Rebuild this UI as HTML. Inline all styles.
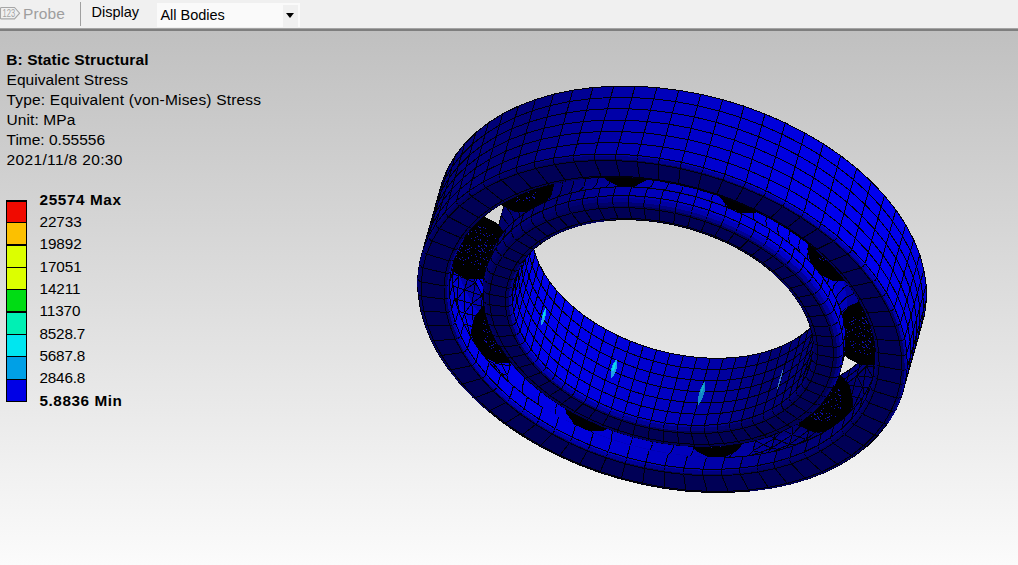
<!DOCTYPE html>
<html><head><meta charset="utf-8"><title>B: Static Structural - Equivalent Stress</title>
<style>
html,body{margin:0;padding:0;}
body{width:1018px;height:565px;overflow:hidden;position:relative;background:#fbfbfb;font-family:"Liberation Sans",sans-serif;}
#tb{position:absolute;left:0;top:0;width:1018px;height:28px;background:#f0f0f0;}
#tbl1{position:absolute;left:0;top:28px;width:1018px;height:1px;background:#a4a4a4;}
#tbl2{position:absolute;left:0;top:29px;width:1018px;height:2px;background:#7e7e7e;}
#vp{position:absolute;left:0;top:31px;width:1018px;height:534px;background:linear-gradient(to bottom,#c0c0c0 0%,#fbfbfb 100%);}
.t{position:absolute;white-space:nowrap;color:#000;font-size:15.5px;line-height:20px;}
.b{font-weight:bold;}
#probe{left:23px;top:3.6px;color:#9e9e9e;font-size:15.5px;letter-spacing:0.15px}
#sep{position:absolute;left:80.4px;top:2px;width:1px;height:24px;background:#a0a0a0;}
#disp{left:91.5px;top:2.3px;font-size:14.5px;}
#dd{position:absolute;left:157px;top:3px;width:143px;height:24px;background:#fafafa;}
#ddb{position:absolute;left:283px;top:5px;width:15px;height:22px;background:#f0f0f0;}
#ddt{left:160.4px;top:5.4px;font-size:14.5px;}
#arrow{position:absolute;left:286px;top:13px;width:0;height:0;border-left:4.5px solid transparent;border-right:4.5px solid transparent;border-top:5px solid #000;}
#lg{position:absolute;left:6px;top:200px;width:21px;height:202px;background:#000;}
#lg div{position:absolute;left:1px;width:19px;}
.l{left:39.5px;font-size:15.3px}
</style></head><body>
<div id="tb"></div><div id="tbl1"></div><div id="tbl2"></div><div id="vp"></div>
<svg style="position:absolute;left:0;top:6px" width="22" height="15" viewBox="0 0 22 15"><path d="M0.5 12.9 V2.5 Q0.5 1.5 1.5 1.5 H14.5 L19.6 7.2 L14.5 12.9 H1.5 Q0.5 12.9 0.5 11.9" fill="none" stroke="#a6a6a6" stroke-width="1.1"/><text x="2.6" y="11" font-size="10.5" fill="#a3a3a3" font-family="Liberation Sans, sans-serif" textLength="12.5" lengthAdjust="spacingAndGlyphs">123</text></svg>
<div class="t" id="probe">Probe</div><div id="sep"></div>
<div class="t" id="disp">Display</div><div id="dd"></div><div id="ddb"></div><div class="t" id="ddt">All Bodies</div><div id="arrow"></div>
<div class="t b" style="left:6.2px;top:50.2px;letter-spacing:0.1px">B: Static Structural</div>
<div class="t" style="left:6.5px;top:70.2px;letter-spacing:0.05px">Equivalent Stress</div>
<div class="t" style="left:6.5px;top:90.2px;letter-spacing:0.19px">Type: Equivalent (von-Mises) Stress</div>
<div class="t" style="left:6.5px;top:110.2px;letter-spacing:0.09px">Unit: MPa</div>
<div class="t" style="left:6.5px;top:130.2px">Time: 0.55556</div>
<div class="t" style="left:6.5px;top:150.2px;letter-spacing:0.36px">2021/11/8 20:30</div>
<div id="lg"><div style="top:2.4px;height:19.8px;background:#f00a00"></div><div style="top:23.2px;height:21.3px;background:#fcc000"></div><div style="top:45.5px;height:21.4px;background:#dcff00"></div><div style="top:67.9px;height:21.3px;background:#dcff00"></div><div style="top:90.2px;height:21.3px;background:#00dc14"></div><div style="top:112.5px;height:21.4px;background:#00f0b4"></div><div style="top:134.9px;height:21.3px;background:#00e6f0"></div><div style="top:157.3px;height:21.3px;background:#00a0e6"></div><div style="top:179.6px;height:21.4px;background:#0000e6"></div></div>
<div class="t l b" style="top:189.5px;letter-spacing:0.62px">25574 Max</div>
<div class="t l" style="top:211.8px;letter-spacing:-0.10px">22733</div>
<div class="t l" style="top:234.2px;letter-spacing:-0.10px">19892</div>
<div class="t l" style="top:256.6px;letter-spacing:-0.10px">17051</div>
<div class="t l" style="top:278.9px;letter-spacing:-0.10px">14211</div>
<div class="t l" style="top:301.2px;letter-spacing:-0.10px">11370</div>
<div class="t l" style="top:323.6px;letter-spacing:-0.20px">8528.7</div>
<div class="t l" style="top:346.0px;letter-spacing:-0.20px">5687.8</div>
<div class="t l" style="top:368.3px;letter-spacing:-0.20px">2846.8</div>
<div class="t l b" style="top:390.6px;letter-spacing:0.55px">5.8836 Min</div>
<svg id="model" width="1018" height="565" viewBox="0 0 1018 565" style="position:absolute;left:0;top:0">
<defs><pattern id="sp" width="24" height="24" patternUnits="userSpaceOnUse"><rect width="24" height="24" fill="#000"/><path d="M0,0h1M0,11h1M0,14h1M0,17h1M0,23h1M1,5h1M1,8h1M2,9h1M2,10h1M3,11h1M3,18h1M4,4h1M4,8h1M4,19h1M5,2h1M5,5h1M5,12h1M6,5h1M6,6h1M6,17h1M7,0h1M7,20h1M9,10h1M9,19h1M10,5h1M11,9h1M11,12h1M12,9h1M12,17h1M12,18h1M13,5h1M13,8h1M13,11h1M15,7h1M15,15h1M15,22h1M18,0h1M19,8h1M19,14h1M19,21h1M20,16h1M21,20h1M22,5h1M22,6h1M22,10h1M22,23h1M23,6h1M23,11h1" transform="translate(0,0.5)" stroke="#1010b0" stroke-width="1"/></pattern></defs><style>#model .k{fill:#000;stroke:#000}#model .kp{fill:url(#sp);stroke:none}#model .e{fill:none}</style>
<g stroke="#000008" stroke-width="1" stroke-linejoin="round" shape-rendering="crispEdges">
<path fill="#0000d0" d="M644,397.1 646.1,389.6 627.4,383.8 625.3,391.3Z"/>
<path fill="#0000ca" d="M663,401.7 665.1,394.2 646.1,389.6 644,397.1Z"/>
<path fill="#0000d5" d="M625.3,391.3 627.4,383.8 609.1,377.1 607,384.6Z"/>
<path fill="#0000c3" d="M682.1,405.2 684.2,397.7 665.1,394.2 663,401.7Z"/>
<path fill="#0000db" d="M607,384.6 609.1,377.1 591.5,369.3 589.3,376.8Z"/>
<path fill="#0000bb" d="M701.2,407.6 703.3,400.1 684.2,397.7 682.1,405.2Z"/>
<path fill="#0000d0" d="M641.9,404.6 644,397.1 625.3,391.3 623.2,398.8Z"/>
<path fill="#0000ca" d="M660.8,409.2 663,401.7 644,397.1 641.9,404.6Z"/>
<path fill="#0000e1" d="M589.3,376.8 591.5,369.3 574.5,360.6 572.4,368.1Z"/>
<path fill="#0000d5" d="M623.2,398.8 625.3,391.3 607,384.6 604.9,392.1Z"/>
<path fill="#0000c3" d="M680,412.7 682.1,405.2 663,401.7 660.8,409.2Z"/>
<path fill="#0000b2" d="M720.1,408.8 722.2,401.3 703.3,400.1 701.2,407.6Z"/>
<path fill="#000097" stroke="#000097" d="M638.4,417.3 641.9,404.6 623.2,398.8 618.8,411.3Z"/>
<path class="e" d="M638.4,417.3L641.9,404.6M641.9,404.6L623.2,398.8M623.2,398.8L618.8,411.3"/>
<path fill="#000093" stroke="#000093" d="M658.2,422.2 660.8,409.2 641.9,404.6 638.4,417.3Z"/>
<path class="e" d="M658.2,422.2L660.8,409.2M660.8,409.2L641.9,404.6M641.9,404.6L638.4,417.3"/>
<path fill="#0000bc" stroke="#0000bc" d="M634.9,429.7 638.4,417.3 618.8,411.3 614.9,423.6Z"/>
<path class="e" d="M634.9,429.7L638.4,417.3M618.8,411.3L614.9,423.6"/>
<path fill="#0000b6" stroke="#0000b6" d="M655.2,434.6 658.2,422.2 638.4,417.3 634.9,429.7Z"/>
<path class="e" d="M655.2,434.6L658.2,422.2M638.4,417.3L634.9,429.7"/>
<path fill="#00009a" stroke="#00009a" d="M618.8,411.3 623.2,398.8 604.9,392.1 599.7,404.3Z"/>
<path class="e" d="M618.8,411.3L623.2,398.8M623.2,398.8L604.9,392.1M604.9,392.1L599.7,404.3"/>
<path fill="#0000db" d="M604.9,392.1 607,384.6 589.3,376.8 587.2,384.3Z"/>
<path fill="#00008e" stroke="#00008e" d="M678.2,425.8 680,412.7 660.8,409.2 658.2,422.2Z"/>
<path class="e" d="M678.2,425.8L680,412.7M680,412.7L660.8,409.2M660.8,409.2L658.2,422.2"/>
<path fill="#0000bb" d="M699.1,415.1 701.2,407.6 682.1,405.2 680,412.7Z"/>
<path fill="#0000c1" stroke="#0000c1" d="M614.9,423.6 618.8,411.3 599.7,404.3 595.4,416.3Z"/>
<path class="e" d="M614.9,423.6L618.8,411.3M599.7,404.3L595.4,416.3"/>
<path fill="#0000b0" stroke="#0000b0" d="M675.7,438.4 678.2,425.8 658.2,422.2 655.2,434.6Z"/>
<path class="e" d="M675.7,438.4L678.2,425.8M658.2,422.2L655.2,434.6"/>
<path fill="#0000e6" d="M572.4,368.1 574.5,360.6 558.4,351.1 556.3,358.6Z"/>
<path fill="#00009f" stroke="#00009f" d="M599.7,404.3 604.9,392.1 587.2,384.3 581.3,396.2Z"/>
<path class="e" d="M599.7,404.3L604.9,392.1M604.9,392.1L587.2,384.3M587.2,384.3L581.3,396.2"/>
<path fill="#000088" stroke="#000088" d="M698.1,428.3 699.1,415.1 680,412.7 678.2,425.8Z"/>
<path class="e" d="M698.1,428.3L699.1,415.1M699.1,415.1L680,412.7M680,412.7L678.2,425.8"/>
<path fill="#0000c7" stroke="#0000c7" d="M595.4,416.3 599.7,404.3 581.3,396.2 576.5,408Z"/>
<path class="e" d="M595.4,416.3L599.7,404.3M581.3,396.2L576.5,408"/>
<path fill="#0000e1" d="M587.2,384.3 589.3,376.8 572.4,368.1 570.3,375.6Z"/>
<path fill="#0000a8" d="M738.7,408.8 740.8,401.3 722.2,401.3 720.1,408.8Z"/>
<path fill="#0000a8" stroke="#0000a8" d="M696.1,440.9 698.1,428.3 678.2,425.8 675.7,438.4Z"/>
<path class="e" d="M696.1,440.9L698.1,428.3M678.2,425.8L675.7,438.4"/>
<path fill="#0000b2" d="M718,416.3 720.1,408.8 701.2,407.6 699.1,415.1Z"/>
<path fill="#0000d0" stroke="#0000d0" d="M632.1,439.6 634.9,429.7 614.9,423.6 612.1,433.4Z"/>
<path class="e" d="M632.1,439.6L634.9,429.7M614.9,423.6L612.1,433.4"/>
<path fill="#0000ca" stroke="#0000ca" d="M652.4,444.5 655.2,434.6 634.9,429.7 632.1,439.6Z"/>
<path class="e" d="M652.4,444.5L655.2,434.6M634.9,429.7L632.1,439.6"/>
<path fill="#0000a4" stroke="#0000a4" d="M581.3,396.2 587.2,384.3 570.3,375.6 563.6,387.1Z"/>
<path class="e" d="M581.3,396.2L587.2,384.3M587.2,384.3L570.3,375.6M570.3,375.6L563.6,387.1"/>
<path fill="#0000d5" stroke="#0000d5" d="M612.1,433.4 614.9,423.6 595.4,416.3 592.6,426.2Z"/>
<path class="e" d="M612.1,433.4L614.9,423.6M595.4,416.3L592.6,426.2"/>
<path fill="#000082" stroke="#000082" d="M717.9,429.6 718,416.3 699.1,415.1 698.1,428.3Z"/>
<path class="e" d="M717.9,429.6L718,416.3M718,416.3L699.1,415.1M699.1,415.1L698.1,428.3"/>
<path fill="#0000c3" stroke="#0000c3" d="M672.9,448.3 675.7,438.4 655.2,434.6 652.4,444.5Z"/>
<path class="e" d="M672.9,448.3L675.7,438.4M655.2,434.6L652.4,444.5"/>
<path fill="#0000cc" stroke="#0000cc" d="M576.5,408 581.3,396.2 563.6,387.1 558.4,398.7Z"/>
<path class="e" d="M576.5,408L581.3,396.2M563.6,387.1L558.4,398.7"/>
<path fill="#0000ea" d="M556.3,358.6 558.4,351.1 543.3,340.8 541.2,348.3Z"/>
<path fill="#0000a0" stroke="#0000a0" d="M716.3,442.2 717.9,429.6 698.1,428.3 696.1,440.9Z"/>
<path class="e" d="M716.3,442.2L717.9,429.6M698.1,428.3L696.1,440.9"/>
<path fill="#0000e6" d="M570.3,375.6 572.4,368.1 556.3,358.6 554.2,366.1Z"/>
<path fill="#0000db" stroke="#0000db" d="M592.6,426.2 595.4,416.3 576.5,408 573.7,417.9Z"/>
<path class="e" d="M592.6,426.2L595.4,416.3M576.5,408L573.7,417.9"/>
<path fill="#0000a8" d="M736.6,416.3 738.7,408.8 720.1,408.8 718,416.3Z"/>
<path fill="#00009e" d="M756.8,407.6 758.9,400.1 740.8,401.3 738.7,408.8Z"/>
<path fill="#0000bb" stroke="#0000bb" d="M693.3,450.8 696.1,440.9 675.7,438.4 672.9,448.3Z"/>
<path class="e" d="M693.3,450.8L696.1,440.9M675.7,438.4L672.9,448.3"/>
<path fill="#0000a7" stroke="#0000a7" d="M563.6,387.1 570.3,375.6 554.2,366.1 546.7,377.1Z"/>
<path class="e" d="M563.6,387.1L570.3,375.6M570.3,375.6L554.2,366.1M554.2,366.1L546.7,377.1"/>
<path fill="#0000d1" stroke="#0000d1" d="M558.4,398.7 563.6,387.1 546.7,377.1 541.2,388.6Z"/>
<path class="e" d="M558.4,398.7L563.6,387.1M546.7,377.1L541.2,388.6"/>
<path fill="#00007c" stroke="#00007c" d="M737.3,429.6 736.6,416.3 718,416.3 717.9,429.6Z"/>
<path class="e" d="M737.3,429.6L736.6,416.3M736.6,416.3L718,416.3M718,416.3L717.9,429.6"/>
<path fill="#0000e1" stroke="#0000e1" d="M573.7,417.9 576.5,408 558.4,398.7 555.6,408.6Z"/>
<path class="e" d="M573.7,417.9L576.5,408M558.4,398.7L555.6,408.6"/>
<path fill="#000098" stroke="#000098" d="M736.2,442.2 737.3,429.6 717.9,429.6 716.3,442.2Z"/>
<path class="e" d="M736.2,442.2L737.3,429.6M717.9,429.6L716.3,442.2"/>
<path fill="#0000b2" stroke="#0000b2" d="M713.5,452.1 716.3,442.2 696.1,440.9 693.3,450.8Z"/>
<path class="e" d="M713.5,452.1L716.3,442.2M696.1,440.9L693.3,450.8"/>
<path fill="#0000ea" d="M554.2,366.1 556.3,358.6 541.2,348.3 539.1,355.8Z"/>
<path fill="#0000cf" stroke="#0000cf" d="M630.4,445.3 632.1,439.6 612.1,433.4 610.9,439.3Z"/>
<path class="e" d="M630.4,445.3L632.1,439.6M612.1,433.4L610.9,439.3"/>
<path fill="#0000ca" stroke="#0000ca" d="M650.3,450.1 652.4,444.5 632.1,439.6 630.4,445.3Z"/>
<path class="e" d="M650.3,450.1L652.4,444.5M632.1,439.6L630.4,445.3"/>
<path fill="#0000ed" d="M541.2,348.3 543.3,340.8 529.3,329.8 527.2,337.3Z"/>
<path fill="#00009e" d="M754.7,415.1 756.8,407.6 738.7,408.8 736.6,416.3Z"/>
<path fill="#0000d4" stroke="#0000d4" d="M610.9,439.3 612.1,433.4 592.6,426.2 591.8,432.2Z"/>
<path class="e" d="M610.9,439.3L612.1,433.4M592.6,426.2L591.8,432.2"/>
<path fill="#0000c3" stroke="#0000c3" d="M670.3,453.8 672.9,448.3 652.4,444.5 650.3,450.1Z"/>
<path class="e" d="M670.3,453.8L672.9,448.3M652.4,444.5L650.3,450.1"/>
<path fill="#0000aa" stroke="#0000aa" d="M546.7,377.1 554.2,366.1 539.1,355.8 531,366.4Z"/>
<path class="e" d="M546.7,377.1L554.2,366.1M554.2,366.1L539.1,355.8M539.1,355.8L531,366.4"/>
<path fill="#000093" d="M774.3,405.3 776.4,397.8 758.9,400.1 756.8,407.6Z"/>
<path fill="#0000e6" stroke="#0000e6" d="M555.6,408.6 558.4,398.7 541.2,388.6 538.4,398.4Z"/>
<path class="e" d="M555.6,408.6L558.4,398.7M541.2,388.6L538.4,398.4"/>
<path fill="#0000d5" stroke="#0000d5" d="M541.2,388.6 546.7,377.1 531,366.4 525,377.5Z"/>
<path class="e" d="M541.2,388.6L546.7,377.1M531,366.4L525,377.5"/>
<path fill="#000075" stroke="#000075" d="M756.3,428.4 754.7,415.1 736.6,416.3 737.3,429.6Z"/>
<path class="e" d="M756.3,428.4L754.7,415.1M754.7,415.1L736.6,416.3M736.6,416.3L737.3,429.6"/>
<path fill="#0000d9" stroke="#0000d9" d="M591.8,432.2 592.6,426.2 573.7,417.9 573.4,424.1Z"/>
<path class="e" d="M591.8,432.2L592.6,426.2M573.7,417.9L573.4,424.1"/>
<path fill="#0000bc" stroke="#0000bc" d="M690.2,456.3 693.3,450.8 672.9,448.3 670.3,453.8Z"/>
<path class="e" d="M690.2,456.3L693.3,450.8M672.9,448.3L670.3,453.8"/>
<path fill="#0000a8" stroke="#0000a8" d="M733.4,452.1 736.2,442.2 716.3,442.2 713.5,452.1Z"/>
<path class="e" d="M733.4,452.1L736.2,442.2M716.3,442.2L713.5,452.1"/>
<path fill="#00008e" stroke="#00008e" d="M755.6,441 756.3,428.4 737.3,429.6 736.2,442.2Z"/>
<path class="e" d="M755.6,441L756.3,428.4M737.3,429.6L736.2,442.2"/>
<path fill="#0000ed" d="M539.1,355.8 541.2,348.3 527.2,337.3 525.1,344.8Z"/>
<path fill="#0000df" stroke="#0000df" d="M573.4,424.1 573.7,417.9 555.6,408.6 555.6,415.1Z"/>
<path class="e" d="M573.4,424.1L573.7,417.9M555.6,408.6L555.6,415.1"/>
<path fill="#000093" d="M772.2,412.8 774.3,405.3 756.8,407.6 754.7,415.1Z"/>
<path fill="#0000ef" d="M527.2,337.3 529.3,329.8 516.6,318.2 514.5,325.7Z"/>
<path fill="#0000b4" stroke="#0000b4" d="M710,457.5 713.5,452.1 693.3,450.8 690.2,456.3Z"/>
<path class="e" d="M710,457.5L713.5,452.1M693.3,450.8L690.2,456.3"/>
<path fill="#0000ac" stroke="#0000ac" d="M531,366.4 539.1,355.8 525.1,344.8 516.4,354.9Z"/>
<path class="e" d="M531,366.4L539.1,355.8M539.1,355.8L525.1,344.8M525.1,344.8L516.4,354.9"/>
<path fill="#000056" d="M621.1,479.1 621.4,478.1 600.3,471.7 599.8,472.6Z"/>
<path fill="#000056" d="M642.7,484.4 642.8,483.3 621.4,478.1 621.1,479.1Z"/>
<path fill="#0000ea" stroke="#0000ea" d="M538.4,398.4 541.2,388.6 525,377.5 522.2,387.4Z"/>
<path class="e" d="M538.4,398.4L541.2,388.6M525,377.5L522.2,387.4"/>
<path fill="#000056" d="M599.8,472.6 600.3,471.7 579.7,464 579.1,464.9Z"/>
<path fill="#000088" d="M791.1,401.8 793.2,394.3 776.4,397.8 774.3,405.3Z"/>
<path fill="#0000d7" stroke="#0000d7" d="M525,377.5 531,366.4 516.4,354.9 510.1,365.8Z"/>
<path class="e" d="M525,377.5L531,366.4M516.4,354.9L510.1,365.8"/>
<path fill="#000056" d="M664.5,488.4 664.3,487.3 642.8,483.3 642.7,484.4Z"/>
<path fill="#00006e" stroke="#00006e" d="M774.6,425.9 772.2,412.8 754.7,415.1 756.3,428.4Z"/>
<path class="e" d="M774.6,425.9L772.2,412.8M772.2,412.8L754.7,415.1M754.7,415.1L756.3,428.4M774.6,425.9L754.7,415.1M772.2,412.8L756.3,428.4"/>
<path fill="#00009e" stroke="#00009e" d="M752.8,450.8 755.6,441 736.2,442.2 733.4,452.1Z"/>
<path class="e" d="M752.8,450.8L755.6,441M736.2,442.2L733.4,452.1"/>
<path fill="#0000bb" stroke="#0000bb" d="M630.1,445.9 630.4,445.3 610.9,439.3 611.4,440.2Z"/>
<path class="e" d="M630.1,445.9L630.4,445.3M610.9,439.3L611.4,440.2"/>
<path fill="#0000b6" stroke="#0000b6" d="M649.1,450.6 650.3,450.1 630.4,445.3 630.1,445.9Z"/>
<path class="e" d="M649.1,450.6L650.3,450.1M630.4,445.3L630.1,445.9"/>
<path fill="#0000e3" stroke="#0000e3" d="M555.6,415.1 555.6,408.6 538.4,398.4 538.8,405.1Z"/>
<path class="e" d="M555.6,415.1L555.6,408.6M538.4,398.4L538.8,405.1"/>
<path fill="#0000be" stroke="#0000be" d="M611.4,440.2 610.9,439.3 591.8,432.2 593.2,433.4Z"/>
<path class="e" d="M611.4,440.2L610.9,439.3M591.8,432.2L593.2,433.4"/>
<path fill="#000084" stroke="#000084" d="M774.3,438.5 774.6,425.9 756.3,428.4 755.6,441Z"/>
<path class="e" d="M774.3,438.5L774.6,425.9M756.3,428.4L755.6,441M774.3,438.5L756.3,428.4M774.6,425.9L755.6,441"/>
<path fill="#000056" d="M579.1,464.9 579.7,464 559.8,455.3 558.9,456Z"/>
<path fill="#0000b2" stroke="#0000b2" d="M668.2,454.1 670.3,453.8 650.3,450.1 649.1,450.6Z"/>
<path class="e" d="M668.2,454.1L670.3,453.8M650.3,450.1L649.1,450.6"/>
<path fill="#0000ab" stroke="#0000ab" d="M729.4,457.5 733.4,452.1 713.5,452.1 710,457.5Z"/>
<path class="e" d="M729.4,457.5L733.4,452.1M713.5,452.1L710,457.5"/>
<path fill="#000056" d="M686.2,491.1 685.9,490 664.3,487.3 664.5,488.4Z"/>
<path fill="#0000ef" d="M525.1,344.8 527.2,337.3 514.5,325.7 512.4,333.2Z"/>
<path fill="#0000c1" stroke="#0000c1" d="M593.2,433.4 591.8,432.2 573.4,424.1 575.5,425.7Z"/>
<path class="e" d="M593.2,433.4L591.8,432.2M573.4,424.1L575.5,425.7"/>
<path fill="#0000ac" stroke="#0000ac" d="M687.3,456.4 690.2,456.3 670.3,453.8 668.2,454.1Z"/>
<path class="e" d="M687.3,456.4L690.2,456.3M670.3,453.8L668.2,454.1"/>
<path fill="#000088" d="M788.9,409.3 791.1,401.8 774.3,405.3 772.2,412.8Z"/>
<path fill="#0000ed" stroke="#0000ed" d="M522.2,387.4 525,377.5 510.1,365.8 507.3,375.6Z"/>
<path class="e" d="M522.2,387.4L525,377.5M510.1,365.8L507.3,375.6"/>
<path fill="#000056" d="M558.9,456 559.8,455.3 540.7,445.5 539.7,446.2Z"/>
<path fill="#0000ad" stroke="#0000ad" d="M516.4,354.9 525.1,344.8 512.4,333.2 503,342.8Z"/>
<path class="e" d="M516.4,354.9L525.1,344.8M525.1,344.8L512.4,333.2M512.4,333.2L503,342.8M516.4,354.9L512.4,333.2M525.1,344.8L503,342.8"/>
<path fill="#0000ef" d="M514.5,325.7 516.6,318.2 505.2,306.1 503.1,313.6Z"/>
<path fill="#000056" d="M707.8,492.4 707.2,491.3 685.9,490 686.2,491.1Z"/>
<path fill="#000056" d="M621.4,478.1 625.2,463.8 606.1,457.9 600.3,471.7Z"/>
<path fill="#000056" d="M642.8,483.3 644.5,468.5 625.2,463.8 621.4,478.1Z"/>
<path fill="#0000e7" stroke="#0000e7" d="M538.8,405.1 538.4,398.4 522.2,387.4 523.1,394.3Z"/>
<path class="e" d="M538.8,405.1L538.4,398.4M522.2,387.4L523.1,394.3M523.1,394.3L538.8,405.1"/>
<path fill="#0000c5" stroke="#0000c5" d="M575.5,425.7 573.4,424.1 555.6,415.1 558.6,417Z"/>
<path class="e" d="M575.5,425.7L573.4,424.1M555.6,415.1L558.6,417"/>
<path fill="#000093" stroke="#000093" d="M771.5,448.3 774.3,438.5 755.6,441 752.8,450.8Z"/>
<path class="e" d="M771.5,448.3L774.3,438.5M755.6,441L752.8,450.8M771.5,448.3L755.6,441M774.3,438.5L752.8,450.8"/>
<path fill="#0000d9" stroke="#0000d9" d="M510.1,365.8 516.4,354.9 503,342.8 496.4,353.4Z"/>
<path class="e" d="M510.1,365.8L516.4,354.9M503,342.8L496.4,353.4M510.1,365.8L503,342.8M516.4,354.9L496.4,353.4"/>
<path fill="#000067" stroke="#000067" d="M792,422.3 788.9,409.3 772.2,412.8 774.6,425.9Z"/>
<path class="e" d="M792,422.3L788.9,409.3M788.9,409.3L772.2,412.8M772.2,412.8L774.6,425.9M792,422.3L772.2,412.8M788.9,409.3L774.6,425.9"/>
<path fill="#000056" d="M600.3,471.7 606.1,457.9 587.4,451 579.7,464Z"/>
<path fill="#00007c" d="M806.9,397.2 809,389.7 793.2,394.3 791.1,401.8Z"/>
<path fill="#0000a6" stroke="#0000a6" d="M706.3,457.6 710,457.5 690.2,456.3 687.3,456.4Z"/>
<path class="e" d="M706.3,457.6L710,457.5M690.2,456.3L687.3,456.4"/>
<path fill="#000056" d="M664.3,487.3 664.1,472.1 644.5,468.5 642.8,483.3Z"/>
<path fill="#0000a2" stroke="#0000a2" d="M748.4,456.3 752.8,450.8 733.4,452.1 729.4,457.5Z"/>
<path class="e" d="M748.4,456.3L752.8,450.8M733.4,452.1L729.4,457.5M729.4,457.5L748.4,456.3"/>
<path fill="#00007a" stroke="#00007a" d="M792.2,434.7 792,422.3 774.6,425.9 774.3,438.5Z"/>
<path class="e" d="M792.2,434.7L792,422.3M774.6,425.9L774.3,438.5M792.2,434.7L774.6,425.9M792,422.3L774.3,438.5"/>
<path fill="#000056" d="M579.7,464 587.4,451 569.4,443.1 559.8,455.3Z"/>
<path class="k" d="M627.5,399.4 624.3,413.3 622.1,412.3 625.1,399.4Z"/>
<path class="k" d="M624.3,413.3 615.4,424.5 613.9,422.6 622.1,412.3Z"/>
<path class="k" d="M615.4,424.5 602.6,430.6 602.1,428.3 613.9,422.6Z"/>
<path class="k" d="M602.6,430.6 588.4,430.6 588.9,428.3 602.1,428.3Z"/>
<path class="k" d="M588.4,430.6 575.5,424.5 577.1,422.6 588.9,428.3Z"/>
<path class="k" d="M575.5,424.5 566.7,413.3 568.9,412.3 577.1,422.6Z"/>
<path class="k" d="M566.7,413.3 563.5,399.4 565.9,399.4 568.9,412.3Z"/>
<path class="k" d="M563.5,399.4 566.7,385.6 568.9,386.6 565.9,399.4Z"/>
<path class="k" d="M566.7,385.6 575.5,374.4 577.1,376.3 568.9,386.6Z"/>
<path class="k" d="M575.5,374.4 588.4,368.2 588.9,370.6 577.1,376.3Z"/>
<path class="k" d="M588.4,368.2 602.6,368.2 602.1,370.6 588.9,370.6Z"/>
<path class="k" d="M602.6,368.2 615.4,374.4 613.9,376.3 602.1,370.6Z"/>
<path class="k" d="M615.4,374.4 624.3,385.6 622.1,386.6 613.9,376.3Z"/>
<path class="k" d="M624.3,385.6 627.5,399.4 625.1,399.4 622.1,386.6Z"/>
<path fill="#000057" d="M539.7,446.2 540.7,445.5 522.5,434.8 521.3,435.3Z"/>
<path fill="#0000d0" stroke="#0000d0" d="M626.9,457.5 630.1,445.9 611.4,440.2 608.2,451.8Z"/>
<path class="e" d="M626.9,457.5L630.1,445.9M611.4,440.2L608.2,451.8M608.2,451.8L626.9,457.5"/>
<path fill="#0000d0" d="M653.4,361.1 656.5,350 643.3,345.9 640.2,357.1Z"/>
<path fill="#0000ca" stroke="#0000ca" d="M645.9,462.1 649.1,450.6 630.1,445.9 626.9,457.5Z"/>
<path class="e" d="M645.9,462.1L649.1,450.6M630.1,445.9L626.9,457.5M626.9,457.5L645.9,462.1"/>
<path fill="#0000ca" d="M666.8,364.4 670,353.2 656.5,350 653.4,361.1Z"/>
<path fill="#000056" d="M685.9,490 683.6,474.5 664.1,472.1 664.3,487.3Z"/>
<path fill="#0000ef" d="M512.4,333.2 514.5,325.7 503.1,313.6 500.9,321.1Z"/>
<path fill="#0000d5" d="M640.2,357.1 643.3,345.9 630.4,341.1 627.3,352.3Z"/>
<path fill="#0000d5" stroke="#0000d5" d="M608.2,451.8 611.4,440.2 593.2,433.4 589.9,445Z"/>
<path class="e" d="M608.2,451.8L611.4,440.2M593.2,433.4L589.9,445M589.9,445L608.2,451.8"/>
<path fill="#0000c9" stroke="#0000c9" d="M558.6,417 555.6,415.1 538.8,405.1 542.5,407.5Z"/>
<path class="e" d="M558.6,417L555.6,415.1M538.8,405.1L542.5,407.5"/>
<path fill="#0000c3" d="M680.3,366.9 683.5,355.7 670,353.2 666.8,364.4Z"/>
<path fill="#000056" d="M728.9,492.4 728.2,491.3 707.2,491.3 707.8,492.4Z"/>
<path fill="#0000c3" stroke="#0000c3" d="M665,465.7 668.2,454.1 649.1,450.6 645.9,462.1Z"/>
<path class="e" d="M665,465.7L668.2,454.1M649.1,450.6L645.9,462.1M645.9,462.1L665,465.7"/>
<path fill="#0000db" d="M627.3,352.3 630.4,341.1 617.9,335.7 614.8,346.8Z"/>
<path fill="#0000a0" stroke="#0000a0" d="M724.9,457.7 729.4,457.5 710,457.5 706.3,457.6Z"/>
<path class="e" d="M724.9,457.7L729.4,457.5M710,457.5L706.3,457.6"/>
<path fill="#0000ef" stroke="#0000ef" d="M507.3,375.6 510.1,365.8 496.4,353.4 493.6,363.2Z"/>
<path class="e" d="M507.3,375.6L510.1,365.8M496.4,353.4L493.6,363.2M507.3,375.6L496.4,353.4M510.1,365.8L493.6,363.2"/>
<path fill="#0000bb" d="M693.8,368.6 697,357.4 683.5,355.7 680.3,366.9Z"/>
<path fill="#00007c" d="M804.8,404.7 806.9,397.2 791.1,401.8 788.9,409.3Z"/>
<path fill="#000056" d="M559.8,455.3 569.4,443.1 552.1,434.2 540.7,445.5Z"/>
<path fill="#0000db" stroke="#0000db" d="M589.9,445 593.2,433.4 575.5,425.7 572.2,437.3Z"/>
<path class="e" d="M589.9,445L593.2,433.4M575.5,425.7L572.2,437.3M572.2,437.3L589.9,445"/>
<path fill="#0000ea" stroke="#0000ea" d="M523.1,394.3 522.2,387.4 507.3,375.6 508.4,382.8Z"/>
<path class="e" d="M523.1,394.3L522.2,387.4M507.3,375.6L508.4,382.8M508.4,382.8L523.1,394.3"/>
<path fill="#0000ad" stroke="#0000ad" d="M503,342.8 512.4,333.2 500.9,321.1 491.1,330.1Z"/>
<path class="e" d="M503,342.8L512.4,333.2M512.4,333.2L500.9,321.1M500.9,321.1L491.1,330.1M503,342.8L500.9,321.1M512.4,333.2L491.1,330.1"/>
<path fill="#0000bb" stroke="#0000bb" d="M684.1,468 687.3,456.4 668.2,454.1 665,465.7Z"/>
<path class="e" d="M684.1,468L687.3,456.4M668.2,454.1L665,465.7M665,465.7L684.1,468"/>
<path fill="#000056" d="M707.2,491.3 702.9,475.7 683.6,474.5 685.9,490Z"/>
<path fill="#00005e" stroke="#00005e" d="M625.2,463.8 625.7,461.9 606.8,456.1 606.1,457.9Z"/>
<path class="e" d="M625.2,463.8L625.7,461.9M606.8,456.1L606.1,457.9M606.1,457.9L625.2,463.8"/>
<path fill="#0000ee" d="M503.1,313.6 505.2,306.1 495.2,293.6 493,301Z"/>
<path fill="#00005c" stroke="#00005c" d="M644.5,468.5 644.8,466.6 625.7,461.9 625.2,463.8Z"/>
<path class="e" d="M644.5,468.5L644.8,466.6M625.7,461.9L625.2,463.8M625.2,463.8L644.5,468.5"/>
<path fill="#0000e1" d="M614.8,346.8 617.9,335.7 606,329.5 602.8,340.7Z"/>
<path fill="#0000c5" stroke="#0000c5" d="M626.3,459.6 626.9,457.5 608.2,451.8 607.5,453.8Z"/>
<path class="e" d="M626.3,459.6L626.9,457.5M626.9,457.5L608.2,451.8M608.2,451.8L607.5,453.8"/>
<path fill="#000088" stroke="#000088" d="M789.4,444.6 792.2,434.7 774.3,438.5 771.5,448.3Z"/>
<path class="e" d="M789.4,444.6L792.2,434.7M774.3,438.5L771.5,448.3M789.4,444.6L774.3,438.5M792.2,434.7L771.5,448.3"/>
<path fill="#0000bf" stroke="#0000bf" d="M645.3,464.2 645.9,462.1 626.9,457.5 626.3,459.6Z"/>
<path class="e" d="M645.3,464.2L645.9,462.1M645.9,462.1L626.9,457.5M626.9,457.5L626.3,459.6"/>
<path fill="#00009b" stroke="#00009b" d="M625.7,461.9 626.3,459.6 607.5,453.8 606.8,456.1Z"/>
<path class="e" d="M625.7,461.9L626.3,459.6M607.5,453.8L606.8,456.1"/>
<path fill="#000098" stroke="#000098" d="M766.6,453.9 771.5,448.3 752.8,450.8 748.4,456.3Z"/>
<path class="e" d="M766.6,453.9L771.5,448.3M752.8,450.8L748.4,456.3M748.4,456.3L766.6,453.9M766.6,453.9L752.8,450.8M771.5,448.3L748.4,456.3"/>
<path fill="#000097" stroke="#000097" d="M644.8,466.6 645.3,464.2 626.3,459.6 625.7,461.9Z"/>
<path class="e" d="M644.8,466.6L645.3,464.2M626.3,459.6L625.7,461.9"/>
<path fill="#0000b2" d="M707.2,369.4 710.3,358.2 697,357.4 693.8,368.6Z"/>
<path fill="#000060" stroke="#000060" d="M606.1,457.9 606.8,456.1 588.3,449.3 587.4,451Z"/>
<path class="e" d="M606.1,457.9L606.8,456.1M588.3,449.3L587.4,451M587.4,451L606.1,457.9"/>
<path fill="#0000ca" stroke="#0000ca" d="M607.5,453.8 608.2,451.8 589.9,445 589.2,447.1Z"/>
<path class="e" d="M607.5,453.8L608.2,451.8M608.2,451.8L589.9,445M589.9,445L589.2,447.1"/>
<path fill="#00005b" stroke="#00005b" d="M664.1,472.1 664.2,470.1 644.8,466.6 644.5,468.5Z"/>
<path class="e" d="M664.1,472.1L664.2,470.1M644.8,466.6L644.5,468.5M644.5,468.5L664.1,472.1"/>
<path fill="#0000d9" stroke="#0000d9" d="M496.4,353.4 503,342.8 491.1,330.1 484.2,340.4Z"/>
<path class="e" d="M496.4,353.4L503,342.8M491.1,330.1L484.2,340.4M496.4,353.4L491.1,330.1M503,342.8L484.2,340.4"/>
<path fill="#000069" stroke="#000069" d="M808.6,417.4 804.8,404.7 788.9,409.3 792,422.3Z"/>
<path class="e" d="M808.6,417.4L804.8,404.7M804.8,404.7L788.9,409.3M788.9,409.3L792,422.3M808.6,417.4L788.9,409.3M804.8,404.7L792,422.3"/>
<path fill="#000057" d="M521.3,435.3 522.5,434.8 505.5,423.1 504.2,423.6Z"/>
<path fill="#00009f" stroke="#00009f" d="M606.8,456.1 607.5,453.8 589.2,447.1 588.3,449.3Z"/>
<path class="e" d="M606.8,456.1L607.5,453.8M589.2,447.1L588.3,449.3"/>
<path fill="#0000b9" stroke="#0000b9" d="M664.5,467.8 665,465.7 645.9,462.1 645.3,464.2Z"/>
<path class="e" d="M664.5,467.8L665,465.7M665,465.7L645.9,462.1M645.9,462.1L645.3,464.2"/>
<path fill="#00005c" d="M573.2,351.2 576.8,353.6 564.7,345.3 560.4,342.5Z"/>
<path fill="#0000e1" stroke="#0000e1" d="M572.2,437.3 575.5,425.7 558.6,417 555.3,428.6Z"/>
<path class="e" d="M572.2,437.3L575.5,425.7M558.6,417L555.3,428.6M555.3,428.6L572.2,437.3"/>
<path fill="#000091" stroke="#000091" d="M664.2,470.1 664.5,467.8 645.3,464.2 644.8,466.6Z"/>
<path class="e" d="M664.2,470.1L664.5,467.8M645.3,464.2L644.8,466.6"/>
<path fill="#000075" d="M821.7,391.5 823.8,384 809,389.7 806.9,397.2Z"/>
<path class="k" d="M748.7,425.8 745.5,439.7 743.3,438.6 746.2,425.8Z"/>
<path class="k" d="M745.5,439.7 736.6,450.8 735.1,448.9 743.3,438.6Z"/>
<path class="k" d="M736.6,450.8 723.8,457 723.2,454.6 735.1,448.9Z"/>
<path class="k" d="M723.8,457 709.5,457 710.1,454.6 723.2,454.6Z"/>
<path class="k" d="M709.5,457 696.7,450.8 698.2,448.9 710.1,454.6Z"/>
<path class="k" d="M696.7,450.8 687.8,439.7 690,438.6 698.2,448.9Z"/>
<path class="k" d="M687.8,439.7 684.7,425.8 687.1,425.8 690,438.6Z"/>
<path class="k" d="M684.7,425.8 687.8,411.9 690,413 687.1,425.8Z"/>
<path class="k" d="M687.8,411.9 696.7,400.8 698.2,402.7 690,413Z"/>
<path class="k" d="M696.7,400.8 709.5,394.6 710.1,397 698.2,402.7Z"/>
<path class="k" d="M709.5,394.6 723.8,394.6 723.2,397 710.1,397Z"/>
<path class="k" d="M723.8,394.6 736.6,400.8 735.1,402.7 723.2,397Z"/>
<path class="k" d="M736.6,400.8 745.5,411.9 743.3,413 735.1,402.7Z"/>
<path class="k" d="M745.5,411.9 748.7,425.8 746.2,425.8 743.3,413Z"/>
<path fill="#0000b2" stroke="#0000b2" d="M703,469.2 706.3,457.6 687.3,456.4 684.1,468Z"/>
<path class="e" d="M703,469.2L706.3,457.6M687.3,456.4L684.1,468M684.1,468L703,469.2"/>
<path fill="#000056" d="M742.8,392.7 737.4,392.8 722.9,393.8 727.5,393.7Z"/>
<path fill="#000062" stroke="#000062" d="M587.4,451 588.3,449.3 570.4,441.4 569.4,443.1Z"/>
<path class="e" d="M587.4,451L588.3,449.3M570.4,441.4L569.4,443.1M569.4,443.1L587.4,451"/>
<path fill="#0000e6" d="M602.8,340.7 606,329.5 594.6,322.8 591.4,334Z"/>
<path fill="#000056" d="M540.7,445.5 552.1,434.2 535.6,424.5 522.5,434.8Z"/>
<path fill="#000056" d="M749.5,491.1 748.6,490 728.2,491.3 728.9,492.4Z"/>
<path fill="#0000d0" stroke="#0000d0" d="M589.2,447.1 589.9,445 572.2,437.3 571.5,439.3Z"/>
<path class="e" d="M589.2,447.1L589.9,445M589.9,445L572.2,437.3M572.2,437.3L571.5,439.3"/>
<path fill="#0000a4" stroke="#0000a4" d="M588.3,449.3 589.2,447.1 571.5,439.3 570.4,441.4Z"/>
<path class="e" d="M588.3,449.3L589.2,447.1M571.5,439.3L570.4,441.4"/>
<path fill="#000070" stroke="#000070" d="M809.2,429.8 808.6,417.4 792,422.3 792.2,434.7Z"/>
<path class="e" d="M809.2,429.8L808.6,417.4M792,422.3L792.2,434.7M809.2,429.8L792,422.3M808.6,417.4L792.2,434.7"/>
<path fill="#000058" stroke="#000058" d="M683.6,474.5 683.5,472.5 664.2,470.1 664.1,472.1Z"/>
<path class="e" d="M683.6,474.5L683.5,472.5M664.2,470.1L664.1,472.1M664.1,472.1L683.6,474.5"/>
<path fill="#0000d0" d="M650.2,372.3 653.4,361.1 640.2,357.1 637,368.3Z"/>
<path fill="#0000ca" d="M663.6,375.6 666.8,364.4 653.4,361.1 650.2,372.3Z"/>
<path fill="#0000b1" stroke="#0000b1" d="M683.6,470.1 684.1,468 665,465.7 664.5,467.8Z"/>
<path class="e" d="M683.6,470.1L684.1,468M684.1,468L665,465.7M665,465.7L664.5,467.8"/>
<path fill="#0000a8" d="M720.3,369.4 723.5,358.2 710.3,358.2 707.2,369.4Z"/>
<path fill="#00008c" stroke="#00008c" d="M683.5,472.5 683.6,470.1 664.5,467.8 664.2,470.1Z"/>
<path class="e" d="M683.5,472.5L683.6,470.1M664.5,467.8L664.2,470.1"/>
<path fill="#0000d5" d="M637,368.3 640.2,357.1 627.3,352.3 624.1,363.5Z"/>
<path fill="#000056" d="M728.2,491.3 721.9,475.7 702.9,475.7 707.2,491.3Z"/>
<path class="k" d="M625.1,399.4 622.1,412.3 615.9,409.3 618.1,399.4Z"/>
<path class="k" d="M622.1,412.3 613.9,422.6 609.6,417.1 615.9,409.3Z"/>
<path class="k" d="M613.9,422.6 602.1,428.3 600.5,421.5 609.6,417.1Z"/>
<path class="k" d="M602.1,428.3 588.9,428.3 590.5,421.5 600.5,421.5Z"/>
<path class="k" d="M588.9,428.3 577.1,422.6 581.4,417.1 590.5,421.5Z"/>
<path class="k" d="M577.1,422.6 568.9,412.3 575.1,409.3 581.4,417.1Z"/>
<path class="k" d="M568.9,412.3 565.9,399.4 572.9,399.4 575.1,409.3Z"/>
<path class="k" d="M565.9,399.4 568.9,386.6 575.1,389.6 572.9,399.4Z"/>
<path class="k" d="M568.9,386.6 577.1,376.3 581.4,381.7 575.1,389.6Z"/>
<path class="k" d="M577.1,376.3 588.9,370.6 590.5,377.4 581.4,381.7Z"/>
<path class="k" d="M588.9,370.6 602.1,370.6 600.5,377.4 590.5,377.4Z"/>
<path class="k" d="M602.1,370.6 613.9,376.3 609.6,381.7 600.5,377.4Z"/>
<path class="k" d="M613.9,376.3 622.1,386.6 615.9,389.6 609.6,381.7Z"/>
<path class="k" d="M622.1,386.6 625.1,399.4 618.1,399.4 615.9,389.6Z"/>
<path fill="#0000c3" d="M677.1,378.1 680.3,366.9 666.8,364.4 663.6,375.6Z"/>
<path fill="#0000ee" d="M500.9,321.1 503.1,313.6 493,301 490.9,308.5Z"/>
<path fill="#0000db" d="M624.1,363.5 627.3,352.3 614.8,346.8 611.6,358Z"/>
<path fill="#0000e6" stroke="#0000e6" d="M555.3,428.6 558.6,417 542.5,407.5 539.2,419.1Z"/>
<path class="e" d="M555.3,428.6L558.6,417M542.5,407.5L539.2,419.1M539.2,419.1L555.3,428.6"/>
<path fill="#000064" stroke="#000064" d="M569.4,443.1 570.4,441.4 553.3,432.6 552.1,434.2Z"/>
<path class="e" d="M569.4,443.1L570.4,441.4M553.3,432.6L552.1,434.2M552.1,434.2L569.4,443.1"/>
<path fill="#0000eb" stroke="#0000eb" d="M508.4,382.8 507.3,375.6 493.6,363.2 495.1,370.7Z"/>
<path class="e" d="M508.4,382.8L507.3,375.6M493.6,363.2L495.1,370.7M495.1,370.7L508.4,382.8M508.4,382.8L493.6,363.2M507.3,375.6L495.1,370.7"/>
<path fill="#0000bb" d="M690.6,379.7 693.8,368.6 680.3,366.9 677.1,378.1Z"/>
<path fill="#0000d6" stroke="#0000d6" d="M571.5,439.3 572.2,437.3 555.3,428.6 554.5,430.6Z"/>
<path class="e" d="M571.5,439.3L572.2,437.3M572.2,437.3L555.3,428.6M555.3,428.6L554.5,430.6"/>
<path fill="#00005e" d="M560.4,342.5 564.7,345.3 553.5,336.5 548.6,333.2Z"/>
<path fill="#0000a8" stroke="#0000a8" d="M570.4,441.4 571.5,439.3 554.5,430.6 553.3,432.6Z"/>
<path class="e" d="M570.4,441.4L571.5,439.3M554.5,430.6L553.3,432.6"/>
<path fill="#0000ea" d="M591.4,334 594.6,322.8 583.9,315.5 580.8,326.7Z"/>
<path fill="#0000ef" stroke="#0000ef" d="M493.6,363.2 496.4,353.4 484.2,340.4 481.4,350.3Z"/>
<path class="e" d="M493.6,363.2L496.4,353.4M484.2,340.4L481.4,350.3M493.6,363.2L484.2,340.4M496.4,353.4L481.4,350.3"/>
<path fill="#000059" stroke="#000059" d="M702.9,475.7 702.6,473.7 683.5,472.5 683.6,474.5Z"/>
<path class="e" d="M702.9,475.7L702.6,473.7M683.5,472.5L683.6,474.5M683.6,474.5L702.9,475.7"/>
<path fill="#0000a8" stroke="#0000a8" d="M721.6,469.2 724.9,457.7 706.3,457.6 703,469.2Z"/>
<path class="e" d="M721.6,469.2L724.9,457.7M706.3,457.6L703,469.2M703,469.2L721.6,469.2"/>
<path fill="#0000a8" stroke="#0000a8" d="M702.6,471.3 703,469.2 684.1,468 683.6,470.1Z"/>
<path class="e" d="M702.6,471.3L703,469.2M703,469.2L684.1,468M684.1,468L683.6,470.1"/>
<path fill="#000075" d="M819.6,399 821.7,391.5 806.9,397.2 804.8,404.7Z"/>
<path fill="#000086" stroke="#000086" d="M702.6,473.7 702.6,471.3 683.6,470.1 683.5,472.5Z"/>
<path class="e" d="M702.6,473.7L702.6,471.3M683.6,470.1L683.5,472.5"/>
<path fill="#00009e" d="M733.1,368.6 736.3,357.4 723.5,358.2 720.3,369.4Z"/>
<path fill="#0000e1" d="M611.6,358 614.8,346.8 602.8,340.7 599.7,351.9Z"/>
<path fill="#000056" d="M757.6,390.7 751.4,391 737.4,392.8 742.8,392.7Z"/>
<path fill="#0000ad" stroke="#0000ad" d="M491.1,330.1 500.9,321.1 490.9,308.5 480.6,317Z"/>
<path class="e" d="M491.1,330.1L500.9,321.1M500.9,321.1L490.9,308.5M490.9,308.5L480.6,317M491.1,330.1L490.9,308.5M500.9,321.1L480.6,317"/>
<path fill="#00008e" stroke="#00008e" d="M784.1,450.2 789.4,444.6 771.5,448.3 766.6,453.9Z"/>
<path class="e" d="M784.1,450.2L789.4,444.6M771.5,448.3L766.6,453.9M766.6,453.9L784.1,450.2M784.1,450.2L771.5,448.3M789.4,444.6L766.6,453.9"/>
<path fill="#000058" d="M504.2,423.6 505.5,423.1 489.7,410.7 488.3,411.1Z"/>
<path fill="#000056" d="M522.5,434.8 535.6,424.5 520.2,414 505.5,423.1Z"/>
<path fill="#0000b2" d="M704,380.6 707.2,369.4 693.8,368.6 690.6,379.7Z"/>
<path fill="#000056" stroke="#000056" d="M770.5,488.3 769.5,488.4 749.5,491.1 750.5,491Z"/>
<path class="e" d="M770.5,488.3L769.5,488.4M749.5,491.1L750.5,491M750.5,491L770.5,488.3"/>
<path fill="#00007c" stroke="#00007c" d="M806.4,439.7 809.2,429.8 792.2,434.7 789.4,444.6Z"/>
<path class="e" d="M806.4,439.7L809.2,429.8M792.2,434.7L789.4,444.6M806.4,439.7L792.2,434.7M809.2,429.8L789.4,444.6"/>
<path fill="#0000ec" d="M493,301 495.2,293.6 486.7,280.7 484.5,288.2Z"/>
<path fill="#000056" d="M748.6,490 740.4,474.5 721.9,475.7 728.2,491.3Z"/>
<path fill="#000065" stroke="#000065" d="M552.1,434.2 553.3,432.6 537.1,423 535.6,424.5Z"/>
<path class="e" d="M552.1,434.2L553.3,432.6M537.1,423L535.6,424.5M535.6,424.5L552.1,434.2"/>
<path fill="#000056" stroke="#000056" d="M769.5,488.4 768.3,487.4 748.6,490 749.5,491.1Z"/>
<path class="e" d="M769.5,488.4L768.3,487.4M768.3,487.4L748.6,490M748.6,490L749.5,491.1"/>
<path fill="#0000dc" stroke="#0000dc" d="M554.5,430.6 555.3,428.6 539.2,419.1 538.4,421Z"/>
<path class="e" d="M554.5,430.6L555.3,428.6M555.3,428.6L539.2,419.1M539.2,419.1L538.4,421"/>
<path fill="#00006a" stroke="#00006a" d="M824.1,411.5 819.6,399 804.8,404.7 808.6,417.4Z"/>
<path class="e" d="M824.1,411.5L819.6,399M819.6,399L804.8,404.7M804.8,404.7L808.6,417.4M824.1,411.5L804.8,404.7M819.6,399L808.6,417.4"/>
<path fill="#0000d9" stroke="#0000d9" d="M484.2,340.4 491.1,330.1 480.6,317 473.5,327Z"/>
<path class="e" d="M484.2,340.4L491.1,330.1M480.6,317L473.5,327M484.2,340.4L480.6,317M491.1,330.1L473.5,327"/>
<path fill="#0000ac" stroke="#0000ac" d="M553.3,432.6 554.5,430.6 538.4,421 537.1,423Z"/>
<path class="e" d="M553.3,432.6L554.5,430.6M538.4,421L537.1,423"/>
<path fill="#0000e6" d="M599.7,351.9 602.8,340.7 591.4,334 588.3,345.1Z"/>
<path fill="#0000ed" d="M580.8,326.7 583.9,315.5 574.1,307.7 570.9,318.9Z"/>
<path fill="#0000ea" d="M539.2,419.1 542.5,407.5 527.4,397.2 524.1,408.8Z"/>
<path fill="#00005a" stroke="#00005a" d="M721.9,475.7 721.4,473.7 702.6,473.7 702.9,475.7Z"/>
<path class="e" d="M721.9,475.7L721.4,473.7M702.6,473.7L702.9,475.7M702.9,475.7L721.9,475.7"/>
<path fill="#0000d0" d="M647.1,383.5 650.2,372.3 637,368.3 633.8,379.4Z"/>
<path class="kp" d="M618.1,399.4 615.9,409.3 606.5,404.8 607.7,399.4Z"/>
<path class="kp" d="M615.9,409.3 609.6,417.1 603.1,409 606.5,404.8Z"/>
<path class="kp" d="M609.6,417.1 600.5,421.5 598.2,411.4 603.1,409Z"/>
<path class="kp" d="M600.5,421.5 590.5,421.5 592.8,411.4 598.2,411.4Z"/>
<path class="kp" d="M590.5,421.5 581.4,417.1 587.9,409 592.8,411.4Z"/>
<path class="kp" d="M581.4,417.1 575.1,409.3 584.5,404.8 587.9,409Z"/>
<path class="kp" d="M575.1,409.3 572.9,399.4 583.2,399.4 584.5,404.8Z"/>
<path class="kp" d="M572.9,399.4 575.1,389.6 584.5,394.1 583.2,399.4Z"/>
<path class="kp" d="M575.1,389.6 581.4,381.7 587.9,389.9 584.5,394.1Z"/>
<path class="kp" d="M581.4,381.7 590.5,377.4 592.8,387.5 587.9,389.9Z"/>
<path class="kp" d="M590.5,377.4 600.5,377.4 598.2,387.5 592.8,387.5Z"/>
<path class="kp" d="M600.5,377.4 609.6,381.7 603.1,389.9 598.2,387.5Z"/>
<path class="kp" d="M609.6,381.7 615.9,389.6 606.5,394.1 603.1,389.9Z"/>
<path class="kp" d="M615.9,389.6 618.1,399.4 607.7,399.4 606.5,394.1Z"/>
<path fill="#0000ca" d="M660.5,386.8 663.6,375.6 650.2,372.3 647.1,383.5Z"/>
<path fill="#00009f" stroke="#00009f" d="M721.3,471.3 721.6,469.2 703,469.2 702.6,471.3Z"/>
<path class="e" d="M721.3,471.3L721.6,469.2M721.6,469.2L703,469.2M703,469.2L702.6,471.3"/>
<path fill="#0000a8" d="M717.1,380.6 720.3,369.4 707.2,369.4 704,380.6Z"/>
<path fill="#000076" d="M835.4,384.7 837.5,377.2 823.8,384 821.7,391.5Z"/>
<path class="k" d="M746.2,425.8 743.3,438.6 737.1,435.6 739.3,425.8Z"/>
<path class="k" d="M743.3,438.6 735.1,448.9 730.8,443.5 737.1,435.6Z"/>
<path class="k" d="M735.1,448.9 723.2,454.6 721.7,447.9 730.8,443.5Z"/>
<path class="k" d="M723.2,454.6 710.1,454.6 711.6,447.9 721.7,447.9Z"/>
<path class="k" d="M710.1,454.6 698.2,448.9 702.6,443.5 711.6,447.9Z"/>
<path class="k" d="M698.2,448.9 690,438.6 696.3,435.6 702.6,443.5Z"/>
<path class="k" d="M690,438.6 687.1,425.8 694,425.8 696.3,435.6Z"/>
<path class="k" d="M687.1,425.8 690,413 696.3,416 694,425.8Z"/>
<path class="k" d="M690,413 698.2,402.7 702.6,408.1 696.3,416Z"/>
<path class="k" d="M698.2,402.7 710.1,397 711.6,403.7 702.6,408.1Z"/>
<path class="k" d="M710.1,397 723.2,397 721.7,403.7 711.6,403.7Z"/>
<path class="k" d="M723.2,397 735.1,402.7 730.8,408.1 721.7,403.7Z"/>
<path class="k" d="M735.1,402.7 743.3,413 737.1,416 730.8,408.1Z"/>
<path class="k" d="M743.3,413 746.2,425.8 739.3,425.8 737.1,416Z"/>
<path fill="#00007f" stroke="#00007f" d="M721.4,473.7 721.3,471.3 702.6,471.3 702.6,473.7Z"/>
<path class="e" d="M721.4,473.7L721.3,471.3M702.6,471.3L702.6,473.7"/>
<path fill="#0000d5" d="M633.8,379.4 637,368.3 624.1,363.5 620.9,374.7Z"/>
<path fill="#000093" d="M745.5,366.9 748.6,355.8 736.3,357.4 733.1,368.6Z"/>
<path fill="#000060" d="M548.6,333.2 553.5,336.5 543.3,327.2 537.8,323.4Z"/>
<path fill="#0000c3" d="M674,389.2 677.1,378.1 663.6,375.6 660.5,386.8Z"/>
<path fill="#00009e" d="M739.7,468.1 743,456.5 724.9,457.7 721.6,469.2Z"/>
<path fill="#000072" stroke="#000072" d="M825,423.7 824.1,411.5 808.6,417.4 809.2,429.8Z"/>
<path class="e" d="M825,423.7L824.1,411.5M808.6,417.4L809.2,429.8M825,423.7L808.6,417.4M824.1,411.5L809.2,429.8"/>
<path fill="#0000db" d="M620.9,374.7 624.1,363.5 611.6,358 608.5,369.2Z"/>
<path fill="#000056" d="M771.7,387.7 764.8,388.2 751.4,391 757.6,390.7Z"/>
<path fill="#0000bb" d="M687.5,390.9 690.6,379.7 677.1,378.1 674,389.2Z"/>
<path fill="#0000ea" d="M588.3,345.1 591.4,334 580.8,326.7 577.6,337.9Z"/>
<path fill="#0000ec" stroke="#0000ec" d="M495.1,370.7 493.6,363.2 481.4,350.3 483.2,358.1Z"/>
<path class="e" d="M495.1,370.7L493.6,363.2M481.4,350.3L483.2,358.1M483.2,358.1L495.1,370.7M495.1,370.7L481.4,350.3M493.6,363.2L483.2,358.1"/>
<path fill="#0000ec" d="M490.9,308.5 493,301 484.5,288.2 482.4,295.7Z"/>
<path fill="#000061" stroke="#000061" d="M487.4,410.4 488.3,411.1 473.7,397.9 472.8,397.1Z"/>
<path class="e" d="M487.4,410.4L488.3,411.1M473.7,397.9L472.8,397.1M472.8,397.1L487.4,410.4"/>
<path fill="#000056" d="M505.5,423.1 520.2,414 505.9,402.7 489.7,410.7Z"/>
<path class="kp" d="M607.7,399.4 606.5,404.8 595.5,399.4 595.5,399.4Z"/>
<path class="kp" d="M606.5,404.8 603.1,409 595.5,399.4 595.5,399.4Z"/>
<path class="kp" d="M603.1,409 598.2,411.4 595.5,399.4 595.5,399.4Z"/>
<path class="kp" d="M598.2,411.4 592.8,411.4 595.5,399.4 595.5,399.4Z"/>
<path class="kp" d="M592.8,411.4 587.9,409 595.5,399.4 595.5,399.4Z"/>
<path class="kp" d="M587.9,409 584.5,404.8 595.5,399.4 595.5,399.4Z"/>
<path class="kp" d="M584.5,404.8 583.2,399.4 595.5,399.4 595.5,399.4Z"/>
<path class="kp" d="M583.2,399.4 584.5,394.1 595.5,399.4 595.5,399.4Z"/>
<path class="kp" d="M584.5,394.1 587.9,389.9 595.5,399.4 595.5,399.4Z"/>
<path class="kp" d="M587.9,389.9 592.8,387.5 595.5,399.4 595.5,399.4Z"/>
<path class="kp" d="M592.8,387.5 598.2,387.5 595.5,399.4 595.5,399.4Z"/>
<path class="kp" d="M598.2,387.5 603.1,389.9 595.5,399.4 595.5,399.4Z"/>
<path class="kp" d="M603.1,389.9 606.5,394.1 595.5,399.4 595.5,399.4Z"/>
<path class="kp" d="M606.5,394.1 607.7,399.4 595.5,399.4 595.5,399.4Z"/>
<path fill="#000066" stroke="#000066" d="M535.6,424.5 537.1,423 521.8,412.6 520.2,414Z"/>
<path class="e" d="M535.6,424.5L537.1,423M521.8,412.6L520.2,414M520.2,414L535.6,424.5"/>
<path fill="#00009e" d="M729.9,379.8 733.1,368.6 720.3,369.4 717.1,380.6Z"/>
<path fill="#0000df" stroke="#0000df" d="M538.4,421 539.2,419.1 524.1,408.8 523.2,410.7Z"/>
<path class="e" d="M538.4,421L539.2,419.1M539.2,419.1L524.1,408.8M524.1,408.8L523.2,410.7"/>
<path fill="#0000e1" d="M608.5,369.2 611.6,358 599.7,351.9 596.5,363Z"/>
<path fill="#0000ef" d="M570.9,318.9 574.1,307.7 565.1,299.5 561.9,310.7Z"/>
<path fill="#0000af" stroke="#0000af" d="M537.1,423 538.4,421 523.2,410.7 521.8,412.6Z"/>
<path class="e" d="M537.1,423L538.4,421M523.2,410.7L521.8,412.6"/>
<path fill="#0000ee" stroke="#0000ee" d="M481.4,350.3 484.2,340.4 473.5,327 470.7,336.9Z"/>
<path class="e" d="M481.4,350.3L484.2,340.4M473.5,327L470.7,336.9M481.4,350.3L473.5,327M484.2,340.4L470.7,336.9"/>
<path fill="#000059" stroke="#000059" d="M488.3,411.1 489.7,410.7 475.4,397.7 473.7,397.9Z"/>
<path class="e" d="M488.3,411.1L489.7,410.7M489.7,410.7L475.4,397.7M475.4,397.7L473.7,397.9"/>
<path fill="#0000b2" d="M700.8,391.8 704,380.6 690.6,379.7 687.5,390.9Z"/>
<path fill="#000083" stroke="#000083" d="M800.7,445.4 806.4,439.7 789.4,444.6 784.1,450.2Z"/>
<path class="e" d="M800.7,445.4L806.4,439.7M789.4,444.6L784.1,450.2M784.1,450.2L800.7,445.4M800.7,445.4L789.4,444.6M806.4,439.7L784.1,450.2"/>
<path fill="#000056" stroke="#000056" d="M789.7,484.3 788.5,484.5 769.5,488.4 770.5,488.3Z"/>
<path class="e" d="M789.7,484.3L788.5,484.5M769.5,488.4L770.5,488.3M770.5,488.3L789.7,484.3"/>
<path fill="#00005a" stroke="#00005a" d="M740.4,474.5 739.7,472.5 721.4,473.7 721.9,475.7Z"/>
<path class="e" d="M740.4,474.5L739.7,472.5M721.4,473.7L721.9,475.7M721.9,475.7L740.4,474.5"/>
<path fill="#000056" d="M768.3,487.4 758.2,472.1 740.4,474.5 748.6,490Z"/>
<path fill="#000095" stroke="#000095" d="M739.4,470.2 739.7,468.1 721.6,469.2 721.3,471.3Z"/>
<path class="e" d="M739.4,470.2L739.7,468.1M739.7,468.1L721.6,469.2M721.6,469.2L721.3,471.3"/>
<path fill="#000076" d="M833.3,392.2 835.4,384.7 821.7,391.5 819.6,399Z"/>
<path fill="#0000ed" d="M524.1,408.8 527.4,397.2 513.4,386.2 510.1,397.7Z"/>
<path fill="#000088" d="M757.3,364.5 760.4,353.3 748.6,355.8 745.5,366.9Z"/>
<path fill="#000078" stroke="#000078" d="M739.7,472.5 739.4,470.2 721.3,471.3 721.4,473.7Z"/>
<path class="e" d="M739.7,472.5L739.4,470.2M721.3,471.3L721.4,473.7"/>
<path fill="#0000ab" stroke="#0000ab" d="M480.6,317 490.9,308.5 482.4,295.7 471.8,303.6Z"/>
<path class="e" d="M480.6,317L490.9,308.5M490.9,308.5L482.4,295.7M482.4,295.7L471.8,303.6M480.6,317L482.4,295.7M490.9,308.5L471.8,303.6"/>
<path fill="#000075" stroke="#000075" d="M822.2,433.6 825,423.7 809.2,429.8 806.4,439.7Z"/>
<path class="e" d="M822.2,433.6L825,423.7M809.2,429.8L806.4,439.7M822.2,433.6L809.2,429.8M825,423.7L806.4,439.7"/>
<path fill="#000056" stroke="#000056" d="M788.5,484.5 787.2,483.4 768.3,487.4 769.5,488.4Z"/>
<path class="e" d="M788.5,484.5L787.2,483.4M787.2,483.4L768.3,487.4M768.3,487.4L769.5,488.4"/>
<path fill="#0000e6" d="M596.5,363 599.7,351.9 588.3,345.1 585.1,356.3Z"/>
<path fill="#0000ed" d="M577.6,337.9 580.8,326.7 570.9,318.9 567.7,330.1Z"/>
<path fill="#000062" d="M537.8,323.4 543.3,327.2 534.2,317.5 528.1,313.1Z"/>
<path class="kp" d="M739.3,425.8 737.1,435.6 727.7,431.1 728.9,425.8Z"/>
<path class="kp" d="M737.1,435.6 730.8,443.5 724.3,435.4 727.7,431.1Z"/>
<path class="kp" d="M730.8,443.5 721.7,447.9 719.4,437.7 724.3,435.4Z"/>
<path class="kp" d="M721.7,447.9 711.6,447.9 713.9,437.7 719.4,437.7Z"/>
<path class="kp" d="M711.6,447.9 702.6,443.5 709,435.4 713.9,437.7Z"/>
<path class="kp" d="M702.6,443.5 696.3,435.6 705.6,431.1 709,435.4Z"/>
<path class="kp" d="M696.3,435.6 694,425.8 704.4,425.8 705.6,431.1Z"/>
<path class="kp" d="M694,425.8 696.3,416 705.6,420.5 704.4,425.8Z"/>
<path class="kp" d="M696.3,416 702.6,408.1 709,416.2 705.6,420.5Z"/>
<path class="kp" d="M702.6,408.1 711.6,403.7 713.9,413.9 709,416.2Z"/>
<path class="kp" d="M711.6,403.7 721.7,403.7 719.4,413.9 713.9,413.9Z"/>
<path class="kp" d="M721.7,403.7 730.8,408.1 724.3,416.2 719.4,413.9Z"/>
<path class="kp" d="M730.8,408.1 737.1,416 727.7,420.5 724.3,416.2Z"/>
<path class="kp" d="M737.1,416 739.3,425.8 728.9,425.8 727.7,420.5Z"/>
<path fill="#000093" d="M757.2,465.7 760.5,454.1 743,456.5 739.7,468.1Z"/>
<path fill="#0000d0" d="M643.9,394.7 647.1,383.5 633.8,379.4 630.7,390.6Z"/>
<path fill="#0000e9" d="M484.5,288.2 486.7,280.7 479.7,267.7 477.6,275.1Z"/>
<path fill="#0000ca" d="M657.3,397.9 660.5,386.8 647.1,383.5 643.9,394.7Z"/>
<path fill="#0000a8" d="M714,391.8 717.1,380.6 704,380.6 700.8,391.8Z"/>
<path fill="#0000d5" d="M630.7,390.6 633.8,379.4 620.9,374.7 617.8,385.8Z"/>
<path fill="#000093" d="M742.3,378.1 745.5,366.9 733.1,368.6 729.9,379.8Z"/>
<path fill="#00006b" stroke="#00006b" d="M838.4,404.4 833.3,392.2 819.6,399 824.1,411.5Z"/>
<path class="e" d="M838.4,404.4L833.3,392.2M833.3,392.2L819.6,399M819.6,399L824.1,411.5M838.4,404.4L819.6,399M833.3,392.2L824.1,411.5"/>
<path fill="#0000c3" d="M670.8,400.4 674,389.2 660.5,386.8 657.3,397.9Z"/>
<path fill="#0000d7" stroke="#0000d7" d="M473.5,327 480.6,317 471.8,303.6 464.4,313.3Z"/>
<path class="e" d="M473.5,327L480.6,317M471.8,303.6L464.4,313.3M473.5,327L471.8,303.6M480.6,317L464.4,313.3"/>
<path fill="#000056" d="M785.1,383.8 777.5,384.5 764.8,388.2 771.7,387.7Z"/>
<path fill="#0000db" d="M617.8,385.8 620.9,374.7 608.5,369.2 605.3,380.4Z"/>
<path fill="#0000ef" d="M561.9,310.7 565.1,299.5 557,291 553.8,302.2Z"/>
<path fill="#000067" stroke="#000067" d="M520.2,414 521.8,412.6 507.7,401.5 505.9,402.7Z"/>
<path class="e" d="M520.2,414L521.8,412.6M507.7,401.5L505.9,402.7M505.9,402.7L520.2,414"/>
<path fill="#0000e2" stroke="#0000e2" d="M523.2,410.7 524.1,408.8 510.1,397.7 509.2,399.7Z"/>
<path class="e" d="M523.2,410.7L524.1,408.8M524.1,408.8L510.1,397.7M510.1,397.7L509.2,399.7"/>
<path fill="#0000bb" d="M684.3,402.1 687.5,390.9 674,389.2 670.8,400.4Z"/>
<path fill="#000078" d="M847.8,377 849.9,369.5 837.5,377.2 835.4,384.7Z"/>
<path fill="#0000b1" stroke="#0000b1" d="M521.8,412.6 523.2,410.7 509.2,399.7 507.7,401.5Z"/>
<path class="e" d="M521.8,412.6L523.2,410.7M509.2,399.7L507.7,401.5"/>
<path fill="#0000ea" d="M585.1,356.3 588.3,345.1 577.6,337.9 574.5,349Z"/>
<path class="kp" d="M728.9,425.8 727.7,431.1 716.7,425.8 716.7,425.8Z"/>
<path class="kp" d="M727.7,431.1 724.3,435.4 716.7,425.8 716.7,425.8Z"/>
<path class="kp" d="M724.3,435.4 719.4,437.7 716.7,425.8 716.7,425.8Z"/>
<path class="kp" d="M719.4,437.7 713.9,437.7 716.7,425.8 716.7,425.8Z"/>
<path class="kp" d="M713.9,437.7 709,435.4 716.7,425.8 716.7,425.8Z"/>
<path class="kp" d="M709,435.4 705.6,431.1 716.7,425.8 716.7,425.8Z"/>
<path class="kp" d="M705.6,431.1 704.4,425.8 716.7,425.8 716.7,425.8Z"/>
<path class="kp" d="M704.4,425.8 705.6,420.5 716.7,425.8 716.7,425.8Z"/>
<path class="kp" d="M705.6,420.5 709,416.2 716.7,425.8 716.7,425.8Z"/>
<path class="kp" d="M709,416.2 713.9,413.9 716.7,425.8 716.7,425.8Z"/>
<path class="kp" d="M713.9,413.9 719.4,413.9 716.7,425.8 716.7,425.8Z"/>
<path class="kp" d="M719.4,413.9 724.3,416.2 716.7,425.8 716.7,425.8Z"/>
<path class="kp" d="M724.3,416.2 727.7,420.5 716.7,425.8 716.7,425.8Z"/>
<path class="kp" d="M727.7,420.5 728.9,425.8 716.7,425.8 716.7,425.8Z"/>
<path fill="#000056" d="M489.7,410.7 505.9,402.7 492.9,390.9 475.4,397.7Z"/>
<path fill="#00007c" d="M768.5,361.2 771.6,350 760.4,353.3 757.3,364.5Z"/>
<path fill="#000073" stroke="#000073" d="M839.6,416.5 838.4,404.4 824.1,411.5 825,423.7Z"/>
<path class="e" d="M839.6,416.5L838.4,404.4M824.1,411.5L825,423.7M839.6,416.5L824.1,411.5M838.4,404.4L825,423.7"/>
<path fill="#00009e" d="M726.8,390.9 729.9,379.8 717.1,380.6 714,391.8Z"/>
<path fill="#00008b" stroke="#00008b" d="M757,467.8 757.2,465.7 739.7,468.1 739.4,470.2Z"/>
<path class="e" d="M757,467.8L757.2,465.7M757.2,465.7L739.7,468.1M739.7,468.1L739.4,470.2"/>
<path fill="#00005b" stroke="#00005b" d="M758.2,472.1 757.4,470.2 739.7,472.5 740.4,474.5Z"/>
<path class="e" d="M758.2,472.1L757.4,470.2M739.7,472.5L740.4,474.5M740.4,474.5L758.2,472.1"/>
<path fill="#0000e1" d="M605.3,380.4 608.5,369.2 596.5,363 593.3,374.2Z"/>
<path fill="#0000eb" stroke="#0000eb" d="M483.2,358.1 481.4,350.3 470.7,336.9 472.7,345Z"/>
<path class="e" d="M483.2,358.1L481.4,350.3M470.7,336.9L472.7,345M472.7,345L483.2,358.1M483.2,358.1L470.7,336.9M481.4,350.3L472.7,345"/>
<path fill="#000063" stroke="#000063" d="M472.8,397.1 473.7,397.9 460.7,384.1 459.7,383.2Z"/>
<path class="e" d="M472.8,397.1L473.7,397.9M460.7,384.1L459.7,383.2M459.7,383.2L472.8,397.1"/>
<path fill="#0000ef" d="M567.7,330.1 570.9,318.9 561.9,310.7 558.7,321.9Z"/>
<path fill="#000070" stroke="#000070" d="M757.4,470.2 757,467.8 739.4,470.2 739.7,472.5Z"/>
<path class="e" d="M757.4,470.2L757,467.8M739.4,470.2L739.7,472.5"/>
<path fill="#0000ef" d="M510.1,397.7 513.4,386.2 500.6,374.6 497.4,386.1Z"/>
<path fill="#0000b2" d="M697.7,402.9 700.8,391.8 687.5,390.9 684.3,402.1Z"/>
<path fill="#0000e9" d="M482.4,295.7 484.5,288.2 477.6,275.1 475.5,282.6Z"/>
<path fill="#000056" stroke="#000056" d="M632.3,436.7 632.4,436.4 617,431.7 616.7,432Z"/>
<path class="e" d="M632.3,436.7L632.4,436.4M617,431.7L616.7,432M616.7,432L632.3,436.7"/>
<path fill="#000056" stroke="#000056" d="M648.2,440.6 648,440.2 632.4,436.4 632.3,436.7Z"/>
<path class="e" d="M648.2,440.6L648,440.2M632.4,436.4L632.3,436.7M632.3,436.7L648.2,440.6"/>
<path fill="#000056" d="M787.2,483.4 775.3,468.6 758.2,472.1 768.3,487.4Z"/>
<path fill="#000088" d="M754.1,375.6 757.3,364.5 745.5,366.9 742.3,378.1Z"/>
<path fill="#00005a" stroke="#00005a" d="M473.7,397.9 475.4,397.7 462.5,384 460.7,384.1Z"/>
<path class="e" d="M473.7,397.9L475.4,397.7M475.4,397.7L462.5,384M462.5,384L460.7,384.1"/>
<path fill="#000056" stroke="#000056" d="M616.7,432 617,431.7 602,426.1 601.5,426.3Z"/>
<path class="e" d="M616.7,432L617,431.7M602,426.1L601.5,426.3M601.5,426.3L616.7,432"/>
<path fill="#000056" stroke="#000056" d="M664.1,443.5 663.7,443.1 648,440.2 648.2,440.6Z"/>
<path class="e" d="M664.1,443.5L663.7,443.1M648,440.2L648.2,440.6M648.2,440.6L664.1,443.5"/>
<path fill="#000064" d="M528.1,313.1 534.2,317.5 526.2,307.5 519.7,302.5Z"/>
<path fill="#0000ec" stroke="#0000ec" d="M470.7,336.9 473.5,327 464.4,313.3 461.6,323.1Z"/>
<path class="e" d="M470.7,336.9L473.5,327M464.4,313.3L461.6,323.1M470.7,336.9L464.4,313.3M473.5,327L461.6,323.1"/>
<path fill="#000088" d="M773.9,462.2 777.2,450.7 760.5,454.1 757.2,465.7Z"/>
<path fill="#000078" stroke="#000078" d="M816.2,439.4 822.2,433.6 806.4,439.7 800.7,445.4Z"/>
<path class="e" d="M816.2,439.4L822.2,433.6M806.4,439.7L800.7,445.4M800.7,445.4L816.2,439.4M816.2,439.4L806.4,439.7M822.2,433.6L800.7,445.4"/>
<path fill="#000056" stroke="#000056" d="M807.9,479 806.5,479.2 788.5,484.5 789.7,484.3Z"/>
<path class="e" d="M807.9,479L806.5,479.2M788.5,484.5L789.7,484.3M789.7,484.3L807.9,479"/>
<path fill="#0000e6" d="M593.3,374.2 596.5,363 585.1,356.3 582,367.5Z"/>
<path fill="#0000ed" d="M574.5,349 577.6,337.9 567.7,330.1 564.6,341.3Z"/>
<path fill="#000056" stroke="#000056" d="M601.5,426.3 602,426.1 587.5,419.7 586.7,419.8Z"/>
<path class="e" d="M601.5,426.3L602,426.1M587.5,419.7L586.7,419.8M586.7,419.8L601.5,426.3"/>
<path fill="#000056" stroke="#000056" d="M632.4,436.4 632.8,434.8 617.7,430.2 617,431.7Z"/>
<path class="e" d="M632.4,436.4L632.8,434.8M632.8,434.8L617.7,430.2M617.7,430.2L617,431.7"/>
<path fill="#0000d0" d="M640.7,405.8 643.9,394.7 630.7,390.6 627.5,401.8Z"/>
<path fill="#000056" stroke="#000056" d="M648,440.2 648.1,438.6 632.8,434.8 632.4,436.4Z"/>
<path class="e" d="M648,440.2L648.1,438.6M648.1,438.6L632.8,434.8M632.8,434.8L632.4,436.4"/>
<path fill="#0000ca" d="M654.1,409.1 657.3,397.9 643.9,394.7 640.7,405.8Z"/>
<path fill="#000078" d="M845.7,384.5 847.8,377 835.4,384.7 833.3,392.2Z"/>
<path fill="#0000a8" d="M710.8,402.9 714,391.8 700.8,391.8 697.7,402.9Z"/>
<path fill="#000056" stroke="#000056" d="M680,445.5 679.4,445 663.7,443.1 664.1,443.5Z"/>
<path class="e" d="M680,445.5L679.4,445M663.7,443.1L664.1,443.5M664.1,443.5L680,445.5"/>
<path fill="#0000ee" d="M553.8,302.2 557,291 549.9,282.1 546.8,293.3Z"/>
<path fill="#000056" stroke="#000056" d="M806.5,479.2 805.1,478.2 787.2,483.4 788.5,484.5Z"/>
<path class="e" d="M806.5,479.2L805.1,478.2M805.1,478.2L787.2,483.4M787.2,483.4L788.5,484.5"/>
<path fill="#0000d5" d="M627.5,401.8 630.7,390.6 617.8,385.8 614.6,397Z"/>
<path fill="#000093" d="M739.1,389.3 742.3,378.1 729.9,379.8 726.8,390.9Z"/>
<path fill="#000056" stroke="#000056" d="M617,431.7 617.7,430.2 603,424.8 602,426.1Z"/>
<path class="e" d="M617,431.7L617.7,430.2M617.7,430.2L603,424.8M603,424.8L602,426.1"/>
<path fill="#000056" d="M797.7,379 789.4,379.9 777.5,384.5 785.1,383.8Z"/>
<path fill="#0000a9" stroke="#0000a9" d="M471.8,303.6 482.4,295.7 475.5,282.6 464.5,289.9Z"/>
<path class="e" d="M471.8,303.6L482.4,295.7M482.4,295.7L475.5,282.6M475.5,282.6L464.5,289.9M471.8,303.6L475.5,282.6M482.4,295.7L464.5,289.9"/>
<path fill="#0000c3" d="M667.6,411.6 670.8,400.4 657.3,397.9 654.1,409.1Z"/>
<path fill="#000056" stroke="#000056" d="M663.7,443.1 663.5,441.4 648.1,438.6 648,440.2Z"/>
<path class="e" d="M663.7,443.1L663.5,441.4M663.5,441.4L648.1,438.6M648.1,438.6L648,440.2"/>
<path fill="#000076" stroke="#000076" d="M836.8,426.4 839.6,416.5 825,423.7 822.2,433.6Z"/>
<path class="e" d="M836.8,426.4L839.6,416.5M825,423.7L822.2,433.6M836.8,426.4L825,423.7M839.6,416.5L822.2,433.6"/>
<path fill="#0000e4" stroke="#0000e4" d="M509.2,399.7 510.1,397.7 497.4,386.1 496.4,388Z"/>
<path class="e" d="M509.2,399.7L510.1,397.7M510.1,397.7L497.4,386.1M497.4,386.1L496.4,388"/>
<path fill="#000068" stroke="#000068" d="M505.9,402.7 507.7,401.5 494.8,389.8 492.9,390.9Z"/>
<path class="e" d="M505.9,402.7L507.7,401.5M494.8,389.8L492.9,390.9M492.9,390.9L505.9,402.7"/>
<path fill="#0000b2" stroke="#0000b2" d="M507.7,401.5 509.2,399.7 496.4,388 494.8,389.8Z"/>
<path class="e" d="M507.7,401.5L509.2,399.7M496.4,388L494.8,389.8"/>
<path fill="#0000db" d="M614.6,397 617.8,385.8 605.3,380.4 602.1,391.5Z"/>
<path fill="#000075" d="M778.9,357.2 782.1,346 771.6,350 768.5,361.2Z"/>
<path fill="#0000ef" d="M558.7,321.9 561.9,310.7 553.8,302.2 550.7,313.3Z"/>
<path fill="#000056" stroke="#000056" d="M602,426.1 603,424.8 588.7,418.5 587.5,419.7Z"/>
<path class="e" d="M602,426.1L603,424.8M603,424.8L588.7,418.5M588.7,418.5L587.5,419.7"/>
<path fill="#000057" stroke="#000057" d="M586.7,419.8 587.5,419.7 573.6,412.6 572.6,412.6Z"/>
<path class="e" d="M586.7,419.8L587.5,419.7M573.6,412.6L572.6,412.6M572.6,412.6L586.7,419.8"/>
<path fill="#0000bb" d="M681.1,413.3 684.3,402.1 670.8,400.4 667.6,411.6Z"/>
<path fill="#0000e5" d="M477.6,275.1 479.7,267.7 474.4,254.5 472.3,262Z"/>
<path fill="#000056" stroke="#000056" d="M679.4,445 678.9,443.3 663.5,441.4 663.7,443.1Z"/>
<path class="e" d="M679.4,445L678.9,443.3M678.9,443.3L663.5,441.4M663.5,441.4L663.7,443.1"/>
<path fill="#0000ea" d="M582,367.5 585.1,356.3 574.5,349 571.3,360.2Z"/>
<path fill="#000056" stroke="#000056" d="M695.8,446.5 694.9,446 679.4,445 680,445.5Z"/>
<path class="e" d="M695.8,446.5L694.9,446M679.4,445L680,445.5M680,445.5L695.8,446.5"/>
<path fill="#000080" stroke="#000080" d="M773.8,464.3 773.9,462.2 757.2,465.7 757,467.8Z"/>
<path class="e" d="M773.8,464.3L773.9,462.2M773.9,462.2L757.2,465.7M757.2,465.7L757,467.8"/>
<path fill="#00006c" stroke="#00006c" d="M851.3,396.3 845.7,384.5 833.3,392.2 838.4,404.4Z"/>
<path class="e" d="M851.3,396.3L845.7,384.5M845.7,384.5L833.3,392.2M833.3,392.2L838.4,404.4M851.3,396.3L833.3,392.2M845.7,384.5L838.4,404.4"/>
<path fill="#00005b" stroke="#00005b" d="M775.3,468.6 774.3,466.6 757.4,470.2 758.2,472.1Z"/>
<path class="e" d="M775.3,468.6L774.3,466.6M757.4,470.2L758.2,472.1M758.2,472.1L775.3,468.6"/>
<path fill="#00007c" d="M765.3,372.4 768.5,361.2 757.3,364.5 754.1,375.6Z"/>
<path fill="#0000d4" stroke="#0000d4" d="M464.4,313.3 471.8,303.6 464.5,289.9 457,299.3Z"/>
<path class="e" d="M464.4,313.3L471.8,303.6M464.5,289.9L457,299.3M464.4,313.3L464.5,289.9M471.8,303.6L457,299.3"/>
<path fill="#000068" stroke="#000068" d="M774.3,466.6 773.8,464.3 757,467.8 757.4,470.2Z"/>
<path class="e" d="M774.3,466.6L773.8,464.3M757,467.8L757.4,470.2"/>
<path fill="#00009e" d="M723.6,402.1 726.8,390.9 714,391.8 710.8,402.9Z"/>
<path fill="#000056" d="M475.4,397.7 492.9,390.9 481.3,378.5 462.5,384Z"/>
<path fill="#0000e1" d="M602.1,391.5 605.3,380.4 593.3,374.2 590.2,385.4Z"/>
<path fill="#0000ef" d="M564.6,341.3 567.7,330.1 558.7,321.9 555.6,333.1Z"/>
<path fill="#000056" stroke="#000056" d="M587.5,419.7 588.7,418.5 575,411.5 573.6,412.6Z"/>
<path class="e" d="M587.5,419.7L588.7,418.5M588.7,418.5L575,411.5M575,411.5L573.6,412.6"/>
<path fill="#0000b2" d="M694.5,414.1 697.7,402.9 684.3,402.1 681.1,413.3Z"/>
<path fill="#0000ef" d="M497.4,386.1 500.6,374.6 489.2,362.4 485.9,374Z"/>
<path fill="#000079" d="M858.9,368.3 861,360.8 849.9,369.5 847.8,377Z"/>
<path fill="#000056" stroke="#000056" d="M694.9,446 694.2,444.3 678.9,443.3 679.4,445Z"/>
<path class="e" d="M694.9,446L694.2,444.3M694.2,444.3L678.9,443.3M678.9,443.3L679.4,445"/>
<path fill="#000088" d="M751,386.8 754.1,375.6 742.3,378.1 739.1,389.3Z"/>
<path fill="#000059" stroke="#000059" d="M572.6,412.6 573.6,412.6 560.3,404.8 559.2,404.6Z"/>
<path class="e" d="M572.6,412.6L573.6,412.6M560.3,404.8L559.2,404.6M559.2,404.6L572.6,412.6"/>
<path fill="#000056" d="M632.8,434.8 635.4,424.9 621.7,420.7 617.7,430.2Z"/>
<path fill="#000056" d="M648.1,438.6 649.3,428.3 635.4,424.9 632.8,434.8Z"/>
<path fill="#000056" d="M805.1,478.2 791.5,463.9 775.3,468.6 787.2,483.4Z"/>
<path fill="#0000e9" stroke="#0000e9" d="M472.7,345 470.7,336.9 461.6,323.1 463.8,331.5Z"/>
<path class="e" d="M472.7,345L470.7,336.9M461.6,323.1L463.8,331.5M463.8,331.5L472.7,345M472.7,345L461.6,323.1M470.7,336.9L463.8,331.5"/>
<path fill="#000065" stroke="#000065" d="M459.7,383.2 460.7,384.1 449.4,369.8 448.3,368.9Z"/>
<path class="e" d="M459.7,383.2L460.7,384.1M449.4,369.8L448.3,368.9M448.3,368.9L459.7,383.2"/>
<path fill="#000066" d="M519.7,302.5 526.2,307.5 519.4,297.2 512.5,291.7Z"/>
<path fill="#000074" stroke="#000074" d="M852.9,408.2 851.3,396.3 838.4,404.4 839.6,416.5Z"/>
<path class="e" d="M852.9,408.2L851.3,396.3M838.4,404.4L839.6,416.5M852.9,408.2L838.4,404.4M851.3,396.3L839.6,416.5"/>
<path fill="#000056" d="M617.7,430.2 621.7,420.7 608.3,415.7 603,424.8Z"/>
<path fill="#000056" stroke="#000056" d="M711.4,446.5 710.2,446 694.9,446 695.8,446.5Z"/>
<path class="e" d="M711.4,446.5L710.2,446M694.9,446L695.8,446.5M695.8,446.5L711.4,446.5"/>
<path fill="#00007c" d="M789.8,457.6 793.1,446 777.2,450.7 773.9,462.2Z"/>
<path fill="#0000ec" d="M546.8,293.3 549.9,282.1 543.9,273.1 540.8,284.2Z"/>
<path fill="#000056" d="M663.5,441.4 663.3,430.9 649.3,428.3 648.1,438.6Z"/>
<path fill="#0000e6" d="M590.2,385.4 593.3,374.2 582,367.5 578.8,378.7Z"/>
<path fill="#0000ed" d="M571.3,360.2 574.5,349 564.6,341.3 561.4,352.4Z"/>
<path class="k" d="M535.4,331.4 532.2,345.3 530,344.2 532.9,331.4Z"/>
<path class="k" d="M532.2,345.3 523.3,356.4 521.8,354.5 530,344.2Z"/>
<path class="k" d="M523.3,356.4 510.5,362.6 510,360.2 521.8,354.5Z"/>
<path class="k" d="M510.5,362.6 496.3,362.6 496.8,360.2 510,360.2Z"/>
<path class="k" d="M496.3,362.6 483.4,356.4 484.9,354.5 496.8,360.2Z"/>
<path class="k" d="M483.4,356.4 474.6,345.3 476.7,344.2 484.9,354.5Z"/>
<path class="k" d="M474.6,345.3 471.4,331.4 473.8,331.4 476.7,344.2Z"/>
<path class="k" d="M471.4,331.4 474.6,317.5 476.7,318.6 473.8,331.4Z"/>
<path class="k" d="M474.6,317.5 483.4,306.4 484.9,308.3 476.7,318.6Z"/>
<path class="k" d="M483.4,306.4 496.3,300.2 496.8,302.6 484.9,308.3Z"/>
<path class="k" d="M496.3,300.2 510.5,300.2 510,302.6 496.8,302.6Z"/>
<path class="k" d="M510.5,300.2 523.3,306.4 521.8,308.3 510,302.6Z"/>
<path class="k" d="M523.3,306.4 532.2,317.5 530,318.6 521.8,308.3Z"/>
<path class="k" d="M532.2,317.5 535.4,331.4 532.9,331.4 530,318.6Z"/>
<path fill="#0000d0" d="M637.6,417 640.7,405.8 627.5,401.8 624.4,413Z"/>
<path fill="#0000ca" d="M651,420.3 654.1,409.1 640.7,405.8 637.6,417Z"/>
<path fill="#00005a" stroke="#00005a" d="M460.7,384.1 462.5,384 451.2,369.9 449.4,369.8Z"/>
<path class="e" d="M460.7,384.1L462.5,384M462.5,384L451.2,369.9M451.2,369.9L449.4,369.8"/>
<path fill="#0000a8" d="M707.6,414.1 710.8,402.9 697.7,402.9 694.5,414.1Z"/>
<path fill="#0000e5" d="M475.5,282.6 477.6,275.1 472.3,262 470.2,269.5Z"/>
<path fill="#000056" stroke="#000056" d="M573.6,412.6 575,411.5 562,403.8 560.3,404.8Z"/>
<path class="e" d="M573.6,412.6L575,411.5M575,411.5L562,403.8M562,403.8L560.3,404.8"/>
<path fill="#0000ee" d="M550.7,313.3 553.8,302.2 546.8,293.3 543.6,304.5Z"/>
<path fill="#000056" d="M603,424.8 608.3,415.7 595.4,410 588.7,418.5Z"/>
<path fill="#0000d5" d="M624.4,413 627.5,401.8 614.6,397 611.5,408.2Z"/>
<path fill="#000093" d="M736,400.5 739.1,389.3 726.8,390.9 723.6,402.1Z"/>
<path fill="#000056" d="M809.2,373.3 800.3,374.5 789.4,379.9 797.7,379Z"/>
<path fill="#0000c3" d="M664.5,422.8 667.6,411.6 654.1,409.1 651,420.3Z"/>
<path fill="#000076" d="M788.6,352.4 791.8,341.2 782.1,346 778.9,357.2Z"/>
<path fill="#000056" d="M678.9,443.3 677.3,432.6 663.3,430.9 663.5,441.4Z"/>
<path fill="#000074" stroke="#000074" d="M830.4,432.4 836.8,426.4 822.2,433.6 816.2,439.4Z"/>
<path class="e" d="M830.4,432.4L836.8,426.4M822.2,433.6L816.2,439.4M816.2,439.4L830.4,432.4M830.4,432.4L822.2,433.6M836.8,426.4L816.2,439.4"/>
<path fill="#000056" stroke="#000056" d="M824.8,472.5 823.4,472.7 806.5,479.2 807.9,479Z"/>
<path class="e" d="M824.8,472.5L823.4,472.7M806.5,479.2L807.9,479M807.9,479L824.8,472.5"/>
<path fill="#000056" stroke="#000056" d="M710.2,446 709.2,444.3 694.2,444.3 694.9,446Z"/>
<path class="e" d="M710.2,446L709.2,444.3M709.2,444.3L694.2,444.3M694.2,444.3L694.9,446"/>
<path fill="#0000e4" stroke="#0000e4" d="M496.4,388 497.4,386.1 485.9,374 485,375.9Z"/>
<path class="e" d="M496.4,388L497.4,386.1M497.4,386.1L485.9,374M485.9,374L485,375.9"/>
<path fill="#0000e9" stroke="#0000e9" d="M461.6,323.1 464.4,313.3 457,299.3 454.2,309.2Z"/>
<path class="e" d="M461.6,323.1L464.4,313.3M457,299.3L454.2,309.2M461.6,323.1L457,299.3M464.4,313.3L454.2,309.2"/>
<path fill="#000068" stroke="#000068" d="M492.9,390.9 494.8,389.8 483.3,377.5 481.3,378.5Z"/>
<path class="e" d="M492.9,390.9L494.8,389.8M483.3,377.5L481.3,378.5M481.3,378.5L492.9,390.9"/>
<path fill="#0000db" d="M611.5,408.2 614.6,397 602.1,391.5 599,402.7Z"/>
<path fill="#000075" d="M775.8,368.4 778.9,357.2 768.5,361.2 765.3,372.4Z"/>
<path fill="#0000b2" stroke="#0000b2" d="M494.8,389.8 496.4,388 485,375.9 483.3,377.5Z"/>
<path class="e" d="M494.8,389.8L496.4,388M485,375.9L483.3,377.5"/>
<path fill="#0000ef" d="M555.6,333.1 558.7,321.9 550.7,313.3 547.5,324.5Z"/>
<path fill="#00005b" stroke="#00005b" d="M559.2,404.6 560.3,404.8 547.9,396.3 546.6,396Z"/>
<path class="e" d="M559.2,404.6L560.3,404.8M547.9,396.3L546.6,396M546.6,396L559.2,404.6"/>
<path fill="#0000bb" d="M678,424.4 681.1,413.3 667.6,411.6 664.5,422.8Z"/>
<path fill="#000056" stroke="#000056" d="M823.4,472.7 821.8,471.8 805.1,478.2 806.5,479.2Z"/>
<path class="e" d="M823.4,472.7L821.8,471.8M821.8,471.8L805.1,478.2M805.1,478.2L806.5,479.2"/>
<path fill="#000056" d="M588.7,418.5 595.4,410 582.9,403.7 575,411.5Z"/>
<path fill="#0000ea" d="M578.8,378.7 582,367.5 571.3,360.2 568.1,371.4Z"/>
<path fill="#000079" d="M856.7,375.8 858.9,368.3 847.8,377 845.7,384.5Z"/>
<path fill="#000056" stroke="#000056" d="M726.5,445.5 725.1,445.1 710.2,446 711.4,446.5Z"/>
<path class="e" d="M726.5,445.5L725.1,445.1M710.2,446L711.4,446.5M711.4,446.5L726.5,445.5"/>
<path fill="#00007c" d="M762.1,383.6 765.3,372.4 754.1,375.6 751,386.8Z"/>
<path fill="#000056" d="M694.2,444.3 691.2,433.5 677.3,432.6 678.9,443.3Z"/>
<path fill="#000075" stroke="#000075" d="M789.7,459.7 789.8,457.6 773.9,462.2 773.8,464.3Z"/>
<path class="e" d="M789.7,459.7L789.8,457.6M789.8,457.6L773.9,462.2M773.9,462.2L773.8,464.3"/>
<path fill="#0000a6" stroke="#0000a6" d="M464.5,289.9 475.5,282.6 470.2,269.5 459,276.2Z"/>
<path class="e" d="M464.5,289.9L475.5,282.6M475.5,282.6L470.2,269.5M470.2,269.5L459,276.2M464.5,289.9L470.2,269.5M475.5,282.6L459,276.2"/>
<path fill="#00005e" stroke="#00005e" d="M635.4,424.9 636,422.5 622.6,418.4 621.7,420.7Z"/>
<path class="e" d="M635.4,424.9L636,422.5M622.6,418.4L621.7,420.7M621.7,420.7L635.4,424.9"/>
<path fill="#00005c" stroke="#00005c" d="M791.5,463.9 790.3,462 774.3,466.6 775.3,468.6Z"/>
<path class="e" d="M791.5,463.9L790.3,462M774.3,466.6L775.3,468.6M775.3,468.6L791.5,463.9"/>
<path fill="#00009e" d="M720.4,413.3 723.6,402.1 710.8,402.9 707.6,414.1Z"/>
<path fill="#00005c" stroke="#00005c" d="M649.3,428.3 649.7,425.9 636,422.5 635.4,424.9Z"/>
<path class="e" d="M649.3,428.3L649.7,425.9M636,422.5L635.4,424.9M635.4,424.9L649.3,428.3"/>
<path fill="#0000e1" d="M599,402.7 602.1,391.5 590.2,385.4 587,396.6Z"/>
<path fill="#000069" stroke="#000069" d="M790.3,462 789.7,459.7 773.8,464.3 774.3,466.6Z"/>
<path class="e" d="M790.3,462L789.7,459.7M773.8,464.3L774.3,466.6"/>
<path fill="#0000c5" stroke="#0000c5" d="M636.8,419.6 637.6,417 624.4,413 623.6,415.6Z"/>
<path class="e" d="M636.8,419.6L637.6,417M637.6,417L624.4,413M624.4,413L623.6,415.6"/>
<path fill="#0000ef" d="M561.4,352.4 564.6,341.3 555.6,333.1 552.4,344.2Z"/>
<path fill="#0000bf" stroke="#0000bf" d="M650.3,422.9 651,420.3 637.6,417 636.8,419.6Z"/>
<path class="e" d="M650.3,422.9L651,420.3M651,420.3L637.6,417M637.6,417L636.8,419.6"/>
<path fill="#000057" stroke="#000057" d="M560.3,404.8 562,403.8 549.9,395.5 547.9,396.3Z"/>
<path class="e" d="M560.3,404.8L562,403.8M562,403.8L549.9,395.5M549.9,395.5L547.9,396.3"/>
<path fill="#000078" stroke="#000078" d="M850.1,418.1 852.9,408.2 839.6,416.5 836.8,426.4Z"/>
<path class="e" d="M850.1,418.1L852.9,408.2M839.6,416.5L836.8,426.4M850.1,418.1L839.6,416.5M852.9,408.2L836.8,426.4"/>
<path fill="#000060" stroke="#000060" d="M621.7,420.7 622.6,418.4 609.4,413.5 608.3,415.7Z"/>
<path class="e" d="M621.7,420.7L622.6,418.4M609.4,413.5L608.3,415.7M608.3,415.7L621.7,420.7"/>
<path fill="#00009b" stroke="#00009b" d="M636,422.5 636.8,419.6 623.6,415.6 622.6,418.4Z"/>
<path class="e" d="M636,422.5L636.8,419.6M623.6,415.6L622.6,418.4"/>
<path fill="#000097" stroke="#000097" d="M649.7,425.9 650.3,422.9 636.8,419.6 636,422.5Z"/>
<path class="e" d="M649.7,425.9L650.3,422.9M636.8,419.6L636,422.5"/>
<path fill="#0000b2" d="M691.3,425.3 694.5,414.1 681.1,413.3 678,424.4Z"/>
<path fill="#00005b" stroke="#00005b" d="M663.3,430.9 663.5,428.4 649.7,425.9 649.3,428.3Z"/>
<path class="e" d="M663.3,430.9L663.5,428.4M649.7,425.9L649.3,428.3M649.3,428.3L663.3,430.9"/>
<path fill="#0000ca" stroke="#0000ca" d="M623.6,415.6 624.4,413 611.5,408.2 610.6,410.8Z"/>
<path class="e" d="M623.6,415.6L624.4,413M624.4,413L611.5,408.2M611.5,408.2L610.6,410.8"/>
<path fill="#0000b9" stroke="#0000b9" d="M663.9,425.4 664.5,422.8 651,420.3 650.3,422.9Z"/>
<path class="e" d="M663.9,425.4L664.5,422.8M664.5,422.8L651,420.3M651,420.3L650.3,422.9"/>
<path fill="#00009f" stroke="#00009f" d="M622.6,418.4 623.6,415.6 610.6,410.8 609.4,413.5Z"/>
<path class="e" d="M622.6,418.4L623.6,415.6M610.6,410.8L609.4,413.5"/>
<path fill="#000056" d="M462.5,384 481.3,378.5 471,365.7 451.2,369.9Z"/>
<path fill="#000091" stroke="#000091" d="M663.5,428.4 663.9,425.4 650.3,422.9 649.7,425.9Z"/>
<path class="e" d="M663.5,428.4L663.9,425.4M650.3,422.9L649.7,425.9"/>
<path fill="#0000ee" d="M485.9,374 489.2,362.4 479.2,349.9 475.9,361.5Z"/>
<path fill="#000088" d="M747.8,398 751,386.8 739.1,389.3 736,400.5Z"/>
<path fill="#000056" stroke="#000056" d="M725.1,445.1 723.8,443.4 709.2,444.3 710.2,446Z"/>
<path class="e" d="M725.1,445.1L723.8,443.4M723.8,443.4L709.2,444.3M709.2,444.3L710.2,446"/>
<path fill="#0000df" d="M472.3,262 474.4,254.5 470.8,241.3 468.7,248.8Z"/>
<path fill="#000062" stroke="#000062" d="M608.3,415.7 609.4,413.5 596.7,407.9 595.4,410Z"/>
<path class="e" d="M608.3,415.7L609.4,413.5M596.7,407.9L595.4,410M595.4,410L608.3,415.7"/>
<path fill="#000056" d="M575,411.5 582.9,403.7 571.1,396.7 562,403.8Z"/>
<path fill="#0000e9" d="M540.8,284.2 543.9,273.1 539,263.8 535.9,275Z"/>
<path fill="#0000d0" stroke="#0000d0" d="M610.6,410.8 611.5,408.2 599,402.7 598,405.3Z"/>
<path class="e" d="M610.6,410.8L611.5,408.2M611.5,408.2L599,402.7M599,402.7L598,405.3"/>
<path fill="#000058" stroke="#000058" d="M677.3,432.6 677.2,430.1 663.5,428.4 663.3,430.9Z"/>
<path class="e" d="M677.3,432.6L677.2,430.1M663.5,428.4L663.3,430.9M663.3,430.9L677.3,432.6"/>
<path fill="#00006c" stroke="#00006c" d="M862.9,387.3 856.7,375.8 845.7,384.5 851.3,396.3Z"/>
<path class="e" d="M862.9,387.3L856.7,375.8M856.7,375.8L845.7,384.5M845.7,384.5L851.3,396.3M862.9,387.3L845.7,384.5M856.7,375.8L851.3,396.3"/>
<path fill="#0000a4" stroke="#0000a4" d="M609.4,413.5 610.6,410.8 598,405.3 596.7,407.9Z"/>
<path class="e" d="M609.4,413.5L610.6,410.8M598,405.3L596.7,407.9"/>
<path fill="#0000b1" stroke="#0000b1" d="M677.4,427.1 678,424.4 664.5,422.8 663.9,425.4Z"/>
<path class="e" d="M677.4,427.1L678,424.4M678,424.4L664.5,422.8M664.5,422.8L663.9,425.4"/>
<path fill="#000067" d="M512.5,291.7 519.4,297.2 513.8,286.7 506.6,280.6Z"/>
<path fill="#000056" d="M709.2,444.3 704.8,433.5 691.2,433.5 694.2,444.3Z"/>
<path fill="#0000ec" d="M543.6,304.5 546.8,293.3 540.8,284.2 537.6,295.4Z"/>
<path fill="#0000e6" d="M587,396.6 590.2,385.4 578.8,378.7 575.6,389.8Z"/>
<path fill="#0000d0" stroke="#0000d0" d="M457,299.3 464.5,289.9 459,276.2 451.3,285.2Z"/>
<path class="e" d="M457,299.3L464.5,289.9M459,276.2L451.3,285.2M457,299.3L459,276.2M464.5,289.9L451.3,285.2"/>
<path fill="#0000ed" d="M568.1,371.4 571.3,360.2 561.4,352.4 558.3,363.6Z"/>
<path fill="#00005d" stroke="#00005d" d="M546.6,396 547.9,396.3 536.4,387.3 534.9,386.9Z"/>
<path class="e" d="M546.6,396L547.9,396.3M536.4,387.3L534.9,386.9M534.9,386.9L546.6,396"/>
<path fill="#00008c" stroke="#00008c" d="M677.2,430.1 677.4,427.1 663.9,425.4 663.5,428.4Z"/>
<path class="e" d="M677.2,430.1L677.4,427.1M663.9,425.4L663.5,428.4"/>
<path fill="#000056" d="M821.8,471.8 806.6,458 791.5,463.9 805.1,478.2Z"/>
<path fill="#0000a8" d="M704.5,425.3 707.6,414.1 694.5,414.1 691.3,425.3Z"/>
<path fill="#000075" d="M804.6,451.9 807.9,440.3 793.1,446 789.8,457.6Z"/>
<path fill="#000078" d="M797.4,346.9 800.5,335.8 791.8,341.2 788.6,352.4Z"/>
<path fill="#0000ee" d="M547.5,324.5 550.7,313.3 543.6,304.5 540.4,315.7Z"/>
<path fill="#000064" stroke="#000064" d="M595.4,410 596.7,407.9 584.5,401.7 582.9,403.7Z"/>
<path class="e" d="M595.4,410L596.7,407.9M584.5,401.7L582.9,403.7M582.9,403.7L595.4,410"/>
<path fill="#000093" d="M732.8,411.6 736,400.5 723.6,402.1 720.4,413.3Z"/>
<path class="k" d="M532.9,331.4 530,344.2 523.8,341.2 526,331.4Z"/>
<path class="k" d="M530,344.2 521.8,354.5 517.5,349.1 523.8,341.2Z"/>
<path class="k" d="M521.8,354.5 510,360.2 508.4,353.5 517.5,349.1Z"/>
<path class="k" d="M510,360.2 496.8,360.2 498.3,353.5 508.4,353.5Z"/>
<path class="k" d="M496.8,360.2 484.9,354.5 489.3,349.1 498.3,353.5Z"/>
<path class="k" d="M484.9,354.5 476.7,344.2 483,341.2 489.3,349.1Z"/>
<path class="k" d="M476.7,344.2 473.8,331.4 480.8,331.4 483,341.2Z"/>
<path class="k" d="M473.8,331.4 476.7,318.6 483,321.6 480.8,331.4Z"/>
<path class="k" d="M476.7,318.6 484.9,308.3 489.3,313.7 483,321.6Z"/>
<path class="k" d="M484.9,308.3 496.8,302.6 498.3,309.3 489.3,313.7Z"/>
<path class="k" d="M496.8,302.6 510,302.6 508.4,309.3 498.3,309.3Z"/>
<path class="k" d="M510,302.6 521.8,308.3 517.5,313.7 508.4,309.3Z"/>
<path class="k" d="M521.8,308.3 530,318.6 523.8,321.6 517.5,313.7Z"/>
<path class="k" d="M530,318.6 532.9,331.4 526,331.4 523.8,321.6Z"/>
<path fill="#0000d6" stroke="#0000d6" d="M598,405.3 599,402.7 587,396.6 586,399.1Z"/>
<path class="e" d="M598,405.3L599,402.7M599,402.7L587,396.6M587,396.6L586,399.1"/>
<path fill="#000056" stroke="#000056" d="M741.1,443.6 739.5,443.1 725.1,445.1 726.5,445.5Z"/>
<path class="e" d="M741.1,443.6L739.5,443.1M725.1,445.1L726.5,445.5M726.5,445.5L741.1,443.6"/>
<path fill="#000076" d="M785.4,363.6 788.6,352.4 778.9,357.2 775.8,368.4Z"/>
<path fill="#000079" d="M868.5,358.8 870.6,351.3 861,360.8 858.9,368.3Z"/>
<path fill="#000059" stroke="#000059" d="M691.2,433.5 690.8,430.9 677.2,430.1 677.3,432.6Z"/>
<path class="e" d="M691.2,433.5L690.8,430.9M677.2,430.1L677.3,432.6M677.3,432.6L691.2,433.5"/>
<path fill="#0000a8" stroke="#0000a8" d="M596.7,407.9 598,405.3 586,399.1 584.5,401.7Z"/>
<path class="e" d="M596.7,407.9L598,405.3M586,399.1L584.5,401.7"/>
<path fill="#00005b" d="M819.7,366.8 810.3,368.3 800.3,374.5 809.2,373.3Z"/>
<path fill="#0000e6" stroke="#0000e6" d="M463.8,331.5 461.6,323.1 454.2,309.2 456.6,317.9Z"/>
<path class="e" d="M463.8,331.5L461.6,323.1M454.2,309.2L456.6,317.9M456.6,317.9L463.8,331.5M463.8,331.5L454.2,309.2M461.6,323.1L456.6,317.9"/>
<path fill="#0000a8" stroke="#0000a8" d="M690.9,427.9 691.3,425.3 678,424.4 677.4,427.1Z"/>
<path class="e" d="M690.9,427.9L691.3,425.3M691.3,425.3L678,424.4M678,424.4L677.4,427.1"/>
<path fill="#000066" stroke="#000066" d="M448.3,368.9 449.4,369.8 439.7,355.2 438.5,354.2Z"/>
<path class="e" d="M448.3,368.9L449.4,369.8M439.7,355.2L438.5,354.2M438.5,354.2L448.3,368.9"/>
<path fill="#000057" stroke="#000057" d="M547.9,396.3 549.9,395.5 538.6,386.6 536.4,387.3Z"/>
<path class="e" d="M547.9,396.3L549.9,395.5M549.9,395.5L538.6,386.6M538.6,386.6L536.4,387.3"/>
<path fill="#000086" stroke="#000086" d="M690.8,430.9 690.9,427.9 677.4,427.1 677.2,430.1Z"/>
<path class="e" d="M690.8,430.9L690.9,427.9M677.4,427.1L677.2,430.1"/>
<path fill="#000075" d="M772.6,379.5 775.8,368.4 765.3,372.4 762.1,383.6Z"/>
<path fill="#0000ef" d="M552.4,344.2 555.6,333.1 547.5,324.5 544.3,335.7Z"/>
<path fill="#000056" d="M562,403.8 571.1,396.7 560.1,389.1 549.9,395.5Z"/>
<path fill="#000075" stroke="#000075" d="M864.7,398.9 862.9,387.3 851.3,396.3 852.9,408.2Z"/>
<path class="e" d="M864.7,398.9L862.9,387.3M851.3,396.3L852.9,408.2M864.7,398.9L851.3,396.3M862.9,387.3L852.9,408.2"/>
<path fill="#0000e3" stroke="#0000e3" d="M485,375.9 485.9,374 475.9,361.5 474.9,363.3Z"/>
<path class="e" d="M485,375.9L485.9,374M485.9,374L475.9,361.5M475.9,361.5L474.9,363.3"/>
<path fill="#000067" stroke="#000067" d="M481.3,378.5 483.3,377.5 473.1,364.9 471,365.7Z"/>
<path class="e" d="M481.3,378.5L483.3,377.5M473.1,364.9L471,365.7M471,365.7L481.3,378.5"/>
<path fill="#00005b" stroke="#00005b" d="M449.4,369.8 451.2,369.9 441.6,355.4 439.7,355.2Z"/>
<path class="e" d="M449.4,369.8L451.2,369.9M451.2,369.9L441.6,355.4M441.6,355.4L439.7,355.2"/>
<path fill="#0000ea" d="M575.6,389.8 578.8,378.7 568.1,371.4 565,382.6Z"/>
<path fill="#0000b2" stroke="#0000b2" d="M483.3,377.5 485,375.9 474.9,363.3 473.1,364.9Z"/>
<path class="e" d="M483.3,377.5L485,375.9M474.9,363.3L473.1,364.9"/>
<path fill="#000056" stroke="#000056" d="M739.5,443.1 738,441.5 723.8,443.4 725.1,445.1Z"/>
<path class="e" d="M739.5,443.1L738,441.5M738,441.5L723.8,443.4M723.8,443.4L725.1,445.1"/>
<path fill="#000056" d="M723.8,443.4 718.1,432.6 704.8,433.5 709.2,444.3Z"/>
<path fill="#0000df" d="M470.2,269.5 472.3,262 468.7,248.8 466.6,256.3Z"/>
<path fill="#000065" stroke="#000065" d="M582.9,403.7 584.5,401.7 572.9,394.8 571.1,396.7Z"/>
<path class="e" d="M582.9,403.7L584.5,401.7M572.9,394.8L571.1,396.7M571.1,396.7L582.9,403.7"/>
<path fill="#00007c" d="M759,394.7 762.1,383.6 751,386.8 747.8,398Z"/>
<path fill="#0000dc" stroke="#0000dc" d="M586,399.1 587,396.6 575.6,389.8 574.6,392.3Z"/>
<path class="e" d="M586,399.1L587,396.6M587,396.6L575.6,389.8M575.6,389.8L574.6,392.3"/>
<path fill="#00009e" d="M717.3,424.5 720.4,413.3 707.6,414.1 704.5,425.3Z"/>
<path fill="#0000ac" stroke="#0000ac" d="M584.5,401.7 586,399.1 574.6,392.3 572.9,394.8Z"/>
<path class="e" d="M584.5,401.7L586,399.1M574.6,392.3L572.9,394.8"/>
<path fill="#000075" stroke="#000075" d="M843.4,424.3 850.1,418.1 836.8,426.4 830.4,432.4Z"/>
<path class="e" d="M843.4,424.3L850.1,418.1M836.8,426.4L830.4,432.4M830.4,432.4L843.4,424.3M843.4,424.3L836.8,426.4M850.1,418.1L830.4,432.4"/>
<path fill="#0000ef" d="M558.3,363.6 561.4,352.4 552.4,344.2 549.3,355.4Z"/>
<path fill="#000056" stroke="#000056" d="M840.5,464.7 838.9,465 823.4,472.7 824.8,472.5Z"/>
<path class="e" d="M840.5,464.7L838.9,465M823.4,472.7L824.8,472.5M824.8,472.5L840.5,464.7"/>
<path fill="#00005a" stroke="#00005a" d="M704.8,433.5 704.2,431 690.8,430.9 691.2,433.5Z"/>
<path class="e" d="M704.8,433.5L704.2,431M690.8,430.9L691.2,433.5M691.2,433.5L704.8,433.5"/>
<path fill="#00009f" stroke="#00009f" d="M704.1,428 704.5,425.3 691.3,425.3 690.9,427.9Z"/>
<path class="e" d="M704.1,428L704.5,425.3M704.5,425.3L691.3,425.3M691.3,425.3L690.9,427.9"/>
<path fill="#000073" stroke="#000073" d="M804.5,454 804.6,451.9 789.8,457.6 789.7,459.7Z"/>
<path class="e" d="M804.5,454L804.6,451.9M804.6,451.9L789.8,457.6M789.8,457.6L789.7,459.7"/>
<path fill="#00007f" stroke="#00007f" d="M704.2,431 704.1,428 690.9,427.9 690.8,430.9Z"/>
<path class="e" d="M704.2,431L704.1,428M690.9,427.9L690.8,430.9"/>
<path fill="#00005c" stroke="#00005c" d="M806.6,458 805.3,456.2 790.3,462 791.5,463.9Z"/>
<path class="e" d="M806.6,458L805.3,456.2M790.3,462L791.5,463.9M791.5,463.9L806.6,458"/>
<path fill="#0000e5" stroke="#0000e5" d="M454.2,309.2 457,299.3 451.3,285.2 448.5,295.1Z"/>
<path class="e" d="M454.2,309.2L457,299.3M451.3,285.2L448.5,295.1M454.2,309.2L451.3,285.2M457,299.3L448.5,295.1"/>
<path fill="#00005e" stroke="#00005e" d="M534.9,386.9 536.4,387.3 526,377.7 524.3,377.2Z"/>
<path class="e" d="M534.9,386.9L536.4,387.3M526,377.7L524.3,377.2M524.3,377.2L534.9,386.9"/>
<path fill="#00006b" stroke="#00006b" d="M805.3,456.2 804.5,454 789.7,459.7 790.3,462Z"/>
<path class="e" d="M805.3,456.2L804.5,454M789.7,459.7L790.3,462"/>
<path fill="#000056" stroke="#000056" d="M838.9,465 837.2,464.2 821.8,471.8 823.4,472.7Z"/>
<path class="e" d="M838.9,465L837.2,464.2M837.2,464.2L821.8,471.8M821.8,471.8L823.4,472.7"/>
<path fill="#000088" d="M744.6,409.2 747.8,398 736,400.5 732.8,411.6Z"/>
<path fill="#0000e5" d="M535.9,275 539,263.8 535.3,254.5 532.1,265.7Z"/>
<path fill="#000079" d="M866.3,366.3 868.5,358.8 858.9,368.3 856.7,375.8Z"/>
<path fill="#0000e9" d="M537.6,295.4 540.8,284.2 535.9,275 532.7,286.2Z"/>
<path fill="#000056" stroke="#000056" d="M755,440.7 753.3,440.3 739.5,443.1 741.1,443.6Z"/>
<path class="e" d="M755,440.7L753.3,440.3M739.5,443.1L741.1,443.6M741.1,443.6L755,440.7"/>
<path fill="#000056" d="M549.9,395.5 560.1,389.1 549.8,381.1 538.6,386.6Z"/>
<path fill="#0000ec" d="M540.4,315.7 543.6,304.5 537.6,295.4 534.4,306.6Z"/>
<path fill="#0000ed" d="M565,382.6 568.1,371.4 558.3,363.6 555.1,374.8Z"/>
<path fill="#000066" stroke="#000066" d="M571.1,396.7 572.9,394.8 562.1,387.4 560.1,389.1Z"/>
<path class="e" d="M571.1,396.7L572.9,394.8M562.1,387.4L560.1,389.1M560.1,389.1L571.1,396.7"/>
<path fill="#0000ec" d="M475.9,361.5 479.2,349.9 470.7,337.1 467.4,348.6Z"/>
<path fill="#0000a2" stroke="#0000a2" d="M459,276.2 470.2,269.5 466.6,256.3 455.2,262.4Z"/>
<path class="e" d="M459,276.2L470.2,269.5M470.2,269.5L466.6,256.3M466.6,256.3L455.2,262.4M459,276.2L466.6,256.3M470.2,269.5L455.2,262.4"/>
<path fill="#0000df" stroke="#0000df" d="M574.6,392.3 575.6,389.8 565,382.6 563.9,385Z"/>
<path class="e" d="M574.6,392.3L575.6,389.8M575.6,389.8L565,382.6M565,382.6L563.9,385"/>
<path fill="#000058" stroke="#000058" d="M536.4,387.3 538.6,386.6 528.3,377.3 526,377.7Z"/>
<path class="e" d="M536.4,387.3L538.6,386.6M538.6,386.6L528.3,377.3M528.3,377.3L526,377.7"/>
<path fill="#000056" d="M451.2,369.9 471,365.7 462.4,352.6 441.6,355.4Z"/>
<path class="kp" d="M526,331.4 523.8,341.2 514.4,336.7 515.6,331.4Z"/>
<path class="kp" d="M523.8,341.2 517.5,349.1 511,341 514.4,336.7Z"/>
<path class="kp" d="M517.5,349.1 508.4,353.5 506.1,343.3 511,341Z"/>
<path class="kp" d="M508.4,353.5 498.3,353.5 500.7,343.3 506.1,343.3Z"/>
<path class="kp" d="M498.3,353.5 489.3,349.1 495.7,341 500.7,343.3Z"/>
<path class="kp" d="M489.3,349.1 483,341.2 492.3,336.7 495.7,341Z"/>
<path class="kp" d="M483,341.2 480.8,331.4 491.1,331.4 492.3,336.7Z"/>
<path class="kp" d="M480.8,331.4 483,321.6 492.3,326.1 491.1,331.4Z"/>
<path class="kp" d="M483,321.6 489.3,313.7 495.7,321.8 492.3,326.1Z"/>
<path class="kp" d="M489.3,313.7 498.3,309.3 500.7,319.5 495.7,321.8Z"/>
<path class="kp" d="M498.3,309.3 508.4,309.3 506.1,319.5 500.7,319.5Z"/>
<path class="kp" d="M508.4,309.3 517.5,313.7 511,321.8 506.1,319.5Z"/>
<path class="kp" d="M517.5,313.7 523.8,321.6 514.4,326.1 511,321.8Z"/>
<path class="kp" d="M523.8,321.6 526,331.4 515.6,331.4 514.4,326.1Z"/>
<path fill="#0000af" stroke="#0000af" d="M572.9,394.8 574.6,392.3 563.9,385 562.1,387.4Z"/>
<path class="e" d="M572.9,394.8L574.6,392.3M563.9,385L562.1,387.4"/>
<path fill="#000069" d="M506.6,280.6 513.8,286.7 509.6,276.2 502.1,269.5Z"/>
<path fill="#000079" d="M805.2,340.8 808.3,329.7 800.5,335.8 797.4,346.9Z"/>
<path fill="#000078" d="M794.2,358.1 797.4,346.9 788.6,352.4 785.4,363.6Z"/>
<path fill="#000056" d="M738,441.5 731,430.9 718.1,432.6 723.8,443.4Z"/>
<path fill="#000079" stroke="#000079" d="M861.9,408.8 864.7,398.9 852.9,408.2 850.1,418.1Z"/>
<path class="e" d="M861.9,408.8L864.7,398.9M852.9,408.2L850.1,418.1M861.9,408.8L852.9,408.2M864.7,398.9L850.1,418.1"/>
<path fill="#0000ee" d="M544.3,335.7 547.5,324.5 540.4,315.7 537.3,326.8Z"/>
<path fill="#00005a" stroke="#00005a" d="M718.1,432.6 717.3,430.1 704.2,431 704.8,433.5Z"/>
<path class="e" d="M718.1,432.6L717.3,430.1M704.2,431L704.8,433.5M704.8,433.5L718.1,432.6"/>
<path fill="#000095" stroke="#000095" d="M717,427.1 717.3,424.5 704.5,425.3 704.1,428Z"/>
<path class="e" d="M717,427.1L717.3,424.5M717.3,424.5L704.5,425.3M704.5,425.3L704.1,428"/>
<path fill="#000093" d="M729.6,422.8 732.8,411.6 720.4,413.3 717.3,424.5Z"/>
<path fill="#000076" d="M782.3,374.8 785.4,363.6 775.8,368.4 772.6,379.5Z"/>
<path fill="#000078" stroke="#000078" d="M717.3,430.1 717,427.1 704.1,428 704.2,431Z"/>
<path class="e" d="M717.3,430.1L717,427.1M704.1,428L704.2,431"/>
<path fill="#000056" stroke="#000056" d="M753.3,440.3 751.5,438.7 738,441.5 739.5,443.1Z"/>
<path class="e" d="M753.3,440.3L751.5,438.7M751.5,438.7L738,441.5M738,441.5L739.5,443.1"/>
<path fill="#0000d8" d="M468.7,248.8 470.8,241.3 468.9,228.3 466.7,235.8Z"/>
<path fill="#000076" d="M818.3,445.2 821.5,433.6 807.9,440.3 804.6,451.9Z"/>
<path fill="#000075" d="M769.4,390.7 772.6,379.5 762.1,383.6 759,394.7Z"/>
<path fill="#0000ef" d="M549.3,355.4 552.4,344.2 544.3,335.7 541.2,346.9Z"/>
<path fill="#000064" d="M829.1,359.4 819.1,361.4 810.3,368.3 819.7,366.8Z"/>
<path fill="#00006d" stroke="#00006d" d="M872.9,377.4 866.3,366.3 856.7,375.8 862.9,387.3Z"/>
<path class="e" d="M872.9,377.4L866.3,366.3M866.3,366.3L856.7,375.8M856.7,375.8L862.9,387.3M872.9,377.4L856.7,375.8M866.3,366.3L862.9,387.3"/>
<path fill="#000056" d="M837.2,464.2 820.6,451.2 806.6,458 821.8,471.8Z"/>
<path class="k" d="M852.6,400.4 849.5,414.3 847.3,413.2 850.2,400.4Z"/>
<path class="k" d="M849.5,414.3 840.6,425.4 839.1,423.5 847.3,413.2Z"/>
<path class="k" d="M840.6,425.4 827.8,431.6 827.2,429.2 839.1,423.5Z"/>
<path class="k" d="M827.8,431.6 813.5,431.6 814.1,429.2 827.2,429.2Z"/>
<path class="k" d="M813.5,431.6 800.7,425.4 802.2,423.5 814.1,429.2Z"/>
<path class="k" d="M800.7,425.4 791.8,414.3 794,413.2 802.2,423.5Z"/>
<path class="k" d="M791.8,414.3 788.6,400.4 791.1,400.4 794,413.2Z"/>
<path class="k" d="M788.6,400.4 791.8,386.5 794,387.6 791.1,400.4Z"/>
<path class="k" d="M791.8,386.5 800.7,375.4 802.2,377.3 794,387.6Z"/>
<path class="k" d="M800.7,375.4 813.5,369.2 814.1,371.6 802.2,377.3Z"/>
<path class="k" d="M813.5,369.2 827.8,369.2 827.2,371.6 814.1,371.6Z"/>
<path class="k" d="M827.8,369.2 840.6,375.4 839.1,377.3 827.2,371.6Z"/>
<path class="k" d="M840.6,375.4 849.5,386.5 847.3,387.6 839.1,377.3Z"/>
<path class="k" d="M849.5,386.5 852.6,400.4 850.2,400.4 847.3,387.6Z"/>
<path fill="#0000cb" stroke="#0000cb" d="M451.3,285.2 459,276.2 455.2,262.4 447.4,271.1Z"/>
<path class="e" d="M451.3,285.2L459,276.2M455.2,262.4L447.4,271.1M451.3,285.2L455.2,262.4M459,276.2L447.4,271.1"/>
<path fill="#00007c" d="M755.8,405.9 759,394.7 747.8,398 744.6,409.2Z"/>
<path class="kp" d="M515.6,331.4 514.4,336.7 503.4,331.4 503.4,331.4Z"/>
<path class="kp" d="M514.4,336.7 511,341 503.4,331.4 503.4,331.4Z"/>
<path class="kp" d="M511,341 506.1,343.3 503.4,331.4 503.4,331.4Z"/>
<path class="kp" d="M506.1,343.3 500.7,343.3 503.4,331.4 503.4,331.4Z"/>
<path class="kp" d="M500.7,343.3 495.7,341 503.4,331.4 503.4,331.4Z"/>
<path class="kp" d="M495.7,341 492.3,336.7 503.4,331.4 503.4,331.4Z"/>
<path class="kp" d="M492.3,336.7 491.1,331.4 503.4,331.4 503.4,331.4Z"/>
<path class="kp" d="M491.1,331.4 492.3,326.1 503.4,331.4 503.4,331.4Z"/>
<path class="kp" d="M492.3,326.1 495.7,321.8 503.4,331.4 503.4,331.4Z"/>
<path class="kp" d="M495.7,321.8 500.7,319.5 503.4,331.4 503.4,331.4Z"/>
<path class="kp" d="M500.7,319.5 506.1,319.5 503.4,331.4 503.4,331.4Z"/>
<path class="kp" d="M506.1,319.5 511,321.8 503.4,331.4 503.4,331.4Z"/>
<path class="kp" d="M511,321.8 514.4,326.1 503.4,331.4 503.4,331.4Z"/>
<path class="kp" d="M514.4,326.1 515.6,331.4 503.4,331.4 503.4,331.4Z"/>
<path fill="#000067" stroke="#000067" d="M560.1,389.1 562.1,387.4 552,379.5 549.8,381.1Z"/>
<path class="e" d="M560.1,389.1L562.1,387.4M552,379.5L549.8,381.1M549.8,381.1L560.1,389.1"/>
<path fill="#0000e2" stroke="#0000e2" d="M563.9,385 565,382.6 555.1,374.8 554,377.2Z"/>
<path class="e" d="M563.9,385L565,382.6M565,382.6L555.1,374.8M555.1,374.8L554,377.2"/>
<path fill="#000060" stroke="#000060" d="M524.3,377.2 526,377.7 516.6,367.8 514.7,367.1Z"/>
<path class="e" d="M524.3,377.2L526,377.7M516.6,367.8L514.7,367.1M514.7,367.1L524.3,377.2"/>
<path fill="#0000e1" stroke="#0000e1" d="M474.9,363.3 475.9,361.5 467.4,348.6 466.4,350.4Z"/>
<path class="e" d="M474.9,363.3L475.9,361.5M475.9,361.5L467.4,348.6M467.4,348.6L466.4,350.4"/>
<path fill="#0000ef" d="M555.1,374.8 558.3,363.6 549.3,355.4 546.1,366.6Z"/>
<path fill="#0000b1" stroke="#0000b1" d="M562.1,387.4 563.9,385 554,377.2 552,379.5Z"/>
<path class="e" d="M562.1,387.4L563.9,385M554,377.2L552,379.5"/>
<path fill="#000067" stroke="#000067" d="M471,365.7 473.1,364.9 464.6,351.9 462.4,352.6Z"/>
<path class="e" d="M471,365.7L473.1,364.9M464.6,351.9L462.4,352.6M462.4,352.6L471,365.7"/>
<path fill="#000056" d="M538.6,386.6 549.8,381.1 540.5,372.6 528.3,377.3Z"/>
<path fill="#0000b0" stroke="#0000b0" d="M473.1,364.9 474.9,363.3 466.4,350.4 464.6,351.9Z"/>
<path class="e" d="M473.1,364.9L474.9,363.3M466.4,350.4L464.6,351.9"/>
<path fill="#0000e2" stroke="#0000e2" d="M456.6,317.9 454.2,309.2 448.5,295.1 451.1,304.1Z"/>
<path class="e" d="M456.6,317.9L454.2,309.2M448.5,295.1L451.1,304.1M451.1,304.1L456.6,317.9M456.6,317.9L448.5,295.1M454.2,309.2L451.1,304.1"/>
<path fill="#00007a" d="M876.6,348.5 878.7,341 870.6,351.3 868.5,358.8Z"/>
<path fill="#00008b" stroke="#00008b" d="M729.4,425.5 729.6,422.8 717.3,424.5 717,427.1Z"/>
<path class="e" d="M729.4,425.5L729.6,422.8M729.6,422.8L717.3,424.5M717.3,424.5L717,427.1"/>
<path fill="#00005b" stroke="#00005b" d="M731,430.9 729.9,428.4 717.3,430.1 718.1,432.6Z"/>
<path class="e" d="M731,430.9L729.9,428.4M717.3,430.1L718.1,432.6M718.1,432.6L731,430.9"/>
<path fill="#000068" stroke="#000068" d="M438.5,354.2 439.7,355.2 431.8,340.3 430.6,339.2Z"/>
<path class="e" d="M438.5,354.2L439.7,355.2M431.8,340.3L430.6,339.2M430.6,339.2L438.5,354.2"/>
<path fill="#000070" stroke="#000070" d="M729.9,428.4 729.4,425.5 717,427.1 717.3,430.1Z"/>
<path class="e" d="M729.9,428.4L729.4,425.5M717,427.1L717.3,430.1"/>
<path fill="#000088" d="M741.5,420.3 744.6,409.2 732.8,411.6 729.6,422.8Z"/>
<path fill="#000056" stroke="#000056" d="M768.3,436.8 766.3,436.5 753.3,440.3 755,440.7Z"/>
<path class="e" d="M768.3,436.8L766.3,436.5M753.3,440.3L755,440.7M755,440.7L768.3,436.8"/>
<path fill="#000056" d="M751.5,438.7 743.2,428.3 731,430.9 738,441.5Z"/>
<path fill="#000058" stroke="#000058" d="M526,377.7 528.3,377.3 519.1,367.5 516.6,367.8Z"/>
<path class="e" d="M526,377.7L528.3,377.3M528.3,377.3L519.1,367.5M519.1,367.5L516.6,367.8"/>
<path fill="#0000e5" d="M532.7,286.2 535.9,275 532.1,265.7 529,276.9Z"/>
<path fill="#0000df" d="M532.1,265.7 535.3,254.5 532.7,245.2 529.5,256.4Z"/>
<path fill="#0000e9" d="M534.4,306.6 537.6,295.4 532.7,286.2 529.5,297.4Z"/>
<path fill="#000076" stroke="#000076" d="M875,388.8 872.9,377.4 862.9,387.3 864.7,398.9Z"/>
<path class="e" d="M875,388.8L872.9,377.4M862.9,387.3L864.7,398.9M875,388.8L862.9,387.3M872.9,377.4L864.7,398.9"/>
<path fill="#00005b" stroke="#00005b" d="M439.7,355.2 441.6,355.4 433.8,340.7 431.8,340.3Z"/>
<path class="e" d="M439.7,355.2L441.6,355.4M441.6,355.4L433.8,340.7M433.8,340.7L431.8,340.3"/>
<path fill="#000075" stroke="#000075" d="M818.2,447.2 818.3,445.2 804.6,451.9 804.5,454Z"/>
<path class="e" d="M818.2,447.2L818.3,445.2M818.3,445.2L804.6,451.9M804.6,451.9L804.5,454"/>
<path fill="#00005d" stroke="#00005d" d="M820.6,451.2 819.1,449.4 805.3,456.2 806.6,458Z"/>
<path class="e" d="M820.6,451.2L819.1,449.4M805.3,456.2L806.6,458M806.6,458L820.6,451.2"/>
<path fill="#0000ec" d="M537.3,326.8 540.4,315.7 534.4,306.6 531.3,317.8Z"/>
<path fill="#0000d8" d="M466.6,256.3 468.7,248.8 466.7,235.8 464.6,243.3Z"/>
<path fill="#00006c" stroke="#00006c" d="M819.1,449.4 818.2,447.2 804.5,454 805.3,456.2Z"/>
<path class="e" d="M819.1,449.4L818.2,447.2M804.5,454L805.3,456.2"/>
<path fill="#000076" stroke="#000076" d="M855,415.3 861.9,408.8 850.1,418.1 843.4,424.3Z"/>
<path class="e" d="M855,415.3L861.9,408.8M850.1,418.1L843.4,424.3M843.4,424.3L855,415.3M855,415.3L850.1,418.1M861.9,408.8L843.4,424.3"/>
<path fill="#000056" stroke="#000056" d="M766.3,436.5 764.2,434.9 751.5,438.7 753.3,440.3Z"/>
<path class="e" d="M766.3,436.5L764.2,434.9M764.2,434.9L751.5,438.7M751.5,438.7L753.3,440.3"/>
<path fill="#000079" d="M802,352 805.2,340.8 797.4,346.9 794.2,358.1Z"/>
<path fill="#000079" d="M812,334.1 815.1,322.9 808.3,329.7 805.2,340.8Z"/>
<path fill="#00005c" stroke="#00005c" d="M854.7,455.9 853.1,456.2 838.9,465 840.5,464.7Z"/>
<path class="e" d="M854.7,455.9L853.1,456.2M838.9,465L840.5,464.7M840.5,464.7L854.7,455.9"/>
<path fill="#000078" d="M791,369.3 794.2,358.1 785.4,363.6 782.3,374.8Z"/>
<path fill="#0000ee" d="M541.2,346.9 544.3,335.7 537.3,326.8 534.1,338Z"/>
<path fill="#000076" d="M779.1,385.9 782.3,374.8 772.6,379.5 769.4,390.7Z"/>
<path fill="#0000e4" stroke="#0000e4" d="M554,377.2 555.1,374.8 546.1,366.6 544.9,369Z"/>
<path class="e" d="M554,377.2L555.1,374.8M555.1,374.8L546.1,366.6M546.1,366.6L544.9,369"/>
<path fill="#000068" stroke="#000068" d="M549.8,381.1 552,379.5 542.8,371.2 540.5,372.6Z"/>
<path class="e" d="M549.8,381.1L552,379.5M542.8,371.2L540.5,372.6M540.5,372.6L549.8,381.1"/>
<path fill="#00006a" stroke="#00006a" d="M502.1,269.5 509.6,276.2 506.6,265.7 499.1,258.4Z"/>
<path class="e" d="M502.1,269.5L509.6,276.2M506.6,265.7L499.1,258.4M499.1,258.4L502.1,269.5"/>
<path fill="#0000df" stroke="#0000df" d="M448.5,295.1 451.3,285.2 447.4,271.1 444.6,281Z"/>
<path class="e" d="M448.5,295.1L451.3,285.2M447.4,271.1L444.6,281M444.6,281L448.5,295.1M448.5,295.1L447.4,271.1M451.3,285.2L444.6,281"/>
<path fill="#000056" stroke="#000056" d="M853.1,456.2 851.2,455.5 837.2,464.2 838.9,465Z"/>
<path class="e" d="M853.1,456.2L851.2,455.5M851.2,455.5L837.2,464.2M837.2,464.2L838.9,465"/>
<path fill="#0000b2" stroke="#0000b2" d="M552,379.5 554,377.2 544.9,369 542.8,371.2Z"/>
<path class="e" d="M552,379.5L554,377.2M544.9,369L542.8,371.2"/>
<path fill="#0000e9" d="M467.4,348.6 470.7,337.1 463.8,324 460.5,335.6Z"/>
<path fill="#000075" d="M766.3,401.9 769.4,390.7 759,394.7 755.8,405.9Z"/>
<path fill="#0000ef" d="M546.1,366.6 549.3,355.4 541.2,346.9 538,358Z"/>
<path fill="#00007a" d="M874.4,356 876.6,348.5 868.5,358.8 866.3,366.3Z"/>
<path fill="#000080" stroke="#000080" d="M741.3,423 741.5,420.3 729.6,422.8 729.4,425.5Z"/>
<path class="e" d="M741.3,423L741.5,420.3M741.5,420.3L729.6,422.8M729.6,422.8L729.4,425.5"/>
<path fill="#00005b" stroke="#00005b" d="M743.2,428.3 741.9,425.9 729.9,428.4 731,430.9Z"/>
<path class="e" d="M743.2,428.3L741.9,425.9M729.9,428.4L731,430.9M731,430.9L743.2,428.3"/>
<path fill="#000056" d="M528.3,377.3 540.5,372.6 532.1,363.7 519.1,367.5Z"/>
<path fill="#000056" d="M441.6,355.4 462.4,352.6 455.3,339.3 433.8,340.7Z"/>
<path fill="#000068" stroke="#000068" d="M741.9,425.9 741.3,423 729.4,425.5 729.9,428.4Z"/>
<path class="e" d="M741.9,425.9L741.3,423M729.4,425.5L729.9,428.4"/>
<path fill="#000061" stroke="#000061" d="M514.7,367.1 516.6,367.8 508.4,357.5 506.4,356.6Z"/>
<path class="e" d="M514.7,367.1L516.6,367.8M508.4,357.5L506.4,356.6M506.4,356.6L514.7,367.1"/>
<path fill="#00009e" stroke="#00009e" d="M455.2,262.4 466.6,256.3 464.6,243.3 453.2,248.8Z"/>
<path class="e" d="M455.2,262.4L466.6,256.3M466.6,256.3L464.6,243.3M464.6,243.3L453.2,248.8M455.2,262.4L464.6,243.3M466.6,256.3L453.2,248.8"/>
<path fill="#00007c" d="M752.7,417.1 755.8,405.9 744.6,409.2 741.5,420.3Z"/>
<path fill="#00006d" stroke="#00006d" d="M837.2,351.4 826.8,353.8 819.1,361.4 829.1,359.4Z"/>
<path class="e" d="M837.2,351.4L826.8,353.8M819.1,361.4L829.1,359.4M829.1,359.4L837.2,351.4"/>
<path fill="#000078" d="M830.7,437.4 834,425.8 821.5,433.6 818.3,445.2Z"/>
<path fill="#000056" d="M764.2,434.9 754.8,425 743.2,428.3 751.5,438.7Z"/>
<path class="k" d="M850.2,400.4 847.3,413.2 841,410.2 843.3,400.4Z"/>
<path class="k" d="M847.3,413.2 839.1,423.5 834.7,418.1 841,410.2Z"/>
<path class="k" d="M839.1,423.5 827.2,429.2 825.7,422.4 834.7,418.1Z"/>
<path class="k" d="M827.2,429.2 814.1,429.2 815.6,422.4 825.7,422.4Z"/>
<path class="k" d="M814.1,429.2 802.2,423.5 806.5,418.1 815.6,422.4Z"/>
<path class="k" d="M802.2,423.5 794,413.2 800.2,410.2 806.5,418.1Z"/>
<path class="k" d="M794,413.2 791.1,400.4 798,400.4 800.2,410.2Z"/>
<path class="k" d="M791.1,400.4 794,387.6 800.2,390.6 798,400.4Z"/>
<path class="k" d="M794,387.6 802.2,377.3 806.5,382.7 800.2,390.6Z"/>
<path class="k" d="M802.2,377.3 814.1,371.6 815.6,378.3 806.5,382.7Z"/>
<path class="k" d="M814.1,371.6 827.2,371.6 825.7,378.3 815.6,378.3Z"/>
<path class="k" d="M827.2,371.6 839.1,377.3 834.7,382.7 825.7,378.3Z"/>
<path class="k" d="M839.1,377.3 847.3,387.6 841,390.6 834.7,382.7Z"/>
<path class="k" d="M847.3,387.6 850.2,400.4 843.3,400.4 841,390.6Z"/>
<path fill="#000079" stroke="#000079" d="M872.2,398.6 875,388.8 864.7,398.9 861.9,408.8Z"/>
<path class="e" d="M872.2,398.6L875,388.8M864.7,398.9L861.9,408.8M861.9,408.8L872.2,398.6M872.2,398.6L864.7,398.9M875,388.8L861.9,408.8"/>
<path fill="#000059" stroke="#000059" d="M516.6,367.8 519.1,367.5 511,357.4 508.4,357.5Z"/>
<path class="e" d="M516.6,367.8L519.1,367.5M519.1,367.5L511,357.4M511,357.4L508.4,357.5"/>
<path fill="#000056" stroke="#000056" d="M780.6,432.1 778.4,431.8 766.3,436.5 768.3,436.8Z"/>
<path class="e" d="M780.6,432.1L778.4,431.8M766.3,436.5L768.3,436.8M768.3,436.8L780.6,432.1"/>
<path fill="#000056" d="M851.2,455.5 833.3,443.3 820.6,451.2 837.2,464.2Z"/>
<path fill="#0000d1" d="M466.7,235.8 468.9,228.3 468.6,215.4 466.5,222.9Z"/>
<path fill="#0000e5" d="M529.5,297.4 532.7,286.2 529,276.9 525.8,288.1Z"/>
<path fill="#0000df" d="M529,276.9 532.1,265.7 529.5,256.4 526.4,267.6Z"/>
<path fill="#0000de" stroke="#0000de" d="M466.4,350.4 467.4,348.6 460.5,335.6 459.5,337.3Z"/>
<path class="e" d="M466.4,350.4L467.4,348.6M467.4,348.6L460.5,335.6M460.5,335.6L459.5,337.3"/>
<path fill="#0000e9" d="M531.3,317.8 534.4,306.6 529.5,297.4 526.4,308.5Z"/>
<path fill="#0000d8" d="M529.5,256.4 532.7,245.2 531.3,236 528.2,247.2Z"/>
<path fill="#00006d" stroke="#00006d" d="M881.4,366.6 874.4,356 866.3,366.3 872.9,377.4Z"/>
<path class="e" d="M881.4,366.6L874.4,356M874.4,356L866.3,366.3M866.3,366.3L872.9,377.4M881.4,366.6L866.3,366.3M874.4,356L872.9,377.4"/>
<path fill="#0000e4" stroke="#0000e4" d="M544.9,369 546.1,366.6 538,358 536.8,360.4Z"/>
<path class="e" d="M544.9,369L546.1,366.6M546.1,366.6L538,358M538,358L536.8,360.4"/>
<path fill="#000068" stroke="#000068" d="M540.5,372.6 542.8,371.2 534.6,362.4 532.1,363.7Z"/>
<path class="e" d="M540.5,372.6L542.8,371.2M534.6,362.4L532.1,363.7M532.1,363.7L540.5,372.6"/>
<path fill="#000066" stroke="#000066" d="M462.4,352.6 464.6,351.9 457.5,338.7 455.3,339.3Z"/>
<path class="e" d="M462.4,352.6L464.6,351.9M457.5,338.7L455.3,339.3M455.3,339.3L462.4,352.6"/>
<path fill="#0000ae" stroke="#0000ae" d="M464.6,351.9 466.4,350.4 459.5,337.3 457.5,338.7Z"/>
<path class="e" d="M464.6,351.9L466.4,350.4M459.5,337.3L457.5,338.7"/>
<path fill="#0000ec" d="M534.1,338 537.3,326.8 531.3,317.8 528.1,328.9Z"/>
<path fill="#000056" stroke="#000056" d="M778.4,431.8 776.2,430.3 764.2,434.9 766.3,436.5Z"/>
<path class="e" d="M778.4,431.8L776.2,430.3M776.2,430.3L764.2,434.9M764.2,434.9L766.3,436.5"/>
<path fill="#0000b2" stroke="#0000b2" d="M542.8,371.2 544.9,369 536.8,360.4 534.6,362.4Z"/>
<path class="e" d="M542.8,371.2L544.9,369M536.8,360.4L534.6,362.4"/>
<path fill="#0000c4" stroke="#0000c4" d="M447.4,271.1 455.2,262.4 453.2,248.8 445.4,257.2Z"/>
<path class="e" d="M447.4,271.1L455.2,262.4M453.2,248.8L445.4,257.2M447.4,271.1L453.2,248.8M455.2,262.4L445.4,257.2"/>
<path fill="#000079" d="M798.9,363.2 802,352 794.2,358.1 791,369.3Z"/>
<path fill="#000079" d="M808.8,345.3 812,334.1 805.2,340.8 802,352Z"/>
<path fill="#000075" stroke="#000075" d="M752.5,419.7 752.7,417.1 741.5,420.3 741.3,423Z"/>
<path class="e" d="M752.5,419.7L752.7,417.1M752.7,417.1L741.5,420.3M741.5,420.3L741.3,423"/>
<path fill="#000078" d="M787.9,380.5 791,369.3 782.3,374.8 779.1,385.9Z"/>
<path fill="#0000ee" d="M538,358 541.2,346.9 534.1,338 531,349.2Z"/>
<path fill="#00005c" stroke="#00005c" d="M754.8,425 753.3,422.6 741.9,425.9 743.2,428.3Z"/>
<path class="e" d="M754.8,425L753.3,422.6M741.9,425.9L743.2,428.3M743.2,428.3L754.8,425"/>
<path fill="#00007a" d="M817.7,326.8 820.9,315.7 815.1,322.9 812,334.1Z"/>
<path fill="#000072" stroke="#000072" d="M509.6,276.2 512.1,285.3 509.3,275 506.6,265.7Z"/>
<path class="e" d="M509.6,276.2L512.1,285.3M512.1,285.3L509.3,275M509.3,275L506.6,265.7"/>
<path fill="#000069" stroke="#000069" d="M753.3,422.6 752.5,419.7 741.3,423 741.9,425.9Z"/>
<path class="e" d="M753.3,422.6L752.5,419.7M741.3,423L741.9,425.9"/>
<path fill="#000076" d="M775.9,397.1 779.1,385.9 769.4,390.7 766.3,401.9Z"/>
<path fill="#00007a" d="M883.1,337.5 885.2,330 878.7,341 876.6,348.5Z"/>
<path fill="#000076" stroke="#000076" d="M830.7,439.5 830.7,437.4 818.3,445.2 818.2,447.2Z"/>
<path class="e" d="M830.7,439.5L830.7,437.4M830.7,437.4L818.3,445.2M818.3,445.2L818.2,447.2"/>
<path fill="#000056" d="M519.1,367.5 532.1,363.7 524.8,354.5 511,357.4Z"/>
<path fill="#000069" stroke="#000069" d="M430.6,339.2 431.8,340.3 425.8,325.4 424.5,324.1Z"/>
<path class="e" d="M430.6,339.2L431.8,340.3M425.8,325.4L424.5,324.1M424.5,324.1L430.6,339.2"/>
<path fill="#00005d" stroke="#00005d" d="M833.3,443.3 831.6,441.6 819.1,449.4 820.6,451.2Z"/>
<path class="e" d="M833.3,443.3L831.6,441.6M819.1,449.4L820.6,451.2M820.6,451.2L833.3,443.3"/>
<path fill="#00006d" stroke="#00006d" d="M831.6,441.6 830.7,439.5 818.2,447.2 819.1,449.4Z"/>
<path class="e" d="M831.6,441.6L830.7,439.5M818.2,447.2L819.1,449.4"/>
<path fill="#000075" d="M763.1,413.1 766.3,401.9 755.8,405.9 752.7,417.1Z"/>
<path fill="#00005c" stroke="#00005c" d="M431.8,340.3 433.8,340.7 427.8,325.8 425.8,325.4Z"/>
<path class="e" d="M431.8,340.3L433.8,340.7M433.8,340.7L427.8,325.8M427.8,325.8L425.8,325.4"/>
<path fill="#000076" stroke="#000076" d="M883.7,377.8 881.4,366.6 872.9,377.4 875,388.8Z"/>
<path class="e" d="M883.7,377.8L881.4,366.6M872.9,377.4L875,388.8M883.7,377.8L872.9,377.4M881.4,366.6L875,388.8"/>
<path fill="#00006b" stroke="#00006b" d="M499.1,258.4 506.6,265.7 505.1,255.2 497.4,247.3Z"/>
<path class="e" d="M499.1,258.4L506.6,265.7M505.1,255.2L497.4,247.3M497.4,247.3L499.1,258.4"/>
<path fill="#000082" stroke="#000082" d="M826.8,353.8 819.7,360.4 812.2,367.8 819.1,361.4Z"/>
<path class="e" d="M826.8,353.8L819.7,360.4M819.7,360.4L812.2,367.8M812.2,367.8L819.1,361.4"/>
<path fill="#0000d1" d="M464.6,243.3 466.7,235.8 466.5,222.9 464.4,230.4Z"/>
<path fill="#000062" stroke="#000062" d="M506.4,356.6 508.4,357.5 501.4,346.9 499.3,345.9Z"/>
<path class="e" d="M506.4,356.6L508.4,357.5M501.4,346.9L499.3,345.9M499.3,345.9L506.4,356.6"/>
<path fill="#000056" d="M776.2,430.3 765.7,420.8 754.8,425 764.2,434.9Z"/>
<path class="kp" d="M843.3,400.4 841,410.2 831.7,405.7 832.9,400.4Z"/>
<path class="kp" d="M841,410.2 834.7,418.1 828.3,410 831.7,405.7Z"/>
<path class="kp" d="M834.7,418.1 825.7,422.4 823.4,412.3 828.3,410Z"/>
<path class="kp" d="M825.7,422.4 815.6,422.4 817.9,412.3 823.4,412.3Z"/>
<path class="kp" d="M815.6,422.4 806.5,418.1 813,410 817.9,412.3Z"/>
<path class="kp" d="M806.5,418.1 800.2,410.2 809.6,405.7 813,410Z"/>
<path class="kp" d="M800.2,410.2 798,400.4 808.4,400.4 809.6,405.7Z"/>
<path class="kp" d="M798,400.4 800.2,390.6 809.6,395.1 808.4,400.4Z"/>
<path class="kp" d="M800.2,390.6 806.5,382.7 813,390.8 809.6,395.1Z"/>
<path class="kp" d="M806.5,382.7 815.6,378.3 817.9,388.4 813,390.8Z"/>
<path class="kp" d="M815.6,378.3 825.7,378.3 823.4,388.4 817.9,388.4Z"/>
<path class="kp" d="M825.7,378.3 834.7,382.7 828.3,390.8 823.4,388.4Z"/>
<path class="kp" d="M834.7,382.7 841,390.6 831.7,395.1 828.3,390.8Z"/>
<path class="kp" d="M841,390.6 843.3,400.4 832.9,400.4 831.7,395.1Z"/>
<path fill="#0000e5" d="M460.5,335.6 463.8,324 458.5,310.9 455.2,322.4Z"/>
<path fill="#000066" stroke="#000066" d="M867.4,446 865.7,446.4 853.1,456.2 854.7,455.9Z"/>
<path class="e" d="M867.4,446L865.7,446.4M853.1,456.2L854.7,455.9M854.7,455.9L867.4,446"/>
<path fill="#0000e3" stroke="#0000e3" d="M536.8,360.4 538,358 531,349.2 529.7,351.5Z"/>
<path class="e" d="M536.8,360.4L538,358M538,358L531,349.2M531,349.2L529.7,351.5"/>
<path fill="#000059" stroke="#000059" d="M508.4,357.5 511,357.4 504.1,347 501.4,346.9Z"/>
<path class="e" d="M508.4,357.5L511,357.4M511,357.4L504.1,347M504.1,347L501.4,346.9"/>
<path fill="#000067" stroke="#000067" d="M532.1,363.7 534.6,362.4 527.4,353.4 524.8,354.5Z"/>
<path class="e" d="M532.1,363.7L534.6,362.4M527.4,353.4L524.8,354.5M524.8,354.5L532.1,363.7"/>
<path fill="#000056" stroke="#000056" d="M792,426.4 789.7,426.2 778.4,431.8 780.6,432.1Z"/>
<path class="e" d="M792,426.4L789.7,426.2M778.4,431.8L780.6,432.1M780.6,432.1L792,426.4"/>
<path fill="#000075" stroke="#000075" d="M844.1,342.7 833.3,345.5 826.8,353.8 837.2,351.4Z"/>
<path class="e" d="M844.1,342.7L833.3,345.5M826.8,353.8L837.2,351.4M837.2,351.4L844.1,342.7"/>
<path fill="#0000b2" stroke="#0000b2" d="M534.6,362.4 536.8,360.4 529.7,351.5 527.4,353.4Z"/>
<path class="e" d="M534.6,362.4L536.8,360.4M529.7,351.5L527.4,353.4"/>
<path fill="#000056" stroke="#000056" d="M865.7,446.4 863.6,445.7 851.2,455.5 853.1,456.2Z"/>
<path class="e" d="M865.7,446.4L863.6,445.7M863.6,445.7L851.2,455.5M851.2,455.5L853.1,456.2"/>
<path fill="#0000d8" stroke="#0000d8" d="M444.6,281 447.4,271.1 445.4,257.2 442.6,267.1Z"/>
<path class="e" d="M444.6,281L447.4,271.1M445.4,257.2L442.6,267.1M442.6,267.1L444.6,281M444.6,281L445.4,257.2M447.4,271.1L442.6,267.1"/>
<path fill="#0000e5" d="M526.4,308.5 529.5,297.4 525.8,288.1 522.6,299.2Z"/>
<path fill="#0000df" d="M525.8,288.1 529,276.9 526.4,267.6 523.2,278.8Z"/>
<path fill="#00007a" d="M881,345 883.1,337.5 876.6,348.5 874.4,356Z"/>
<path fill="#0000e9" d="M528.1,328.9 531.3,317.8 526.4,308.5 523.2,319.7Z"/>
<path fill="#0000d8" d="M526.4,267.6 529.5,256.4 528.2,247.2 525,258.4Z"/>
<path fill="#000056" d="M433.8,340.7 455.3,339.3 449.9,325.8 427.8,325.8Z"/>
<path fill="#000073" stroke="#000073" d="M763,415.7 763.1,413.1 752.7,417.1 752.5,419.7Z"/>
<path class="e" d="M763,415.7L763.1,413.1M763.1,413.1L752.7,417.1M752.7,417.1L752.5,419.7"/>
<path fill="#0000d1" d="M528.2,247.2 531.3,236 531.2,226.9 528,238.1Z"/>
<path fill="#00005c" stroke="#00005c" d="M765.7,420.8 764,418.5 753.3,422.6 754.8,425Z"/>
<path class="e" d="M765.7,420.8L764,418.5M753.3,422.6L754.8,425M754.8,425L765.7,420.8"/>
<path fill="#0000ec" d="M531,349.2 534.1,338 528.1,328.9 524.9,340.1Z"/>
<path fill="#000056" stroke="#000056" d="M789.7,426.2 787.2,424.9 776.2,430.3 778.4,431.8Z"/>
<path class="e" d="M789.7,426.2L787.2,424.9M787.2,424.9L776.2,430.3M776.2,430.3L778.4,431.8"/>
<path fill="#00006b" stroke="#00006b" d="M764,418.5 763,415.7 752.5,419.7 753.3,422.6Z"/>
<path class="e" d="M764,418.5L763,415.7M752.5,419.7L753.3,422.6"/>
<path fill="#000079" d="M841.7,428.8 845,417.2 834,425.8 830.7,437.4Z"/>
<path class="kp" d="M832.9,400.4 831.7,405.7 820.6,400.4 820.6,400.4Z"/>
<path class="kp" d="M831.7,405.7 828.3,410 820.6,400.4 820.6,400.4Z"/>
<path class="kp" d="M828.3,410 823.4,412.3 820.6,400.4 820.6,400.4Z"/>
<path class="kp" d="M823.4,412.3 817.9,412.3 820.6,400.4 820.6,400.4Z"/>
<path class="kp" d="M817.9,412.3 813,410 820.6,400.4 820.6,400.4Z"/>
<path class="kp" d="M813,410 809.6,405.7 820.6,400.4 820.6,400.4Z"/>
<path class="kp" d="M809.6,405.7 808.4,400.4 820.6,400.4 820.6,400.4Z"/>
<path class="kp" d="M808.4,400.4 809.6,395.1 820.6,400.4 820.6,400.4Z"/>
<path class="kp" d="M809.6,395.1 813,390.8 820.6,400.4 820.6,400.4Z"/>
<path class="kp" d="M813,390.8 817.9,388.4 820.6,400.4 820.6,400.4Z"/>
<path class="kp" d="M817.9,388.4 823.4,388.4 820.6,400.4 820.6,400.4Z"/>
<path class="kp" d="M823.4,388.4 828.3,390.8 820.6,400.4 820.6,400.4Z"/>
<path class="kp" d="M828.3,390.8 831.7,395.1 820.6,400.4 820.6,400.4Z"/>
<path class="kp" d="M831.7,395.1 832.9,400.4 820.6,400.4 820.6,400.4Z"/>
<path fill="#000099" stroke="#000099" d="M453.2,248.8 464.6,243.3 464.4,230.4 452.9,235.4Z"/>
<path class="e" d="M453.2,248.8L464.6,243.3M464.6,243.3L464.4,230.4M464.4,230.4L452.9,235.4M453.2,248.8L464.4,230.4M464.6,243.3L452.9,235.4"/>
<path fill="#000079" d="M795.7,374.4 798.9,363.2 791,369.3 787.9,380.5Z"/>
<path fill="#000079" d="M805.6,356.5 808.8,345.3 802,352 798.9,363.2Z"/>
<path fill="#000078" d="M784.7,391.6 787.9,380.5 779.1,385.9 775.9,397.1Z"/>
<path fill="#00007a" d="M814.5,338 817.7,326.8 812,334.1 808.8,345.3Z"/>
<path fill="#000076" d="M772.8,408.3 775.9,397.1 766.3,401.9 763.1,413.1Z"/>
<path fill="#000056" d="M511,357.4 524.8,354.5 518.5,345.1 504.1,347Z"/>
<path fill="#00007a" d="M822.3,319.1 825.5,307.9 820.9,315.7 817.7,326.8Z"/>
<path fill="#0000da" stroke="#0000da" d="M459.5,337.3 460.5,335.6 455.2,322.4 454.1,324.1Z"/>
<path class="e" d="M459.5,337.3L460.5,335.6M460.5,335.6L455.2,322.4M455.2,322.4L454.1,324.1"/>
<path fill="#00007a" stroke="#00007a" d="M880.9,387.6 883.7,377.8 875,388.8 872.2,398.6Z"/>
<path class="e" d="M880.9,387.6L883.7,377.8M875,388.8L872.2,398.6M872.2,398.6L880.9,387.6M880.9,387.6L875,388.8M883.7,377.8L872.2,398.6"/>
<path fill="#000056" d="M863.6,445.7 844.6,434.4 833.3,443.3 851.2,455.5Z"/>
<path fill="#00006c" stroke="#00006c" d="M498.2,344.1 499.3,345.9 493.5,335 492.4,333.1Z"/>
<path class="e" d="M498.2,344.1L499.3,345.9M493.5,335L492.4,333.1M492.4,333.1L498.2,344.1"/>
<path fill="#0000ab" stroke="#0000ab" d="M457.5,338.7 459.5,337.3 454.1,324.1 452.2,325.4Z"/>
<path class="e" d="M457.5,338.7L459.5,337.3M454.1,324.1L452.2,325.4"/>
<path fill="#000065" stroke="#000065" d="M455.3,339.3 457.5,338.7 452.2,325.4 449.9,325.8Z"/>
<path class="e" d="M455.3,339.3L457.5,338.7M452.2,325.4L449.9,325.8M449.9,325.8L455.3,339.3"/>
<path fill="#000073" stroke="#000073" d="M506.6,265.7 509.3,275 507.8,264.9 505.1,255.2Z"/>
<path class="e" d="M506.6,265.7L509.3,275M509.3,275L507.8,264.9M507.8,264.9L505.1,255.2"/>
<path fill="#0000c8" d="M466.5,222.9 468.6,215.4 470.1,202.9 468,210.4Z"/>
<path fill="#000056" d="M787.2,424.9 775.7,415.8 765.7,420.8 776.2,430.3Z"/>
<path fill="#00006d" stroke="#00006d" d="M888.2,355.1 881,345 874.4,356 881.4,366.6Z"/>
<path class="e" d="M888.2,355.1L881,345M881,345L874.4,356M874.4,356L881.4,366.6M888.2,355.1L874.4,356M881,345L881.4,366.6"/>
<path fill="#0000e1" stroke="#0000e1" d="M529.7,351.5 531,349.2 524.9,340.1 523.6,342.3Z"/>
<path class="e" d="M529.7,351.5L531,349.2M531,349.2L524.9,340.1M524.9,340.1L523.6,342.3"/>
<path fill="#000064" stroke="#000064" d="M499.3,345.9 501.4,346.9 495.7,336.2 493.5,335Z"/>
<path class="e" d="M499.3,345.9L501.4,346.9M495.7,336.2L493.5,335"/>
<path fill="#000077" stroke="#000077" d="M841.8,430.8 841.7,428.8 830.7,437.4 830.7,439.5Z"/>
<path class="e" d="M841.8,430.8L841.7,428.8M841.7,428.8L830.7,437.4M830.7,437.4L830.7,439.5"/>
<path fill="#000064" stroke="#000064" d="M804.4,418.9 802.4,420 792,426.4 793.9,425.4Z"/>
<path class="e" d="M804.4,418.9L802.4,420M792,426.4L793.9,425.4M793.9,425.4L804.4,418.9"/>
<path fill="#000067" stroke="#000067" d="M524.8,354.5 527.4,353.4 521.3,344.2 518.5,345.1Z"/>
<path class="e" d="M524.8,354.5L527.4,353.4M521.3,344.2L518.5,345.1M518.5,345.1L524.8,354.5"/>
<path fill="#00008e" stroke="#00008e" d="M833.3,345.5 825.9,352.4 819.7,360.4 826.8,353.8Z"/>
<path class="e" d="M833.3,345.5L825.9,352.4M825.9,352.4L819.7,360.4M819.7,360.4L826.8,353.8"/>
<path fill="#0000bd" stroke="#0000bd" d="M445.4,257.2 453.2,248.8 452.9,235.4 445.1,243.5Z"/>
<path class="e" d="M445.4,257.2L453.2,248.8M452.9,235.4L445.1,243.5M445.4,257.2L452.9,235.4M453.2,248.8L445.1,243.5"/>
<path fill="#0000b0" stroke="#0000b0" d="M527.4,353.4 529.7,351.5 523.6,342.3 521.3,344.2Z"/>
<path class="e" d="M527.4,353.4L529.7,351.5M523.6,342.3L521.3,344.2"/>
<path fill="#00006d" stroke="#00006d" d="M842.8,432.8 841.8,430.8 830.7,439.5 831.6,441.6Z"/>
<path class="e" d="M842.8,432.8L841.8,430.8M830.7,439.5L831.6,441.6"/>
<path fill="#00005d" stroke="#00005d" d="M844.6,434.4 842.8,432.8 831.6,441.6 833.3,443.3Z"/>
<path class="e" d="M844.6,434.4L842.8,432.8M831.6,441.6L833.3,443.3M833.3,443.3L844.6,434.4"/>
<path fill="#00006c" stroke="#00006c" d="M497.4,247.3 505.1,255.2 504.9,244.9 497.2,236.5Z"/>
<path class="e" d="M497.4,247.3L505.1,255.2M504.9,244.9L497.2,236.5M497.2,236.5L497.4,247.3"/>
<path fill="#00007a" d="M887.9,325.9 890.1,318.4 885.2,330 883.1,337.5Z"/>
<path fill="#00005a" stroke="#00005a" d="M501.4,346.9 504.1,347 498.6,336.5 495.7,336.2Z"/>
<path class="e" d="M501.4,346.9L504.1,347M504.1,347L498.6,336.5M498.6,336.5L495.7,336.2"/>
<path fill="#000075" stroke="#000075" d="M772.7,410.9 772.8,408.3 763.1,413.1 763,415.7Z"/>
<path class="e" d="M772.7,410.9L772.8,408.3M772.8,408.3L763.1,413.1M763.1,413.1L763,415.7"/>
<path fill="#0000e5" d="M523.2,319.7 526.4,308.5 522.6,299.2 519.5,310.4Z"/>
<path fill="#000056" stroke="#000056" d="M802.4,420 799.9,419.9 789.7,426.2 792,426.4Z"/>
<path class="e" d="M802.4,420L799.9,419.9M789.7,426.2L792,426.4"/>
<path fill="#0000df" d="M522.6,299.2 525.8,288.1 523.2,278.8 520.1,289.9Z"/>
<path fill="#00005d" stroke="#00005d" d="M775.7,415.8 773.8,413.6 764,418.5 765.7,420.8Z"/>
<path class="e" d="M775.7,415.8L773.8,413.6M764,418.5L765.7,420.8M765.7,420.8L775.7,415.8"/>
<path fill="#00006c" stroke="#00006c" d="M773.8,413.6 772.7,410.9 763,415.7 764,418.5Z"/>
<path class="e" d="M773.8,413.6L772.7,410.9M763,415.7L764,418.5"/>
<path fill="#0000e9" d="M524.9,340.1 528.1,328.9 523.2,319.7 520.1,330.9Z"/>
<path fill="#0000d8" d="M523.2,278.8 526.4,267.6 525,258.4 521.9,269.5Z"/>
<path fill="#00006b" stroke="#00006b" d="M424.5,324.1 425.8,325.4 421.6,310.4 420.3,309Z"/>
<path class="e" d="M424.5,324.1L425.8,325.4M421.6,310.4L420.3,309M420.3,309L424.5,324.1"/>
<path fill="#0000d1" d="M525,258.4 528.2,247.2 528,238.1 524.9,249.3Z"/>
<path fill="#00007d" stroke="#00007d" d="M849.6,333.4 838.5,336.7 833.3,345.5 844.1,342.7Z"/>
<path class="e" d="M849.6,333.4L838.5,336.7M833.3,345.5L844.1,342.7M844.1,342.7L849.6,333.4"/>
<path fill="#0000c8" d="M464.4,230.4 466.5,222.9 468,210.4 465.9,217.9Z"/>
<path fill="#0000c8" d="M528,238.1 531.2,226.9 532.2,218.1 529.1,229.3Z"/>
<path fill="#00005c" stroke="#00005c" d="M425.8,325.4 427.8,325.8 423.7,311 421.6,310.4Z"/>
<path class="e" d="M425.8,325.4L427.8,325.8M427.8,325.8L423.7,311M423.7,311L421.6,310.4"/>
<path fill="#000056" stroke="#000056" d="M799.9,419.9 797.2,418.6 787.2,424.9 789.7,426.2Z"/>
<path class="e" d="M799.9,419.9L797.2,418.6M797.2,418.6L787.2,424.9M787.2,424.9L789.7,426.2"/>
<path fill="#000076" stroke="#000076" d="M890.6,366 888.2,355.1 881.4,366.6 883.7,377.8Z"/>
<path class="e" d="M890.6,366L888.2,355.1M881.4,366.6L883.7,377.8M890.6,366L881.4,366.6M888.2,355.1L883.7,377.8"/>
<path fill="#0000df" d="M455.2,322.4 458.5,310.9 454.8,297.7 451.6,309.3Z"/>
<path fill="#000079" d="M792.5,385.5 795.7,374.4 787.9,380.5 784.7,391.6Z"/>
<path fill="#000079" d="M802.5,367.6 805.6,356.5 798.9,363.2 795.7,374.4Z"/>
<path fill="#000078" d="M781.6,402.8 784.7,391.6 775.9,397.1 772.8,408.3Z"/>
<path fill="#00007a" d="M811.4,349.2 814.5,338 808.8,345.3 805.6,356.5Z"/>
<path fill="#000056" d="M504.1,347 518.5,345.1 513.5,335.5 498.6,336.5Z"/>
<path fill="#00007a" d="M819.1,330.3 822.3,319.1 817.7,326.8 814.5,338Z"/>
<path fill="#00007a" d="M825.7,310.9 828.9,299.7 825.5,307.9 822.3,319.1Z"/>
<path fill="#00006f" stroke="#00006f" d="M878.4,435.1 876.6,435.6 865.7,446.4 867.4,446Z"/>
<path class="e" d="M878.4,435.1L876.6,435.6M865.7,446.4L867.4,446M867.4,446L878.4,435.1"/>
<path fill="#00007a" d="M885.8,333.4 887.9,325.9 883.1,337.5 881,345Z"/>
<path fill="#000056" d="M427.8,325.8 449.9,325.8 446.2,312.4 423.7,311Z"/>
<path fill="#000079" d="M851.4,419.3 854.6,407.7 845,417.2 841.7,428.8Z"/>
<path fill="#0000d1" stroke="#0000d1" d="M442.6,267.1 445.4,257.2 445.1,243.5 442.3,253.3Z"/>
<path class="e" d="M442.6,267.1L445.4,257.2M445.1,243.5L442.3,253.3M442.3,253.3L442.6,267.1M442.6,267.1L445.1,243.5M445.4,257.2L442.3,253.3"/>
<path fill="#000056" d="M797.2,418.6 784.8,410.2 775.7,415.8 787.2,424.9Z"/>
<path fill="#00006d" stroke="#00006d" d="M492.4,333.1 493.5,335 489.1,324 487.9,322Z"/>
<path class="e" d="M492.4,333.1L493.5,335M489.1,324L487.9,322M487.9,322L492.4,333.1"/>
<path fill="#000056" stroke="#000056" d="M876.6,435.6 874.5,435 863.6,445.7 865.7,446.4Z"/>
<path class="e" d="M876.6,435.6L874.5,435M874.5,435L863.6,445.7M863.6,445.7L865.7,446.4"/>
<path fill="#0000de" stroke="#0000de" d="M523.6,342.3 524.9,340.1 520.1,330.9 518.7,333.1Z"/>
<path class="e" d="M523.6,342.3L524.9,340.1M524.9,340.1L520.1,330.9M520.1,330.9L518.7,333.1"/>
<path fill="#000074" stroke="#000074" d="M505.1,255.2 507.8,264.9 507.6,254.9 504.9,244.9Z"/>
<path class="e" d="M505.1,255.2L507.8,264.9M507.8,264.9L507.6,254.9M507.6,254.9L504.9,244.9"/>
<path fill="#000066" stroke="#000066" d="M518.5,345.1 521.3,344.2 516.3,334.8 513.5,335.5Z"/>
<path class="e" d="M518.5,345.1L521.3,344.2M516.3,334.8L513.5,335.5M513.5,335.5L518.5,345.1"/>
<path fill="#0000ae" stroke="#0000ae" d="M521.3,344.2 523.6,342.3 518.7,333.1 516.3,334.8Z"/>
<path class="e" d="M521.3,344.2L523.6,342.3M518.7,333.1L516.3,334.8"/>
<path fill="#000093" stroke="#000093" d="M452.9,235.4 464.4,230.4 465.9,217.9 454.5,222.3Z"/>
<path class="e" d="M452.9,235.4L464.4,230.4M464.4,230.4L465.9,217.9M465.9,217.9L454.5,222.3M452.9,235.4L465.9,217.9M464.4,230.4L454.5,222.3"/>
<path fill="#0000d5" stroke="#0000d5" d="M454.1,324.1 455.2,322.4 451.6,309.3 450.5,310.9Z"/>
<path class="e" d="M454.1,324.1L455.2,322.4M455.2,322.4L451.6,309.3M451.6,309.3L450.5,310.9"/>
<path fill="#000065" stroke="#000065" d="M493.5,335 495.7,336.2 491.3,325.4 489.1,324Z"/>
<path class="e" d="M493.5,335L495.7,336.2M491.3,325.4L489.1,324"/>
<path fill="#000076" stroke="#000076" d="M781.5,405.4 781.6,402.8 772.8,408.3 772.7,410.9Z"/>
<path class="e" d="M781.5,405.4L781.6,402.8M781.6,402.8L772.8,408.3M772.8,408.3L772.7,410.9"/>
<path fill="#00006f" stroke="#00006f" d="M813.7,411.6 811.6,412.8 802.4,420 804.4,418.9Z"/>
<path class="e" d="M813.7,411.6L811.6,412.8M802.4,420L804.4,418.9M804.4,418.9L813.7,411.6"/>
<path fill="#0000a7" stroke="#0000a7" d="M452.2,325.4 454.1,324.1 450.5,310.9 448.5,312.1Z"/>
<path class="e" d="M452.2,325.4L454.1,324.1M450.5,310.9L448.5,312.1"/>
<path fill="#000063" stroke="#000063" d="M449.9,325.8 452.2,325.4 448.5,312.1 446.2,312.4Z"/>
<path class="e" d="M449.9,325.8L452.2,325.4M448.5,312.1L446.2,312.4M446.2,312.4L449.9,325.8"/>
<path fill="#00005d" stroke="#00005d" d="M784.8,410.2 782.7,408.1 773.8,413.6 775.7,415.8Z"/>
<path class="e" d="M784.8,410.2L782.7,408.1M773.8,413.6L775.7,415.8M775.7,415.8L784.8,410.2"/>
<path fill="#00006d" stroke="#00006d" d="M782.7,408.1 781.5,405.4 772.7,410.9 773.8,413.6Z"/>
<path class="e" d="M782.7,408.1L781.5,405.4M772.7,410.9L773.8,413.6"/>
<path fill="#000056" d="M874.5,435 854.4,424.7 844.6,434.4 863.6,445.7Z"/>
<path fill="#000099" stroke="#000099" d="M838.5,336.7 831,343.9 825.9,352.4 833.3,345.5Z"/>
<path class="e" d="M838.5,336.7L831,343.9M831,343.9L825.9,352.4M825.9,352.4L833.3,345.5"/>
<path fill="#0000e5" d="M520.1,330.9 523.2,319.7 519.5,310.4 516.3,321.6Z"/>
<path fill="#0000df" d="M519.5,310.4 522.6,299.2 520.1,289.9 516.9,301.1Z"/>
<path fill="#00007a" stroke="#00007a" d="M887.8,375.9 890.6,366 883.7,377.8 880.9,387.6Z"/>
<path class="e" d="M887.8,375.9L890.6,366M883.7,377.8L880.9,387.6M880.9,387.6L887.8,375.9M887.8,375.9L883.7,377.8M890.6,366L880.9,387.6"/>
<path fill="#00005a" stroke="#00005a" d="M495.7,336.2 498.6,336.5 494.3,325.9 491.3,325.4Z"/>
<path class="e" d="M495.7,336.2L498.6,336.5M498.6,336.5L494.3,325.9M494.3,325.9L491.3,325.4"/>
<path fill="#0000d8" d="M520.1,289.9 523.2,278.8 521.9,269.5 518.7,280.7Z"/>
<path fill="#0000be" d="M468,210.4 470.1,202.9 473.3,190.8 471.2,198.3Z"/>
<path fill="#0000d1" d="M521.9,269.5 525,258.4 524.9,249.3 521.7,260.5Z"/>
<path fill="#00006c" stroke="#00006c" d="M497.2,236.5 504.9,244.9 506.1,234.9 498.5,225.9Z"/>
<path class="e" d="M497.2,236.5L504.9,244.9M506.1,234.9L498.5,225.9M498.5,225.9L497.2,236.5"/>
<path fill="#00005c" stroke="#00005c" d="M811.6,412.8 809,412.8 799.9,419.9 802.4,420Z"/>
<path class="e" d="M811.6,412.8L809,412.8M799.9,419.9L802.4,420"/>
<path fill="#000078" stroke="#000078" d="M851.4,421.2 851.4,419.3 841.7,428.8 841.8,430.8Z"/>
<path class="e" d="M851.4,421.2L851.4,419.3M851.4,419.3L841.7,428.8M841.7,428.8L841.8,430.8"/>
<path fill="#00006d" stroke="#00006d" d="M893.3,343 885.8,333.4 881,345 888.2,355.1Z"/>
<path class="e" d="M893.3,343L885.8,333.4M885.8,333.4L881,345M881,345L888.2,355.1M893.3,343L881,345M885.8,333.4L888.2,355.1"/>
<path fill="#0000c8" d="M524.9,249.3 528,238.1 529.1,229.3 525.9,240.5Z"/>
<path fill="#000079" d="M789.4,396.7 792.5,385.5 784.7,391.6 781.6,402.8Z"/>
<path fill="#000079" d="M799.3,378.8 802.5,367.6 795.7,374.4 792.5,385.5Z"/>
<path fill="#00006e" stroke="#00006e" d="M852.5,423.2 851.4,421.2 841.8,430.8 842.8,432.8Z"/>
<path class="e" d="M852.5,423.2L851.4,421.2M841.8,430.8L842.8,432.8"/>
<path fill="#0000be" d="M529.1,229.3 532.2,218.1 534.5,209.5 531.3,220.7Z"/>
<path fill="#00005e" stroke="#00005e" d="M854.4,424.7 852.5,423.2 842.8,432.8 844.6,434.4Z"/>
<path class="e" d="M854.4,424.7L852.5,423.2M842.8,432.8L844.6,434.4M844.6,434.4L854.4,424.7"/>
<path fill="#00007a" d="M808.2,360.4 811.4,349.2 805.6,356.5 802.5,367.6Z"/>
<path fill="#000056" stroke="#000056" d="M809,412.8 806.2,411.7 797.2,418.6 799.9,419.9Z"/>
<path class="e" d="M809,412.8L806.2,411.7M806.2,411.7L797.2,418.6M797.2,418.6L799.9,419.9"/>
<path fill="#00007a" d="M816,341.4 819.1,330.3 814.5,338 811.4,349.2Z"/>
<path fill="#000056" d="M498.6,336.5 513.5,335.5 509.6,325.9 494.3,325.9Z"/>
<path fill="#0000b5" stroke="#0000b5" d="M445.1,243.5 452.9,235.4 454.5,222.3 446.7,230.1Z"/>
<path class="e" d="M445.1,243.5L452.9,235.4M454.5,222.3L446.7,230.1M445.1,243.5L454.5,222.3M452.9,235.4L446.7,230.1"/>
<path fill="#0000be" d="M860.7,298.4 858.5,305.9 855.8,316.1 858,308.6Z"/>
<path fill="#000085" stroke="#000085" d="M853.7,323.6 842.4,327.4 838.5,336.7 849.6,333.4Z"/>
<path class="e" d="M853.7,323.6L842.4,327.4M838.5,336.7L849.6,333.4M849.6,333.4L853.7,323.6"/>
<path fill="#00007a" d="M822.6,322.1 825.7,310.9 822.3,319.1 819.1,330.3Z"/>
<path fill="#0000da" stroke="#0000da" d="M518.7,333.1 520.1,330.9 516.3,321.6 515,323.7Z"/>
<path class="e" d="M518.7,333.1L520.1,330.9M520.1,330.9L516.3,321.6M516.3,321.6L515,323.7"/>
<path fill="#0000be" d="M924.7,314 921.5,325.3 917.8,339.3 921,327.9Z"/>
<path fill="#000056" d="M806.2,411.7 792.9,403.8 784.8,410.2 797.2,418.6Z"/>
<path fill="#0000d8" d="M451.6,309.3 454.8,297.7 452.9,284.6 449.6,296.2Z"/>
<path fill="#0000ab" stroke="#0000ab" d="M516.3,334.8 518.7,333.1 515,323.7 512.5,325.3Z"/>
<path class="e" d="M516.3,334.8L518.7,333.1M515,323.7L512.5,325.3"/>
<path fill="#000065" stroke="#000065" d="M513.5,335.5 516.3,334.8 512.5,325.3 509.6,325.9Z"/>
<path class="e" d="M513.5,335.5L516.3,334.8M512.5,325.3L509.6,325.9M509.6,325.9L513.5,335.5"/>
<path fill="#0000be" d="M465.9,217.9 468,210.4 471.2,198.3 469.1,205.8Z"/>
<path fill="#00006c" stroke="#00006c" d="M420.3,309 421.6,310.4 419.4,295.5 418.1,294.1Z"/>
<path class="e" d="M420.3,309L421.6,310.4M419.4,295.5L418.1,294.1M418.1,294.1L420.3,309"/>
<path fill="#00006f" stroke="#00006f" d="M487.9,322 489.1,324 486,313 484.8,310.9Z"/>
<path class="e" d="M487.9,322L489.1,324M486,313L484.8,310.9M484.8,310.9L487.9,322"/>
<path fill="#000077" stroke="#000077" d="M789.4,399.2 789.4,396.7 781.6,402.8 781.5,405.4Z"/>
<path class="e" d="M789.4,399.2L789.4,396.7M789.4,396.7L781.6,402.8M781.6,402.8L781.5,405.4"/>
<path fill="#000076" stroke="#000076" d="M895.9,353.6 893.3,343 888.2,355.1 890.6,366Z"/>
<path class="e" d="M895.9,353.6L893.3,343M888.2,355.1L890.6,366M895.9,353.6L888.2,355.1M893.3,343L890.6,366"/>
<path fill="#00005d" stroke="#00005d" d="M421.6,310.4 423.7,311 421.5,296.3 419.4,295.5Z"/>
<path class="e" d="M421.6,310.4L423.7,311M423.7,311L421.5,296.3M421.5,296.3L419.4,295.5"/>
<path fill="#000075" stroke="#000075" d="M504.9,244.9 507.6,254.9 508.7,245.2 506.1,234.9Z"/>
<path class="e" d="M504.9,244.9L507.6,254.9M507.6,254.9L508.7,245.2M508.7,245.2L506.1,234.9"/>
<path fill="#00006d" stroke="#00006d" d="M790.7,401.8 789.4,399.2 781.5,405.4 782.7,408.1Z"/>
<path class="e" d="M790.7,401.8L789.4,399.2M781.5,405.4L782.7,408.1"/>
<path fill="#00005d" stroke="#00005d" d="M792.9,403.8 790.7,401.8 782.7,408.1 784.8,410.2Z"/>
<path class="e" d="M792.9,403.8L790.7,401.8M782.7,408.1L784.8,410.2M784.8,410.2L792.9,403.8"/>
<path fill="#0000df" d="M516.3,321.6 519.5,310.4 516.9,301.1 513.7,312.3Z"/>
<path fill="#000066" stroke="#000066" d="M489.1,324 491.3,325.4 488.3,314.6 486,313Z"/>
<path class="e" d="M489.1,324L491.3,325.4M488.3,314.6L486,313"/>
<path fill="#0000d8" d="M516.9,301.1 520.1,289.9 518.7,280.7 515.5,291.9Z"/>
<path fill="#00007a" d="M859.5,409 862.7,397.4 854.6,407.7 851.4,419.3Z"/>
<path fill="#0000be" stroke="#0000be" d="M858.5,305.9 856.4,313.4 853.7,323.6 855.8,316.1Z"/>
<path class="e" d="M858.5,305.9L856.4,313.4M853.7,323.6L855.8,316.1M855.8,316.1L858.5,305.9"/>
<path fill="#0000d1" d="M518.7,280.7 521.9,269.5 521.7,260.5 518.5,271.6Z"/>
<path fill="#00007a" stroke="#00007a" d="M821.8,403.6 819.7,404.8 811.6,412.8 813.7,411.6Z"/>
<path class="e" d="M821.8,403.6L819.7,404.8M811.6,412.8L813.7,411.6M813.7,411.6L821.8,403.6"/>
<path fill="#000056" d="M423.7,311 446.2,312.4 444.2,299.1 421.5,296.3Z"/>
<path fill="#000078" stroke="#000078" d="M887.7,423.3 885.8,423.8 876.6,435.6 878.4,435.1Z"/>
<path class="e" d="M887.7,423.3L885.8,423.8M876.6,435.6L878.4,435.1M878.4,435.1L887.7,423.3"/>
<path fill="#00005a" stroke="#00005a" d="M491.3,325.4 494.3,325.9 491.3,315.2 488.3,314.6Z"/>
<path class="e" d="M491.3,325.4L494.3,325.9M494.3,325.9L491.3,315.2M491.3,315.2L488.3,314.6"/>
<path fill="#0000c8" d="M521.7,260.5 524.9,249.3 525.9,240.5 522.7,251.6Z"/>
<path fill="#0000a3" stroke="#0000a3" d="M842.4,327.4 834.8,334.9 831,343.9 838.5,336.7Z"/>
<path class="e" d="M842.4,327.4L834.8,334.9M834.8,334.9L831,343.9M831,343.9L838.5,336.7"/>
<path fill="#0000c8" stroke="#0000c8" d="M442.3,253.3 445.1,243.5 446.7,230.1 443.9,239.9Z"/>
<path class="e" d="M442.3,253.3L445.1,243.5M446.7,230.1L443.9,239.9M443.9,239.9L442.3,253.3M442.3,253.3L446.7,230.1M445.1,243.5L443.9,239.9"/>
<path fill="#000079" d="M796.2,390 799.3,378.8 792.5,385.5 789.4,396.7Z"/>
<path fill="#0000ce" stroke="#0000ce" d="M450.5,310.9 451.6,309.3 449.6,296.2 448.6,297.8Z"/>
<path class="e" d="M450.5,310.9L451.6,309.3M451.6,309.3L449.6,296.2M449.6,296.2L448.6,297.8"/>
<path fill="#0000be" d="M525.9,240.5 529.1,229.3 531.3,220.7 528.2,231.9Z"/>
<path fill="#000056" stroke="#000056" d="M885.8,423.8 883.6,423.4 874.5,435 876.6,435.6Z"/>
<path class="e" d="M885.8,423.8L883.6,423.4M883.6,423.4L874.5,435M874.5,435L876.6,435.6"/>
<path fill="#00007a" d="M805,371.5 808.2,360.4 802.5,367.6 799.3,378.8Z"/>
<path fill="#000063" stroke="#000063" d="M819.7,404.8 816.9,405 809,412.8 811.6,412.8Z"/>
<path class="e" d="M819.7,404.8L816.9,405M809,412.8L811.6,412.8"/>
<path fill="#00008c" stroke="#00008c" d="M454.5,222.3 465.9,217.9 469.1,205.8 457.8,209.6Z"/>
<path class="e" d="M454.5,222.3L465.9,217.9M465.9,217.9L469.1,205.8M469.1,205.8L457.8,209.6M454.5,222.3L469.1,205.8M465.9,217.9L457.8,209.6"/>
<path fill="#00007a" d="M812.8,352.6 816,341.4 811.4,349.2 808.2,360.4Z"/>
<path fill="#0000a2" stroke="#0000a2" d="M448.5,312.1 450.5,310.9 448.6,297.8 446.6,298.9Z"/>
<path class="e" d="M448.5,312.1L450.5,310.9M448.6,297.8L446.6,298.9"/>
<path fill="#00006d" stroke="#00006d" d="M498.5,225.9 506.1,234.9 508.7,225.2 501.2,215.6Z"/>
<path class="e" d="M498.5,225.9L506.1,234.9M508.7,225.2L501.2,215.6M501.2,215.6L498.5,225.9"/>
<path fill="#00007a" d="M505.4,200.6 503.3,208.1 507.4,198.3 509.6,190.8Z"/>
<path fill="#000062" stroke="#000062" d="M446.2,312.4 448.5,312.1 446.6,298.9 444.2,299.1Z"/>
<path class="e" d="M446.2,312.4L448.5,312.1M446.6,298.9L444.2,299.1M444.2,299.1L446.2,312.4"/>
<path fill="#00007a" d="M819.4,333.2 822.6,322.1 819.1,330.3 816,341.4Z"/>
<path fill="#000056" d="M494.3,325.9 509.6,325.9 506.9,316.2 491.3,315.2Z"/>
<path fill="#000056" stroke="#000056" d="M816.9,405 813.9,404 806.2,411.7 809,412.8Z"/>
<path class="e" d="M816.9,405L813.9,404M813.9,404L806.2,411.7M806.2,411.7L809,412.8"/>
<path fill="#000056" d="M883.6,423.4 862.7,414.2 854.4,424.7 874.5,435Z"/>
<path fill="#0000d5" stroke="#0000d5" d="M515,323.7 516.3,321.6 513.7,312.3 512.4,314.4Z"/>
<path class="e" d="M515,323.7L516.3,321.6M516.3,321.6L513.7,312.3M513.7,312.3L512.4,314.4"/>
<path fill="#000078" stroke="#000078" d="M859.5,410.9 859.5,409 851.4,419.3 851.4,421.2Z"/>
<path class="e" d="M859.5,410.9L859.5,409M859.5,409L851.4,419.3M851.4,419.3L851.4,421.2"/>
<path fill="#00007a" stroke="#00007a" d="M893.1,363.5 895.9,353.6 890.6,366 887.8,375.9Z"/>
<path class="e" d="M893.1,363.5L895.9,353.6M890.6,366L887.8,375.9M887.8,375.9L893.1,363.5M893.1,363.5L890.6,366M895.9,353.6L887.8,375.9"/>
<path fill="#0000be" d="M921.5,325.3 918.3,336.7 914.6,350.6 917.8,339.3Z"/>
<path fill="#0000a7" stroke="#0000a7" d="M512.5,325.3 515,323.7 512.4,314.4 509.9,315.8Z"/>
<path class="e" d="M512.5,325.3L515,323.7M512.4,314.4L509.9,315.8"/>
<path fill="#00008c" stroke="#00008c" d="M856.4,313.4 845,317.7 842.4,327.4 853.7,323.6Z"/>
<path class="e" d="M856.4,313.4L845,317.7M842.4,327.4L853.7,323.6"/>
<path fill="#000063" stroke="#000063" d="M509.6,325.9 512.5,325.3 509.9,315.8 506.9,316.2Z"/>
<path class="e" d="M509.6,325.9L512.5,325.3M509.9,315.8L506.9,316.2M506.9,316.2L509.6,325.9"/>
<path fill="#0000c8" d="M861.9,287.8 859.8,295.3 858.5,305.9 860.7,298.4Z"/>
<path fill="#00006d" stroke="#00006d" d="M896.6,330.4 889,321.3 885.8,333.4 893.3,343Z"/>
<path class="e" d="M896.6,330.4L889,321.3M889,321.3L885.8,333.4M885.8,333.4L893.3,343M896.6,330.4L885.8,333.4M889,321.3L893.3,343"/>
<path fill="#00006e" stroke="#00006e" d="M860.7,412.8 859.5,410.9 851.4,421.2 852.5,423.2Z"/>
<path class="e" d="M860.7,412.8L859.5,410.9M851.4,421.2L852.5,423.2"/>
<path fill="#000056" d="M813.9,404 800,396.8 792.9,403.8 806.2,411.7Z"/>
<path fill="#00005e" stroke="#00005e" d="M862.7,414.2 860.7,412.8 852.5,423.2 854.4,424.7Z"/>
<path class="e" d="M862.7,414.2L860.7,412.8M852.5,423.2L854.4,424.7M854.4,424.7L862.7,414.2"/>
<path fill="#000078" stroke="#000078" d="M796.2,392.5 796.2,390 789.4,396.7 789.4,399.2Z"/>
<path class="e" d="M796.2,392.5L796.2,390M796.2,390L789.4,396.7M789.4,396.7L789.4,399.2"/>
<path fill="#00006e" stroke="#00006e" d="M797.6,395 796.2,392.5 789.4,399.2 790.7,401.8Z"/>
<path class="e" d="M797.6,395L796.2,392.5M789.4,399.2L790.7,401.8"/>
<path fill="#00007a" d="M442.3,181.3 439.1,192.7 444.7,179.3 447.9,168Z"/>
<path fill="#00005e" stroke="#00005e" d="M800,396.8 797.6,395 790.7,401.8 792.9,403.8Z"/>
<path class="e" d="M800,396.8L797.6,395M790.7,401.8L792.9,403.8M792.9,403.8L800,396.8"/>
<path fill="#000070" stroke="#000070" d="M484.8,310.9 486,313 484.4,302.1 483.2,299.9Z"/>
<path class="e" d="M484.8,310.9L486,313M484.4,302.1L483.2,299.9M483.2,299.9L484.8,310.9"/>
<path fill="#0000d8" d="M513.7,312.3 516.9,301.1 515.5,291.9 512.4,303.1Z"/>
<path fill="#0000ac" stroke="#0000ac" d="M446.7,230.1 454.5,222.3 457.8,209.6 450.1,217.1Z"/>
<path class="e" d="M446.7,230.1L454.5,222.3M457.8,209.6L450.1,217.1M446.7,230.1L457.8,209.6M454.5,222.3L450.1,217.1"/>
<path fill="#00007a" stroke="#00007a" d="M503.3,208.1 501.2,215.6 505.3,205.8 507.4,198.3Z"/>
<path class="e" d="M503.3,208.1L501.2,215.6M505.3,205.8L507.4,198.3M507.4,198.3L503.3,208.1"/>
<path fill="#0000d1" d="M515.5,291.9 518.7,280.7 518.5,271.6 515.4,282.8Z"/>
<path fill="#000076" stroke="#000076" d="M506.1,234.9 508.7,245.2 511.2,235.8 508.7,225.2Z"/>
<path class="e" d="M506.1,234.9L508.7,245.2M508.7,245.2L511.2,235.8M511.2,235.8L508.7,225.2"/>
<path fill="#0000c8" d="M518.5,271.6 521.7,260.5 522.7,251.6 519.6,262.8Z"/>
<path fill="#0000d1" d="M449.6,296.2 452.9,284.6 452.7,271.8 449.4,283.4Z"/>
<path class="k" d="M507.5,247.7 504.4,261.5 502.2,260.5 505.1,247.7Z"/>
<path class="k" d="M504.4,261.5 495.5,272.7 494,270.8 502.2,260.5Z"/>
<path class="k" d="M495.5,272.7 482.7,278.9 482.1,276.5 494,270.8Z"/>
<path class="k" d="M482.7,278.9 468.4,278.9 469,276.5 482.1,276.5Z"/>
<path class="k" d="M468.4,278.9 455.6,272.7 457.1,270.8 469,276.5Z"/>
<path class="k" d="M455.6,272.7 446.7,261.5 448.9,260.5 457.1,270.8Z"/>
<path class="k" d="M446.7,261.5 443.5,247.7 446,247.7 448.9,260.5Z"/>
<path class="k" d="M443.5,247.7 446.7,233.8 448.9,234.8 446,247.7Z"/>
<path class="k" d="M446.7,233.8 455.6,222.6 457.1,224.6 448.9,234.8Z"/>
<path class="k" d="M455.6,222.6 468.4,216.5 469,218.8 457.1,224.6Z"/>
<path class="k" d="M468.4,216.5 482.7,216.5 482.1,218.8 469,218.8Z"/>
<path class="k" d="M482.7,216.5 495.5,222.6 494,224.6 482.1,218.8Z"/>
<path class="k" d="M495.5,222.6 504.4,233.8 502.2,234.8 494,224.6Z"/>
<path class="k" d="M504.4,233.8 507.5,247.7 505.1,247.7 502.2,234.8Z"/>
<path fill="#000067" stroke="#000067" d="M486,313 488.3,314.6 486.7,303.8 484.4,302.1Z"/>
<path class="e" d="M486,313L488.3,314.6M486.7,303.8L484.4,302.1"/>
<path fill="#0000be" d="M522.7,251.6 525.9,240.5 528.2,231.9 525,243.1Z"/>
<path fill="#00007a" d="M801.9,382.7 805,371.5 799.3,378.8 796.2,390Z"/>
<path fill="#000076" stroke="#000076" d="M418,292.3 418.1,294.1 417.9,279.4 417.7,277.6Z"/>
<path class="e" d="M418,292.3L418.1,294.1M417.9,279.4L417.7,277.6M417.7,277.6L418,292.3"/>
<path fill="#000084" stroke="#000084" d="M828.6,394.9 826.4,396.2 819.7,404.8 821.8,403.6Z"/>
<path class="e" d="M828.6,394.9L826.4,396.2M819.7,404.8L821.8,403.6M821.8,403.6L828.6,394.9"/>
<path fill="#00007a" d="M809.6,363.8 812.8,352.6 808.2,360.4 805,371.5Z"/>
<path fill="#00005b" stroke="#00005b" d="M488.3,314.6 491.3,315.2 489.8,304.7 486.7,303.8Z"/>
<path class="e" d="M488.3,314.6L491.3,315.2M491.3,315.2L489.8,304.7M489.8,304.7L486.7,303.8"/>
<path fill="#0000c8" stroke="#0000c8" d="M859.8,295.3 857.7,302.8 856.4,313.4 858.5,305.9Z"/>
<path class="e" d="M859.8,295.3L857.7,302.8M856.4,313.4L858.5,305.9M858.5,305.9L859.8,295.3"/>
<path fill="#0000ac" stroke="#0000ac" d="M845,317.7 837.3,325.5 834.8,334.9 842.4,327.4Z"/>
<path class="e" d="M845,317.7L837.3,325.5M834.8,334.9L842.4,327.4"/>
<path fill="#0000c8" d="M926.4,299.6 923.2,311 921.5,325.3 924.7,314Z"/>
<path fill="#00006d" stroke="#00006d" d="M418.1,294.1 419.4,295.5 419.2,280.9 417.9,279.4Z"/>
<path class="e" d="M418.1,294.1L419.4,295.5M419.2,280.9L417.9,279.4"/>
<path fill="#00007a" d="M816.2,344.4 819.4,333.2 816,341.4 812.8,352.6Z"/>
<path fill="#000076" stroke="#000076" d="M899.3,340.7 896.6,330.4 893.3,343 895.9,353.6Z"/>
<path class="e" d="M899.3,340.7L896.6,330.4M893.3,343L895.9,353.6M895.9,353.6L899.3,340.7M899.3,340.7L893.3,343M896.6,330.4L895.9,353.6"/>
<path fill="#00006a" stroke="#00006a" d="M826.4,396.2 823.5,396.5 816.9,405 819.7,404.8Z"/>
<path class="e" d="M826.4,396.2L823.5,396.5M816.9,405L819.7,404.8"/>
<path fill="#00005d" stroke="#00005d" d="M419.4,295.5 421.5,296.3 421.3,281.8 419.2,280.9Z"/>
<path class="e" d="M419.4,295.5L421.5,296.3M421.5,296.3L421.3,281.8M421.3,281.8L419.2,280.9"/>
<path fill="#00007a" d="M866,398 869.2,386.4 862.7,397.4 859.5,409Z"/>
<path fill="#000056" d="M491.3,315.2 506.9,316.2 505.5,306.7 489.8,304.7Z"/>
<path fill="#0000ce" stroke="#0000ce" d="M512.4,314.4 513.7,312.3 512.4,303.1 511,305.1Z"/>
<path class="e" d="M512.4,314.4L513.7,312.3M513.7,312.3L512.4,303.1M512.4,303.1L511,305.1"/>
<path fill="#00006d" stroke="#00006d" d="M501.2,215.6 508.7,225.2 512.6,215.9 505.3,205.8Z"/>
<path class="e" d="M501.2,215.6L508.7,225.2M512.6,215.9L505.3,205.8"/>
<path fill="#0000be" d="M918.3,336.7 915.1,348 911.4,361.9 914.6,350.6Z"/>
<path fill="#000056" stroke="#000056" d="M823.5,396.5 820.5,395.7 813.9,404 816.9,405Z"/>
<path class="e" d="M823.5,396.5L820.5,395.7M820.5,395.7L813.9,404M813.9,404L816.9,405"/>
<path fill="#00007a" d="M509.6,190.8 507.4,198.3 512.9,189 515.1,181.5Z"/>
<path fill="#0000a0" stroke="#0000a0" d="M896.2,409.2 895.2,410.7 887.7,423.3 888.7,421.8Z"/>
<path class="e" d="M896.2,409.2L895.2,410.7M887.7,423.3L888.7,421.8M888.7,421.8L896.2,409.2"/>
<path fill="#0000a2" stroke="#0000a2" d="M509.9,315.8 512.4,314.4 511,305.1 508.5,306.4Z"/>
<path class="e" d="M509.9,315.8L512.4,314.4M511,305.1L508.5,306.4"/>
<path fill="#000056" d="M421.5,296.3 444.2,299.1 444,286 421.3,281.8Z"/>
<path fill="#0000c7" stroke="#0000c7" d="M448.6,297.8 449.6,296.2 449.4,283.4 448.3,285Z"/>
<path class="e" d="M448.6,297.8L449.6,296.2M449.6,296.2L449.4,283.4M449.4,283.4L448.3,285"/>
<path fill="#000062" stroke="#000062" d="M506.9,316.2 509.9,315.8 508.5,306.4 505.5,306.7Z"/>
<path class="e" d="M506.9,316.2L509.9,315.8M508.5,306.4L505.5,306.7M505.5,306.7L506.9,316.2"/>
<path fill="#000078" stroke="#000078" d="M802,385.2 801.9,382.7 796.2,390 796.2,392.5Z"/>
<path class="e" d="M802,385.2L801.9,382.7M801.9,382.7L796.2,390M796.2,390L796.2,392.5"/>
<path fill="#0000be" stroke="#0000be" d="M443.9,239.9 446.7,230.1 450.1,217.1 447.3,227Z"/>
<path class="e" d="M443.9,239.9L446.7,230.1M450.1,217.1L447.3,227M447.3,227L443.9,239.9M443.9,239.9L450.1,217.1M446.7,230.1L447.3,227"/>
<path fill="#000080" stroke="#000080" d="M895.2,410.7 893.2,411.3 885.8,423.8 887.7,423.3Z"/>
<path class="e" d="M895.2,410.7L893.2,411.3M885.8,423.8L887.7,423.3"/>
<path fill="#00009d" stroke="#00009d" d="M446.6,298.9 448.6,297.8 448.3,285 446.3,285.9Z"/>
<path class="e" d="M446.6,298.9L448.6,297.8M448.3,285L446.3,285.9"/>
<path fill="#000056" d="M820.5,395.7 805.9,389.3 800,396.8 813.9,404Z"/>
<path fill="#000085" stroke="#000085" d="M457.8,209.6 469.1,205.8 474,194.2 462.9,197.5Z"/>
<path class="e" d="M457.8,209.6L469.1,205.8M469.1,205.8L474,194.2M474,194.2L462.9,197.5M457.8,209.6L474,194.2M469.1,205.8L462.9,197.5"/>
<path fill="#000060" stroke="#000060" d="M444.2,299.1 446.6,298.9 446.3,285.9 444,286Z"/>
<path class="e" d="M444.2,299.1L446.6,298.9M446.3,285.9L444,286M444,286L444.2,299.1"/>
<path fill="#00007a" d="M439.1,192.7 435.9,204 441.5,190.7 444.7,179.3Z"/>
<path fill="#000093" stroke="#000093" d="M857.7,302.8 846.2,307.7 845,317.7 856.4,313.4Z"/>
<path class="e" d="M857.7,302.8L846.2,307.7M845,317.7L856.4,313.4"/>
<path fill="#000056" stroke="#000056" d="M893.2,411.3 891,411 883.6,423.4 885.8,423.8Z"/>
<path class="e" d="M893.2,411.3L891,411M891,411L883.6,423.4M883.6,423.4L885.8,423.8"/>
<path fill="#00006e" stroke="#00006e" d="M803.4,387.6 802,385.2 796.2,392.5 797.6,395Z"/>
<path class="e" d="M803.4,387.6L802,385.2M796.2,392.5L797.6,395"/>
<path fill="#0000d1" d="M861.7,276.9 859.6,284.4 859.8,295.3 861.9,287.8Z"/>
<path fill="#00005e" stroke="#00005e" d="M805.9,389.3 803.4,387.6 797.6,395 800,396.8Z"/>
<path class="e" d="M805.9,389.3L803.4,387.6M797.6,395L800,396.8M800,396.8L805.9,389.3"/>
<path fill="#0000d1" d="M512.4,303.1 515.5,291.9 515.4,282.8 512.2,294Z"/>
<path fill="#000078" stroke="#000078" d="M866.1,399.9 866,398 859.5,409 859.5,410.9Z"/>
<path class="e" d="M866.1,399.9L866,398M866,398L859.5,409M859.5,409L859.5,410.9"/>
<path fill="#0000c8" d="M515.4,282.8 518.5,271.6 519.6,262.8 516.4,274Z"/>
<path fill="#000056" d="M891,411 869.3,403 862.7,414.2 883.6,423.4Z"/>
<path fill="#0000be" stroke="#0000be" d="M837.3,325.5 834.5,335.4 832,344.8 834.8,334.9Z"/>
<path class="e" d="M837.3,325.5L834.5,335.4M834.5,335.4L832,344.8M832,344.8L834.8,334.9"/>
<path fill="#0000be" d="M519.6,262.8 522.7,251.6 525,243.1 521.8,254.2Z"/>
<path fill="#00006e" stroke="#00006e" d="M867.3,401.7 866.1,399.9 859.5,410.9 860.7,412.8Z"/>
<path class="e" d="M867.3,401.7L866.1,399.9M859.5,410.9L860.7,412.8"/>
<path fill="#000071" stroke="#000071" d="M483.2,299.9 484.4,302.1 484.2,291.4 483,289.1Z"/>
<path class="e" d="M483.2,299.9L484.4,302.1M484.2,291.4L483,289.1M483,289.1L483.2,299.9"/>
<path fill="#000076" stroke="#000076" d="M508.7,225.2 511.2,235.8 515,226.8 512.6,215.9Z"/>
<path class="e" d="M508.7,225.2L511.2,235.8M515,226.8L512.6,215.9"/>
<path fill="#00005e" stroke="#00005e" d="M869.3,403 867.3,401.7 860.7,412.8 862.7,414.2Z"/>
<path class="e" d="M869.3,403L867.3,401.7M860.7,412.8L862.7,414.2M862.7,414.2L869.3,403"/>
<path fill="#00006c" stroke="#00006c" d="M898.2,317.3 890.5,308.8 889,321.3 896.6,330.4Z"/>
<path class="e" d="M898.2,317.3L890.5,308.8M890.5,308.8L889,321.3M889,321.3L896.6,330.4M898.2,317.3L889,321.3M890.5,308.8L896.6,330.4"/>
<path fill="#00007a" stroke="#00007a" d="M507.4,198.3 505.3,205.8 510.8,196.5 512.9,189Z"/>
<path class="e" d="M507.4,198.3L505.3,205.8M510.8,196.5L512.9,189M512.9,189L507.4,198.3"/>
<path fill="#00007a" d="M806.5,375 809.6,363.8 805,371.5 801.9,382.7Z"/>
<path class="k" d="M505.1,247.7 502.2,260.5 495.9,257.5 498.2,247.7Z"/>
<path class="k" d="M502.2,260.5 494,270.8 489.6,265.4 495.9,257.5Z"/>
<path class="k" d="M494,270.8 482.1,276.5 480.6,269.7 489.6,265.4Z"/>
<path class="k" d="M482.1,276.5 469,276.5 470.5,269.7 480.6,269.7Z"/>
<path class="k" d="M469,276.5 457.1,270.8 461.4,265.4 470.5,269.7Z"/>
<path class="k" d="M457.1,270.8 448.9,260.5 455.1,257.5 461.4,265.4Z"/>
<path class="k" d="M448.9,260.5 446,247.7 452.9,247.7 455.1,257.5Z"/>
<path class="k" d="M446,247.7 448.9,234.8 455.1,237.8 452.9,247.7Z"/>
<path class="k" d="M448.9,234.8 457.1,224.6 461.4,230 455.1,237.8Z"/>
<path class="k" d="M457.1,224.6 469,218.8 470.5,225.6 461.4,230Z"/>
<path class="k" d="M469,218.8 482.1,218.8 480.6,225.6 470.5,225.6Z"/>
<path class="k" d="M482.1,218.8 494,224.6 489.6,230 480.6,225.6Z"/>
<path class="k" d="M494,224.6 502.2,234.8 495.9,237.8 489.6,230Z"/>
<path class="k" d="M502.2,234.8 505.1,247.7 498.2,247.7 495.9,237.8Z"/>
<path fill="#0000c8" d="M923.2,311 920,322.3 918.3,336.7 921.5,325.3Z"/>
<path fill="#00007a" d="M813.1,355.6 816.2,344.4 812.8,352.6 809.6,363.8Z"/>
<path fill="#000067" stroke="#000067" d="M484.4,302.1 486.7,303.8 486.5,293.3 484.2,291.4Z"/>
<path class="e" d="M484.4,302.1L486.7,303.8M486.5,293.3L484.2,291.4"/>
<path fill="#00005b" stroke="#00005b" d="M486.7,303.8 489.8,304.7 489.6,294.4 486.5,293.3Z"/>
<path class="e" d="M486.7,303.8L489.8,304.7M489.8,304.7L489.6,294.4M489.6,294.4L486.5,293.3"/>
<path fill="#00008e" stroke="#00008e" d="M834.1,385.7 831.8,387.1 826.4,396.2 828.6,394.9Z"/>
<path class="e" d="M834.1,385.7L831.8,387.1M826.4,396.2L828.6,394.9M828.6,394.9L834.1,385.7"/>
<path fill="#0000b5" stroke="#0000b5" d="M846.2,307.7 838.4,315.8 837.3,325.5 845,317.7Z"/>
<path class="e" d="M846.2,307.7L838.4,315.8M837.3,325.5L845,317.7"/>
<path fill="#0000c7" stroke="#0000c7" d="M511,305.1 512.4,303.1 512.2,294 510.8,296Z"/>
<path class="e" d="M511,305.1L512.4,303.1M512.4,303.1L512.2,294M512.2,294L510.8,296"/>
<path fill="#0000be" d="M915.1,348 911.9,359.3 908.2,373.2 911.4,361.9Z"/>
<path fill="#0000a3" stroke="#0000a3" d="M450.1,217.1 457.8,209.6 462.9,197.5 455.4,204.7Z"/>
<path class="e" d="M450.1,217.1L457.8,209.6M462.9,197.5L455.4,204.7M455.4,204.7L450.1,217.1M450.1,217.1L462.9,197.5M457.8,209.6L455.4,204.7"/>
<path fill="#0000d1" stroke="#0000d1" d="M859.6,284.4 857.5,291.9 857.7,302.8 859.8,295.3Z"/>
<path class="e" d="M859.6,284.4L857.5,291.9M857.7,302.8L859.8,295.3M859.8,295.3L859.6,284.4"/>
<path fill="#0000c8" d="M449.4,283.4 452.7,271.8 454.2,259.3 450.9,270.9Z"/>
<path fill="#00007a" d="M447.9,168 444.7,179.3 452.2,166.7 455.4,155.4Z"/>
<path fill="#000056" d="M489.8,304.7 505.5,306.7 505.3,297.2 489.6,294.4Z"/>
<path fill="#000071" stroke="#000071" d="M831.8,387.1 828.9,387.5 823.5,396.5 826.4,396.2Z"/>
<path class="e" d="M831.8,387.1L828.9,387.5M823.5,396.5L826.4,396.2"/>
<path fill="#00009d" stroke="#00009d" d="M508.5,306.4 511,305.1 510.8,296 508.3,297.2Z"/>
<path class="e" d="M508.5,306.4L511,305.1M510.8,296L508.3,297.2"/>
<path fill="#000060" stroke="#000060" d="M505.5,306.7 508.5,306.4 508.3,297.2 505.3,297.2Z"/>
<path class="e" d="M505.5,306.7L508.5,306.4M508.3,297.2L505.3,297.2M505.3,297.2L505.5,306.7"/>
<path fill="#000056" stroke="#000056" d="M828.9,387.5 825.7,386.8 820.5,395.7 823.5,396.5Z"/>
<path class="e" d="M828.9,387.5L825.7,386.8M825.7,386.8L820.5,395.7M820.5,395.7L823.5,396.5"/>
<path fill="#00006d" stroke="#00006d" d="M505.3,205.8 512.6,215.9 517.8,207.1 510.8,196.5Z"/>
<path class="e" d="M505.3,205.8L512.6,215.9M517.8,207.1L510.8,196.5"/>
<path fill="#000078" stroke="#000078" d="M806.6,377.4 806.5,375 801.9,382.7 802,385.2Z"/>
<path class="e" d="M806.6,377.4L806.5,375M806.5,375L801.9,382.7M801.9,382.7L802,385.2"/>
<path fill="#00007a" d="M515.1,181.5 512.9,189 519.8,180.3 521.9,172.8Z"/>
<path fill="#00007a" d="M435.9,204 432.7,215.3 438.3,202 441.5,190.7Z"/>
<path fill="#000077" stroke="#000077" d="M417.7,277.6 417.9,279.4 419.6,265 419.5,263.2Z"/>
<path class="e" d="M417.7,277.6L417.9,279.4M419.6,265L419.5,263.2M419.5,263.2L417.7,277.6"/>
<path fill="#000056" d="M825.7,386.8 810.7,381.2 805.9,389.3 820.5,395.7Z"/>
<path fill="#000075" stroke="#000075" d="M900.9,327.3 898.2,317.3 896.6,330.4 899.3,340.7Z"/>
<path class="e" d="M900.9,327.3L898.2,317.3M896.6,330.4L899.3,340.7M899.3,340.7L900.9,327.3M900.9,327.3L896.6,330.4M898.2,317.3L899.3,340.7"/>
<path fill="#00006e" stroke="#00006e" d="M808.1,379.7 806.6,377.4 802,385.2 803.4,387.6Z"/>
<path class="e" d="M808.1,379.7L806.6,377.4M802,385.2L803.4,387.6"/>
<path fill="#00007a" d="M870.8,386.4 874.1,374.8 869.2,386.4 866,398Z"/>
<path fill="#00007a" stroke="#00007a" d="M511.2,235.8 508.4,245.7 512.2,236.7 515,226.8Z"/>
<path class="e" d="M511.2,235.8L508.4,245.7M508.4,245.7L512.2,236.7M512.2,236.7L515,226.8"/>
<path fill="#00005e" stroke="#00005e" d="M810.7,381.2 808.1,379.7 803.4,387.6 805.9,389.3Z"/>
<path class="e" d="M810.7,381.2L808.1,379.7M803.4,387.6L805.9,389.3M805.9,389.3L810.7,381.2"/>
<path fill="#0000c8" d="M512.2,294 515.4,282.8 516.4,274 513.3,285.2Z"/>
<path fill="#0000d1" d="M926.2,284.9 923,296.2 923.2,311 926.4,299.6Z"/>
<path fill="#00006d" stroke="#00006d" d="M417.9,279.4 419.2,280.9 420.9,266.7 419.6,265Z"/>
<path class="e" d="M417.9,279.4L419.2,280.9M420.9,266.7L419.6,265"/>
<path fill="#000099" stroke="#000099" d="M857.5,291.9 846,297.4 846.2,307.7 857.7,302.8Z"/>
<path class="e" d="M857.5,291.9L846,297.4M846.2,307.7L857.7,302.8"/>
<path class="kp" d="M498.2,247.7 495.9,257.5 486.6,253 487.8,247.7Z"/>
<path class="kp" d="M495.9,257.5 489.6,265.4 483.2,257.2 486.6,253Z"/>
<path class="kp" d="M489.6,265.4 480.6,269.7 478.3,259.6 483.2,257.2Z"/>
<path class="kp" d="M480.6,269.7 470.5,269.7 472.8,259.6 478.3,259.6Z"/>
<path class="kp" d="M470.5,269.7 461.4,265.4 467.9,257.2 472.8,259.6Z"/>
<path class="kp" d="M461.4,265.4 455.1,257.5 464.5,253 467.9,257.2Z"/>
<path class="kp" d="M455.1,257.5 452.9,247.7 463.3,247.7 464.5,253Z"/>
<path class="kp" d="M452.9,247.7 455.1,237.8 464.5,242.4 463.3,247.7Z"/>
<path class="kp" d="M455.1,237.8 461.4,230 467.9,238.1 464.5,242.4Z"/>
<path class="kp" d="M461.4,230 470.5,225.6 472.8,235.7 467.9,238.1Z"/>
<path class="kp" d="M470.5,225.6 480.6,225.6 478.3,235.7 472.8,235.7Z"/>
<path class="kp" d="M480.6,225.6 489.6,230 483.2,238.1 478.3,235.7Z"/>
<path class="kp" d="M489.6,230 495.9,237.8 486.6,242.4 483.2,238.1Z"/>
<path class="kp" d="M495.9,237.8 498.2,247.7 487.8,247.7 486.6,242.4Z"/>
<path fill="#0000be" d="M516.4,274 519.6,262.8 521.8,254.2 518.7,265.4Z"/>
<path fill="#00005d" stroke="#00005d" d="M419.2,280.9 421.3,281.8 423,267.7 420.9,266.7Z"/>
<path class="e" d="M419.2,280.9L421.3,281.8M421.3,281.8L423,267.7M423,267.7L420.9,266.7"/>
<path fill="#0000d8" d="M860.1,265.9 858,273.4 859.6,284.4 861.7,276.9Z"/>
<path fill="#0000be" stroke="#0000be" d="M448.3,285 449.4,283.4 450.9,270.9 449.8,272.4Z"/>
<path class="e" d="M448.3,285L449.4,283.4M449.4,283.4L450.9,270.9M450.9,270.9L449.8,272.4"/>
<path fill="#000078" stroke="#000078" d="M483.1,286.5 483,289.1 484.3,278.5 484.3,275.9Z"/>
<path class="e" d="M483.1,286.5L483,289.1M484.3,278.5L484.3,275.9M484.3,275.9L483.1,286.5"/>
<path fill="#000056" d="M421.3,281.8 444,286 445.5,273.2 423,267.7Z"/>
<path fill="#000096" stroke="#000096" d="M446.3,285.9 448.3,285 449.8,272.4 447.8,273.3Z"/>
<path class="e" d="M446.3,285.9L448.3,285M449.8,272.4L447.8,273.3"/>
<path fill="#0000c8" d="M920,322.3 916.8,333.6 915.1,348 918.3,336.7Z"/>
<path fill="#00007a" d="M809.9,366.8 813.1,355.6 809.6,363.8 806.5,375Z"/>
<path fill="#0000c8" stroke="#0000c8" d="M838.4,315.8 835.6,325.7 834.5,335.4 837.3,325.5Z"/>
<path class="e" d="M838.4,315.8L835.6,325.7M835.6,325.7L834.5,335.4M834.5,335.4L837.3,325.5"/>
<path fill="#00005d" stroke="#00005d" d="M444,286 446.3,285.9 447.8,273.3 445.5,273.2Z"/>
<path class="e" d="M444,286L446.3,285.9M447.8,273.3L445.5,273.2M445.5,273.2L444,286"/>
<path fill="#00007d" stroke="#00007d" d="M462.9,197.5 474,194.2 480.5,183.2 469.7,186Z"/>
<path class="e" d="M462.9,197.5L474,194.2M474,194.2L480.5,183.2M480.5,183.2L469.7,186M462.9,197.5L480.5,183.2M474,194.2L469.7,186"/>
<path fill="#0000ab" stroke="#0000ab" d="M901.8,395.9 900.7,397.4 895.2,410.7 896.2,409.2Z"/>
<path class="e" d="M901.8,395.9L900.7,397.4M895.2,410.7L896.2,409.2M896.2,409.2L901.8,395.9"/>
<path fill="#000076" stroke="#000076" d="M512.6,215.9 515,226.8 520.1,218.3 517.8,207.1Z"/>
<path class="e" d="M512.6,215.9L515,226.8M520.1,218.3L517.8,207.1"/>
<path fill="#000072" stroke="#000072" d="M483,289.1 484.2,291.4 485.5,281 484.3,278.5Z"/>
<path class="e" d="M483,289.1L484.2,291.4M485.5,281L484.3,278.5"/>
<path fill="#00007a" stroke="#00007a" d="M512.9,189 510.8,196.5 517.7,187.8 519.8,180.3Z"/>
<path class="e" d="M512.9,189L510.8,196.5M517.7,187.8L519.8,180.3M519.8,180.3L512.9,189"/>
<path fill="#000088" stroke="#000088" d="M900.7,397.4 898.8,398.1 893.2,411.3 895.2,410.7Z"/>
<path class="e" d="M900.7,397.4L898.8,398.1M893.2,411.3L895.2,410.7"/>
<path fill="#0000be" d="M911.9,359.3 908.7,370.6 905,384.5 908.2,373.2Z"/>
<path fill="#0000ae" stroke="#0000ae" d="M839.5,373.7 838.2,375.9 834.1,385.7 835.4,383.5Z"/>
<path class="e" d="M839.5,373.7L838.2,375.9M834.1,385.7L835.4,383.5M835.4,383.5L839.5,373.7"/>
<path fill="#000078" stroke="#000078" d="M871,388.3 870.8,386.4 866,398 866.1,399.9Z"/>
<path class="e" d="M871,388.3L870.8,386.4M870.8,386.4L866,398M866,398L866.1,399.9"/>
<path fill="#000058" stroke="#000058" d="M898.8,398.1 896.5,397.9 891,411 893.2,411.3Z"/>
<path class="e" d="M898.8,398.1L896.5,397.9M896.5,397.9L891,411M891,411L893.2,411.3"/>
<path fill="#000068" stroke="#000068" d="M484.2,291.4 486.5,293.3 487.8,283 485.5,281Z"/>
<path class="e" d="M484.2,291.4L486.5,293.3M487.8,283L485.5,281"/>
<path class="kp" d="M487.8,247.7 486.6,253 475.5,247.7 475.5,247.7Z"/>
<path class="kp" d="M486.6,253 483.2,257.2 475.5,247.7 475.5,247.7Z"/>
<path class="kp" d="M483.2,257.2 478.3,259.6 475.5,247.7 475.5,247.7Z"/>
<path class="kp" d="M478.3,259.6 472.8,259.6 475.5,247.7 475.5,247.7Z"/>
<path class="kp" d="M472.8,259.6 467.9,257.2 475.5,247.7 475.5,247.7Z"/>
<path class="kp" d="M467.9,257.2 464.5,253 475.5,247.7 475.5,247.7Z"/>
<path class="kp" d="M464.5,253 463.3,247.7 475.5,247.7 475.5,247.7Z"/>
<path class="kp" d="M463.3,247.7 464.5,242.4 475.5,247.7 475.5,247.7Z"/>
<path class="kp" d="M464.5,242.4 467.9,238.1 475.5,247.7 475.5,247.7Z"/>
<path class="kp" d="M467.9,238.1 472.8,235.7 475.5,247.7 475.5,247.7Z"/>
<path class="kp" d="M472.8,235.7 478.3,235.7 475.5,247.7 475.5,247.7Z"/>
<path class="kp" d="M478.3,235.7 483.2,238.1 475.5,247.7 475.5,247.7Z"/>
<path class="kp" d="M483.2,238.1 486.6,242.4 475.5,247.7 475.5,247.7Z"/>
<path class="kp" d="M486.6,242.4 487.8,247.7 475.5,247.7 475.5,247.7Z"/>
<path fill="#00007a" d="M444.7,179.3 441.5,190.7 449,178 452.2,166.7Z"/>
<path fill="#0000be" stroke="#0000be" d="M510.8,296 512.2,294 513.3,285.2 511.9,287.1Z"/>
<path class="e" d="M510.8,296L512.2,294M512.2,294L513.3,285.2M513.3,285.2L511.9,287.1"/>
<path fill="#00006e" stroke="#00006e" d="M872.2,390 871,388.3 866.1,399.9 867.3,401.7Z"/>
<path class="e" d="M872.2,390L871,388.3M866.1,399.9L867.3,401.7"/>
<path fill="#000056" d="M896.5,397.9 874.3,391.1 869.3,403 891,411Z"/>
<path fill="#0000bd" stroke="#0000bd" d="M846,297.4 838.2,305.8 838.4,315.8 846.2,307.7Z"/>
<path class="e" d="M846,297.4L838.2,305.8M838.4,315.8L846.2,307.7"/>
<path fill="#00005b" stroke="#00005b" d="M486.5,293.3 489.6,294.4 490.8,284.2 487.8,283Z"/>
<path class="e" d="M486.5,293.3L489.6,294.4M489.6,294.4L490.8,284.2M490.8,284.2L487.8,283"/>
<path fill="#00005e" stroke="#00005e" d="M874.3,391.1 872.2,390 867.3,401.7 869.3,403Z"/>
<path class="e" d="M874.3,391.1L872.2,390M867.3,401.7L869.3,403M869.3,403L874.3,391.1"/>
<path fill="#000097" stroke="#000097" d="M838.2,375.9 835.9,377.4 831.8,387.1 834.1,385.7Z"/>
<path class="e" d="M838.2,375.9L835.9,377.4M831.8,387.1L834.1,385.7"/>
<path fill="#00006c" stroke="#00006c" d="M898,303.8 890.3,296 890.5,308.8 898.2,317.3Z"/>
<path class="e" d="M898,303.8L890.3,296M890.3,296L890.5,308.8M890.5,308.8L898.2,317.3M898,303.8L890.5,308.8M890.3,296L898.2,317.3"/>
<path fill="#000096" stroke="#000096" d="M508.3,297.2 510.8,296 511.9,287.1 509.4,288.2Z"/>
<path class="e" d="M508.3,297.2L510.8,296M511.9,287.1L509.4,288.2"/>
<path fill="#000056" d="M489.6,294.4 505.3,297.2 506.4,288.1 490.8,284.2Z"/>
<path fill="#0000d8" stroke="#0000d8" d="M858,273.4 855.8,280.9 857.5,291.9 859.6,284.4Z"/>
<path class="e" d="M858,273.4L855.8,280.9M857.5,291.9L859.6,284.4M859.6,284.4L858,273.4"/>
<path fill="#00005d" stroke="#00005d" d="M505.3,297.2 508.3,297.2 509.4,288.2 506.4,288.1Z"/>
<path class="e" d="M505.3,297.2L508.3,297.2M509.4,288.2L506.4,288.1M506.4,288.1L505.3,297.2"/>
<path fill="#00007a" d="M432.7,215.3 429.5,226.6 435.1,213.3 438.3,202Z"/>
<path fill="#000078" stroke="#000078" d="M810.1,369.1 809.9,366.8 806.5,375 806.6,377.4Z"/>
<path class="e" d="M810.1,369.1L809.9,366.8M809.9,366.8L806.5,375M806.5,375L806.6,377.4"/>
<path fill="#000077" stroke="#000077" d="M835.9,377.4 832.9,377.9 828.9,387.5 831.8,387.1Z"/>
<path class="e" d="M835.9,377.4L832.9,377.9M828.9,387.5L831.8,387.1"/>
<path fill="#000056" stroke="#000056" d="M832.9,377.9 829.6,377.5 825.7,386.8 828.9,387.5Z"/>
<path class="e" d="M832.9,377.9L829.6,377.5M829.6,377.5L825.7,386.8M825.7,386.8L828.9,387.5"/>
<path fill="#00006d" stroke="#00006d" d="M510.8,196.5 517.8,207.1 524.3,198.9 517.7,187.8Z"/>
<path class="e" d="M510.8,196.5L517.8,207.1M524.3,198.9L517.7,187.8"/>
<path fill="#0000d1" d="M923,296.2 919.8,307.5 920,322.3 923.2,311Z"/>
<path fill="#00006e" stroke="#00006e" d="M811.6,371.3 810.1,369.1 806.6,377.4 808.1,379.7Z"/>
<path class="e" d="M811.6,371.3L810.1,369.1M806.6,377.4L808.1,379.7"/>
<path fill="#000079" d="M521.9,172.8 519.8,180.3 527.9,172.3 530,164.8Z"/>
<path fill="#000056" d="M829.6,377.5 814.3,372.7 810.7,381.2 825.7,386.8Z"/>
<path class="k" d="M899.7,332.9 896.5,346.8 894.3,345.8 897.2,332.9Z"/>
<path class="k" d="M896.5,346.8 887.6,358 886.1,356 894.3,345.8Z"/>
<path class="k" d="M887.6,358 874.8,364.1 874.2,361.8 886.1,356Z"/>
<path class="k" d="M874.8,364.1 860.5,364.1 861.1,361.8 874.2,361.8Z"/>
<path class="k" d="M860.5,364.1 847.7,358 849.2,356 861.1,361.8Z"/>
<path class="k" d="M847.7,358 838.8,346.8 841,345.8 849.2,356Z"/>
<path class="k" d="M838.8,346.8 835.7,332.9 838.1,332.9 841,345.8Z"/>
<path class="k" d="M835.7,332.9 838.8,319.1 841,320.1 838.1,332.9Z"/>
<path class="k" d="M838.8,319.1 847.7,307.9 849.2,309.8 841,320.1Z"/>
<path class="k" d="M847.7,307.9 860.5,301.7 861.1,304.1 849.2,309.8Z"/>
<path class="k" d="M860.5,301.7 874.8,301.7 874.2,304.1 861.1,304.1Z"/>
<path class="k" d="M874.8,301.7 887.6,307.9 886.1,309.8 874.2,304.1Z"/>
<path class="k" d="M887.6,307.9 896.5,319.1 894.3,320.1 886.1,309.8Z"/>
<path class="k" d="M896.5,319.1 899.7,332.9 897.2,332.9 894.3,320.1Z"/>
<path fill="#0000be" d="M513.3,285.2 516.4,274 518.7,265.4 515.5,276.6Z"/>
<path fill="#0000be" d="M450.9,270.9 454.2,259.3 457.4,247.2 454.1,258.8Z"/>
<path fill="#00005e" stroke="#00005e" d="M814.3,372.7 811.6,371.3 808.1,379.7 810.7,381.2Z"/>
<path class="e" d="M814.3,372.7L811.6,371.3M808.1,379.7L810.7,381.2M810.7,381.2L814.3,372.7"/>
<path fill="#000099" stroke="#000099" d="M455.4,204.7 462.9,197.5 469.7,186 462.3,193Z"/>
<path class="e" d="M455.4,204.7L462.9,197.5M469.7,186L462.3,193M462.3,193L455.4,204.7M455.4,204.7L469.7,186M462.9,197.5L462.3,193"/>
<path fill="#00007a" stroke="#00007a" d="M515,226.8 512.2,236.7 517.3,228.2 520.1,218.3Z"/>
<path class="e" d="M515,226.8L512.2,236.7M512.2,236.7L517.3,228.2M517.3,228.2L520.1,218.3"/>
<path fill="#0000c8" d="M916.8,333.6 913.6,344.9 911.9,359.3 915.1,348Z"/>
<path fill="#00007a" d="M455.4,155.4 452.2,166.7 461.5,154.9 464.7,143.6Z"/>
<path fill="#00009e" stroke="#00009e" d="M855.8,280.9 844.5,287 846,297.4 857.5,291.9Z"/>
<path class="e" d="M855.8,280.9L844.5,287M846,297.4L857.5,291.9"/>
<path fill="#0000be" d="M844.7,354.7 842.2,363.4 839.5,373.7 842,365Z"/>
<path fill="#0000df" d="M857,254.7 854.9,262.2 858,273.4 860.1,265.9Z"/>
<path fill="#0000d1" stroke="#0000d1" d="M838.2,305.8 835.4,315.7 835.6,325.7 838.4,315.8Z"/>
<path class="e" d="M838.2,305.8L835.4,315.7M835.4,315.7L835.6,325.7M835.6,325.7L838.4,315.8"/>
<path fill="#000078" stroke="#000078" d="M484.3,275.9 484.3,278.5 487,268.3 487,265.7Z"/>
<path class="e" d="M484.3,275.9L484.3,278.5M487,268.3L487,265.7M487,265.7L484.3,275.9"/>
<path fill="#0000be" d="M908.7,370.6 905.5,382 901.8,395.9 905,384.5Z"/>
<path fill="#000074" stroke="#000074" d="M900.6,313.5 898,303.8 898.2,317.3 900.9,327.3Z"/>
<path class="e" d="M900.6,313.5L898,303.8M898.2,317.3L900.9,327.3M900.9,327.3L900.6,313.5M900.6,313.5L898.2,317.3M898,303.8L900.9,327.3"/>
<path fill="#000076" stroke="#000076" d="M517.8,207.1 520.1,218.3 526.3,210.3 524.3,198.9Z"/>
<path class="e" d="M517.8,207.1L520.1,218.3M526.3,210.3L524.3,198.9"/>
<path fill="#00007a" d="M441.5,190.7 438.3,202 445.8,189.4 449,178Z"/>
<path fill="#000078" stroke="#000078" d="M419.5,263.2 419.6,265 423.2,251.1 423.1,249.3Z"/>
<path class="e" d="M419.5,263.2L419.6,265M423.2,251.1L423.1,249.3M423.1,249.3L419.5,263.2"/>
<path fill="#0000b5" stroke="#0000b5" d="M511.9,287.1 513.3,285.2 515.5,276.6 514.2,278.5Z"/>
<path class="e" d="M511.9,287.1L513.3,285.2M513.3,285.2L515.5,276.6M515.5,276.6L514.2,278.5"/>
<path fill="#0000b5" stroke="#0000b5" d="M449.8,272.4 450.9,270.9 454.1,258.8 453,260.3Z"/>
<path class="e" d="M449.8,272.4L450.9,270.9M450.9,270.9L454.1,258.8M454.1,258.8L453,260.3"/>
<path fill="#000073" stroke="#000073" d="M484.3,278.5 485.5,281 488.1,270.9 487,268.3Z"/>
<path class="e" d="M484.3,278.5L485.5,281M488.1,270.9L487,268.3"/>
<path fill="#000079" stroke="#000079" d="M519.8,180.3 517.7,187.8 525.8,179.8 527.9,172.3Z"/>
<path class="e" d="M519.8,180.3L517.7,187.8M525.8,179.8L527.9,172.3M527.9,172.3L519.8,180.3"/>
<path fill="#0000d8" d="M923.9,269.9 920.7,281.2 923,296.2 926.2,284.9Z"/>
<path fill="#00006e" stroke="#00006e" d="M419.6,265 420.9,266.7 424.5,252.9 423.2,251.1Z"/>
<path class="e" d="M419.6,265L420.9,266.7M424.5,252.9L423.2,251.1"/>
<path fill="#000090" stroke="#000090" d="M447.8,273.3 449.8,272.4 453,260.3 451.1,261Z"/>
<path class="e" d="M447.8,273.3L449.8,272.4M453,260.3L451.1,261"/>
<path fill="#0000b8" stroke="#0000b8" d="M842.2,363.4 840.9,365.7 838.2,375.9 839.5,373.7Z"/>
<path class="e" d="M842.2,363.4L840.9,365.7M838.2,375.9L839.5,373.7M839.5,373.7L842.2,363.4"/>
<path fill="#00007a" d="M429.5,226.6 426.3,237.9 431.9,224.6 435.1,213.3Z"/>
<path fill="#000068" stroke="#000068" d="M485.5,281 487.8,283 490.4,273 488.1,270.9Z"/>
<path class="e" d="M485.5,281L487.8,283M490.4,273L488.1,270.9"/>
<path fill="#000090" stroke="#000090" d="M509.4,288.2 511.9,287.1 514.2,278.5 511.7,279.5Z"/>
<path class="e" d="M509.4,288.2L511.9,287.1M514.2,278.5L511.7,279.5"/>
<path fill="#0000c4" stroke="#0000c4" d="M844.5,287 836.7,295.7 838.2,305.8 846,297.4Z"/>
<path class="e" d="M844.5,287L836.7,295.7M838.2,305.8L846,297.4"/>
<path fill="#00005e" stroke="#00005e" d="M420.9,266.7 423,267.7 426.6,254 424.5,252.9Z"/>
<path class="e" d="M420.9,266.7L423,267.7M423,267.7L426.6,254M426.6,254L424.5,252.9"/>
<path fill="#000075" stroke="#000075" d="M469.7,186 480.5,183.2 488.6,172.9 478.2,175.3Z"/>
<path class="e" d="M469.7,186L480.5,183.2M480.5,183.2L488.6,172.9M488.6,172.9L478.2,175.3M469.7,186L488.6,172.9M480.5,183.2L478.2,175.3"/>
<path fill="#00005b" stroke="#00005b" d="M445.5,273.2 447.8,273.3 451.1,261 448.7,260.8Z"/>
<path class="e" d="M445.5,273.2L447.8,273.3M451.1,261L448.7,260.8M448.7,260.8L445.5,273.2"/>
<path fill="#000056" d="M423,267.7 445.5,273.2 448.7,260.8 426.6,254Z"/>
<path fill="#00005b" stroke="#00005b" d="M487.8,283 490.8,284.2 493.4,274.5 490.4,273Z"/>
<path class="e" d="M487.8,283L490.8,284.2M490.8,284.2L493.4,274.5M493.4,274.5L490.4,273"/>
<path fill="#00005b" stroke="#00005b" d="M506.4,288.1 509.4,288.2 511.7,279.5 508.8,279.2Z"/>
<path class="e" d="M506.4,288.1L509.4,288.2M511.7,279.5L508.8,279.2M508.8,279.2L506.4,288.1"/>
<path fill="#000056" d="M490.8,284.2 506.4,288.1 508.8,279.2 493.4,274.5Z"/>
<path fill="#000078" stroke="#000078" d="M812.3,360.5 812.2,358.2 809.9,366.8 810.1,369.1Z"/>
<path class="e" d="M812.3,360.5L812.2,358.2M812.2,358.2L809.9,366.8M809.9,366.8L810.1,369.1"/>
<path fill="#0000a0" stroke="#0000a0" d="M840.9,365.7 838.6,367.3 835.9,377.4 838.2,375.9Z"/>
<path class="e" d="M840.9,365.7L838.6,367.3M835.9,377.4L838.2,375.9"/>
<path fill="#0000df" stroke="#0000df" d="M854.9,262.2 852.8,269.7 855.8,280.9 858,273.4Z"/>
<path class="e" d="M854.9,262.2L852.8,269.7M855.8,280.9L858,273.4M858,273.4L854.9,262.2"/>
<path fill="#0000d1" d="M919.8,307.5 916.5,318.9 916.8,333.6 920,322.3Z"/>
<path fill="#000078" stroke="#000078" d="M874.2,376.1 874,374.3 870.8,386.4 871,388.3Z"/>
<path class="e" d="M874.2,376.1L874,374.3M874,374.3L870.8,386.4M870.8,386.4L871,388.3"/>
<path fill="#0000b5" stroke="#0000b5" d="M905.5,382 904.4,383.5 900.7,397.4 901.8,395.9Z"/>
<path class="e" d="M905.5,382L904.4,383.5M900.7,397.4L901.8,395.9M901.8,395.9L905.5,382"/>
<path fill="#00006e" stroke="#00006e" d="M813.9,362.6 812.3,360.5 810.1,369.1 811.6,371.3Z"/>
<path class="e" d="M813.9,362.6L812.3,360.5M810.1,369.1L811.6,371.3"/>
<path fill="#00007d" stroke="#00007d" d="M838.6,367.3 835.5,368 832.9,377.9 835.9,377.4Z"/>
<path class="e" d="M838.6,367.3L835.5,368M832.9,377.9L835.9,377.4"/>
<path fill="#00006e" stroke="#00006e" d="M875.4,377.8 874.2,376.1 871,388.3 872.2,390Z"/>
<path class="e" d="M875.4,377.8L874.2,376.1M871,388.3L872.2,390"/>
<path fill="#00006d" stroke="#00006d" d="M517.7,187.8 524.3,198.9 532,191.3 525.8,179.8Z"/>
<path class="e" d="M517.7,187.8L524.3,198.9M532,191.3L525.8,179.8"/>
<path fill="#00005e" stroke="#00005e" d="M816.6,363.9 813.9,362.6 811.6,371.3 814.3,372.7Z"/>
<path class="e" d="M816.6,363.9L813.9,362.6M811.6,371.3L814.3,372.7M814.3,372.7L816.6,363.9"/>
<path fill="#000090" stroke="#000090" d="M904.4,383.5 902.4,384.4 898.8,398.1 900.7,397.4Z"/>
<path class="e" d="M904.4,383.5L902.4,384.4M898.8,398.1L900.7,397.4"/>
<path fill="#000056" stroke="#000056" d="M835.5,368 832.2,367.7 829.6,377.5 832.9,377.9Z"/>
<path class="e" d="M835.5,368L832.2,367.7M832.2,367.7L829.6,377.5M829.6,377.5L832.9,377.9"/>
<path class="k" d="M897.2,332.9 894.3,345.8 888.1,342.8 890.3,332.9Z"/>
<path class="k" d="M894.3,345.8 886.1,356 881.8,350.6 888.1,342.8Z"/>
<path class="k" d="M886.1,356 874.2,361.8 872.7,355 881.8,350.6Z"/>
<path class="k" d="M874.2,361.8 861.1,361.8 862.6,355 872.7,355Z"/>
<path class="k" d="M861.1,361.8 849.2,356 853.6,350.6 862.6,355Z"/>
<path class="k" d="M849.2,356 841,345.8 847.3,342.8 853.6,350.6Z"/>
<path class="k" d="M841,345.8 838.1,332.9 845,332.9 847.3,342.8Z"/>
<path class="k" d="M838.1,332.9 841,320.1 847.3,323.1 845,332.9Z"/>
<path class="k" d="M841,320.1 849.2,309.8 853.6,315.2 847.3,323.1Z"/>
<path class="k" d="M849.2,309.8 861.1,304.1 862.6,310.9 853.6,315.2Z"/>
<path class="k" d="M861.1,304.1 874.2,304.1 872.7,310.9 862.6,310.9Z"/>
<path class="k" d="M874.2,304.1 886.1,309.8 881.8,315.2 872.7,310.9Z"/>
<path class="k" d="M886.1,309.8 894.3,320.1 888.1,323.1 881.8,315.2Z"/>
<path class="k" d="M894.3,320.1 897.2,332.9 890.3,332.9 888.1,323.1Z"/>
<path fill="#000079" d="M530,164.8 527.9,172.3 537.3,165 539.4,157.5Z"/>
<path fill="#000056" d="M832.2,367.7 816.6,363.9 814.3,372.7 829.6,377.5Z"/>
<path fill="#00006b" stroke="#00006b" d="M895.9,290.2 888.4,282.9 890.3,296 898,303.8Z"/>
<path class="e" d="M895.9,290.2L888.4,282.9M888.4,282.9L890.3,296M890.3,296L898,303.8M895.9,290.2L890.3,296M888.4,282.9L898,303.8"/>
<path fill="#00005e" stroke="#00005e" d="M877.5,378.8 875.4,377.8 872.2,390 874.3,391.1Z"/>
<path class="e" d="M877.5,378.8L875.4,377.8M872.2,390L874.3,391.1M874.3,391.1L877.5,378.8"/>
<path fill="#0000c8" d="M913.6,344.9 910.4,356.3 908.7,370.6 911.9,359.3Z"/>
<path fill="#00007a" d="M489.5,257 487,265.7 491.1,255.9 493.6,247.2Z"/>
<path fill="#00007a" d="M452.2,166.7 449,178 458.3,166.2 461.5,154.9Z"/>
<path fill="#00005b" stroke="#00005b" d="M902.4,384.4 900.1,384.3 896.5,397.9 898.8,398.1Z"/>
<path class="e" d="M902.4,384.4L900.1,384.3M900.1,384.3L896.5,397.9M896.5,397.9L898.8,398.1"/>
<path fill="#000056" d="M900.1,384.3 877.5,378.8 874.3,391.1 896.5,397.9Z"/>
<path fill="#00007a" stroke="#00007a" d="M520.1,218.3 517.3,228.2 523.5,220.2 526.3,210.3Z"/>
<path class="e" d="M520.1,218.3L517.3,228.2M517.3,228.2L523.5,220.2M523.5,220.2L526.3,210.3"/>
<path fill="#0000a2" stroke="#0000a2" d="M852.8,269.7 841.6,276.4 844.5,287 855.8,280.9Z"/>
<path class="e" d="M852.8,269.7L841.6,276.4M844.5,287L855.8,280.9"/>
<path fill="#0000e5" d="M852.5,243.6 850.4,251.1 854.9,262.2 857,254.7Z"/>
<path fill="#00007a" d="M438.3,202 435.1,213.3 442.6,200.7 445.8,189.4Z"/>
<path fill="#0000c8" d="M846,344.1 843.5,352.8 842.2,363.4 844.7,354.7Z"/>
<path fill="#0000d8" stroke="#0000d8" d="M836.7,295.7 833.9,305.6 835.4,315.7 838.2,305.8Z"/>
<path class="e" d="M836.7,295.7L833.9,305.6M833.9,305.6L835.4,315.7M835.4,315.7L838.2,305.8"/>
<path fill="#000076" stroke="#000076" d="M524.3,198.9 526.3,210.3 533.8,202.9 532,191.3Z"/>
<path class="e" d="M524.3,198.9L526.3,210.3M533.8,202.9L532,191.3"/>
<path fill="#00008e" stroke="#00008e" d="M462.3,193 469.7,186 478.2,175.3 471,182Z"/>
<path class="e" d="M462.3,193L469.7,186M478.2,175.3L471,182M471,182L462.3,193M462.3,193L478.2,175.3M469.7,186L471,182"/>
<path fill="#0000d8" d="M920.7,281.2 917.5,292.5 919.8,307.5 923,296.2Z"/>
<path fill="#0000ab" stroke="#0000ab" d="M514.2,278.5 515.5,276.6 519,268.4 517.6,270.3Z"/>
<path class="e" d="M514.2,278.5L515.5,276.6M515.5,276.6L519,268.4M519,268.4L517.6,270.3"/>
<path fill="#000079" stroke="#000079" d="M487,265.7 487,268.3 491.1,258.5 491.1,255.9Z"/>
<path class="e" d="M487,265.7L487,268.3M491.1,258.5L491.1,255.9M491.1,255.9L487,265.7"/>
<path fill="#00007a" d="M426.3,237.9 423.1,249.3 428.7,235.9 431.9,224.6Z"/>
<path fill="#000079" stroke="#000079" d="M527.9,172.3 525.8,179.8 535.2,172.5 537.3,165Z"/>
<path class="e" d="M527.9,172.3L525.8,179.8M535.2,172.5L537.3,165M537.3,165L527.9,172.3"/>
<path fill="#000088" stroke="#000088" d="M511.7,279.5 514.2,278.5 517.6,270.3 515.2,271.1Z"/>
<path class="e" d="M511.7,279.5L514.2,278.5M517.6,270.3L515.2,271.1"/>
<path fill="#000073" stroke="#000073" d="M487,268.3 488.1,270.9 492.2,261.2 491.1,258.5Z"/>
<path class="e" d="M487,268.3L488.1,270.9M492.2,261.2L491.1,258.5"/>
<path fill="#000079" d="M464.7,143.6 461.5,154.9 472.6,144 475.8,132.6Z"/>
<path fill="#0000cb" stroke="#0000cb" d="M841.6,276.4 833.9,285.5 836.7,295.7 844.5,287Z"/>
<path class="e" d="M841.6,276.4L833.9,285.5M836.7,295.7L844.5,287"/>
<path fill="#0000d1" d="M916.5,318.9 913.3,330.2 913.6,344.9 916.8,333.6Z"/>
<path fill="#000077" stroke="#000077" d="M813.4,351.6 813.2,349.4 812.2,358.2 812.3,360.5Z"/>
<path class="e" d="M813.4,351.6L813.2,349.4M813.2,349.4L812.2,358.2M812.2,358.2L812.3,360.5"/>
<path fill="#000058" stroke="#000058" d="M508.8,279.2 511.7,279.5 515.2,271.1 512.3,270.7Z"/>
<path class="e" d="M508.8,279.2L511.7,279.5M515.2,271.1L512.3,270.7M512.3,270.7L508.8,279.2"/>
<path fill="#000069" stroke="#000069" d="M488.1,270.9 490.4,273 494.4,263.5 492.2,261.2Z"/>
<path class="e" d="M488.1,270.9L490.4,273M494.4,263.5L492.2,261.2"/>
<path fill="#0000c1" stroke="#0000c1" d="M843.5,352.8 842.2,355.1 840.9,365.7 842.2,363.4Z"/>
<path class="e" d="M843.5,352.8L842.2,355.1M840.9,365.7L842.2,363.4M842.2,363.4L843.5,352.8"/>
<path fill="#000073" stroke="#000073" d="M898.6,299.6 895.9,290.2 898,303.8 900.6,313.5Z"/>
<path class="e" d="M898.6,299.6L895.9,290.2M898,303.8L900.6,313.5M900.6,313.5L898.6,299.6M898.6,299.6L898,303.8M895.9,290.2L900.6,313.5"/>
<path class="kp" d="M890.3,332.9 888.1,342.8 878.7,338.2 879.9,332.9Z"/>
<path class="kp" d="M888.1,342.8 881.8,350.6 875.3,342.5 878.7,338.2Z"/>
<path class="kp" d="M881.8,350.6 872.7,355 870.4,344.9 875.3,342.5Z"/>
<path class="kp" d="M872.7,355 862.6,355 864.9,344.9 870.4,344.9Z"/>
<path class="kp" d="M862.6,355 853.6,350.6 860,342.5 864.9,344.9Z"/>
<path class="kp" d="M853.6,350.6 847.3,342.8 856.6,338.2 860,342.5Z"/>
<path class="kp" d="M847.3,342.8 845,332.9 855.4,332.9 856.6,338.2Z"/>
<path class="kp" d="M845,332.9 847.3,323.1 856.6,327.6 855.4,332.9Z"/>
<path class="kp" d="M847.3,323.1 853.6,315.2 860,323.4 856.6,327.6Z"/>
<path class="kp" d="M853.6,315.2 862.6,310.9 864.9,321 860,323.4Z"/>
<path class="kp" d="M862.6,310.9 872.7,310.9 870.4,321 864.9,321Z"/>
<path class="kp" d="M872.7,310.9 881.8,315.2 875.3,323.4 870.4,321Z"/>
<path class="kp" d="M881.8,315.2 888.1,323.1 878.7,327.6 875.3,323.4Z"/>
<path class="kp" d="M888.1,323.1 890.3,332.9 879.9,332.9 878.7,327.6Z"/>
<path fill="#000056" d="M493.4,274.5 508.8,279.2 512.3,270.7 497.3,265.1Z"/>
<path fill="#00005b" stroke="#00005b" d="M490.4,273 493.4,274.5 497.3,265.1 494.4,263.5Z"/>
<path class="e" d="M490.4,273L493.4,274.5M493.4,274.5L497.3,265.1M497.3,265.1L494.4,263.5"/>
<path fill="#0000e5" stroke="#0000e5" d="M850.4,251.1 848.3,258.6 852.8,269.7 854.9,262.2Z"/>
<path class="e" d="M850.4,251.1L848.3,258.6M852.8,269.7L854.9,262.2M854.9,262.2L850.4,251.1"/>
<path fill="#00006d" stroke="#00006d" d="M815,353.6 813.4,351.6 812.3,360.5 813.9,362.6Z"/>
<path class="e" d="M815,353.6L813.4,351.6M812.3,360.5L813.9,362.6"/>
<path fill="#0000ab" stroke="#0000ab" d="M453,260.3 454.1,258.8 459,247.2 457.9,248.6Z"/>
<path class="e" d="M453,260.3L454.1,258.8M454.1,258.8L459,247.2M459,247.2L457.9,248.6"/>
<path fill="#0000c8" d="M910.4,356.3 907.2,367.6 905.5,382 908.7,370.6Z"/>
<path fill="#0000a8" stroke="#0000a8" d="M842.2,355.1 839.8,356.8 838.6,367.3 840.9,365.7Z"/>
<path class="e" d="M842.2,355.1L839.8,356.8M838.6,367.3L840.9,365.7"/>
<path fill="#00007a" d="M449,178 445.8,189.4 455.1,177.5 458.3,166.2Z"/>
<path fill="#00005d" stroke="#00005d" d="M817.7,354.7 815,353.6 813.9,362.6 816.6,363.9Z"/>
<path class="e" d="M817.7,354.7L815,353.6M813.9,362.6L816.6,363.9M816.6,363.9L817.7,354.7"/>
<path fill="#000088" stroke="#000088" d="M451.1,261 453,260.3 457.9,248.6 456,249.3Z"/>
<path class="e" d="M451.1,261L453,260.3M457.9,248.6L456,249.3"/>
<path fill="#00006d" stroke="#00006d" d="M478.2,175.3 488.6,172.9 498.2,163.4 488.2,165.3Z"/>
<path class="e" d="M478.2,175.3L488.6,172.9M488.6,172.9L498.2,163.4M498.2,163.4L488.2,165.3M478.2,175.3L498.2,163.4M488.6,172.9L488.2,165.3"/>
<path fill="#00006c" stroke="#00006c" d="M525.8,179.8 532,191.3 540.8,184.3 535.2,172.5Z"/>
<path class="e" d="M525.8,179.8L532,191.3M540.8,184.3L535.2,172.5"/>
<path fill="#000078" d="M539.4,157.5 537.3,165 547.8,158.4 549.9,150.9Z"/>
<path fill="#0000df" d="M919.8,254.8 916.6,266.1 920.7,281.2 923.9,269.9Z"/>
<path fill="#000078" stroke="#000078" d="M423.1,249.3 423.2,251.1 428.8,237.9 428.7,235.9Z"/>
<path class="e" d="M423.1,249.3L423.2,251.1M428.8,237.9L428.7,235.9M428.7,235.9L423.1,249.3"/>
<path fill="#000082" stroke="#000082" d="M839.8,356.8 836.7,357.7 835.5,368 838.6,367.3Z"/>
<path class="e" d="M839.8,356.8L836.7,357.7M835.5,368L838.6,367.3"/>
<path fill="#000056" d="M833.4,357.6 817.7,354.7 816.6,363.9 832.2,367.7Z"/>
<path fill="#000058" stroke="#000058" d="M448.7,260.8 451.1,261 456,249.3 453.7,249Z"/>
<path class="e" d="M448.7,260.8L451.1,261M456,249.3L453.7,249M453.7,249L448.7,260.8"/>
<path fill="#000079" stroke="#000079" d="M526.3,210.3 523.5,220.2 531,212.8 533.8,202.9Z"/>
<path class="e" d="M526.3,210.3L523.5,220.2M523.5,220.2L531,212.8M531,212.8L533.8,202.9"/>
<path fill="#000056" stroke="#000056" d="M836.7,357.7 833.4,357.6 832.2,367.7 835.5,368Z"/>
<path class="e" d="M836.7,357.7L833.4,357.6M833.4,357.6L832.2,367.7M832.2,367.7L835.5,368"/>
<path fill="#00006e" stroke="#00006e" d="M423.2,251.1 424.5,252.9 430,239.7 428.8,237.9Z"/>
<path class="e" d="M423.2,251.1L424.5,252.9M430,239.7L428.8,237.9"/>
<path fill="#000056" d="M426.6,254 448.7,260.8 453.7,249 432.1,240.9Z"/>
<path fill="#00007a" d="M493.6,247.2 491.1,255.9 496.7,246.6 499.1,237.9Z"/>
<path fill="#00007a" d="M435.1,213.3 431.9,224.6 439.4,212 442.6,200.7Z"/>
<path fill="#00005e" stroke="#00005e" d="M424.5,252.9 426.6,254 432.1,240.9 430,239.7Z"/>
<path class="e" d="M424.5,252.9L426.6,254M426.6,254L432.1,240.9M432.1,240.9L430,239.7"/>
<path fill="#000077" stroke="#000077" d="M875.6,363.6 875.5,361.8 874,374.3 874.2,376.1Z"/>
<path class="e" d="M875.6,363.6L875.5,361.8M875.5,361.8L874,374.3M874,374.3L874.2,376.1"/>
<path class="kp" d="M879.9,332.9 878.7,338.2 867.7,332.9 867.7,332.9Z"/>
<path class="kp" d="M878.7,338.2 875.3,342.5 867.7,332.9 867.7,332.9Z"/>
<path class="kp" d="M875.3,342.5 870.4,344.9 867.7,332.9 867.7,332.9Z"/>
<path class="kp" d="M870.4,344.9 864.9,344.9 867.7,332.9 867.7,332.9Z"/>
<path class="kp" d="M864.9,344.9 860,342.5 867.7,332.9 867.7,332.9Z"/>
<path class="kp" d="M860,342.5 856.6,338.2 867.7,332.9 867.7,332.9Z"/>
<path class="kp" d="M856.6,338.2 855.4,332.9 867.7,332.9 867.7,332.9Z"/>
<path class="kp" d="M855.4,332.9 856.6,327.6 867.7,332.9 867.7,332.9Z"/>
<path class="kp" d="M856.6,327.6 860,323.4 867.7,332.9 867.7,332.9Z"/>
<path class="kp" d="M860,323.4 864.9,321 867.7,332.9 867.7,332.9Z"/>
<path class="kp" d="M864.9,321 870.4,321 867.7,332.9 867.7,332.9Z"/>
<path class="kp" d="M870.4,321 875.3,323.4 867.7,332.9 867.7,332.9Z"/>
<path class="kp" d="M875.3,323.4 878.7,327.6 867.7,332.9 867.7,332.9Z"/>
<path class="kp" d="M878.7,327.6 879.9,332.9 867.7,332.9 867.7,332.9Z"/>
<path fill="#0000a6" stroke="#0000a6" d="M848.3,258.6 837.3,265.9 841.6,276.4 852.8,269.7Z"/>
<path class="e" d="M848.3,258.6L837.3,265.9M841.6,276.4L852.8,269.7"/>
<path fill="#0000e9" d="M846.7,232.6 844.5,240.1 850.4,251.1 852.5,243.6Z"/>
<path fill="#0000d8" d="M917.5,292.5 914.3,303.9 916.5,318.9 919.8,307.5Z"/>
<path fill="#00006a" stroke="#00006a" d="M892.1,276.5 884.7,269.7 888.4,282.9 895.9,290.2Z"/>
<path class="e" d="M892.1,276.5L884.7,269.7M884.7,269.7L888.4,282.9M888.4,282.9L895.9,290.2M892.1,276.5L888.4,282.9M884.7,269.7L895.9,290.2"/>
<path fill="#00006d" stroke="#00006d" d="M876.9,365.1 875.6,363.6 874.2,376.1 875.4,377.8Z"/>
<path class="e" d="M876.9,365.1L875.6,363.6M874.2,376.1L875.4,377.8"/>
<path fill="#0000df" stroke="#0000df" d="M833.9,285.5 831.1,295.3 833.9,305.6 836.7,295.7Z"/>
<path class="e" d="M833.9,285.5L831.1,295.3M831.1,295.3L833.9,305.6M833.9,305.6L836.7,295.7"/>
<path fill="#000075" stroke="#000075" d="M532,191.3 533.8,202.9 542.4,196.2 540.8,184.3Z"/>
<path class="e" d="M532,191.3L533.8,202.9M542.4,196.2L540.8,184.3"/>
<path fill="#00005d" stroke="#00005d" d="M879.1,366 876.9,365.1 875.4,377.8 877.5,378.8Z"/>
<path class="e" d="M879.1,366L876.9,365.1M875.4,377.8L877.5,378.8M877.5,378.8L879.1,366"/>
<path fill="#0000a0" stroke="#0000a0" d="M517.6,270.3 519,268.4 523.6,260.6 522.3,262.5Z"/>
<path class="e" d="M517.6,270.3L519,268.4M519,268.4L523.6,260.6M523.6,260.6L522.3,262.5"/>
<path fill="#0000be" stroke="#0000be" d="M907.2,367.6 906.1,369.2 904.4,383.5 905.5,382Z"/>
<path class="e" d="M907.2,367.6L906.1,369.2M904.4,383.5L905.5,382M905.5,382L907.2,367.6"/>
<path fill="#0000d1" d="M845.8,333.3 843.3,342 843.5,352.8 846,344.1Z"/>
<path fill="#000056" d="M901.7,370.2 879.1,366 877.5,378.8 900.1,384.3Z"/>
<path fill="#000096" stroke="#000096" d="M906.1,369.2 904.1,370.1 902.4,384.4 904.4,383.5Z"/>
<path class="e" d="M906.1,369.2L904.1,370.1M902.4,384.4L904.4,383.5"/>
<path fill="#000079" d="M461.5,154.9 458.3,166.2 469.4,155.3 472.6,144Z"/>
<path fill="#0000d1" d="M913.3,330.2 910.1,341.5 910.4,356.3 913.6,344.9Z"/>
<path fill="#000080" stroke="#000080" d="M515.2,271.1 517.6,270.3 522.3,262.5 519.9,263.2Z"/>
<path class="e" d="M515.2,271.1L517.6,270.3M522.3,262.5L519.9,263.2"/>
<path fill="#00005d" stroke="#00005d" d="M904.1,370.1 901.7,370.2 900.1,384.3 902.4,384.4Z"/>
<path class="e" d="M904.1,370.1L901.7,370.2M901.7,370.2L900.1,384.3M900.1,384.3L902.4,384.4"/>
<path fill="#000078" stroke="#000078" d="M537.3,165 535.2,172.5 545.7,165.9 547.8,158.4Z"/>
<path class="e" d="M537.3,165L535.2,172.5M545.7,165.9L547.8,158.4M547.8,158.4L537.3,165"/>
<path fill="#000079" stroke="#000079" d="M491.1,255.9 491.1,258.5 496.6,249.3 496.7,246.6Z"/>
<path class="e" d="M491.1,255.9L491.1,258.5M496.6,249.3L496.7,246.6M496.7,246.6L491.1,255.9"/>
<path fill="#0000d0" stroke="#0000d0" d="M837.3,265.9 829.8,275.3 833.9,285.5 841.6,276.4Z"/>
<path class="e" d="M837.3,265.9L829.8,275.3M833.9,285.5L841.6,276.4"/>
<path fill="#000076" stroke="#000076" d="M813.2,342.5 813.1,340.3 813.2,349.4 813.4,351.6Z"/>
<path class="e" d="M813.2,342.5L813.1,340.3M813.1,340.3L813.2,349.4M813.2,349.4L813.4,351.6"/>
<path fill="#000056" stroke="#000056" d="M512.3,270.7 515.2,271.1 519.9,263.2 517.1,262.6Z"/>
<path class="e" d="M512.3,270.7L515.2,271.1M519.9,263.2L517.1,262.6M517.1,262.6L512.3,270.7"/>
<path fill="#000073" stroke="#000073" d="M491.1,258.5 492.2,261.2 497.6,252 496.6,249.3Z"/>
<path class="e" d="M491.1,258.5L492.2,261.2M497.6,252L496.6,249.3"/>
<path fill="#000082" stroke="#000082" d="M471,182 478.2,175.3 488.2,165.3 481.3,171.8Z"/>
<path class="e" d="M471,182L478.2,175.3M488.2,165.3L481.3,171.8M481.3,171.8L471,182M471,182L488.2,165.3M478.2,175.3L481.3,171.8"/>
<path fill="#00006d" stroke="#00006d" d="M814.9,344.4 813.2,342.5 813.4,351.6 815,353.6Z"/>
<path class="e" d="M814.9,344.4L813.2,342.5M813.4,351.6L815,353.6"/>
<path fill="#000056" d="M497.3,265.1 512.3,270.7 517.1,262.6 502.6,256.3Z"/>
<path fill="#00007a" d="M445.8,189.4 442.6,200.7 451.9,188.9 455.1,177.5Z"/>
<path fill="#0000e9" stroke="#0000e9" d="M844.5,240.1 842.4,247.6 848.3,258.6 850.4,251.1Z"/>
<path class="e" d="M844.5,240.1L842.4,247.6M848.3,258.6L850.4,251.1M850.4,251.1L844.5,240.1"/>
<path fill="#000069" stroke="#000069" d="M492.2,261.2 494.4,263.5 499.8,254.5 497.6,252Z"/>
<path class="e" d="M492.2,261.2L494.4,263.5M499.8,254.5L497.6,252"/>
<path fill="#0000ca" stroke="#0000ca" d="M843.3,342 842,344.3 842.2,355.1 843.5,352.8Z"/>
<path class="e" d="M843.3,342L842,344.3M842.2,355.1L843.5,352.8M843.5,352.8L843.3,342"/>
<path fill="#0000df" d="M916.6,266.1 913.4,277.4 917.5,292.5 920.7,281.2Z"/>
<path fill="#00005b" stroke="#00005b" d="M494.4,263.5 497.3,265.1 502.6,256.3 499.8,254.5Z"/>
<path class="e" d="M494.4,263.5L497.3,265.1M497.3,265.1L502.6,256.3M502.6,256.3L499.8,254.5"/>
<path fill="#00005d" stroke="#00005d" d="M817.5,345.3 814.9,344.4 815,353.6 817.7,354.7Z"/>
<path class="e" d="M817.5,345.3L814.9,344.4M815,353.6L817.7,354.7M817.7,354.7L817.5,345.3"/>
<path fill="#000076" d="M549.9,150.9 547.8,158.4 559.3,152.7 561.5,145.2Z"/>
<path fill="#00006c" stroke="#00006c" d="M535.2,172.5 540.8,184.3 550.8,178.1 545.7,165.9Z"/>
<path class="e" d="M535.2,172.5L540.8,184.3M550.8,178.1L545.7,165.9"/>
<path fill="#000079" stroke="#000079" d="M533.8,202.9 531,212.8 539.6,206.1 542.4,196.2Z"/>
<path class="e" d="M533.8,202.9L531,212.8M539.6,206.1L542.4,196.2"/>
<path fill="#0000af" stroke="#0000af" d="M842,344.3 839.6,346.1 839.8,356.8 842.2,355.1Z"/>
<path class="e" d="M842,344.3L839.6,346.1M839.8,356.8L842.2,355.1"/>
<path fill="#00007a" d="M431.9,224.6 428.7,235.9 436.2,223.3 439.4,212Z"/>
<path fill="#000056" d="M833.2,347.2 817.5,345.3 817.7,354.7 833.4,357.6Z"/>
<path fill="#000079" d="M475.8,132.6 472.6,144 485.3,134 488.5,122.7Z"/>
<path fill="#000072" stroke="#000072" d="M894.7,285.5 892.1,276.5 895.9,290.2 898.6,299.6Z"/>
<path class="e" d="M894.7,285.5L892.1,276.5M895.9,290.2L898.6,299.6M898.6,299.6L894.7,285.5M894.7,285.5L895.9,290.2M892.1,276.5L898.6,299.6"/>
<path fill="#000087" stroke="#000087" d="M839.6,346.1 836.6,347.1 836.7,357.7 839.8,356.8Z"/>
<path class="e" d="M839.6,346.1L836.6,347.1M836.7,357.7L839.8,356.8"/>
<path fill="#000058" stroke="#000058" d="M836.6,347.1 833.2,347.2 833.4,357.6 836.7,357.7Z"/>
<path class="e" d="M836.6,347.1L833.2,347.2M833.2,347.2L833.4,357.6M833.4,357.6L836.7,357.7"/>
<path fill="#0000d8" d="M914.3,303.9 911.1,315.2 913.3,330.2 916.5,318.9Z"/>
<path fill="#0000a0" stroke="#0000a0" d="M457.9,248.6 459,247.2 465.5,236.2 464.4,237.6Z"/>
<path class="e" d="M457.9,248.6L459,247.2M459,247.2L465.5,236.2M465.5,236.2L464.4,237.6"/>
<path fill="#0000ec" d="M839.5,221.7 837.3,229.2 844.5,240.1 846.7,232.6Z"/>
<path fill="#0000a9" stroke="#0000a9" d="M842.4,247.6 831.8,255.4 837.3,265.9 848.3,258.6Z"/>
<path class="e" d="M842.4,247.6L831.8,255.4M837.3,265.9L848.3,258.6"/>
<path fill="#000064" stroke="#000064" d="M488.2,165.3 498.2,163.4 509.2,154.8 499.8,156.3Z"/>
<path class="e" d="M488.2,165.3L498.2,163.4M498.2,163.4L509.2,154.8M509.2,154.8L499.8,156.3M499.8,156.3L488.2,165.3M488.2,165.3L509.2,154.8M498.2,163.4L499.8,156.3"/>
<path fill="#0000e5" stroke="#0000e5" d="M829.8,275.3 827,285.1 831.1,295.3 833.9,285.5Z"/>
<path class="e" d="M829.8,275.3L827,285.1M831.1,295.3L833.9,285.5"/>
<path fill="#00007a" d="M499.1,237.9 496.7,246.6 503.5,237.9 506,229.2Z"/>
<path fill="#000080" stroke="#000080" d="M456,249.3 457.9,248.6 464.4,237.6 462.6,238.2Z"/>
<path class="e" d="M456,249.3L457.9,248.6M464.4,237.6L462.6,238.2"/>
<path fill="#000074" stroke="#000074" d="M540.8,184.3 542.4,196.2 552,190.2 550.8,178.1Z"/>
<path class="e" d="M540.8,184.3L542.4,196.2M552,190.2L550.8,178.1"/>
<path fill="#000079" d="M458.3,166.2 455.1,177.5 466.2,166.6 469.4,155.3Z"/>
<path fill="#000056" stroke="#000056" d="M453.7,249 456,249.3 462.6,238.2 460.4,237.7Z"/>
<path class="e" d="M453.7,249L456,249.3M462.6,238.2L460.4,237.7M460.4,237.7L453.7,249"/>
<path fill="#0000e5" d="M913.7,239.7 910.5,251 916.6,266.1 919.8,254.8Z"/>
<path fill="#0000d1" d="M910.1,341.5 906.9,352.8 907.2,367.6 910.4,356.3Z"/>
<path fill="#000078" stroke="#000078" d="M519.9,263.2 522.3,262.5 528,255.2 525.7,255.8Z"/>
<path class="e" d="M519.9,263.2L522.3,262.5M522.3,262.5L528,255.2M528,255.2L525.7,255.8"/>
<path fill="#000076" stroke="#000076" d="M875.4,350.7 875.3,348.9 875.5,361.8 875.6,363.6Z"/>
<path class="e" d="M875.4,350.7L875.3,348.9M875.3,348.9L875.5,361.8M875.5,361.8L875.6,363.6"/>
<path fill="#000076" stroke="#000076" d="M547.8,158.4 545.7,165.9 557.2,160.2 559.3,152.7Z"/>
<path class="e" d="M547.8,158.4L545.7,165.9M557.2,160.2L559.3,152.7M559.3,152.7L547.8,158.4"/>
<path fill="#0000d4" stroke="#0000d4" d="M831.8,255.4 824.4,265.1 829.8,275.3 837.3,265.9Z"/>
<path class="e" d="M831.8,255.4L824.4,265.1M829.8,275.3L837.3,265.9"/>
<path fill="#000078" stroke="#000078" d="M428.7,235.9 428.8,237.9 436.3,225.3 436.2,223.3Z"/>
<path class="e" d="M428.7,235.9L428.8,237.9M436.3,225.3L436.2,223.3M436.2,223.3L428.7,235.9"/>
<path fill="#0000d8" d="M844.1,322.2 841.7,330.9 843.3,342 845.8,333.3Z"/>
<path fill="#000056" d="M432.1,240.9 453.7,249 460.4,237.7 439.4,228.6Z"/>
<path fill="#000069" stroke="#000069" d="M886.6,262.7 879.4,256.6 884.7,269.7 892.1,276.5Z"/>
<path class="e" d="M886.6,262.7L879.4,256.6M879.4,256.6L884.7,269.7M884.7,269.7L892.1,276.5M892.1,276.5L886.6,262.7M886.6,262.7L884.7,269.7M879.4,256.6L892.1,276.5"/>
<path fill="#000056" stroke="#000056" d="M517.1,262.6 519.9,263.2 525.7,255.8 523,255.1Z"/>
<path class="e" d="M517.1,262.6L519.9,263.2M525.7,255.8L523,255.1M523,255.1L517.1,262.6"/>
<path fill="#00006d" stroke="#00006d" d="M876.7,352.1 875.4,350.7 875.6,363.6 876.9,365.1Z"/>
<path class="e" d="M876.7,352.1L875.4,350.7M875.6,363.6L876.9,365.1"/>
<path fill="#00006e" stroke="#00006e" d="M428.8,237.9 430,239.7 437.4,227.2 436.3,225.3Z"/>
<path class="e" d="M428.8,237.9L430,239.7M437.4,227.2L436.3,225.3"/>
<path fill="#00007a" d="M442.6,200.7 439.4,212 448.7,200.2 451.9,188.9Z"/>
<path fill="#00005e" stroke="#00005e" d="M430,239.7 432.1,240.9 439.4,228.6 437.4,227.2Z"/>
<path class="e" d="M430,239.7L432.1,240.9M432.1,240.9L439.4,228.6M439.4,228.6L437.4,227.2"/>
<path fill="#000079" stroke="#000079" d="M496.7,246.6 496.6,249.3 503.4,240.6 503.5,237.9Z"/>
<path class="e" d="M496.7,246.6L496.6,249.3M503.4,240.6L503.5,237.9M503.5,237.9L496.7,246.6"/>
<path fill="#00006c" stroke="#00006c" d="M813.5,335 811.8,333.3 813.2,342.5 814.9,344.4Z"/>
<path class="e" d="M813.5,335L811.8,333.3M811.8,333.3L813.2,342.5M813.2,342.5L814.9,344.4"/>
<path fill="#00005d" stroke="#00005d" d="M878.8,352.9 876.7,352.1 876.9,365.1 879.1,366Z"/>
<path class="e" d="M878.8,352.9L876.7,352.1M876.9,365.1L879.1,366M879.1,366L878.8,352.9"/>
<path fill="#0000df" d="M913.4,277.4 910.1,288.8 914.3,303.9 917.5,292.5Z"/>
<path fill="#0000ec" stroke="#0000ec" d="M837.3,229.2 835.2,236.7 842.4,247.6 844.5,240.1Z"/>
<path class="e" d="M837.3,229.2L835.2,236.7M842.4,247.6L844.5,240.1M844.5,240.1L837.3,229.2"/>
<path fill="#000056" d="M502.6,256.3 517.1,262.6 523,255.1 509.1,248Z"/>
<path fill="#000076" stroke="#000076" d="M531,212.8 524.1,219.2 532.9,212.3 539.6,206.1Z"/>
<path class="e" d="M531,212.8L524.1,219.2M524.1,219.2L532.9,212.3M532.9,212.3L539.6,206.1"/>
<path fill="#000073" stroke="#000073" d="M496.6,249.3 497.6,252 504.4,243.4 503.4,240.6Z"/>
<path class="e" d="M496.6,249.3L497.6,252M504.4,243.4L503.4,240.6"/>
<path fill="#000075" d="M561.5,145.2 559.3,152.7 571.9,147.9 574,140.4Z"/>
<path fill="#00005d" stroke="#00005d" d="M816.1,335.7 813.5,335 814.9,344.4 817.5,345.3Z"/>
<path class="e" d="M816.1,335.7L813.5,335M814.9,344.4L817.5,345.3M817.5,345.3L816.1,335.7"/>
<path fill="#00006b" stroke="#00006b" d="M545.7,165.9 550.8,178.1 561.7,172.7 557.2,160.2Z"/>
<path class="e" d="M545.7,165.9L550.8,178.1M561.7,172.7L557.2,160.2"/>
<path fill="#000056" d="M901.5,355.7 878.8,352.9 879.1,366 901.7,370.2Z"/>
<path fill="#0000c7" stroke="#0000c7" d="M906.9,352.8 905.9,354.5 906.1,369.2 907.2,367.6Z"/>
<path class="e" d="M906.9,352.8L905.9,354.5M906.1,369.2L907.2,367.6M907.2,367.6L906.9,352.8"/>
<path fill="#000069" stroke="#000069" d="M497.6,252 499.8,254.5 506.4,246 504.4,243.4Z"/>
<path class="e" d="M497.6,252L499.8,254.5M506.4,246L504.4,243.4"/>
<path fill="#000079" d="M472.6,144 469.4,155.3 482.1,145.3 485.3,134Z"/>
<path fill="#000078" stroke="#000078" d="M542.4,196.2 539.6,206.1 549.2,200.1 552,190.2Z"/>
<path class="e" d="M542.4,196.2L539.6,206.1M549.2,200.1L552,190.2"/>
<path fill="#00005b" stroke="#00005b" d="M499.8,254.5 502.6,256.3 509.1,248 506.4,246Z"/>
<path class="e" d="M499.8,254.5L502.6,256.3M502.6,256.3L509.1,248M509.1,248L506.4,246"/>
<path fill="#0000d1" stroke="#0000d1" d="M841.7,330.9 840.4,333.3 842,344.3 843.3,342Z"/>
<path class="e" d="M841.7,330.9L840.4,333.3M842,344.3L843.3,342M843.3,342L841.7,330.9"/>
<path fill="#00009d" stroke="#00009d" d="M905.9,354.5 903.9,355.5 904.1,370.1 906.1,369.2Z"/>
<path class="e" d="M905.9,354.5L903.9,355.5M904.1,370.1L906.1,369.2"/>
<path fill="#0000d8" d="M911.1,315.2 907.9,326.5 910.1,341.5 913.3,330.2Z"/>
<path fill="#000056" d="M831.7,336.7 816.1,335.7 817.5,345.3 833.2,347.2Z"/>
<path fill="#000060" stroke="#000060" d="M903.9,355.5 901.5,355.7 901.7,370.2 904.1,370.1Z"/>
<path class="e" d="M903.9,355.5L901.5,355.7M901.5,355.7L901.7,370.2M901.7,370.2L904.1,370.1"/>
<path fill="#0000ee" d="M831,211.1 828.9,218.6 837.3,229.2 839.5,221.7Z"/>
<path fill="#0000e2" stroke="#0000e2" d="M827,285.1 829.4,293.9 833.6,304.4 831.1,295.3Z"/>
<path class="e" d="M827,285.1L829.4,293.9M829.4,293.9L833.6,304.4M833.6,304.4L831.1,295.3"/>
<path fill="#0000ab" stroke="#0000ab" d="M835.2,236.7 824.9,245.1 831.8,255.4 842.4,247.6Z"/>
<path class="e" d="M835.2,236.7L824.9,245.1M831.8,255.4L842.4,247.6"/>
<path fill="#0000b6" stroke="#0000b6" d="M840.4,333.3 838,335.2 839.6,346.1 842,344.3Z"/>
<path class="e" d="M840.4,333.3L838,335.2M839.6,346.1L842,344.3"/>
<path fill="#0000e9" stroke="#0000e9" d="M824.4,265.1 821.6,275 827,285.1 829.8,275.3Z"/>
<path class="e" d="M824.4,265.1L821.6,275M827,285.1L829.8,275.3"/>
<path fill="#000073" stroke="#000073" d="M550.8,178.1 552,190.2 562.6,184.9 561.7,172.7Z"/>
<path class="e" d="M550.8,178.1L552,190.2M562.6,184.9L561.7,172.7"/>
<path fill="#00008c" stroke="#00008c" d="M838,335.2 835,336.4 836.6,347.1 839.6,346.1Z"/>
<path class="e" d="M838,335.2L835,336.4M836.6,347.1L839.6,346.1"/>
<path fill="#000059" stroke="#000059" d="M835,336.4 831.7,336.7 833.2,347.2 836.6,347.1Z"/>
<path class="e" d="M835,336.4L831.7,336.7M831.7,336.7L833.2,347.2M833.2,347.2L836.6,347.1"/>
<path fill="#000079" d="M455.1,177.5 451.9,188.9 463,177.9 466.2,166.6Z"/>
<path fill="#0000e5" d="M910.5,251 907.3,262.3 913.4,277.4 916.6,266.1Z"/>
<path fill="#000079" d="M506,229.2 503.5,237.9 511.6,229.9 514.1,221.2Z"/>
<path fill="#00006f" stroke="#00006f" d="M525.7,255.8 528,255.2 534.8,248.4 532.6,249Z"/>
<path class="e" d="M525.7,255.8L528,255.2M528,255.2L534.8,248.4M534.8,248.4L532.6,249"/>
<path fill="#0000d7" stroke="#0000d7" d="M824.9,245.1 817.8,255.1 824.4,265.1 831.8,255.4Z"/>
<path class="e" d="M824.9,245.1L817.8,255.1M824.4,265.1L831.8,255.4"/>
<path fill="#000078" d="M488.5,122.7 485.3,134 499.5,125.1 502.7,113.8Z"/>
<path fill="#000075" stroke="#000075" d="M559.3,152.7 557.2,160.2 569.8,155.4 571.9,147.9Z"/>
<path class="e" d="M559.3,152.7L557.2,160.2M569.8,155.4L571.9,147.9M571.9,147.9L559.3,152.7"/>
<path fill="#00005b" stroke="#00005b" d="M499.8,156.3 509.2,154.8 521.7,147 512.8,148.2Z"/>
<path class="e" d="M499.8,156.3L509.2,154.8M509.2,154.8L521.7,147M521.7,147L512.8,148.2M512.8,148.2L499.8,156.3M499.8,156.3L521.7,147M509.2,154.8L512.8,148.2"/>
<path fill="#000056" stroke="#000056" d="M523,255.1 525.7,255.8 532.6,249 530.1,248.1Z"/>
<path class="e" d="M523,255.1L525.7,255.8M532.6,249L530.1,248.1M530.1,248.1L523,255.1"/>
<path fill="#00007a" d="M439.4,212 436.2,223.3 445.5,211.5 448.7,200.2Z"/>
<path fill="#000078" stroke="#000078" d="M462.6,238.2 464.4,237.6 472.6,227.3 470.7,227.8Z"/>
<path class="e" d="M462.6,238.2L464.4,237.6M464.4,237.6L472.6,227.3M472.6,227.3L470.7,227.8"/>
<path fill="#0000df" d="M841.1,311.1 838.6,319.8 841.7,330.9 844.1,322.2Z"/>
<path fill="#0000df" d="M910.1,288.8 906.9,300.1 911.1,315.2 914.3,303.9Z"/>
<path fill="#00006b" stroke="#00006b" d="M810.8,325.5 809.3,323.9 811.8,333.3 813.5,335Z"/>
<path class="e" d="M810.8,325.5L809.3,323.9M809.3,323.9L811.8,333.3M811.8,333.3L813.5,335"/>
<path fill="#0000ee" stroke="#0000ee" d="M828.9,218.6 826.8,226.1 835.2,236.7 837.3,229.2Z"/>
<path class="e" d="M828.9,218.6L826.8,226.1M835.2,236.7L837.3,229.2M837.3,229.2L828.9,218.6"/>
<path fill="#00007c" d="M574,140.4 571.9,147.9 585.3,144 587.4,136.5Z"/>
<path fill="#000056" stroke="#000056" d="M460.4,237.7 462.6,238.2 470.7,227.8 468.6,227.2Z"/>
<path class="e" d="M460.4,237.7L462.6,238.2M470.7,227.8L468.6,227.2M468.6,227.2L460.4,237.7"/>
<path fill="#000067" stroke="#000067" d="M879.4,249.1 872.5,243.5 879.4,256.6 886.6,262.7Z"/>
<path class="e" d="M879.4,249.1L872.5,243.5M872.5,243.5L879.4,256.6M879.4,256.6L886.6,262.7M886.6,262.7L879.4,249.1M879.4,249.1L879.4,256.6M872.5,243.5L886.6,262.7"/>
<path fill="#00006a" stroke="#00006a" d="M557.2,160.2 561.7,172.7 573.6,168.2 569.8,155.4Z"/>
<path class="e" d="M557.2,160.2L561.7,172.7M573.6,168.2L569.8,155.4"/>
<path fill="#0000e9" d="M905.7,224.7 902.5,236 910.5,251 913.7,239.7Z"/>
<path fill="#000075" stroke="#000075" d="M539.6,206.1 532.9,212.3 542.9,206.1 549.2,200.1Z"/>
<path class="e" d="M539.6,206.1L532.9,212.3M532.9,212.3L542.9,206.1M542.9,206.1L549.2,200.1"/>
<path fill="#000078" stroke="#000078" d="M503.5,237.9 503.4,240.6 511.5,232.6 511.6,229.9Z"/>
<path class="e" d="M503.5,237.9L503.4,240.6M511.5,232.6L511.6,229.9M511.6,229.9L503.5,237.9"/>
<path fill="#00005c" stroke="#00005c" d="M813.4,326.1 810.8,325.5 813.5,335 816.1,335.7Z"/>
<path class="e" d="M813.4,326.1L810.8,325.5M813.5,335L816.1,335.7M816.1,335.7L813.4,326.1"/>
<path fill="#000056" d="M509.1,248 523,255.1 530.1,248.1 516.9,240.3Z"/>
<path fill="#000079" d="M469.4,155.3 466.2,166.6 478.9,156.7 482.1,145.3Z"/>
<path fill="#000076" stroke="#000076" d="M552,190.2 549.2,200.1 559.9,194.8 562.6,184.9Z"/>
<path class="e" d="M552,190.2L549.2,200.1M559.9,194.8L562.6,184.9"/>
<path fill="#0000ef" d="M821.3,200.9 819.2,208.3 828.9,218.6 831,211.1Z"/>
<path fill="#000073" stroke="#000073" d="M503.4,240.6 504.4,243.4 512.4,235.5 511.5,232.6Z"/>
<path class="e" d="M503.4,240.6L504.4,243.4M512.4,235.5L511.5,232.6"/>
<path fill="#0000d8" d="M907.9,326.5 904.7,337.8 906.9,352.8 910.1,341.5Z"/>
<path fill="#00006c" stroke="#00006c" d="M874.8,338.9 873.5,337.6 875.4,350.7 876.7,352.1Z"/>
<path class="e" d="M874.8,338.9L873.5,337.6M873.5,337.6L875.4,350.7M875.4,350.7L876.7,352.1"/>
<path fill="#000056" d="M439.4,228.6 460.4,237.7 468.6,227.2 448.5,216.9Z"/>
<path fill="#0000ad" stroke="#0000ad" d="M826.8,226.1 816.9,235.1 824.9,245.1 835.2,236.7Z"/>
<path class="e" d="M826.8,226.1L816.9,235.1M824.9,245.1L835.2,236.7"/>
<path fill="#000068" stroke="#000068" d="M504.4,243.4 506.4,246 514.3,238.2 512.4,235.5Z"/>
<path class="e" d="M504.4,243.4L506.4,246M514.3,238.2L512.4,235.5"/>
<path fill="#00005b" stroke="#00005b" d="M506.4,246 509.1,248 516.9,240.3 514.3,238.2Z"/>
<path class="e" d="M506.4,246L509.1,248M509.1,248L516.9,240.3M516.9,240.3L514.3,238.2"/>
<path fill="#0000e6" stroke="#0000e6" d="M821.6,275 823.8,283.4 829.4,293.9 827,285.1Z"/>
<path class="e" d="M821.6,275L823.8,283.4M823.8,283.4L829.4,293.9M829.4,293.9L827,285.1"/>
<path fill="#000072" stroke="#000072" d="M561.7,172.7 562.6,184.9 574.2,180.5 573.6,168.2Z"/>
<path class="e" d="M561.7,172.7L562.6,184.9M574.2,180.5L573.6,168.2"/>
<path fill="#000056" d="M828.7,326.1 813.4,326.1 816.1,335.7 831.7,336.7Z"/>
<path fill="#0000ec" stroke="#0000ec" d="M817.8,255.1 815,265 821.6,275 824.4,265.1Z"/>
<path class="e" d="M817.8,255.1L815,265M821.6,275L824.4,265.1"/>
<path fill="#000078" stroke="#000078" d="M436.2,223.3 436.3,225.3 445.6,213.5 445.5,211.5Z"/>
<path class="e" d="M436.2,223.3L436.3,225.3M445.6,213.5L445.5,211.5M445.5,211.5L436.2,223.3"/>
<path fill="#0000d8" stroke="#0000d8" d="M838.6,319.8 837.3,322.2 840.4,333.3 841.7,330.9Z"/>
<path class="e" d="M838.6,319.8L837.3,322.2M840.4,333.3L841.7,330.9M841.7,330.9L838.6,319.8"/>
<path fill="#00005d" stroke="#00005d" d="M876.9,339.5 874.8,338.9 876.7,352.1 878.8,352.9Z"/>
<path class="e" d="M876.9,339.5L874.8,338.9M876.7,352.1L878.8,352.9M878.8,352.9L876.9,339.5"/>
<path fill="#00006e" stroke="#00006e" d="M436.3,225.3 437.4,227.2 446.7,215.5 445.6,213.5Z"/>
<path class="e" d="M436.3,225.3L437.4,227.2M446.7,215.5L445.6,213.5"/>
<path fill="#000079" d="M451.9,188.9 448.7,200.2 459.8,189.3 463,177.9Z"/>
<path fill="#0000e5" d="M907.3,262.3 904.1,273.6 910.1,288.8 913.4,277.4Z"/>
<path fill="#00005e" stroke="#00005e" d="M437.4,227.2 439.4,228.6 448.5,216.9 446.7,215.5Z"/>
<path class="e" d="M437.4,227.2L439.4,228.6M439.4,228.6L448.5,216.9M448.5,216.9L446.7,215.5"/>
<path fill="#0000bb" stroke="#0000bb" d="M837.3,322.2 835,324.2 838,335.2 840.4,333.3Z"/>
<path class="e" d="M837.3,322.2L835,324.2M838,335.2L840.4,333.3"/>
<path fill="#0000d9" stroke="#0000d9" d="M816.9,235.1 810,245.4 817.8,255.1 824.9,245.1Z"/>
<path class="e" d="M816.9,235.1L810,245.4M817.8,255.1L824.9,245.1"/>
<path fill="#00005a" stroke="#00005a" d="M832,325.6 828.7,326.1 831.7,336.7 835,336.4Z"/>
<path class="e" d="M832,325.6L828.7,326.1M828.7,326.1L831.7,336.7M831.7,336.7L835,336.4"/>
<path fill="#00007c" stroke="#00007c" d="M571.9,147.9 569.8,155.4 583.2,151.5 585.3,144Z"/>
<path class="e" d="M571.9,147.9L569.8,155.4M583.2,151.5L585.3,144M585.3,144L571.9,147.9"/>
<path fill="#00008f" stroke="#00008f" d="M835,324.2 832,325.6 835,336.4 838,335.2Z"/>
<path class="e" d="M835,324.2L832,325.6M835,336.4L838,335.2"/>
<path fill="#000066" stroke="#000066" d="M532.6,249 534.8,248.4 542.7,242.3 540.6,242.7Z"/>
<path class="e" d="M532.6,249L534.8,248.4M534.8,248.4L542.7,242.3M542.7,242.3L540.6,242.7"/>
<path fill="#000078" d="M485.3,134 482.1,145.3 496.3,136.5 499.5,125.1Z"/>
<path fill="#000056" d="M899.3,341 876.9,339.5 878.8,352.9 901.5,355.7Z"/>
<path fill="#000079" d="M514.1,221.2 511.6,229.9 521,222.5 523.5,213.8Z"/>
<path fill="#0000ce" stroke="#0000ce" d="M904.7,337.8 903.6,339.5 905.9,354.5 906.9,352.8Z"/>
<path class="e" d="M904.7,337.8L903.6,339.5M905.9,354.5L906.9,352.8M906.9,352.8L904.7,337.8"/>
<path fill="#000088" d="M587.4,136.5 585.3,144 599.4,141 601.6,133.5Z"/>
<path fill="#000056" stroke="#000056" d="M530.1,248.1 532.6,249 540.6,242.7 538.2,241.8Z"/>
<path class="e" d="M530.1,248.1L532.6,249M540.6,242.7L538.2,241.8M538.2,241.8L530.1,248.1"/>
<path fill="#0000ef" stroke="#0000ef" d="M819.2,208.3 817.1,215.8 826.8,226.1 828.9,218.6Z"/>
<path class="e" d="M819.2,208.3L817.1,215.8M826.8,226.1L828.9,218.6M828.9,218.6L819.2,208.3"/>
<path fill="#0000df" d="M906.9,300.1 903.7,311.4 907.9,326.5 911.1,315.2Z"/>
<path fill="#000069" stroke="#000069" d="M807,316 805.5,314.6 809.3,323.9 810.8,325.5Z"/>
<path class="e" d="M807,316L805.5,314.6M805.5,314.6L809.3,323.9M809.3,323.9L810.8,325.5"/>
<path fill="#0000a2" stroke="#0000a2" d="M903.6,339.5 901.7,340.6 903.9,355.5 905.9,354.5Z"/>
<path class="e" d="M903.6,339.5L901.7,340.6M903.9,355.5L905.9,354.5"/>
<path fill="#000062" stroke="#000062" d="M901.7,340.6 899.3,341 901.5,355.7 903.9,355.5Z"/>
<path class="e" d="M901.7,340.6L899.3,341M899.3,341L901.5,355.7M901.5,355.7L903.9,355.5"/>
<path fill="#000069" stroke="#000069" d="M569.8,155.4 573.6,168.2 586.3,164.5 583.2,151.5Z"/>
<path class="e" d="M569.8,155.4L573.6,168.2M586.3,164.5L583.2,151.5"/>
<path fill="#000056" stroke="#000056" d="M512.8,148.2 521.7,147 535.3,140.3 527,141.2Z"/>
<path class="e" d="M512.8,148.2L521.7,147M521.7,147L535.3,140.3M535.3,140.3L527,141.2M527,141.2L512.8,148.2M512.8,148.2L535.3,140.3M521.7,147L527,141.2"/>
<path fill="#0000ef" d="M810.6,191 808.4,198.5 819.2,208.3 821.3,200.9Z"/>
<path fill="#0000e9" d="M902.5,236 899.3,247.3 907.3,262.3 910.5,251Z"/>
<path fill="#000075" stroke="#000075" d="M562.6,184.9 559.9,194.8 571.4,190.4 574.2,180.5Z"/>
<path class="e" d="M562.6,184.9L559.9,194.8M571.4,190.4L574.2,180.5"/>
<path fill="#000074" stroke="#000074" d="M549.2,200.1 542.9,206.1 553.8,200.7 559.9,194.8Z"/>
<path class="e" d="M549.2,200.1L542.9,206.1M542.9,206.1L553.8,200.7M553.8,200.7L559.9,194.8"/>
<path fill="#0000e5" d="M836.6,300 834.1,308.7 838.6,319.8 841.1,311.1Z"/>
<path class="k" d="M554.6,180.2 551.4,194.1 549.2,193 552.1,180.2Z"/>
<path class="k" d="M551.4,194.1 542.5,205.2 541,203.3 549.2,193Z"/>
<path class="k" d="M542.5,205.2 529.7,211.4 529.1,209 541,203.3Z"/>
<path class="k" d="M529.7,211.4 515.4,211.4 516,209 529.1,209Z"/>
<path class="k" d="M515.4,211.4 502.6,205.2 504.1,203.3 516,209Z"/>
<path class="k" d="M502.6,205.2 493.7,194.1 495.9,193 504.1,203.3Z"/>
<path class="k" d="M493.7,194.1 490.6,180.2 493,180.2 495.9,193Z"/>
<path class="k" d="M490.6,180.2 493.7,166.3 495.9,167.4 493,180.2Z"/>
<path class="k" d="M493.7,166.3 502.6,155.2 504.1,157.1 495.9,167.4Z"/>
<path class="k" d="M502.6,155.2 515.4,149 516,151.4 504.1,157.1Z"/>
<path class="k" d="M515.4,149 529.7,149 529.1,151.4 516,151.4Z"/>
<path class="k" d="M529.7,149 542.5,155.2 541,157.1 529.1,151.4Z"/>
<path class="k" d="M542.5,155.2 551.4,166.3 549.2,167.4 541,157.1Z"/>
<path class="k" d="M551.4,166.3 554.6,180.2 552.1,180.2 549.2,167.4Z"/>
<path fill="#00005c" stroke="#00005c" d="M809.5,316.4 807,316 810.8,325.5 813.4,326.1Z"/>
<path class="e" d="M809.5,316.4L807,316M810.8,325.5L813.4,326.1M813.4,326.1L809.5,316.4"/>
<path fill="#000079" d="M466.2,166.6 463,177.9 475.7,168 478.9,156.7Z"/>
<path fill="#000076" d="M502.7,113.8 499.5,125.1 515.2,117.4 518.4,106.1Z"/>
<path fill="#000056" d="M516.9,240.3 530.1,248.1 538.2,241.8 525.8,233.3Z"/>
<path fill="#0000ad" stroke="#0000ad" d="M817.1,215.8 807.8,225.4 816.9,235.1 826.8,226.1Z"/>
<path class="e" d="M817.1,215.8L807.8,225.4M816.9,235.1L826.8,226.1"/>
<path fill="#000070" stroke="#000070" d="M573.6,168.2 574.2,180.5 586.4,176.9 586.3,164.5Z"/>
<path class="e" d="M573.6,168.2L574.2,180.5M586.4,176.9L586.3,164.5"/>
<path fill="#000078" stroke="#000078" d="M511.6,229.9 511.5,232.6 520.8,225.3 521,222.5Z"/>
<path class="e" d="M511.6,229.9L511.5,232.6M520.8,225.3L521,222.5M521,222.5L511.6,229.9"/>
<path fill="#0000ee" stroke="#0000ee" d="M810,245.4 807.3,255.3 815,265 817.8,255.1Z"/>
<path class="e" d="M810,245.4L807.3,255.3M815,265L817.8,255.1"/>
<path fill="#0000e9" stroke="#0000e9" d="M815,265 817,273.1 823.8,283.4 821.6,275Z"/>
<path class="e" d="M815,265L817,273.1M817,273.1L823.8,283.4M823.8,283.4L821.6,275"/>
<path fill="#000066" stroke="#000066" d="M870.5,235.6 864,230.7 872.5,243.5 879.4,249.1Z"/>
<path class="e" d="M870.5,235.6L864,230.7M864,230.7L872.5,243.5M872.5,243.5L879.4,249.1M879.4,249.1L870.5,235.6M870.5,235.6L872.5,243.5M864,230.7L879.4,249.1"/>
<path fill="#00006f" stroke="#00006f" d="M470.7,227.8 472.6,227.3 482.2,217.8 480.5,218.2Z"/>
<path class="e" d="M470.7,227.8L472.6,227.3M472.6,227.3L482.2,217.8M482.2,217.8L480.5,218.2"/>
<path fill="#000072" stroke="#000072" d="M511.5,232.6 512.4,235.5 521.7,228.3 520.8,225.3Z"/>
<path class="e" d="M511.5,232.6L512.4,235.5M521.7,228.3L520.8,225.3"/>
<path fill="#000056" d="M824.5,315.5 809.5,316.4 813.4,326.1 828.7,326.1Z"/>
<path fill="#0000d9" stroke="#0000d9" d="M807.8,225.4 801.2,236 810,245.4 816.9,235.1Z"/>
<path class="e" d="M807.8,225.4L801.2,236M810,245.4L816.9,235.1"/>
<path fill="#00005b" stroke="#00005b" d="M514.3,238.2 516.9,240.3 525.8,233.3 523.4,231.1Z"/>
<path class="e" d="M514.3,238.2L516.9,240.3M516.9,240.3L525.8,233.3M525.8,233.3L523.4,231.1"/>
<path fill="#000088" stroke="#000088" d="M585.3,144 583.2,151.5 597.3,148.5 599.4,141Z"/>
<path class="e" d="M585.3,144L583.2,151.5M597.3,148.5L599.4,141M599.4,141L585.3,144"/>
<path fill="#000079" d="M448.7,200.2 445.5,211.5 456.5,200.6 459.8,189.3Z"/>
<path fill="#000068" stroke="#000068" d="M512.4,235.5 514.3,238.2 523.4,231.1 521.7,228.3Z"/>
<path class="e" d="M512.4,235.5L514.3,238.2M523.4,231.1L521.7,228.3"/>
<path fill="#000056" stroke="#000056" d="M468.6,227.2 470.7,227.8 480.5,218.2 478.4,217.5Z"/>
<path class="e" d="M468.6,227.2L470.7,227.8M480.5,218.2L478.4,217.5M478.4,217.5L468.6,227.2"/>
<path fill="#0000ec" d="M895.9,209.9 892.7,221.2 902.5,236 905.7,224.7Z"/>
<path fill="#0000e5" d="M904.1,273.6 900.8,285 906.9,300.1 910.1,288.8Z"/>
<path fill="#0000de" stroke="#0000de" d="M834.1,308.7 832.8,311.1 837.3,322.2 838.6,319.8Z"/>
<path class="e" d="M834.1,308.7L832.8,311.1M837.3,322.2L838.6,319.8M838.6,319.8L834.1,308.7"/>
<path fill="#000093" d="M601.6,133.5 599.4,141 614.2,139.1 616.4,131.6Z"/>
<path fill="#00005c" stroke="#00005c" d="M540.6,242.7 542.7,242.3 551.5,236.8 549.5,237.2Z"/>
<path class="e" d="M540.6,242.7L542.7,242.3M542.7,242.3L551.5,236.8M551.5,236.8L549.5,237.2"/>
<path fill="#000078" d="M482.1,145.3 478.9,156.7 493.1,147.8 496.3,136.5Z"/>
<path fill="#0000ef" stroke="#0000ef" d="M808.4,198.5 806.3,206 817.1,215.8 819.2,208.3Z"/>
<path class="e" d="M808.4,198.5L806.3,206M817.1,215.8L819.2,208.3M819.2,208.3L808.4,198.5"/>
<path fill="#0000c0" stroke="#0000c0" d="M832.8,311.1 830.6,313.3 835,324.2 837.3,322.2Z"/>
<path class="e" d="M832.8,311.1L830.6,313.3M835,324.2L837.3,322.2"/>
<path fill="#00006b" stroke="#00006b" d="M871.1,325.6 869.8,324.4 873.5,337.6 874.8,338.9Z"/>
<path class="e" d="M871.1,325.6L869.8,324.4M869.8,324.4L873.5,337.6M873.5,337.6L874.8,338.9"/>
<path fill="#00005b" stroke="#00005b" d="M827.6,314.8 824.5,315.5 828.7,326.1 832,325.6Z"/>
<path class="e" d="M827.6,314.8L824.5,315.5M824.5,315.5L828.7,326.1M828.7,326.1L832,325.6"/>
<path fill="#0000ed" d="M798.7,181.7 796.6,189.2 808.4,198.5 810.6,191Z"/>
<path fill="#000092" stroke="#000092" d="M830.6,313.3 827.6,314.8 832,325.6 835,324.2Z"/>
<path class="e" d="M830.6,313.3L827.6,314.8M832,325.6L835,324.2"/>
<path fill="#000067" stroke="#000067" d="M583.2,151.5 586.3,164.5 599.7,161.7 597.3,148.5Z"/>
<path class="e" d="M583.2,151.5L586.3,164.5M599.7,161.7L597.3,148.5"/>
<path fill="#000056" stroke="#000056" d="M538.2,241.8 540.6,242.7 549.5,237.2 547.3,236.1Z"/>
<path class="e" d="M538.2,241.8L540.6,242.7M549.5,237.2L547.3,236.1M547.3,236.1L538.2,241.8"/>
<path fill="#000056" d="M448.5,216.9 468.6,227.2 478.4,217.5 459.4,206.2Z"/>
<path fill="#00005c" stroke="#00005c" d="M873.1,326.1 871.1,325.6 874.8,338.9 876.9,339.5Z"/>
<path class="e" d="M873.1,326.1L871.1,325.6M874.8,338.9L876.9,339.5M876.9,339.5L873.1,326.1"/>
<path fill="#000068" stroke="#000068" d="M802,306.6 800.6,305.3 805.5,314.6 807,316Z"/>
<path class="e" d="M802,306.6L800.6,305.3M800.6,305.3L805.5,314.6M805.5,314.6L807,316"/>
<path fill="#0000df" d="M903.7,311.4 900.5,322.7 904.7,337.8 907.9,326.5Z"/>
<path fill="#00007c" stroke="#00007c" d="M574.2,180.5 571.4,190.4 583.7,186.8 586.4,176.9Z"/>
<path class="e" d="M574.2,180.5L571.4,190.4M583.7,186.8L586.4,176.9"/>
<path fill="#000078" d="M523.5,213.8 521,222.5 531.5,216 534,207.3Z"/>
<path fill="#0000ad" stroke="#0000ad" d="M806.3,206 797.6,216.1 807.8,225.4 817.1,215.8Z"/>
<path class="e" d="M806.3,206L797.6,216.1M807.8,225.4L817.1,215.8"/>
<path fill="#000078" stroke="#000078" d="M559.9,194.8 553.8,200.7 565.7,196.1 571.4,190.4Z"/>
<path class="e" d="M559.9,194.8L553.8,200.7M553.8,200.7L565.7,196.1M565.7,196.1L571.4,190.4"/>
<path fill="#00007a" stroke="#00007a" d="M586.3,164.5 586.4,176.9 599.4,174.2 599.7,161.7Z"/>
<path class="e" d="M586.3,164.5L586.4,176.9M599.4,174.2L599.7,161.7"/>
<path fill="#000078" stroke="#000078" d="M445.5,211.5 445.6,213.5 456.6,202.6 456.5,200.6Z"/>
<path class="e" d="M445.5,211.5L445.6,213.5M456.6,202.6L456.5,200.6M456.5,200.6L445.5,211.5"/>
<path fill="#0000e9" d="M899.3,247.3 896.1,258.6 904.1,273.6 907.3,262.3Z"/>
<path fill="#00005b" stroke="#00005b" d="M804.5,306.9 802,306.6 807,316 809.5,316.4Z"/>
<path class="e" d="M804.5,306.9L802,306.6M807,316L809.5,316.4M809.5,316.4L804.5,306.9"/>
<path fill="#000079" d="M463,177.9 459.8,189.3 472.5,179.3 475.7,168Z"/>
<path fill="#0000ef" stroke="#0000ef" d="M801.2,236 798.4,245.9 807.3,255.3 810,245.4Z"/>
<path class="e" d="M801.2,236L798.4,245.9M807.3,255.3L810,245.4"/>
<path fill="#000076" d="M499.5,125.1 496.3,136.5 512,128.7 515.2,117.4Z"/>
<path fill="#00006e" stroke="#00006e" d="M445.6,213.5 446.7,215.5 457.6,204.6 456.6,202.6Z"/>
<path class="e" d="M445.6,213.5L446.7,215.5M457.6,204.6L456.6,202.6"/>
<path fill="#00005e" stroke="#00005e" d="M446.7,215.5 448.5,216.9 459.4,206.2 457.6,204.6Z"/>
<path class="e" d="M446.7,215.5L448.5,216.9M448.5,216.9L459.4,206.2M459.4,206.2L457.6,204.6"/>
<path fill="#0000e9" d="M830.7,288.9 828.3,297.6 834.1,308.7 836.6,300Z"/>
<path fill="#000056" d="M525.8,233.3 538.2,241.8 547.3,236.1 535.8,227Z"/>
<path class="k" d="M552.1,180.2 549.2,193 543,190 545.2,180.2Z"/>
<path class="k" d="M549.2,193 541,203.3 536.7,197.9 543,190Z"/>
<path class="k" d="M541,203.3 529.1,209 527.6,202.3 536.7,197.9Z"/>
<path class="k" d="M529.1,209 516,209 517.5,202.3 527.6,202.3Z"/>
<path class="k" d="M516,209 504.1,203.3 508.5,197.9 517.5,202.3Z"/>
<path class="k" d="M504.1,203.3 495.9,193 502.2,190 508.5,197.9Z"/>
<path class="k" d="M495.9,193 493,180.2 499.9,180.2 502.2,190Z"/>
<path class="k" d="M493,180.2 495.9,167.4 502.2,170.4 499.9,180.2Z"/>
<path class="k" d="M495.9,167.4 504.1,157.1 508.5,162.5 502.2,170.4Z"/>
<path class="k" d="M504.1,157.1 516,151.4 517.5,158.2 508.5,162.5Z"/>
<path class="k" d="M516,151.4 529.1,151.4 527.6,158.2 517.5,158.2Z"/>
<path class="k" d="M529.1,151.4 541,157.1 536.7,162.5 527.6,158.2Z"/>
<path class="k" d="M541,157.1 549.2,167.4 543,170.4 536.7,162.5Z"/>
<path class="k" d="M549.2,167.4 552.1,180.2 545.2,180.2 543,170.4Z"/>
<path fill="#0000d9" stroke="#0000d9" d="M797.6,216.1 791.3,227 801.2,236 807.8,225.4Z"/>
<path class="e" d="M797.6,216.1L791.3,227M801.2,236L807.8,225.4"/>
<path fill="#000056" d="M895.2,326.1 873.1,326.1 876.9,339.5 899.3,341Z"/>
<path fill="#000093" stroke="#000093" d="M599.4,141 597.3,148.5 612.1,146.5 614.2,139.1Z"/>
<path class="e" d="M599.4,141L597.3,148.5M612.1,146.5L614.2,139.1M614.2,139.1L599.4,141"/>
<path fill="#000056" stroke="#000056" d="M527,141.2 535.3,140.3 550.1,134.6 542.5,135.2Z"/>
<path class="e" d="M527,141.2L535.3,140.3M535.3,140.3L550.1,134.6M550.1,134.6L542.5,135.2M542.5,135.2L527,141.2M527,141.2L550.1,134.6M535.3,140.3L542.5,135.2"/>
<path fill="#0000eb" stroke="#0000eb" d="M807.3,255.3 809,263.1 817,273.1 815,265Z"/>
<path class="e" d="M807.3,255.3L809,263.1M809,263.1L817,273.1M817,273.1L815,265"/>
<path fill="#00009e" d="M616.4,131.6 614.2,139.1 629.6,138.1 631.7,130.6Z"/>
<path fill="#000077" stroke="#000077" d="M521,222.5 520.8,225.3 531.3,218.8 531.5,216Z"/>
<path class="e" d="M521,222.5L520.8,225.3M531.3,218.8L531.5,216M531.5,216L521,222.5"/>
<path fill="#0000ea" d="M786,173 783.8,180.5 796.6,189.2 798.7,181.7Z"/>
<path fill="#0000ed" stroke="#0000ed" d="M796.6,189.2 794.5,196.7 806.3,206 808.4,198.5Z"/>
<path class="e" d="M796.6,189.2L794.5,196.7M806.3,206L808.4,198.5M808.4,198.5L796.6,189.2"/>
<path fill="#0000d5" stroke="#0000d5" d="M900.5,322.7 899.5,324.4 903.6,339.5 904.7,337.8Z"/>
<path class="e" d="M900.5,322.7L899.5,324.4M903.6,339.5L904.7,337.8M904.7,337.8L900.5,322.7"/>
<path fill="#000056" d="M818.9,304.9 804.5,306.9 809.5,316.4 824.5,315.5Z"/>
<path fill="#0000ec" d="M892.7,221.2 889.5,232.6 899.3,247.3 902.5,236Z"/>
<path fill="#0000e5" d="M900.8,285 897.6,296.3 903.7,311.4 906.9,300.1Z"/>
<path fill="#000075" d="M518.4,106.1 515.2,117.4 532.3,110.8 535.5,99.5Z"/>
<path fill="#000056" stroke="#000056" d="M549.5,237.2 551.5,236.8 561.2,232 559.4,232.3Z"/>
<path class="e" d="M549.5,237.2L551.5,236.8M551.5,236.8L561.2,232M561.2,232L559.4,232.3"/>
<path fill="#000071" stroke="#000071" d="M520.8,225.3 521.7,228.3 532,221.8 531.3,218.8Z"/>
<path class="e" d="M520.8,225.3L521.7,228.3M532,221.8L531.3,218.8"/>
<path fill="#000064" stroke="#000064" d="M860,222.5 854,218.2 864,230.7 870.5,235.6Z"/>
<path class="e" d="M860,222.5L854,218.2M854,218.2L864,230.7M864,230.7L870.5,235.6M870.5,235.6L860,222.5M860,222.5L864,230.7M854,218.2L870.5,235.6"/>
<path fill="#00006e" stroke="#00006e" d="M597.3,148.5 599.7,161.7 613.7,159.8 612.1,146.5Z"/>
<path class="e" d="M597.3,148.5L599.7,161.7M613.7,159.8L612.1,146.5"/>
<path fill="#0000a7" stroke="#0000a7" d="M899.5,324.4 897.5,325.7 901.7,340.6 903.6,339.5Z"/>
<path class="e" d="M899.5,324.4L897.5,325.7M901.7,340.6L903.6,339.5"/>
<path fill="#00005b" stroke="#00005b" d="M523.4,231.1 525.8,233.3 535.8,227 533.6,224.7Z"/>
<path class="e" d="M523.4,231.1L525.8,233.3M525.8,233.3L535.8,227M535.8,227L533.6,224.7"/>
<path fill="#000063" stroke="#000063" d="M897.5,325.7 895.2,326.1 899.3,341 901.7,340.6Z"/>
<path class="e" d="M897.5,325.7L895.2,326.1M895.2,326.1L899.3,341M899.3,341L901.7,340.6"/>
<path fill="#000067" stroke="#000067" d="M521.7,228.3 523.4,231.1 533.6,224.7 532,221.8Z"/>
<path class="e" d="M521.7,228.3L523.4,231.1M533.6,224.7L532,221.8"/>
<path fill="#000078" d="M478.9,156.7 475.7,168 489.9,159.1 493.1,147.8Z"/>
<path fill="#0000e2" stroke="#0000e2" d="M828.3,297.6 827,300.1 832.8,311.1 834.1,308.7Z"/>
<path class="e" d="M828.3,297.6L827,300.1M832.8,311.1L834.1,308.7M834.1,308.7L828.3,297.6"/>
<path fill="#000088" stroke="#000088" d="M586.4,176.9 583.7,186.8 596.6,184.1 599.4,174.2Z"/>
<path class="e" d="M586.4,176.9L583.7,186.8M596.6,184.1L599.4,174.2"/>
<path fill="#0000ac" stroke="#0000ac" d="M794.5,196.7 786.4,207.3 797.6,216.1 806.3,206Z"/>
<path class="e" d="M794.5,196.7L786.4,207.3M797.6,216.1L806.3,206"/>
<path fill="#000056" stroke="#000056" d="M547.3,236.1 549.5,237.2 559.4,232.3 557.3,231.2Z"/>
<path class="e" d="M547.3,236.1L549.5,237.2M559.4,232.3L557.3,231.2M557.3,231.2L547.3,236.1"/>
<path fill="#000084" stroke="#000084" d="M599.7,161.7 599.4,174.2 613,172.4 613.7,159.8Z"/>
<path class="e" d="M599.7,161.7L599.4,174.2M613,172.4L613.7,159.8"/>
<path fill="#000066" stroke="#000066" d="M795.9,297.4 794.5,296.2 800.6,305.3 802,306.6Z"/>
<path class="e" d="M795.9,297.4L794.5,296.2M794.5,296.2L800.6,305.3M800.6,305.3L802,306.6"/>
<path fill="#000066" stroke="#000066" d="M480.5,218.2 482.2,217.8 493.3,209.1 491.6,209.4Z"/>
<path class="e" d="M480.5,218.2L482.2,217.8M482.2,217.8L493.3,209.1M493.3,209.1L491.6,209.4"/>
<path fill="#0000c4" stroke="#0000c4" d="M827,300.1 824.8,302.4 830.6,313.3 832.8,311.1Z"/>
<path class="e" d="M827,300.1L824.8,302.4M830.6,313.3L832.8,311.1"/>
<path fill="#0000a8" d="M631.7,130.6 629.6,138.1 645.3,138.1 647.4,130.6Z"/>
<path fill="#00005c" stroke="#00005c" d="M821.9,304.1 818.9,304.9 824.5,315.5 827.6,314.8Z"/>
<path class="e" d="M821.9,304.1L818.9,304.9M818.9,304.9L824.5,315.5M824.5,315.5L827.6,314.8"/>
<path fill="#0000ee" d="M884.5,195.5 881.2,206.8 892.7,221.2 895.9,209.9Z"/>
<path fill="#000095" stroke="#000095" d="M824.8,302.4 821.9,304.1 827.6,314.8 830.6,313.3Z"/>
<path class="e" d="M824.8,302.4L821.9,304.1M827.6,314.8L830.6,313.3"/>
<path fill="#0000ef" stroke="#0000ef" d="M791.3,227 788.5,236.9 798.4,245.9 801.2,236Z"/>
<path class="e" d="M791.3,227L788.5,236.9M798.4,245.9L801.2,236"/>
<path fill="#000083" stroke="#000083" d="M571.4,190.4 565.7,196.1 578.4,192.4 583.7,186.8Z"/>
<path class="e" d="M571.4,190.4L565.7,196.1M565.7,196.1L578.4,192.4M578.4,192.4L583.7,186.8"/>
<path fill="#000056" stroke="#000056" d="M478.4,217.5 480.5,218.2 491.6,209.4 489.7,208.7Z"/>
<path class="e" d="M478.4,217.5L480.5,218.2M491.6,209.4L489.7,208.7M489.7,208.7L478.4,217.5"/>
<path fill="#00009e" stroke="#00009e" d="M614.2,139.1 612.1,146.5 627.4,145.6 629.6,138.1Z"/>
<path class="e" d="M614.2,139.1L612.1,146.5M627.4,145.6L629.6,138.1M629.6,138.1L614.2,139.1"/>
<path fill="#0000d7" stroke="#0000d7" d="M786.4,207.3 780.4,218.5 791.3,227 797.6,216.1Z"/>
<path class="e" d="M786.4,207.3L780.4,218.5M791.3,227L797.6,216.1"/>
<path fill="#0000e6" d="M772.4,165 770.2,172.4 783.8,180.5 786,173Z"/>
<path fill="#00005b" stroke="#00005b" d="M798.2,297.4 795.9,297.4 802,306.6 804.5,306.9Z"/>
<path class="e" d="M798.2,297.4L795.9,297.4M802,306.6L804.5,306.9M804.5,306.9L798.2,297.4"/>
<path fill="#000076" d="M534,207.3 531.5,216 543.1,210.3 545.5,201.6Z"/>
<path fill="#0000e9" d="M896.1,258.6 892.9,270 900.8,285 904.1,273.6Z"/>
<path fill="#0000ea" stroke="#0000ea" d="M783.8,180.5 781.7,188 794.5,196.7 796.6,189.2Z"/>
<path class="e" d="M783.8,180.5L781.7,188M794.5,196.7L796.6,189.2M796.6,189.2L783.8,180.5"/>
<path fill="#000079" d="M459.8,189.3 456.5,200.6 469.3,190.6 472.5,179.3Z"/>
<path class="kp" d="M545.2,180.2 543,190 533.6,185.5 534.8,180.2Z"/>
<path class="kp" d="M543,190 536.7,197.9 530.2,189.8 533.6,185.5Z"/>
<path class="kp" d="M536.7,197.9 527.6,202.3 525.3,192.2 530.2,189.8Z"/>
<path class="kp" d="M527.6,202.3 517.5,202.3 519.8,192.2 525.3,192.2Z"/>
<path class="kp" d="M517.5,202.3 508.5,197.9 514.9,189.8 519.8,192.2Z"/>
<path class="kp" d="M508.5,197.9 502.2,190 511.5,185.5 514.9,189.8Z"/>
<path class="kp" d="M502.2,190 499.9,180.2 510.3,180.2 511.5,185.5Z"/>
<path class="kp" d="M499.9,180.2 502.2,170.4 511.5,174.9 510.3,180.2Z"/>
<path class="kp" d="M502.2,170.4 508.5,162.5 514.9,170.6 511.5,174.9Z"/>
<path class="kp" d="M508.5,162.5 517.5,158.2 519.8,168.3 514.9,170.6Z"/>
<path class="kp" d="M517.5,158.2 527.6,158.2 525.3,168.3 519.8,168.3Z"/>
<path class="kp" d="M527.6,158.2 536.7,162.5 530.2,170.6 525.3,168.3Z"/>
<path class="kp" d="M536.7,162.5 543,170.4 533.6,174.9 530.2,170.6Z"/>
<path class="kp" d="M543,170.4 545.2,180.2 534.8,180.2 533.6,174.9Z"/>
<path fill="#0000ec" stroke="#0000ec" d="M798.4,245.9 799.9,253.4 809,263.1 807.3,255.3Z"/>
<path class="e" d="M798.4,245.9L799.9,253.4M799.9,253.4L809,263.1M809,263.1L807.3,255.3"/>
<path fill="#000069" stroke="#000069" d="M865.7,312.4 864.5,311.2 869.8,324.4 871.1,325.6Z"/>
<path class="e" d="M865.7,312.4L864.5,311.2M864.5,311.2L869.8,324.4M869.8,324.4L871.1,325.6"/>
<path fill="#000076" d="M496.3,136.5 493.1,147.8 508.8,140 512,128.7Z"/>
<path fill="#000056" d="M535.8,227 547.3,236.1 557.3,231.2 546.8,221.6Z"/>
<path fill="#000075" stroke="#000075" d="M612.1,146.5 613.7,159.8 628.2,158.9 627.4,145.6Z"/>
<path class="e" d="M612.1,146.5L613.7,159.8M628.2,158.9L627.4,145.6"/>
<path fill="#0000ec" d="M823.5,278.1 821.1,286.8 828.3,297.6 830.7,288.9Z"/>
<path fill="#00005c" stroke="#00005c" d="M867.7,312.7 865.7,312.4 871.1,325.6 873.1,326.1Z"/>
<path class="e" d="M867.7,312.7L865.7,312.4M871.1,325.6L873.1,326.1M873.1,326.1L867.7,312.7"/>
<path fill="#0000b2" d="M647.4,130.6 645.3,138.1 661.3,139.1 663.4,131.6Z"/>
<path fill="#000056" d="M459.4,206.2 478.4,217.5 489.7,208.7 471.8,196.5Z"/>
<path fill="#0000aa" stroke="#0000aa" d="M781.7,188 774.3,199 786.4,207.3 794.5,196.7Z"/>
<path class="e" d="M781.7,188L774.3,199M786.4,207.3L794.5,196.7"/>
<path fill="#00008e" stroke="#00008e" d="M613.7,159.8 613,172.4 627.1,171.5 628.2,158.9Z"/>
<path class="e" d="M613.7,159.8L613,172.4M627.1,171.5L628.2,158.9"/>
<path fill="#000056" stroke="#000056" d="M542.5,135.2 550.1,134.6 566,129.9 559.1,130.4Z"/>
<path class="e" d="M542.5,135.2L550.1,134.6M550.1,134.6L566,129.9M566,129.9L559.1,130.4M559.1,130.4L542.5,135.2M542.5,135.2L566,129.9M550.1,134.6L559.1,130.4"/>
<path fill="#000056" stroke="#000056" d="M559.4,232.3 561.2,232 571.7,227.9 570,228.2Z"/>
<path class="e" d="M559.4,232.3L561.2,232M561.2,232L571.7,227.9M571.7,227.9L570,228.2"/>
<path fill="#0000e1" d="M758,157.6 755.9,165.1 770.2,172.4 772.4,165Z"/>
<path fill="#000093" stroke="#000093" d="M599.4,174.2 596.6,184.1 610.2,182.3 613,172.4Z"/>
<path class="e" d="M599.4,174.2L596.6,184.1M610.2,182.3L613,172.4"/>
<path fill="#000056" d="M812,294.6 798.2,297.4 804.5,306.9 818.9,304.9Z"/>
<path fill="#000075" stroke="#000075" d="M531.5,216 531.3,218.8 542.8,213.1 543.1,210.3Z"/>
<path class="e" d="M531.5,216L531.3,218.8M542.8,213.1L543.1,210.3M543.1,210.3L531.5,216"/>
<path fill="#0000a8" stroke="#0000a8" d="M629.6,138.1 627.4,145.6 643.2,145.6 645.3,138.1Z"/>
<path class="e" d="M629.6,138.1L627.4,145.6M643.2,145.6L645.3,138.1M645.3,138.1L629.6,138.1"/>
<path fill="#0000ec" d="M889.5,232.6 886.3,243.9 896.1,258.6 899.3,247.3Z"/>
<path fill="#0000e5" d="M897.6,296.3 894.4,307.6 900.5,322.7 903.7,311.4Z"/>
<path class="k" d="M871.8,249.2 868.6,263.1 866.5,262 869.4,249.2Z"/>
<path class="k" d="M868.6,263.1 859.8,274.2 858.3,272.3 866.5,262Z"/>
<path class="k" d="M859.8,274.2 846.9,280.4 846.4,278 858.3,272.3Z"/>
<path class="k" d="M846.9,280.4 832.7,280.4 833.2,278 846.4,278Z"/>
<path class="k" d="M832.7,280.4 819.9,274.2 821.4,272.3 833.2,278Z"/>
<path class="k" d="M819.9,274.2 811,263.1 813.2,262 821.4,272.3Z"/>
<path class="k" d="M811,263.1 807.8,249.2 810.3,249.2 813.2,262Z"/>
<path class="k" d="M807.8,249.2 811,235.3 813.2,236.4 810.3,249.2Z"/>
<path class="k" d="M811,235.3 819.9,224.2 821.4,226.1 813.2,236.4Z"/>
<path class="k" d="M819.9,224.2 832.7,218 833.2,220.4 821.4,226.1Z"/>
<path class="k" d="M832.7,218 846.9,218 846.4,220.4 833.2,220.4Z"/>
<path class="k" d="M846.9,218 859.8,224.2 858.3,226.1 846.4,220.4Z"/>
<path class="k" d="M859.8,224.2 868.6,235.3 866.5,236.4 858.3,226.1Z"/>
<path class="k" d="M868.6,235.3 871.8,249.2 869.4,249.2 866.5,236.4Z"/>
<path fill="#000075" d="M515.2,117.4 512,128.7 529,122.2 532.3,110.8Z"/>
<path fill="#0000d5" stroke="#0000d5" d="M774.3,199 768.7,210.5 780.4,218.5 786.4,207.3Z"/>
<path class="e" d="M774.3,199L768.7,210.5M780.4,218.5L786.4,207.3"/>
<path class="kp" d="M534.8,180.2 533.6,185.5 522.6,180.2 522.6,180.2Z"/>
<path class="kp" d="M533.6,185.5 530.2,189.8 522.6,180.2 522.6,180.2Z"/>
<path class="kp" d="M530.2,189.8 525.3,192.2 522.6,180.2 522.6,180.2Z"/>
<path class="kp" d="M525.3,192.2 519.8,192.2 522.6,180.2 522.6,180.2Z"/>
<path class="kp" d="M519.8,192.2 514.9,189.8 522.6,180.2 522.6,180.2Z"/>
<path class="kp" d="M514.9,189.8 511.5,185.5 522.6,180.2 522.6,180.2Z"/>
<path class="kp" d="M511.5,185.5 510.3,180.2 522.6,180.2 522.6,180.2Z"/>
<path class="kp" d="M510.3,180.2 511.5,174.9 522.6,180.2 522.6,180.2Z"/>
<path class="kp" d="M511.5,174.9 514.9,170.6 522.6,180.2 522.6,180.2Z"/>
<path class="kp" d="M514.9,170.6 519.8,168.3 522.6,180.2 522.6,180.2Z"/>
<path class="kp" d="M519.8,168.3 525.3,168.3 522.6,180.2 522.6,180.2Z"/>
<path class="kp" d="M525.3,168.3 530.2,170.6 522.6,180.2 522.6,180.2Z"/>
<path class="kp" d="M530.2,170.6 533.6,174.9 522.6,180.2 522.6,180.2Z"/>
<path class="kp" d="M533.6,174.9 534.8,180.2 522.6,180.2 522.6,180.2Z"/>
<path fill="#0000ed" stroke="#0000ed" d="M780.4,218.5 777.6,228.3 788.5,236.9 791.3,227Z"/>
<path class="e" d="M780.4,218.5L777.6,228.3M788.5,236.9L791.3,227"/>
<path fill="#000065" stroke="#000065" d="M788.7,288.4 787.4,287.3 794.5,296.2 795.9,297.4Z"/>
<path class="e" d="M788.7,288.4L787.4,287.3M787.4,287.3L794.5,296.2M794.5,296.2L795.9,297.4"/>
<path fill="#00005b" stroke="#00005b" d="M533.6,224.7 535.8,227 546.8,221.6 544.8,219.2Z"/>
<path class="e" d="M533.6,224.7L535.8,227M535.8,227L546.8,221.6M546.8,221.6L544.8,219.2"/>
<path fill="#000056" stroke="#000056" d="M557.3,231.2 559.4,232.3 570,228.2 568.2,227Z"/>
<path class="e" d="M557.3,231.2L559.4,232.3M570,228.2L568.2,227M568.2,227L557.3,231.2"/>
<path fill="#000070" stroke="#000070" d="M531.3,218.8 532,221.8 543.4,216.2 542.8,213.1Z"/>
<path class="e" d="M531.3,218.8L532,221.8M543.4,216.2L542.8,213.1"/>
<path fill="#0000e6" stroke="#0000e6" d="M770.2,172.4 768.1,179.9 781.7,188 783.8,180.5Z"/>
<path class="e" d="M770.2,172.4L768.1,179.9M781.7,188L783.8,180.5M783.8,180.5L770.2,172.4"/>
<path fill="#000078" d="M475.7,168 472.5,179.3 486.7,170.4 489.9,159.1Z"/>
<path fill="#0000bb" d="M663.4,131.6 661.3,139.1 677.5,141.1 679.6,133.6Z"/>
<path fill="#000077" stroke="#000077" d="M456.5,200.6 456.6,202.6 469.2,192.7 469.3,190.6Z"/>
<path class="e" d="M456.5,200.6L456.6,202.6M469.2,192.7L469.3,190.6M469.3,190.6L456.5,200.6"/>
<path fill="#000062" stroke="#000062" d="M848.1,209.9 842.6,206 854,218.2 860,222.5Z"/>
<path class="e" d="M848.1,209.9L842.6,206M842.6,206L854,218.2M854,218.2L860,222.5M860,222.5L848.1,209.9M848.1,209.9L854,218.2M842.6,206L860,222.5"/>
<path fill="#000067" stroke="#000067" d="M532,221.8 533.6,224.7 544.8,219.2 543.4,216.2Z"/>
<path class="e" d="M532,221.8L533.6,224.7M544.8,219.2L543.4,216.2"/>
<path fill="#00008e" stroke="#00008e" d="M583.7,186.8 578.4,192.4 591.8,189.6 596.6,184.1Z"/>
<path class="e" d="M583.7,186.8L578.4,192.4M578.4,192.4L591.8,189.6M591.8,189.6L596.6,184.1"/>
<path fill="#0000db" d="M743.1,151.1 740.9,158.5 755.9,165.1 758,157.6Z"/>
<path fill="#000056" d="M889.2,311.3 867.7,312.7 873.1,326.1 895.2,326.1Z"/>
<path fill="#0000e5" stroke="#0000e5" d="M821.1,286.8 819.8,289.3 827,300.1 828.3,297.6Z"/>
<path class="e" d="M821.1,286.8L819.8,289.3M827,300.1L828.3,297.6M828.3,297.6L821.1,286.8"/>
<path fill="#00006d" stroke="#00006d" d="M456.6,202.6 457.6,204.6 470.2,194.8 469.2,192.7Z"/>
<path class="e" d="M456.6,202.6L457.6,204.6M470.2,194.8L469.2,192.7"/>
<path fill="#00005d" stroke="#00005d" d="M457.6,204.6 459.4,206.2 471.8,196.5 470.2,194.8Z"/>
<path class="e" d="M457.6,204.6L459.4,206.2M459.4,206.2L471.8,196.5M471.8,196.5L470.2,194.8"/>
<path fill="#00007c" stroke="#00007c" d="M627.4,145.6 628.2,158.9 643.1,158.9 643.2,145.6Z"/>
<path class="e" d="M627.4,145.6L628.2,158.9M643.1,158.9L643.2,145.6"/>
<path fill="#00007c" d="M535.5,99.5 532.3,110.8 550.4,105.5 553.6,94.2Z"/>
<path fill="#00005a" stroke="#00005a" d="M790.9,288.2 788.7,288.4 795.9,297.4 798.2,297.4Z"/>
<path class="e" d="M790.9,288.2L788.7,288.4M795.9,297.4L798.2,297.4M798.2,297.4L790.9,288.2"/>
<path fill="#0000ee" d="M881.2,206.8 878,218.2 889.5,232.6 892.7,221.2Z"/>
<path fill="#00005d" stroke="#00005d" d="M814.9,293.5 812,294.6 818.9,304.9 821.9,304.1Z"/>
<path class="e" d="M814.9,293.5L812,294.6M812,294.6L818.9,304.9M818.9,304.9L821.9,304.1"/>
<path fill="#0000c6" stroke="#0000c6" d="M819.8,289.3 817.7,291.6 824.8,302.4 827,300.1Z"/>
<path class="e" d="M819.8,289.3L817.7,291.6M824.8,302.4L827,300.1"/>
<path fill="#0000a7" stroke="#0000a7" d="M768.1,179.9 761.4,191.4 774.3,199 781.7,188Z"/>
<path class="e" d="M768.1,179.9L761.4,191.4M774.3,199L781.7,188"/>
<path fill="#0000eb" stroke="#0000eb" d="M788.5,236.9 789.7,244.1 799.9,253.4 798.4,245.9Z"/>
<path class="e" d="M788.5,236.9L789.7,244.1M789.7,244.1L799.9,253.4M799.9,253.4L798.4,245.9"/>
<path fill="#0000c3" d="M679.6,133.6 677.5,141.1 693.6,144.1 695.7,136.6Z"/>
<path fill="#000098" stroke="#000098" d="M628.2,158.9 627.1,171.5 641.5,171.5 643.1,158.9Z"/>
<path class="e" d="M628.2,158.9L627.1,171.5M641.5,171.5L643.1,158.9"/>
<path fill="#000097" stroke="#000097" d="M817.7,291.6 814.9,293.5 821.9,304.1 824.8,302.4Z"/>
<path class="e" d="M817.7,291.6L814.9,293.5M821.9,304.1L824.8,302.4"/>
<path fill="#0000d5" d="M727.6,145.3 725.5,152.8 740.9,158.5 743.1,151.1Z"/>
<path fill="#0000b2" stroke="#0000b2" d="M645.3,138.1 643.2,145.6 659.2,146.6 661.3,139.1Z"/>
<path class="e" d="M645.3,138.1L643.2,145.6M659.2,146.6L661.3,139.1M661.3,139.1L645.3,138.1"/>
<path fill="#000075" d="M545.5,201.6 543.1,210.3 555.6,205.5 558.1,196.8Z"/>
<path fill="#0000ca" d="M695.7,136.6 693.6,144.1 709.7,148 711.8,140.5Z"/>
<path fill="#0000e9" d="M892.9,270 889.7,281.3 897.6,296.3 900.8,285Z"/>
<path fill="#00009e" stroke="#00009e" d="M613,172.4 610.2,182.3 624.3,181.4 627.1,171.5Z"/>
<path class="e" d="M613,172.4L610.2,182.3M624.3,181.4L627.1,171.5"/>
<path fill="#0000d1" stroke="#0000d1" d="M761.4,191.4 756.2,203.1 768.7,210.5 774.3,199Z"/>
<path class="e" d="M761.4,191.4L756.2,203.1M768.7,210.5L774.3,199"/>
<path fill="#0000d0" d="M711.8,140.5 709.7,148 725.5,152.8 727.6,145.3Z"/>
<path fill="#0000da" stroke="#0000da" d="M894.4,307.6 893.4,309.3 899.5,324.4 900.5,322.7Z"/>
<path class="e" d="M894.4,307.6L893.4,309.3M899.5,324.4L900.5,322.7M900.5,322.7L894.4,307.6"/>
<path fill="#0000e1" stroke="#0000e1" d="M755.9,165.1 753.8,172.6 768.1,179.9 770.2,172.4Z"/>
<path class="e" d="M755.9,165.1L753.8,172.6M768.1,179.9L770.2,172.4M770.2,172.4L755.9,165.1"/>
<path fill="#0000ef" d="M871.3,181.6 868.1,192.9 881.2,206.8 884.5,195.5Z"/>
<path fill="#000056" d="M546.8,221.6 557.3,231.2 568.2,227 558.8,217Z"/>
<path fill="#000076" d="M493.1,147.8 489.9,159.1 505.6,151.4 508.8,140Z"/>
<path fill="#00005c" stroke="#00005c" d="M491.6,209.4 493.3,209.1 505.7,201.3 504.2,201.6Z"/>
<path class="e" d="M491.6,209.4L493.3,209.1M493.3,209.1L505.7,201.3M505.7,201.3L504.2,201.6"/>
<path fill="#0000ab" stroke="#0000ab" d="M893.4,309.3 891.5,310.7 897.5,325.7 899.5,324.4Z"/>
<path class="e" d="M893.4,309.3L891.5,310.7M897.5,325.7L899.5,324.4"/>
<path fill="#000065" stroke="#000065" d="M891.5,310.7 889.2,311.3 895.2,326.1 897.5,325.7Z"/>
<path class="e" d="M891.5,310.7L889.2,311.3M889.2,311.3L895.2,326.1M895.2,326.1L897.5,325.7"/>
<path fill="#0000ea" stroke="#0000ea" d="M768.7,210.5 765.9,220.3 777.6,228.3 780.4,218.5Z"/>
<path class="e" d="M768.7,210.5L765.9,220.3M777.6,228.3L780.4,218.5"/>
<path fill="#000056" stroke="#000056" d="M570,228.2 571.7,227.9 583,224.7 581.4,224.9Z"/>
<path class="e" d="M570,228.2L571.7,227.9M571.7,227.9L583,224.7M583,224.7L581.4,224.9"/>
<path fill="#000082" stroke="#000082" d="M643.2,145.6 643.1,158.9 658.3,159.8 659.2,146.6Z"/>
<path class="e" d="M643.2,145.6L643.1,158.9M658.3,159.8L659.2,146.6"/>
<path fill="#0000ee" d="M815.1,267.5 812.6,276.2 821.1,286.8 823.5,278.1Z"/>
<path fill="#000056" stroke="#000056" d="M489.7,208.7 491.6,209.4 504.2,201.6 502.4,200.8Z"/>
<path class="e" d="M489.7,208.7L491.6,209.4M504.2,201.6L502.4,200.8M502.4,200.8L489.7,208.7"/>
<path fill="#0000bb" stroke="#0000bb" d="M661.3,139.1 659.2,146.6 675.3,148.6 677.5,141.1Z"/>
<path class="e" d="M661.3,139.1L659.2,146.6M675.3,148.6L677.5,141.1M677.5,141.1L661.3,139.1"/>
<path fill="#0000a4" stroke="#0000a4" d="M753.8,172.6 747.8,184.5 761.4,191.4 768.1,179.9Z"/>
<path class="e" d="M753.8,172.6L747.8,184.5M761.4,191.4L768.1,179.9"/>
<path fill="#000056" d="M803.9,284.4 790.9,288.2 798.2,297.4 812,294.6Z"/>
<path fill="#0000a0" stroke="#0000a0" d="M643.1,158.9 641.5,171.5 656.2,172.4 658.3,159.8Z"/>
<path class="e" d="M643.1,158.9L641.5,171.5M656.2,172.4L658.3,159.8"/>
<path fill="#000063" stroke="#000063" d="M780.5,279.6 779.3,278.7 787.4,287.3 788.7,288.4Z"/>
<path class="e" d="M780.5,279.6L779.3,278.7M779.3,278.7L787.4,287.3M787.4,287.3L788.7,288.4"/>
<path fill="#0000db" stroke="#0000db" d="M740.9,158.5 738.8,166 753.8,172.6 755.9,165.1Z"/>
<path class="e" d="M740.9,158.5L738.8,166M753.8,172.6L755.9,165.1M755.9,165.1L740.9,158.5"/>
<path fill="#000098" stroke="#000098" d="M596.6,184.1 591.8,189.6 605.8,187.8 610.2,182.3Z"/>
<path class="e" d="M596.6,184.1L591.8,189.6M591.8,189.6L605.8,187.8M605.8,187.8L610.2,182.3"/>
<path fill="#000056" stroke="#000056" d="M568.2,227 570,228.2 581.4,224.9 579.8,223.6Z"/>
<path class="e" d="M568.2,227L570,228.2M581.4,224.9L579.8,223.6M579.8,223.6L568.2,227"/>
<path fill="#000056" stroke="#000056" d="M559.1,130.4 566,129.9 582.7,126.5 576.6,126.7Z"/>
<path class="e" d="M559.1,130.4L566,129.9M566,129.9L582.7,126.5M582.7,126.5L576.6,126.7M576.6,126.7L559.1,130.4M559.1,130.4L582.7,126.5M566,129.9L576.6,126.7"/>
<path fill="#0000cc" stroke="#0000cc" d="M747.8,184.5 743.1,196.3 756.2,203.1 761.4,191.4Z"/>
<path class="e" d="M747.8,184.5L743.1,196.3M756.2,203.1L761.4,191.4"/>
<path fill="#000068" stroke="#000068" d="M858.7,299.2 857.6,298.1 864.5,311.2 865.7,312.4Z"/>
<path class="e" d="M858.7,299.2L857.6,298.1M857.6,298.1L864.5,311.2M864.5,311.2L865.7,312.4"/>
<path fill="#0000ec" d="M886.3,243.9 883.1,255.2 892.9,270 896.1,258.6Z"/>
<path fill="#000074" stroke="#000074" d="M543.1,210.3 542.8,213.1 555.3,208.3 555.6,205.5Z"/>
<path class="e" d="M543.1,210.3L542.8,213.1M555.3,208.3L555.6,205.5M555.6,205.5L543.1,210.3"/>
<path fill="#000075" d="M512,128.7 508.8,140 525.8,133.5 529,122.2Z"/>
<path fill="#0000a8" stroke="#0000a8" d="M627.1,171.5 624.3,181.4 638.7,181.4 641.5,171.5Z"/>
<path class="e" d="M627.1,171.5L624.3,181.4M638.7,181.4L641.5,171.5"/>
<path fill="#0000c3" stroke="#0000c3" d="M677.5,141.1 675.3,148.6 691.5,151.5 693.6,144.1Z"/>
<path class="e" d="M677.5,141.1L675.3,148.6M691.5,151.5L693.6,144.1M693.6,144.1L677.5,141.1"/>
<path fill="#000088" stroke="#000088" d="M659.2,146.6 658.3,159.8 673.6,161.7 675.3,148.6Z"/>
<path class="e" d="M659.2,146.6L658.3,159.8M673.6,161.7L675.3,148.6"/>
<path fill="#0000ea" stroke="#0000ea" d="M777.6,228.3 778.5,235.3 789.7,244.1 788.5,236.9Z"/>
<path class="e" d="M777.6,228.3L778.5,235.3M778.5,235.3L789.7,244.1M789.7,244.1L788.5,236.9"/>
<path fill="#00005a" stroke="#00005a" d="M544.8,219.2 546.8,221.6 558.8,217 557,214.5Z"/>
<path class="e" d="M544.8,219.2L546.8,221.6M546.8,221.6L558.8,217M558.8,217L557,214.5"/>
<path fill="#0000d5" stroke="#0000d5" d="M725.5,152.8 723.4,160.3 738.8,166 740.9,158.5Z"/>
<path class="e" d="M725.5,152.8L723.4,160.3M738.8,166L740.9,158.5M740.9,158.5L725.5,152.8"/>
<path fill="#00005a" stroke="#00005a" d="M782.5,279.4 780.5,279.6 788.7,288.4 790.9,288.2Z"/>
<path class="e" d="M782.5,279.4L780.5,279.6M788.7,288.4L790.9,288.2M790.9,288.2L782.5,279.4"/>
<path fill="#00005b" stroke="#00005b" d="M860.6,299.3 858.7,299.2 865.7,312.4 867.7,312.7Z"/>
<path class="e" d="M860.6,299.3L858.7,299.2M865.7,312.4L867.7,312.7M867.7,312.7L860.6,299.3"/>
<path fill="#00006f" stroke="#00006f" d="M542.8,213.1 543.4,216.2 555.8,211.4 555.3,208.3Z"/>
<path class="e" d="M542.8,213.1L543.4,216.2M555.8,211.4L555.3,208.3"/>
<path fill="#00009f" stroke="#00009f" d="M738.8,166 733.7,178.2 747.8,184.5 753.8,172.6Z"/>
<path class="e" d="M738.8,166L733.7,178.2M747.8,184.5L753.8,172.6"/>
<path fill="#000078" d="M472.5,179.3 469.3,190.6 483.5,181.8 486.7,170.4Z"/>
<path fill="#000066" stroke="#000066" d="M543.4,216.2 544.8,219.2 557,214.5 555.8,211.4Z"/>
<path class="e" d="M543.4,216.2L544.8,219.2M557,214.5L555.8,211.4"/>
<path class="k" d="M869.4,249.2 866.5,262 860.2,259 862.4,249.2Z"/>
<path class="k" d="M866.5,262 858.3,272.3 853.9,266.9 860.2,259Z"/>
<path class="k" d="M858.3,272.3 846.4,278 844.9,271.3 853.9,266.9Z"/>
<path class="k" d="M846.4,278 833.2,278 834.8,271.3 844.9,271.3Z"/>
<path class="k" d="M833.2,278 821.4,272.3 825.7,266.9 834.8,271.3Z"/>
<path class="k" d="M821.4,272.3 813.2,262 819.4,259 825.7,266.9Z"/>
<path class="k" d="M813.2,262 810.3,249.2 817.2,249.2 819.4,259Z"/>
<path class="k" d="M810.3,249.2 813.2,236.4 819.4,239.4 817.2,249.2Z"/>
<path class="k" d="M813.2,236.4 821.4,226.1 825.7,231.5 819.4,239.4Z"/>
<path class="k" d="M821.4,226.1 833.2,220.4 834.8,227.1 825.7,231.5Z"/>
<path class="k" d="M833.2,220.4 846.4,220.4 844.9,227.1 834.8,227.1Z"/>
<path class="k" d="M846.4,220.4 858.3,226.1 853.9,231.5 844.9,227.1Z"/>
<path class="k" d="M858.3,226.1 866.5,236.4 860.2,239.4 853.9,231.5Z"/>
<path class="k" d="M866.5,236.4 869.4,249.2 862.4,249.2 860.2,239.4Z"/>
<path fill="#000060" stroke="#000060" d="M834.8,197.8 829.8,194.4 842.6,206 848.1,209.9Z"/>
<path class="e" d="M834.8,197.8L829.8,194.4M829.8,194.4L842.6,206M842.6,206L848.1,209.9M848.1,209.9L834.8,197.8M834.8,197.8L842.6,206M829.8,194.4L848.1,209.9"/>
<path fill="#0000e6" stroke="#0000e6" d="M756.2,203.1 753.4,212.9 765.9,220.3 768.7,210.5Z"/>
<path class="e" d="M756.2,203.1L753.4,212.9M765.9,220.3L768.7,210.5"/>
<path fill="#0000a8" stroke="#0000a8" d="M658.3,159.8 656.2,172.4 671.1,174.3 673.6,161.7Z"/>
<path class="e" d="M658.3,159.8L656.2,172.4M671.1,174.3L673.6,161.7"/>
<path fill="#0000ca" stroke="#0000ca" d="M693.6,144.1 691.5,151.5 707.6,155.5 709.7,148Z"/>
<path class="e" d="M693.6,144.1L691.5,151.5M707.6,155.5L709.7,148M709.7,148L693.6,144.1"/>
<path fill="#0000d0" stroke="#0000d0" d="M709.7,148 707.6,155.5 723.4,160.3 725.5,152.8Z"/>
<path class="e" d="M709.7,148L707.6,155.5M723.4,160.3L725.5,152.8M725.5,152.8L709.7,148"/>
<path fill="#0000e7" stroke="#0000e7" d="M812.6,276.2 811.4,278.7 819.8,289.3 821.1,286.8Z"/>
<path class="e" d="M812.6,276.2L811.4,278.7M819.8,289.3L821.1,286.8M821.1,286.8L812.6,276.2"/>
<path fill="#0000c7" stroke="#0000c7" d="M733.7,178.2 729.3,190.3 743.1,196.3 747.8,184.5Z"/>
<path class="e" d="M733.7,178.2L729.3,190.3M743.1,196.3L747.8,184.5"/>
<path fill="#00007c" d="M532.3,110.8 529,122.2 547.2,116.9 550.4,105.5Z"/>
<path fill="#00008e" stroke="#00008e" d="M675.3,148.6 673.6,161.7 688.9,164.5 691.5,151.5Z"/>
<path class="e" d="M675.3,148.6L673.6,161.7M688.9,164.5L691.5,151.5"/>
<path fill="#000056" d="M471.8,196.5 489.7,208.7 502.4,200.8 485.8,187.7Z"/>
<path fill="#00005d" stroke="#00005d" d="M806.7,283.2 803.9,284.4 812,294.6 814.9,293.5Z"/>
<path class="e" d="M806.7,283.2L803.9,284.4M803.9,284.4L812,294.6M812,294.6L814.9,293.5"/>
<path fill="#00009a" stroke="#00009a" d="M723.4,160.3 719,172.8 733.7,178.2 738.8,166Z"/>
<path class="e" d="M723.4,160.3L719,172.8M733.7,178.2L738.8,166"/>
<path fill="#0000ee" d="M878,218.2 874.8,229.5 886.3,243.9 889.5,232.6Z"/>
<path fill="#0000c8" stroke="#0000c8" d="M811.4,278.7 809.3,281.2 817.7,291.6 819.8,289.3Z"/>
<path class="e" d="M811.4,278.7L809.3,281.2M817.7,291.6L819.8,289.3"/>
<path fill="#000098" stroke="#000098" d="M809.3,281.2 806.7,283.2 814.9,293.5 817.7,291.6Z"/>
<path class="e" d="M809.3,281.2L806.7,283.2M814.9,293.5L817.7,291.6"/>
<path fill="#0000b0" stroke="#0000b0" d="M673.6,161.7 671.1,174.3 685.9,177 688.9,164.5Z"/>
<path class="e" d="M673.6,161.7L671.1,174.3M685.9,177L688.9,164.5"/>
<path fill="#000056" stroke="#000056" d="M581.4,224.9 583,224.7 594.8,222.2 593.5,222.4Z"/>
<path class="e" d="M581.4,224.9L583,224.7M583,224.7L594.8,222.2M594.8,222.2L593.5,222.4"/>
<path fill="#000093" stroke="#000093" d="M691.5,151.5 688.9,164.5 704.1,168.2 707.6,155.5Z"/>
<path class="e" d="M691.5,151.5L688.9,164.5M704.1,168.2L707.6,155.5"/>
<path fill="#000097" stroke="#000097" d="M707.6,155.5 704.1,168.2 719,172.8 723.4,160.3Z"/>
<path class="e" d="M707.6,155.5L704.1,168.2M719,172.8L723.4,160.3"/>
<path fill="#0000c1" stroke="#0000c1" d="M719,172.8 715.2,185 729.3,190.3 733.7,178.2Z"/>
<path class="e" d="M719,172.8L715.2,185M729.3,190.3L733.7,178.2"/>
<path fill="#00007c" d="M558.1,196.8 555.6,205.5 569,201.5 571.5,192.9Z"/>
<path fill="#000088" d="M553.6,94.2 550.4,105.5 569.7,101.5 572.9,90.2Z"/>
<path fill="#000056" d="M558.8,217 568.2,227 579.8,223.6 571.6,213.3Z"/>
<path fill="#0000b2" stroke="#0000b2" d="M641.5,171.5 638.7,181.4 653.4,182.3 656.2,172.4Z"/>
<path class="e" d="M641.5,171.5L638.7,181.4M653.4,182.3L656.2,172.4"/>
<path fill="#0000e9" d="M889.7,281.3 886.5,292.6 894.4,307.6 897.6,296.3Z"/>
<path fill="#0000b6" stroke="#0000b6" d="M688.9,164.5 685.9,177 700.6,180.6 704.1,168.2Z"/>
<path class="e" d="M688.9,164.5L685.9,177M700.6,180.6L704.1,168.2"/>
<path fill="#0000a2" stroke="#0000a2" d="M610.2,182.3 605.8,187.8 620.3,186.8 624.3,181.4Z"/>
<path class="e" d="M610.2,182.3L605.8,187.8M605.8,187.8L620.3,186.8M620.3,186.8L624.3,181.4"/>
<path fill="#0000bc" stroke="#0000bc" d="M704.1,168.2 700.6,180.6 715.2,185 719,172.8Z"/>
<path class="e" d="M704.1,168.2L700.6,180.6M715.2,185L719,172.8"/>
<path fill="#0000e1" stroke="#0000e1" d="M743.1,196.3 740.3,206.2 753.4,212.9 756.2,203.1Z"/>
<path class="e" d="M743.1,196.3L740.3,206.2M753.4,212.9L756.2,203.1"/>
<path fill="#000061" stroke="#000061" d="M771.3,271.3 770.3,270.4 779.3,278.7 780.5,279.6Z"/>
<path class="e" d="M771.3,271.3L770.3,270.4M770.3,270.4L779.3,278.7M779.3,278.7L780.5,279.6"/>
<path fill="#0000ef" d="M868.1,192.9 864.9,204.3 878,218.2 881.2,206.8Z"/>
<path fill="#000076" d="M489.9,159.1 486.7,170.4 502.4,162.7 505.6,151.4Z"/>
<path fill="#000056" stroke="#000056" d="M579.8,223.6 581.4,224.9 593.5,222.4 592.1,221Z"/>
<path class="e" d="M579.8,223.6L581.4,224.9M593.5,222.4L592.1,221M592.1,221L579.8,223.6"/>
<path fill="#000056" d="M881.4,296.6 860.6,299.3 867.7,312.7 889.2,311.3Z"/>
<path fill="#000056" d="M794.7,274.7 782.5,279.4 790.9,288.2 803.9,284.4Z"/>
<path fill="#0000ef" d="M805.4,257.2 802.9,265.9 812.6,276.2 815.1,267.5Z"/>
<path fill="#0000e7" stroke="#0000e7" d="M765.9,220.3 766.4,227 778.5,235.3 777.6,228.3Z"/>
<path class="e" d="M765.9,220.3L766.4,227M766.4,227L778.5,235.3M778.5,235.3L777.6,228.3"/>
<path fill="#000076" stroke="#000076" d="M469.3,190.6 469.2,192.7 483.5,183.8 483.5,181.8Z"/>
<path class="e" d="M469.3,190.6L469.2,192.7M483.5,183.8L483.5,181.8M483.5,181.8L469.3,190.6"/>
<path fill="#0000ef" d="M856.7,168.3 853.5,179.6 868.1,192.9 871.3,181.6Z"/>
<path fill="#00005d" stroke="#00005d" d="M470.2,194.8 471.8,196.5 485.8,187.7 484.3,186Z"/>
<path class="e" d="M470.2,194.8L471.8,196.5M471.8,196.5L485.8,187.7M485.8,187.7L484.3,186"/>
<path fill="#00006d" stroke="#00006d" d="M469.2,192.7 470.2,194.8 484.3,186 483.5,183.8Z"/>
<path class="e" d="M469.2,192.7L470.2,194.8M484.3,186L483.5,183.8"/>
<path fill="#0000bb" stroke="#0000bb" d="M656.2,172.4 653.4,182.3 668.3,184.1 671.1,174.3Z"/>
<path class="e" d="M656.2,172.4L653.4,182.3M668.3,184.1L671.1,174.3"/>
<path fill="#000059" stroke="#000059" d="M773.2,270.9 771.3,271.3 780.5,279.6 782.5,279.4Z"/>
<path class="e" d="M773.2,270.9L771.3,271.3M780.5,279.6L782.5,279.4M782.5,279.4L773.2,270.9"/>
<path fill="#000056" stroke="#000056" d="M576.6,126.7 582.7,126.5 600.2,124.1 594.8,124.3Z"/>
<path class="e" d="M576.6,126.7L582.7,126.5M582.7,126.5L600.2,124.1M600.2,124.1L594.8,124.3M594.8,124.3L576.6,126.7M576.6,126.7L600.2,124.1M582.7,126.5L594.8,124.3"/>
<path fill="#0000db" stroke="#0000db" d="M729.3,190.3 726.5,200.2 740.3,206.2 743.1,196.3Z"/>
<path class="e" d="M729.3,190.3L726.5,200.2M740.3,206.2L743.1,196.3"/>
<path fill="#000056" stroke="#000056" d="M504.2,201.6 505.7,201.3 519.5,194.6 518,194.8Z"/>
<path class="e" d="M504.2,201.6L505.7,201.3M505.7,201.3L519.5,194.6M519.5,194.6L518,194.8"/>
<path fill="#000077" stroke="#000077" d="M555.6,205.5 555.3,208.3 568.6,204.4 569,201.5Z"/>
<path class="e" d="M555.6,205.5L555.3,208.3M568.6,204.4L569,201.5M569,201.5L555.6,205.5"/>
<path fill="#0000ec" d="M883.1,255.2 879.9,266.5 889.7,281.3 892.9,270Z"/>
<path fill="#00005a" stroke="#00005a" d="M557,214.5 558.8,217 571.6,213.3 570,210.7Z"/>
<path class="e" d="M557,214.5L558.8,217M558.8,217L571.6,213.3M571.6,213.3L570,210.7"/>
<path fill="#000075" d="M508.8,140 505.6,151.4 522.6,144.8 525.8,133.5Z"/>
<path fill="#0000c3" stroke="#0000c3" d="M671.1,174.3 668.3,184.1 683.1,186.9 685.9,177Z"/>
<path class="e" d="M671.1,174.3L668.3,184.1M683.1,186.9L685.9,177"/>
<path class="kp" d="M862.4,249.2 860.2,259 850.9,254.5 852.1,249.2Z"/>
<path class="kp" d="M860.2,259 853.9,266.9 847.5,258.8 850.9,254.5Z"/>
<path class="kp" d="M853.9,266.9 844.9,271.3 842.5,261.1 847.5,258.8Z"/>
<path class="kp" d="M844.9,271.3 834.8,271.3 837.1,261.1 842.5,261.1Z"/>
<path class="kp" d="M834.8,271.3 825.7,266.9 832.2,258.8 837.1,261.1Z"/>
<path class="kp" d="M825.7,266.9 819.4,259 828.8,254.5 832.2,258.8Z"/>
<path class="kp" d="M819.4,259 817.2,249.2 827.6,249.2 828.8,254.5Z"/>
<path class="kp" d="M817.2,249.2 819.4,239.4 828.8,243.9 827.6,249.2Z"/>
<path class="kp" d="M819.4,239.4 825.7,231.5 832.2,239.6 828.8,243.9Z"/>
<path class="kp" d="M825.7,231.5 834.8,227.1 837.1,237.3 832.2,239.6Z"/>
<path class="kp" d="M834.8,227.1 844.9,227.1 842.5,237.3 837.1,237.3Z"/>
<path class="kp" d="M844.9,227.1 853.9,231.5 847.5,239.6 842.5,237.3Z"/>
<path class="kp" d="M853.9,231.5 860.2,239.4 850.9,243.9 847.5,239.6Z"/>
<path class="kp" d="M860.2,239.4 862.4,249.2 852.1,249.2 850.9,243.9Z"/>
<path fill="#00006d" stroke="#00006d" d="M555.3,208.3 555.8,211.4 569,207.6 568.6,204.4Z"/>
<path class="e" d="M555.3,208.3L555.8,211.4M569,207.6L568.6,204.4"/>
<path fill="#000056" stroke="#000056" d="M593.5,222.4 594.8,222.2 607.3,220.5 606.1,220.7Z"/>
<path class="e" d="M593.5,222.4L594.8,222.2M594.8,222.2L607.3,220.5M607.3,220.5L606.1,220.7"/>
<path fill="#00005e" d="M820.1,186.3 815.8,183.4 829.8,194.4 834.8,197.8Z"/>
<path fill="#0000d5" stroke="#0000d5" d="M715.2,185 712.4,194.9 726.5,200.2 729.3,190.3Z"/>
<path class="e" d="M715.2,185L712.4,194.9M726.5,200.2L729.3,190.3"/>
<path fill="#0000ab" stroke="#0000ab" d="M624.3,181.4 620.3,186.8 635.2,186.8 638.7,181.4Z"/>
<path class="e" d="M624.3,181.4L620.3,186.8M635.2,186.8L638.7,181.4"/>
<path fill="#000065" stroke="#000065" d="M555.8,211.4 557,214.5 570,210.7 569,207.6Z"/>
<path class="e" d="M555.8,211.4L557,214.5M570,210.7L569,207.6"/>
<path fill="#0000de" stroke="#0000de" d="M886.5,292.6 885.4,294.4 893.4,309.3 894.4,307.6Z"/>
<path class="e" d="M886.5,292.6L885.4,294.4M893.4,309.3L894.4,307.6M894.4,307.6L886.5,292.6"/>
<path fill="#000056" stroke="#000056" d="M502.4,200.8 504.2,201.6 518,194.8 516.4,193.9Z"/>
<path class="e" d="M502.4,200.8L504.2,201.6M518,194.8L516.4,193.9M516.4,193.9L502.4,200.8"/>
<path fill="#0000ca" stroke="#0000ca" d="M685.9,177 683.1,186.9 697.8,190.5 700.6,180.6Z"/>
<path class="e" d="M685.9,177L683.1,186.9M697.8,190.5L700.6,180.6"/>
<path fill="#0000e8" stroke="#0000e8" d="M802.9,265.9 801.8,268.5 811.4,278.7 812.6,276.2Z"/>
<path class="e" d="M802.9,265.9L801.8,268.5M811.4,278.7L812.6,276.2M812.6,276.2L802.9,265.9"/>
<path fill="#000066" stroke="#000066" d="M883.6,295.8 881.4,296.6 889.2,311.3 891.5,310.7Z"/>
<path class="e" d="M883.6,295.8L881.4,296.6M881.4,296.6L889.2,311.3M889.2,311.3L891.5,310.7"/>
<path fill="#0000ae" stroke="#0000ae" d="M885.4,294.4 883.6,295.8 891.5,310.7 893.4,309.3Z"/>
<path class="e" d="M885.4,294.4L883.6,295.8M891.5,310.7L893.4,309.3"/>
<path fill="#0000d0" stroke="#0000d0" d="M700.6,180.6 697.8,190.5 712.4,194.9 715.2,185Z"/>
<path class="e" d="M700.6,180.6L697.8,190.5M712.4,194.9L715.2,185"/>
<path fill="#0000e3" stroke="#0000e3" d="M753.4,212.9 753.5,219.4 766.4,227 765.9,220.3Z"/>
<path class="e" d="M753.4,212.9L753.5,219.4M766.4,227L765.9,220.3"/>
<path fill="#00005e" stroke="#00005e" d="M797.3,273.2 794.7,274.7 803.9,284.4 806.7,283.2Z"/>
<path class="e" d="M797.3,273.2L794.7,274.7M794.7,274.7L803.9,284.4M803.9,284.4L806.7,283.2"/>
<path fill="#000066" stroke="#000066" d="M850.1,286.2 849,285.2 857.6,298.1 858.7,299.2Z"/>
<path class="e" d="M850.1,286.2L849,285.2M849,285.2L857.6,298.1M857.6,298.1L858.7,299.2"/>
<path fill="#000056" d="M571.6,213.3 579.8,223.6 592.1,221 585.1,210.5Z"/>
<path fill="#0000c9" stroke="#0000c9" d="M801.8,268.5 799.8,271.1 809.3,281.2 811.4,278.7Z"/>
<path class="e" d="M801.8,268.5L799.8,271.1M809.3,281.2L811.4,278.7"/>
<path fill="#00007c" d="M529,122.2 525.8,133.5 544,128.2 547.2,116.9Z"/>
<path fill="#000098" stroke="#000098" d="M799.8,271.1 797.3,273.2 806.7,283.2 809.3,281.2Z"/>
<path class="e" d="M799.8,271.1L797.3,273.2M806.7,283.2L809.3,281.2"/>
<path fill="#000056" stroke="#000056" d="M592.1,221 593.5,222.4 606.1,220.7 604.9,219.3Z"/>
<path class="e" d="M592.1,221L593.5,222.4M606.1,220.7L604.9,219.3M604.9,219.3L592.1,221"/>
<path fill="#000088" d="M571.5,192.9 569,201.5 583.1,198.6 585.6,189.9Z"/>
<path fill="#0000ee" d="M874.8,229.5 871.6,240.8 883.1,255.2 886.3,243.9Z"/>
<path fill="#00005b" stroke="#00005b" d="M852,286.2 850.1,286.2 858.7,299.2 860.6,299.3Z"/>
<path class="e" d="M852,286.2L850.1,286.2M858.7,299.2L860.6,299.3M860.6,299.3L852,286.2"/>
<path fill="#000056" d="M784.4,265.3 773.2,270.9 782.5,279.4 794.7,274.7Z"/>
<path fill="#000088" d="M550.4,105.5 547.2,116.9 566.5,112.8 569.7,101.5Z"/>
<path fill="#000058" d="M762.9,262.8 761.3,263.4 771.3,271.3 773.2,270.9Z"/>
<path fill="#000093" d="M572.9,90.2 569.7,101.5 589.8,98.8 593,87.5Z"/>
<path fill="#0000b4" stroke="#0000b4" d="M638.7,181.4 635.2,186.8 650.3,187.8 653.4,182.3Z"/>
<path class="e" d="M638.7,181.4L635.2,186.8M650.3,187.8L653.4,182.3"/>
<path class="kp" d="M852.1,249.2 850.9,254.5 839.8,249.2 839.8,249.2Z"/>
<path class="kp" d="M850.9,254.5 847.5,258.8 839.8,249.2 839.8,249.2Z"/>
<path class="kp" d="M847.5,258.8 842.5,261.1 839.8,249.2 839.8,249.2Z"/>
<path class="kp" d="M842.5,261.1 837.1,261.1 839.8,249.2 839.8,249.2Z"/>
<path class="kp" d="M837.1,261.1 832.2,258.8 839.8,249.2 839.8,249.2Z"/>
<path class="kp" d="M832.2,258.8 828.8,254.5 839.8,249.2 839.8,249.2Z"/>
<path class="kp" d="M828.8,254.5 827.6,249.2 839.8,249.2 839.8,249.2Z"/>
<path class="kp" d="M827.6,249.2 828.8,243.9 839.8,249.2 839.8,249.2Z"/>
<path class="kp" d="M828.8,243.9 832.2,239.6 839.8,249.2 839.8,249.2Z"/>
<path class="kp" d="M832.2,239.6 837.1,237.3 839.8,249.2 839.8,249.2Z"/>
<path class="kp" d="M837.1,237.3 842.5,237.3 839.8,249.2 839.8,249.2Z"/>
<path class="kp" d="M842.5,237.3 847.5,239.6 839.8,249.2 839.8,249.2Z"/>
<path class="kp" d="M847.5,239.6 850.9,243.9 839.8,249.2 839.8,249.2Z"/>
<path class="kp" d="M850.9,243.9 852.1,249.2 839.8,249.2 839.8,249.2Z"/>
<path fill="#0000ef" d="M794.6,247.4 792.1,256.1 802.9,265.9 805.4,257.2Z"/>
<path fill="#0000ef" d="M864.9,204.3 861.7,215.6 874.8,229.5 878,218.2Z"/>
<path fill="#0000df" stroke="#0000df" d="M740.3,206.2 739.9,212.4 753.5,219.4 753.4,212.9Z"/>
<path class="e" d="M740.3,206.2L739.9,212.4M753.5,219.4L753.4,212.9"/>
<path fill="#000076" d="M486.7,170.4 483.5,181.8 499.2,174 502.4,162.7Z"/>
<path fill="#000056" d="M594.8,124.3 600.2,124.1 618.3,122.9 613.8,123.1Z"/>
<path fill="#000056" d="M485.8,187.7 502.4,200.8 516.4,193.9 501.3,180.1Z"/>
<path fill="#0000ef" d="M853.5,179.6 850.3,190.9 864.9,204.3 868.1,192.9Z"/>
<path fill="#0000ed" d="M840.6,155.6 837.4,167 853.5,179.6 856.7,168.3Z"/>
<path fill="#000082" stroke="#000082" d="M569,201.5 568.6,204.4 582.7,201.4 583.1,198.6Z"/>
<path class="e" d="M569,201.5L568.6,204.4M582.7,201.4L583.1,198.6M583.1,198.6L569,201.5"/>
<path fill="#00005a" stroke="#00005a" d="M570,210.7 571.6,213.3 585.1,210.5 583.8,207.8Z"/>
<path class="e" d="M570,210.7L571.6,213.3M571.6,213.3L585.1,210.5M585.1,210.5L583.8,207.8"/>
<path fill="#0000bc" stroke="#0000bc" d="M653.4,182.3 650.3,187.8 665.6,189.7 668.3,184.1Z"/>
<path class="e" d="M653.4,182.3L650.3,187.8M665.6,189.7L668.3,184.1"/>
<path fill="#00005c" d="M804.4,175.5 800.7,173.1 815.8,183.4 820.1,186.3Z"/>
<path fill="#000056" d="M604.9,219.3 606.1,220.7 619.1,219.8 618.2,218.5Z"/>
<path fill="#000072" stroke="#000072" d="M568.6,204.4 569,207.6 583,204.7 582.7,201.4Z"/>
<path class="e" d="M568.6,204.4L569,207.6M583,204.7L582.7,201.4"/>
<path fill="#0000d9" stroke="#0000d9" d="M726.5,200.2 725.8,206.2 739.9,212.4 740.3,206.2Z"/>
<path class="e" d="M726.5,200.2L725.8,206.2M739.9,212.4L740.3,206.2"/>
<path fill="#000064" stroke="#000064" d="M569,207.6 570,210.7 583.8,207.8 583,204.7Z"/>
<path class="e" d="M569,207.6L570,210.7M583.8,207.8L583,204.7"/>
<path fill="#000056" d="M585.1,210.5 592.1,221 604.9,219.3 599.2,208.6Z"/>
<path fill="#0000ec" d="M879.9,266.5 876.7,277.9 886.5,292.6 889.7,281.3Z"/>
<path fill="#0000e8" stroke="#0000e8" d="M792.1,256.1 791,258.7 801.8,268.5 802.9,265.9Z"/>
<path class="e" d="M792.1,256.1L791,258.7M801.8,268.5L802.9,265.9M802.9,265.9L792.1,256.1"/>
<path fill="#000075" d="M505.6,151.4 502.4,162.7 519.4,156.1 522.6,144.8Z"/>
<path fill="#00005d" stroke="#00005d" d="M786.8,263.7 784.4,265.3 794.7,274.7 797.3,273.2Z"/>
<path class="e" d="M786.8,263.7L784.4,265.3M784.4,265.3L794.7,274.7M794.7,274.7L797.3,273.2"/>
<path fill="#000056" d="M871.8,282.1 852,286.2 860.6,299.3 881.4,296.6Z"/>
<path fill="#000057" d="M751.9,255.2 750.4,255.9 761.3,263.4 762.9,262.8Z"/>
<path fill="#0000c3" stroke="#0000c3" d="M668.3,184.1 665.6,189.7 681,192.5 683.1,186.9Z"/>
<path class="e" d="M668.3,184.1L665.6,189.7M681,192.5L683.1,186.9"/>
<path fill="#000093" d="M585.6,189.9 583.1,198.6 597.9,196.6 600.4,187.9Z"/>
<path fill="#0000c8" stroke="#0000c8" d="M791,258.7 789.2,261.4 799.8,271.1 801.8,268.5Z"/>
<path class="e" d="M791,258.7L789.2,261.4M799.8,271.1L801.8,268.5"/>
<path fill="#0000d4" stroke="#0000d4" d="M712.4,194.9 711.1,200.8 725.8,206.2 726.5,200.2Z"/>
<path class="e" d="M712.4,194.9L711.1,200.8M725.8,206.2L726.5,200.2"/>
<path fill="#000098" stroke="#000098" d="M789.2,261.4 786.8,263.7 797.3,273.2 799.8,271.1Z"/>
<path class="e" d="M789.2,261.4L786.8,263.7M797.3,273.2L799.8,271.1"/>
<path fill="#000056" d="M773.2,256.4 762.9,262.8 773.2,270.9 784.4,265.3Z"/>
<path fill="#000056" stroke="#000056" d="M518,194.8 519.5,194.6 534.3,188.8 533,189Z"/>
<path class="e" d="M518,194.8L519.5,194.6M519.5,194.6L534.3,188.8M534.3,188.8L533,189"/>
<path fill="#000075" stroke="#000075" d="M483.5,181.8 483.5,183.8 499.1,176.1 499.2,174Z"/>
<path class="e" d="M483.5,181.8L483.5,183.8M499.1,176.1L499.2,174M499.2,174L483.5,181.8"/>
<path fill="#0000ca" stroke="#0000ca" d="M683.1,186.9 681,192.5 696.2,196.2 697.8,190.5Z"/>
<path class="e" d="M683.1,186.9L681,192.5M696.2,196.2L697.8,190.5"/>
<path fill="#0000cf" stroke="#0000cf" d="M697.8,190.5 696.2,196.2 711.1,200.8 712.4,194.9Z"/>
<path class="e" d="M697.8,190.5L696.2,196.2M711.1,200.8L712.4,194.9"/>
<path fill="#00005d" stroke="#00005d" d="M484.3,186 485.8,187.7 501.3,180.1 499.9,178.3Z"/>
<path class="e" d="M484.3,186L485.8,187.7M485.8,187.7L501.3,180.1M501.3,180.1L499.9,178.3"/>
<path fill="#00006c" stroke="#00006c" d="M483.5,183.8 484.3,186 499.9,178.3 499.1,176.1Z"/>
<path class="e" d="M483.5,183.8L484.3,186M499.9,178.3L499.1,176.1"/>
<path fill="#0000ed" d="M782.8,238.1 780.3,246.8 792.1,256.1 794.6,247.4Z"/>
<path fill="#00007c" d="M525.8,133.5 522.6,144.8 540.8,139.5 544,128.2Z"/>
<path fill="#000056" stroke="#000056" d="M516.4,193.9 518,194.8 533,189 531.5,188.1Z"/>
<path class="e" d="M516.4,193.9L518,194.8M533,189L531.5,188.1M531.5,188.1L516.4,193.9"/>
<path fill="#0000a0" stroke="#0000a0" d="M620.3,186.8 615.7,186.9 631.5,186.9 635.2,186.8Z"/>
<path class="e" d="M620.3,186.8L615.7,186.9M615.7,186.9L631.5,186.9M631.5,186.9L635.2,186.8"/>
<path fill="#0000ee" d="M871.6,240.8 868.4,252.1 879.9,266.5 883.1,255.2Z"/>
<path fill="#000056" d="M618.2,218.5 619.1,219.8 632.5,219.8 631.8,218.5Z"/>
<path fill="#00009e" d="M593,87.5 589.8,98.8 610.6,97.5 613.8,86.2Z"/>
<path fill="#000065" stroke="#000065" d="M840,273.5 839,272.7 849,285.2 850.1,286.2Z"/>
<path class="e" d="M840,273.5L839,272.7M839,272.7L849,285.2M849,285.2L850.1,286.2"/>
<path fill="#0000c9" stroke="#0000c9" d="M753.5,219.4 756.4,221.3 770,229.4 766.4,227Z"/>
<path class="e" d="M753.5,219.4L756.4,221.3M756.4,221.3L770,229.4M770,229.4L766.4,227"/>
<path fill="#000088" d="M547.2,116.9 544,128.2 563.3,124.2 566.5,112.8Z"/>
<path fill="#000057" d="M740.1,248.3 738.8,249.1 750.4,255.9 751.9,255.2Z"/>
<path fill="#000093" d="M569.7,101.5 566.5,112.8 586.6,110.2 589.8,98.8Z"/>
<path fill="#0000e1" stroke="#0000e1" d="M876.7,277.9 875.7,279.7 885.4,294.4 886.5,292.6Z"/>
<path class="e" d="M876.7,277.9L875.7,279.7M885.4,294.4L886.5,292.6M886.5,292.6L876.7,277.9"/>
<path fill="#00008d" stroke="#00008d" d="M583.1,198.6 582.7,201.4 597.5,199.5 597.9,196.6Z"/>
<path class="e" d="M583.1,198.6L582.7,201.4M597.5,199.5L597.9,196.6M597.9,196.6L583.1,198.6"/>
<path fill="#000059" stroke="#000059" d="M583.8,207.8 585.1,210.5 599.2,208.6 598.2,205.9Z"/>
<path class="e" d="M583.8,207.8L585.1,210.5M585.1,210.5L599.2,208.6M599.2,208.6L598.2,205.9"/>
<path fill="#000056" d="M599.2,208.6 604.9,219.3 618.2,218.5 613.8,207.6Z"/>
<path fill="#000067" stroke="#000067" d="M873.9,281.2 871.8,282.1 881.4,296.6 883.6,295.8Z"/>
<path class="e" d="M873.9,281.2L871.8,282.1M871.8,282.1L881.4,296.6M881.4,296.6L883.6,295.8"/>
<path fill="#0000ef" d="M861.7,215.6 858.5,226.9 871.6,240.8 874.8,229.5Z"/>
<path fill="#00005a" stroke="#00005a" d="M841.8,273.4 840,273.5 850.1,286.2 852,286.2Z"/>
<path class="e" d="M841.8,273.4L840,273.5M850.1,286.2L852,286.2M852,286.2L841.8,273.4"/>
<path fill="#0000b0" stroke="#0000b0" d="M875.7,279.7 873.9,281.2 883.6,295.8 885.4,294.4Z"/>
<path class="e" d="M875.7,279.7L873.9,281.2M883.6,295.8L885.4,294.4"/>
<path fill="#0000ea" d="M823.3,143.8 820.1,155.1 837.4,167 840.6,155.6Z"/>
<path fill="#00007b" stroke="#00007b" d="M582.7,201.4 583,204.7 597.6,202.7 597.5,199.5Z"/>
<path class="e" d="M582.7,201.4L583,204.7M597.6,202.7L597.5,199.5"/>
<path fill="#000064" stroke="#000064" d="M583,204.7 583.8,207.8 598.2,205.9 597.6,202.7Z"/>
<path class="e" d="M583,204.7L583.8,207.8M598.2,205.9L597.6,202.7"/>
<path fill="#000056" d="M761,248.1 751.9,255.2 762.9,262.8 773.2,256.4Z"/>
<path fill="#0000ef" d="M850.3,190.9 847.1,202.2 861.7,215.6 864.9,204.3Z"/>
<path fill="#00005d" stroke="#00005d" d="M775.4,254.7 773.2,256.4 784.4,265.3 786.8,263.7Z"/>
<path class="e" d="M775.4,254.7L773.2,256.4M773.2,256.4L784.4,265.3M784.4,265.3L786.8,263.7"/>
<path fill="#0000e6" stroke="#0000e6" d="M780.3,246.8 779.2,249.4 791,258.7 792.1,256.1Z"/>
<path class="e" d="M780.3,246.8L779.2,249.4M791,258.7L792.1,256.1M792.1,256.1L780.3,246.8"/>
<path fill="#0000ed" d="M837.4,167 834.2,178.3 850.3,190.9 853.5,179.6Z"/>
<path fill="#00009e" d="M600.4,187.9 597.9,196.6 613.3,195.6 615.7,186.9Z"/>
<path fill="#0000a6" stroke="#0000a6" d="M635.2,186.8 631.5,186.9 647.5,187.9 650.3,187.8Z"/>
<path class="e" d="M635.2,186.8L631.5,186.9M631.5,186.9L647.5,187.9M647.5,187.9L650.3,187.8"/>
<path fill="#000056" d="M631.8,218.5 632.5,219.8 646.1,220.7 645.7,219.3Z"/>
<path fill="#000097" stroke="#000097" d="M777.5,252.2 775.4,254.7 786.8,263.7 789.2,261.4Z"/>
<path class="e" d="M777.5,252.2L775.4,254.7M786.8,263.7L789.2,261.4"/>
<path fill="#0000c7" stroke="#0000c7" d="M779.2,249.4 777.5,252.2 789.2,261.4 791,258.7Z"/>
<path class="e" d="M779.2,249.4L777.5,252.2M789.2,261.4L791,258.7"/>
<path fill="#0000c5" stroke="#0000c5" d="M739.9,212.4 742.1,214 756.4,221.3 753.5,219.4Z"/>
<path class="e" d="M739.9,212.4L742.1,214M742.1,214L756.4,221.3M756.4,221.3L753.5,219.4"/>
<path fill="#000056" d="M727.7,241.9 726.6,242.8 738.8,249.1 740.1,248.3Z"/>
<path fill="#0000ea" d="M770,229.4 767.6,238.1 780.3,246.8 782.8,238.1Z"/>
<path fill="#000056" d="M501.3,180.1 516.4,193.9 531.5,188.1 518,173.7Z"/>
<path fill="#000075" d="M502.4,162.7 499.2,174 516.2,167.5 519.4,156.1Z"/>
<path class="k" d="M658.5,154.8 655.4,168.7 653.2,167.6 656.1,154.8Z"/>
<path class="k" d="M655.4,168.7 646.5,179.8 645,177.9 653.2,167.6Z"/>
<path class="k" d="M646.5,179.8 633.7,186 633.1,183.6 645,177.9Z"/>
<path class="k" d="M633.7,186 619.4,186 620,183.6 633.1,183.6Z"/>
<path class="k" d="M619.4,186 606.6,179.8 608.1,177.9 620,183.6Z"/>
<path class="k" d="M606.6,179.8 597.7,168.7 599.9,167.6 608.1,177.9Z"/>
<path class="k" d="M597.7,168.7 594.5,154.8 597,154.8 599.9,167.6Z"/>
<path class="k" d="M594.5,154.8 597.7,140.9 599.9,142 597,154.8Z"/>
<path class="k" d="M597.7,140.9 606.6,129.8 608.1,131.7 599.9,142Z"/>
<path class="k" d="M606.6,129.8 619.4,123.6 620,126 608.1,131.7Z"/>
<path class="k" d="M619.4,123.6 633.7,123.6 633.1,126 620,126Z"/>
<path class="k" d="M633.7,123.6 646.5,129.8 645,131.7 633.1,126Z"/>
<path class="k" d="M646.5,129.8 655.4,140.9 653.2,142 645,131.7Z"/>
<path class="k" d="M655.4,140.9 658.5,154.8 656.1,154.8 653.2,142Z"/>
<path fill="#000056" d="M613.8,207.6 618.2,218.5 631.8,218.5 628.8,207.6Z"/>
<path fill="#000056" d="M645.7,219.3 646.1,220.7 659.9,222.4 659.7,221.1Z"/>
<path fill="#0000ac" stroke="#0000ac" d="M650.3,187.8 647.5,187.9 663.6,189.9 665.6,189.7Z"/>
<path class="e" d="M650.3,187.8L647.5,187.9M647.5,187.9L663.6,189.9M663.6,189.9L665.6,189.7"/>
<path fill="#000056" d="M714.7,236.2 713.9,237.3 726.6,242.8 727.7,241.9Z"/>
<path fill="#0000c1" stroke="#0000c1" d="M725.8,206.2 727.1,207.4 742.1,214 739.9,212.4Z"/>
<path class="e" d="M725.8,206.2L727.1,207.4M727.1,207.4L742.1,214M742.1,214L739.9,212.4"/>
<path fill="#0000a8" d="M613.8,86.2 610.6,97.5 631.9,97.5 635.1,86.2Z"/>
<path fill="#000056" d="M748,240.4 740.1,248.3 751.9,255.2 761,248.1Z"/>
<path fill="#000059" stroke="#000059" d="M598.2,205.9 599.2,208.6 613.8,207.6 613.1,205Z"/>
<path class="e" d="M598.2,205.9L599.2,208.6M599.2,208.6L613.8,207.6M613.8,207.6L613.1,205"/>
<path fill="#000098" stroke="#000098" d="M597.9,196.6 597.5,199.5 612.8,198.5 613.3,195.6Z"/>
<path class="e" d="M597.9,196.6L597.5,199.5M612.8,198.5L613.3,195.6M613.3,195.6L597.9,196.6"/>
<path fill="#000056" stroke="#000056" d="M533,189 534.3,188.8 550.2,184.2 549,184.4Z"/>
<path class="e" d="M533,189L534.3,188.8M534.3,188.8L550.2,184.2M550.2,184.2L549,184.4"/>
<path fill="#00007c" d="M522.6,144.8 519.4,156.1 537.6,150.8 540.8,139.5Z"/>
<path fill="#000056" d="M860.5,267.9 841.8,273.4 852,286.2 871.8,282.1Z"/>
<path fill="#000056" d="M659.7,221.1 659.9,222.4 673.6,224.9 673.7,223.7Z"/>
<path fill="#0000ee" d="M868.4,252.1 865.2,263.5 876.7,277.9 879.9,266.5Z"/>
<path fill="#00006a" stroke="#00006a" d="M597.6,202.7 598.2,205.9 613.1,205 612.7,201.7Z"/>
<path class="e" d="M597.6,202.7L598.2,205.9M613.1,205L612.7,201.7"/>
<path fill="#0000a8" d="M615.7,186.9 613.3,195.6 629,195.6 631.5,186.9Z"/>
<path fill="#000084" stroke="#000084" d="M597.5,199.5 597.6,202.7 612.7,201.7 612.8,198.5Z"/>
<path class="e" d="M597.5,199.5L597.6,202.7M612.7,201.7L612.8,198.5"/>
<path fill="#000056" d="M701.3,231.3 700.7,232.4 713.9,237.3 714.7,236.2Z"/>
<path fill="#0000b2" stroke="#0000b2" d="M665.6,189.7 663.6,189.9 679.8,192.9 681,192.5Z"/>
<path class="e" d="M665.6,189.7L663.6,189.9M663.6,189.9L679.8,192.9M679.8,192.9L681,192.5"/>
<path fill="#00005d" stroke="#00005d" d="M762.9,246.2 761,248.1 773.2,256.4 775.4,254.7Z"/>
<path class="e" d="M762.9,246.2L761,248.1M761,248.1L773.2,256.4M773.2,256.4L775.4,254.7"/>
<path fill="#0000e6" d="M804.8,132.9 801.6,144.2 820.1,155.1 823.3,143.8Z"/>
<path fill="#0000e3" stroke="#0000e3" d="M767.6,238.1 766.5,240.8 779.2,249.4 780.3,246.8Z"/>
<path class="e" d="M767.6,238.1L766.5,240.8M779.2,249.4L780.3,246.8M780.3,246.8L767.6,238.1"/>
<path fill="#0000be" stroke="#0000be" d="M711.1,200.8 711.7,201.7 727.1,207.4 725.8,206.2Z"/>
<path class="e" d="M711.1,200.8L711.7,201.7M711.7,201.7L727.1,207.4M727.1,207.4L725.8,206.2"/>
<path fill="#000056" d="M673.7,223.7 673.6,224.9 687.3,228.3 687.6,227.1Z"/>
<path fill="#00009e" d="M589.8,98.8 586.6,110.2 607.4,108.8 610.6,97.5Z"/>
<path fill="#000056" d="M687.6,227.1 687.3,228.3 700.7,232.4 701.3,231.3Z"/>
<path fill="#000056" stroke="#000056" d="M531.5,188.1 533,189 549,184.4 547.7,183.4Z"/>
<path class="e" d="M531.5,188.1L533,189M549,184.4L547.7,183.4M547.7,183.4L531.5,188.1"/>
<path fill="#000088" d="M544,128.2 540.8,139.5 560.1,135.5 563.3,124.2Z"/>
<path fill="#0000e6" d="M756.4,221.3 753.9,230 767.6,238.1 770,229.4Z"/>
<path fill="#0000b6" stroke="#0000b6" d="M681,192.5 679.8,192.9 695.9,196.8 696.2,196.2Z"/>
<path class="e" d="M681,192.5L679.8,192.9M679.8,192.9L695.9,196.8M695.9,196.8L696.2,196.2"/>
<path fill="#000095" stroke="#000095" d="M764.9,243.6 762.9,246.2 775.4,254.7 777.5,252.2Z"/>
<path class="e" d="M764.9,243.6L762.9,246.2M775.4,254.7L777.5,252.2"/>
<path fill="#0000bb" stroke="#0000bb" d="M696.2,196.2 695.9,196.8 711.7,201.7 711.1,200.8Z"/>
<path class="e" d="M696.2,196.2L695.9,196.8M695.9,196.8L711.7,201.7M711.7,201.7L711.1,200.8"/>
<path fill="#0000c5" stroke="#0000c5" d="M766.5,240.8 764.9,243.6 777.5,252.2 779.2,249.4Z"/>
<path class="e" d="M766.5,240.8L764.9,243.6M777.5,252.2L779.2,249.4"/>
<path fill="#000093" d="M566.5,112.8 563.3,124.2 583.4,121.5 586.6,110.2Z"/>
<path fill="#000056" d="M628.8,207.6 631.8,218.5 645.7,219.3 644.1,208.6Z"/>
<path fill="#000063" stroke="#000063" d="M828.5,261.3 827.6,260.5 839,272.7 840,273.5Z"/>
<path class="e" d="M828.5,261.3L827.6,260.5M827.6,260.5L839,272.7M839,272.7L840,273.5"/>
<path fill="#000073" stroke="#000073" d="M499.2,174 499.1,176.1 516.1,169.5 516.2,167.5Z"/>
<path class="e" d="M499.2,174L499.1,176.1M516.1,169.5L516.2,167.5M516.2,167.5L499.2,174"/>
<path fill="#0000ef" d="M858.5,226.9 855.3,238.2 868.4,252.1 871.6,240.8Z"/>
<path fill="#00005c" stroke="#00005c" d="M499.9,178.3 501.3,180.1 518,173.7 516.7,171.8Z"/>
<path class="e" d="M499.9,178.3L501.3,180.1M501.3,180.1L518,173.7M518,173.7L516.7,171.8"/>
<path fill="#000056" d="M734.3,233.4 727.7,241.9 740.1,248.3 748,240.4Z"/>
<path fill="#00006b" stroke="#00006b" d="M499.1,176.1 499.9,178.3 516.7,171.8 516.1,169.5Z"/>
<path class="e" d="M499.1,176.1L499.9,178.3M516.7,171.8L516.1,169.5"/>
<path fill="#0000ea" d="M820.1,155.1 816.9,166.4 834.2,178.3 837.4,167Z"/>
<path fill="#00005a" stroke="#00005a" d="M830.1,261.1 828.5,261.3 840,273.5 841.8,273.4Z"/>
<path class="e" d="M830.1,261.1L828.5,261.3M840,273.5L841.8,273.4M841.8,273.4L830.1,261.1"/>
<path fill="#0000ef" d="M847.1,202.2 843.9,213.6 858.5,226.9 861.7,215.6Z"/>
<path fill="#0000ed" d="M834.2,178.3 831,189.6 847.1,202.2 850.3,190.9Z"/>
<path fill="#000058" stroke="#000058" d="M613.1,205 613.8,207.6 628.8,207.6 628.3,205Z"/>
<path class="e" d="M613.1,205L613.8,207.6M613.8,207.6L628.8,207.6M628.8,207.6L628.3,205"/>
<path fill="#0000a2" stroke="#0000a2" d="M613.3,195.6 612.8,198.5 628.4,198.5 629,195.6Z"/>
<path class="e" d="M613.3,195.6L612.8,198.5M628.4,198.5L629,195.6M629,195.6L613.3,195.6"/>
<path fill="#0000b2" d="M631.5,186.9 629,195.6 645,196.6 647.5,187.9Z"/>
<path fill="#0000b2" d="M635.1,86.2 631.9,97.5 653.7,98.9 656.9,87.6Z"/>
<path fill="#000056" d="M644.1,208.6 645.7,219.3 659.7,221.1 659.5,210.5Z"/>
<path fill="#00005c" stroke="#00005c" d="M749.7,238.4 748,240.4 761,248.1 762.9,246.2Z"/>
<path class="e" d="M749.7,238.4L748,240.4M748,240.4L761,248.1M761,248.1L762.9,246.2"/>
<path fill="#0000e3" stroke="#0000e3" d="M865.2,263.5 864.2,265.3 875.7,279.7 876.7,277.9Z"/>
<path class="e" d="M865.2,263.5L864.2,265.3M875.7,279.7L876.7,277.9M876.7,277.9L865.2,263.5"/>
<path fill="#00006f" stroke="#00006f" d="M612.7,201.7 613.1,205 628.3,205 628.2,201.8Z"/>
<path class="e" d="M612.7,201.7L613.1,205M628.3,205L628.2,201.8"/>
<path fill="#0000e1" d="M742.1,214 739.6,222.7 753.9,230 756.4,221.3Z"/>
<path fill="#000056" d="M720.1,227.2 714.7,236.2 727.7,241.9 734.3,233.4Z"/>
<path fill="#00008d" stroke="#00008d" d="M612.8,198.5 612.7,201.7 628.2,201.8 628.4,198.5Z"/>
<path class="e" d="M612.8,198.5L612.7,201.7M628.2,201.8L628.4,198.5"/>
<path fill="#000067" stroke="#000067" d="M862.5,267 860.5,267.9 871.8,282.1 873.9,281.2Z"/>
<path class="e" d="M862.5,267L860.5,267.9M860.5,267.9L871.8,282.1M871.8,282.1L873.9,281.2"/>
<path fill="#0000df" stroke="#0000df" d="M753.9,230 753,232.7 766.5,240.8 767.6,238.1Z"/>
<path class="e" d="M753.9,230L753,232.7M766.5,240.8L767.6,238.1M767.6,238.1L753.9,230"/>
<path class="k" d="M779.7,181.2 776.5,195 774.3,194 777.3,181.2Z"/>
<path class="k" d="M776.5,195 767.7,206.2 766.1,204.3 774.3,194Z"/>
<path class="k" d="M767.7,206.2 754.8,212.4 754.3,210 766.1,204.3Z"/>
<path class="k" d="M754.8,212.4 740.6,212.4 741.1,210 754.3,210Z"/>
<path class="k" d="M740.6,212.4 727.8,206.2 729.3,204.3 741.1,210Z"/>
<path class="k" d="M727.8,206.2 718.9,195 721.1,194 729.3,204.3Z"/>
<path class="k" d="M718.9,195 715.7,181.2 718.1,181.2 721.1,194Z"/>
<path class="k" d="M715.7,181.2 718.9,167.3 721.1,168.3 718.1,181.2Z"/>
<path class="k" d="M718.9,167.3 727.8,156.1 729.3,158 721.1,168.3Z"/>
<path class="k" d="M727.8,156.1 740.6,150 741.1,152.3 729.3,158Z"/>
<path class="k" d="M740.6,150 754.8,150 754.3,152.3 741.1,152.3Z"/>
<path class="k" d="M754.8,150 767.7,156.1 766.1,158 754.3,152.3Z"/>
<path class="k" d="M767.7,156.1 776.5,167.3 774.3,168.3 766.1,158Z"/>
<path class="k" d="M776.5,167.3 779.7,181.2 777.3,181.2 774.3,168.3Z"/>
<path fill="#0000b2" stroke="#0000b2" d="M864.2,265.3 862.5,267 873.9,281.2 875.7,279.7Z"/>
<path class="e" d="M864.2,265.3L862.5,267M873.9,281.2L875.7,279.7"/>
<path fill="#0000e1" d="M785.3,122.9 782.1,134.2 801.6,144.2 804.8,132.9Z"/>
<path fill="#000093" stroke="#000093" d="M751.5,235.7 749.7,238.4 762.9,246.2 764.9,243.6Z"/>
<path class="e" d="M751.5,235.7L749.7,238.4M762.9,246.2L764.9,243.6"/>
<path fill="#0000c1" stroke="#0000c1" d="M753,232.7 751.5,235.7 764.9,243.6 766.5,240.8Z"/>
<path class="e" d="M753,232.7L751.5,235.7M764.9,243.6L766.5,240.8"/>
<path fill="#000056" d="M659.5,210.5 659.7,221.1 673.7,223.7 674.9,213.3Z"/>
<path fill="#000056" d="M705.3,221.7 701.3,231.3 714.7,236.2 720.1,227.2Z"/>
<path class="k" d="M656.1,154.8 653.2,167.6 646.9,164.6 649.2,154.8Z"/>
<path class="k" d="M653.2,167.6 645,177.9 640.6,172.5 646.9,164.6Z"/>
<path class="k" d="M645,177.9 633.1,183.6 631.6,176.9 640.6,172.5Z"/>
<path class="k" d="M633.1,183.6 620,183.6 621.5,176.9 631.6,176.9Z"/>
<path class="k" d="M620,183.6 608.1,177.9 612.4,172.5 621.5,176.9Z"/>
<path class="k" d="M608.1,177.9 599.9,167.6 606.1,164.6 612.4,172.5Z"/>
<path class="k" d="M599.9,167.6 597,154.8 603.9,154.8 606.1,164.6Z"/>
<path class="k" d="M597,154.8 599.9,142 606.1,145 603.9,154.8Z"/>
<path class="k" d="M599.9,142 608.1,131.7 612.4,137.1 606.1,145Z"/>
<path class="k" d="M608.1,131.7 620,126 621.5,132.7 612.4,137.1Z"/>
<path class="k" d="M620,126 633.1,126 631.6,132.7 621.5,132.7Z"/>
<path class="k" d="M633.1,126 645,131.7 640.6,137.1 631.6,132.7Z"/>
<path class="k" d="M645,131.7 653.2,142 646.9,145 640.6,137.1Z"/>
<path class="k" d="M653.2,142 656.1,154.8 649.2,154.8 646.9,145Z"/>
<path fill="#0000bb" d="M647.5,187.9 645,196.6 661.2,198.6 663.6,189.9Z"/>
<path fill="#000056" d="M518,173.7 531.5,188.1 547.7,183.4 535.8,168.5Z"/>
<path fill="#000056" d="M674.9,213.3 673.7,223.7 687.6,227.1 690.2,217.1Z"/>
<path fill="#000056" d="M690.2,217.1 687.6,227.1 701.3,231.3 705.3,221.7Z"/>
<path fill="#0000a8" d="M610.6,97.5 607.4,108.8 628.7,108.8 631.9,97.5Z"/>
<path fill="#000058" stroke="#000058" d="M628.3,205 628.8,207.6 644.1,208.6 643.9,206Z"/>
<path class="e" d="M628.3,205L628.8,207.6M628.8,207.6L644.1,208.6M644.1,208.6L643.9,206"/>
<path fill="#0000db" d="M727.1,207.4 724.7,216.1 739.6,222.7 742.1,214Z"/>
<path fill="#0000ab" stroke="#0000ab" d="M629,195.6 628.4,198.5 644.4,199.5 645,196.6Z"/>
<path class="e" d="M629,195.6L628.4,198.5M644.4,199.5L645,196.6M645,196.6L629,195.6"/>
<path fill="#00007c" d="M519.4,156.1 516.2,167.5 534.4,162.1 537.6,150.8Z"/>
<path fill="#000056" stroke="#000056" d="M549,184.4 550.2,184.2 567,180.7 565.9,180.8Z"/>
<path class="e" d="M549,184.4L550.2,184.2M550.2,184.2L567,180.7M567,180.7L565.9,180.8"/>
<path fill="#00005b" stroke="#00005b" d="M735.8,231.2 734.3,233.4 748,240.4 749.7,238.4Z"/>
<path class="e" d="M735.8,231.2L734.3,233.4M734.3,233.4L748,240.4M748,240.4L749.7,238.4"/>
<path fill="#0000bb" d="M656.9,87.6 653.7,98.9 675.6,101.6 678.8,90.3Z"/>
<path fill="#000075" stroke="#000075" d="M628.2,201.8 628.3,205 643.9,206 644,202.7Z"/>
<path class="e" d="M628.2,201.8L628.3,205M643.9,206L644,202.7"/>
<path fill="#0000da" stroke="#0000da" d="M739.6,222.7 738.7,225.4 753,232.7 753.9,230Z"/>
<path class="e" d="M739.6,222.7L738.7,225.4M753,232.7L753.9,230M753.9,230L739.6,222.7"/>
<path fill="#000095" stroke="#000095" d="M628.4,198.5 628.2,201.8 644,202.7 644.4,199.5Z"/>
<path class="e" d="M628.4,198.5L628.2,201.8M644,202.7L644.4,199.5"/>
<path fill="#0000e6" d="M801.6,144.2 798.4,155.5 816.9,166.4 820.1,155.1Z"/>
<path fill="#0000c3" d="M663.6,189.9 661.2,198.6 677.3,201.6 679.8,192.9Z"/>
<path fill="#00009e" d="M586.6,110.2 583.4,121.5 604.2,120.1 607.4,108.8Z"/>
<path fill="#0000db" d="M765,114 761.8,125.3 782.1,134.2 785.3,122.9Z"/>
<path fill="#000088" d="M540.8,139.5 537.6,150.8 556.9,146.8 560.1,135.5Z"/>
<path fill="#0000d5" d="M711.7,201.7 709.2,210.4 724.7,216.1 727.1,207.4Z"/>
<path fill="#000090" stroke="#000090" d="M737.3,228.4 735.8,231.2 749.7,238.4 751.5,235.7Z"/>
<path class="e" d="M737.3,228.4L735.8,231.2M749.7,238.4L751.5,235.7"/>
<path fill="#000056" d="M847.7,254.3 830.1,261.1 841.8,273.4 860.5,267.9Z"/>
<path fill="#0000bd" stroke="#0000bd" d="M738.7,225.4 737.3,228.4 751.5,235.7 753,232.7Z"/>
<path class="e" d="M738.7,225.4L737.3,228.4M751.5,235.7L753,232.7"/>
<path fill="#000056" stroke="#000056" d="M547.7,183.4 549,184.4 565.9,180.8 564.8,179.8Z"/>
<path class="e" d="M547.7,183.4L549,184.4M565.9,180.8L564.8,179.8M564.8,179.8L547.7,183.4"/>
<path fill="#000093" d="M563.3,124.2 560.1,135.5 580.2,132.8 583.4,121.5Z"/>
<path fill="#000061" stroke="#000061" d="M815.6,249.5 814.8,248.9 827.6,260.5 828.5,261.3Z"/>
<path class="e" d="M815.6,249.5L814.8,248.9M814.8,248.9L827.6,260.5M827.6,260.5L828.5,261.3"/>
<path fill="#0000ca" d="M679.8,192.9 677.3,201.6 693.4,205.5 695.9,196.8Z"/>
<path fill="#0000d0" d="M695.9,196.8 693.4,205.5 709.2,210.4 711.7,201.7Z"/>
<path fill="#000057" stroke="#000057" d="M643.9,206 644.1,208.6 659.5,210.5 659.6,207.9Z"/>
<path class="e" d="M643.9,206L644.1,208.6M644.1,208.6L659.5,210.5M659.5,210.5L659.6,207.9"/>
<path fill="#0000ef" d="M855.3,238.2 852.1,249.5 865.2,263.5 868.4,252.1Z"/>
<path fill="#00005a" stroke="#00005a" d="M721.3,224.9 720.1,227.2 734.3,233.4 735.8,231.2Z"/>
<path class="e" d="M721.3,224.9L720.1,227.2M720.1,227.2L734.3,233.4M734.3,233.4L735.8,231.2"/>
<path fill="#0000b4" stroke="#0000b4" d="M645,196.6 644.4,199.5 660.5,201.5 661.2,198.6Z"/>
<path class="e" d="M645,196.6L644.4,199.5M660.5,201.5L661.2,198.6M661.2,198.6L645,196.6"/>
<path fill="#0000ea" d="M816.9,166.4 813.7,177.8 831,189.6 834.2,178.3Z"/>
<path fill="#0000c3" d="M678.8,90.3 675.6,101.6 697.6,105.6 700.8,94.3Z"/>
<path fill="#0000d4" stroke="#0000d4" d="M724.7,216.1 723.8,218.9 738.7,225.4 739.6,222.7Z"/>
<path class="e" d="M724.7,216.1L723.8,218.9M738.7,225.4L739.6,222.7M739.6,222.7L724.7,216.1"/>
<path fill="#00007a" stroke="#00007a" d="M644,202.7 643.9,206 659.6,207.9 659.9,204.7Z"/>
<path class="e" d="M644,202.7L643.9,206M659.6,207.9L659.9,204.7"/>
<path fill="#0000d5" d="M744.1,106.2 740.9,117.5 761.8,125.3 765,114Z"/>
<path fill="#000059" stroke="#000059" d="M817.1,249.2 815.6,249.5 828.5,261.3 830.1,261.1Z"/>
<path class="e" d="M817.1,249.2L815.6,249.5M828.5,261.3L830.1,261.1M830.1,261.1L817.1,249.2"/>
<path fill="#0000ef" d="M843.9,213.6 840.7,224.9 855.3,238.2 858.5,226.9Z"/>
<path fill="#00009c" stroke="#00009c" d="M644.4,199.5 644,202.7 659.9,204.7 660.5,201.5Z"/>
<path class="e" d="M644.4,199.5L644,202.7M659.9,204.7L660.5,201.5"/>
<path fill="#0000ed" d="M831,189.6 827.8,200.9 843.9,213.6 847.1,202.2Z"/>
<path fill="#00008d" stroke="#00008d" d="M722.6,222 721.3,224.9 735.8,231.2 737.3,228.4Z"/>
<path class="e" d="M722.6,222L721.3,224.9M735.8,231.2L737.3,228.4"/>
<path fill="#000057" stroke="#000057" d="M659.6,207.9 659.5,210.5 674.9,213.3 675.3,210.8Z"/>
<path class="e" d="M659.6,207.9L659.5,210.5M659.5,210.5L674.9,213.3M674.9,213.3L675.3,210.8"/>
<path fill="#0000b8" stroke="#0000b8" d="M723.8,218.9 722.6,222 737.3,228.4 738.7,225.4Z"/>
<path class="e" d="M723.8,218.9L722.6,222M737.3,228.4L738.7,225.4"/>
<path fill="#000075" stroke="#000075" d="M516.2,167.5 516.1,169.5 534.3,164.2 534.4,162.1Z"/>
<path class="e" d="M516.2,167.5L516.1,169.5M534.3,164.2L534.4,162.1M534.4,162.1L516.2,167.5"/>
<path fill="#0000ca" d="M700.8,94.3 697.6,105.6 719.4,111 722.6,99.6Z"/>
<path fill="#000058" stroke="#000058" d="M706.3,219.3 705.3,221.7 720.1,227.2 721.3,224.9Z"/>
<path class="e" d="M706.3,219.3L705.3,221.7M705.3,221.7L720.1,227.2M720.1,227.2L721.3,224.9"/>
<path fill="#0000b2" d="M631.9,97.5 628.7,108.8 650.5,110.2 653.7,98.9Z"/>
<path fill="#0000d0" d="M722.6,99.6 719.4,111 740.9,117.5 744.1,106.2Z"/>
<path fill="#00005c" stroke="#00005c" d="M516.7,171.8 518,173.7 535.8,168.5 534.8,166.6Z"/>
<path class="e" d="M516.7,171.8L518,173.7M518,173.7L535.8,168.5M535.8,168.5L534.8,166.6"/>
<path fill="#0000bc" stroke="#0000bc" d="M661.2,198.6 660.5,201.5 676.6,204.4 677.3,201.6Z"/>
<path class="e" d="M661.2,198.6L660.5,201.5M676.6,204.4L677.3,201.6M677.3,201.6L661.2,198.6"/>
<path fill="#000069" stroke="#000069" d="M516.1,169.5 516.7,171.8 534.8,166.6 534.3,164.2Z"/>
<path class="e" d="M516.1,169.5L516.7,171.8M534.8,166.6L534.3,164.2"/>
<path fill="#0000ce" stroke="#0000ce" d="M709.2,210.4 708.4,213.2 723.8,218.9 724.7,216.1Z"/>
<path class="e" d="M709.2,210.4L708.4,213.2M723.8,218.9L724.7,216.1M724.7,216.1L709.2,210.4"/>
<path fill="#000056" stroke="#000056" d="M675.3,210.8 674.9,213.3 690.2,217.1 690.9,214.6Z"/>
<path class="e" d="M675.3,210.8L674.9,213.3M674.9,213.3L690.2,217.1M690.2,217.1L690.9,214.6"/>
<path fill="#000056" stroke="#000056" d="M690.9,214.6 690.2,217.1 705.3,221.7 706.3,219.3Z"/>
<path class="e" d="M690.9,214.6L690.2,217.1M690.2,217.1L705.3,221.7M705.3,221.7L706.3,219.3"/>
<path fill="#00007e" stroke="#00007e" d="M659.9,204.7 659.6,207.9 675.3,210.8 675.9,207.7Z"/>
<path class="e" d="M659.9,204.7L659.6,207.9M675.3,210.8L675.9,207.7"/>
<path fill="#0000a3" stroke="#0000a3" d="M660.5,201.5 659.9,204.7 675.9,207.7 676.6,204.4Z"/>
<path class="e" d="M660.5,201.5L659.9,204.7M675.9,207.7L676.6,204.4"/>
<path fill="#0000e1" d="M782.1,134.2 778.9,145.5 798.4,155.5 801.6,144.2Z"/>
<path fill="#000089" stroke="#000089" d="M707.3,216.3 706.3,219.3 721.3,224.9 722.6,222Z"/>
<path class="e" d="M707.3,216.3L706.3,219.3M721.3,224.9L722.6,222"/>
<path fill="#0000c3" stroke="#0000c3" d="M677.3,201.6 676.6,204.4 692.6,208.3 693.4,205.5Z"/>
<path class="e" d="M677.3,201.6L676.6,204.4M692.6,208.3L693.4,205.5M693.4,205.5L677.3,201.6"/>
<path fill="#0000b2" stroke="#0000b2" d="M708.4,213.2 707.3,216.3 722.6,222 723.8,218.9Z"/>
<path class="e" d="M708.4,213.2L707.3,216.3M722.6,222L723.8,218.9"/>
<path fill="#0000c9" stroke="#0000c9" d="M693.4,205.5 692.6,208.3 708.4,213.2 709.2,210.4Z"/>
<path class="e" d="M693.4,205.5L692.6,208.3M708.4,213.2L709.2,210.4M709.2,210.4L693.4,205.5"/>
<path class="kp" d="M649.2,154.8 646.9,164.6 637.6,160.1 638.8,154.8Z"/>
<path class="kp" d="M646.9,164.6 640.6,172.5 634.2,164.4 637.6,160.1Z"/>
<path class="kp" d="M640.6,172.5 631.6,176.9 629.3,166.7 634.2,164.4Z"/>
<path class="kp" d="M631.6,176.9 621.5,176.9 623.8,166.7 629.3,166.7Z"/>
<path class="kp" d="M621.5,176.9 612.4,172.5 618.9,164.4 623.8,166.7Z"/>
<path class="kp" d="M612.4,172.5 606.1,164.6 615.5,160.1 618.9,164.4Z"/>
<path class="kp" d="M606.1,164.6 603.9,154.8 614.3,154.8 615.5,160.1Z"/>
<path class="kp" d="M603.9,154.8 606.1,145 615.5,149.5 614.3,154.8Z"/>
<path class="kp" d="M606.1,145 612.4,137.1 618.9,145.2 615.5,149.5Z"/>
<path class="kp" d="M612.4,137.1 621.5,132.7 623.8,142.9 618.9,145.2Z"/>
<path class="kp" d="M621.5,132.7 631.6,132.7 629.3,142.9 623.8,142.9Z"/>
<path class="kp" d="M631.6,132.7 640.6,137.1 634.2,145.2 629.3,142.9Z"/>
<path class="kp" d="M640.6,137.1 646.9,145 637.6,149.5 634.2,145.2Z"/>
<path class="kp" d="M646.9,145 649.2,154.8 638.8,154.8 637.6,149.5Z"/>
<path fill="#000082" stroke="#000082" d="M675.9,207.7 675.3,210.8 690.9,214.6 691.7,211.5Z"/>
<path class="e" d="M675.9,207.7L675.3,210.8M690.9,214.6L691.7,211.5"/>
<path class="k" d="M777.3,181.2 774.3,194 768.1,191 770.3,181.2Z"/>
<path class="k" d="M774.3,194 766.1,204.3 761.8,198.9 768.1,191Z"/>
<path class="k" d="M766.1,204.3 754.3,210 752.7,203.2 761.8,198.9Z"/>
<path class="k" d="M754.3,210 741.1,210 742.7,203.2 752.7,203.2Z"/>
<path class="k" d="M741.1,210 729.3,204.3 733.6,198.9 742.7,203.2Z"/>
<path class="k" d="M729.3,204.3 721.1,194 727.3,191 733.6,198.9Z"/>
<path class="k" d="M721.1,194 718.1,181.2 725.1,181.2 727.3,191Z"/>
<path class="k" d="M718.1,181.2 721.1,168.3 727.3,171.3 725.1,181.2Z"/>
<path class="k" d="M721.1,168.3 729.3,158 733.6,163.5 727.3,171.3Z"/>
<path class="k" d="M729.3,158 741.1,152.3 742.7,159.1 733.6,163.5Z"/>
<path class="k" d="M741.1,152.3 754.3,152.3 752.7,159.1 742.7,159.1Z"/>
<path class="k" d="M754.3,152.3 766.1,158 761.8,163.5 752.7,159.1Z"/>
<path class="k" d="M766.1,158 774.3,168.3 768.1,171.3 761.8,163.5Z"/>
<path class="k" d="M774.3,168.3 777.3,181.2 770.3,181.2 768.1,171.3Z"/>
<path fill="#000085" stroke="#000085" d="M691.7,211.5 690.9,214.6 706.3,219.3 707.3,216.3Z"/>
<path class="e" d="M691.7,211.5L690.9,214.6M706.3,219.3L707.3,216.3"/>
<path fill="#0000a9" stroke="#0000a9" d="M676.6,204.4 675.9,207.7 691.7,211.5 692.6,208.3Z"/>
<path class="e" d="M676.6,204.4L675.9,207.7M691.7,211.5L692.6,208.3"/>
<path fill="#0000ae" stroke="#0000ae" d="M692.6,208.3 691.7,211.5 707.3,216.3 708.4,213.2Z"/>
<path class="e" d="M692.6,208.3L691.7,211.5M707.3,216.3L708.4,213.2"/>
<path fill="#0000e4" stroke="#0000e4" d="M852.1,249.5 851.2,251.4 864.2,265.3 865.2,263.5Z"/>
<path class="e" d="M852.1,249.5L851.2,251.4M864.2,265.3L865.2,263.5M865.2,263.5L852.1,249.5"/>
<path fill="#000068" stroke="#000068" d="M849.5,253.2 847.7,254.3 860.5,267.9 862.5,267Z"/>
<path class="e" d="M849.5,253.2L847.7,254.3M847.7,254.3L860.5,267.9M860.5,267.9L862.5,267"/>
<path fill="#000056" stroke="#000056" d="M565.9,180.8 567,180.7 584.5,178.4 583.6,178.5Z"/>
<path class="e" d="M565.9,180.8L567,180.7M567,180.7L584.5,178.4M584.5,178.4L583.6,178.5"/>
<path fill="#0000a8" d="M607.4,108.8 604.2,120.1 625.5,120.2 628.7,108.8Z"/>
<path fill="#0000b2" stroke="#0000b2" d="M851.2,251.4 849.5,253.2 862.5,267 864.2,265.3Z"/>
<path class="e" d="M851.2,251.4L849.5,253.2M862.5,267L864.2,265.3"/>
<path fill="#000056" d="M535.8,168.5 547.7,183.4 564.8,179.8 554.7,164.6Z"/>
<path fill="#0000bb" d="M653.7,98.9 650.5,110.2 672.4,112.9 675.6,101.6Z"/>
<path fill="#0000e6" d="M798.4,155.5 795.2,166.8 813.7,177.8 816.9,166.4Z"/>
<path fill="#000056" stroke="#000056" d="M564.8,179.8 565.9,180.8 583.6,178.5 582.6,177.4Z"/>
<path class="e" d="M564.8,179.8L565.9,180.8M583.6,178.5L582.6,177.4M582.6,177.4L564.8,179.8"/>
<path fill="#00009e" d="M583.4,121.5 580.2,132.8 601,131.5 604.2,120.1Z"/>
<path fill="#0000db" d="M761.8,125.3 758.6,136.6 778.9,145.5 782.1,134.2Z"/>
<path fill="#000088" d="M537.6,150.8 534.4,162.1 553.6,158.1 556.9,146.8Z"/>
<path fill="#000093" d="M560.1,135.5 556.9,146.8 577,144.1 580.2,132.8Z"/>
<path class="kp" d="M638.8,154.8 637.6,160.1 626.5,154.8 626.5,154.8Z"/>
<path class="kp" d="M637.6,160.1 634.2,164.4 626.5,154.8 626.5,154.8Z"/>
<path class="kp" d="M634.2,164.4 629.3,166.7 626.5,154.8 626.5,154.8Z"/>
<path class="kp" d="M629.3,166.7 623.8,166.7 626.5,154.8 626.5,154.8Z"/>
<path class="kp" d="M623.8,166.7 618.9,164.4 626.5,154.8 626.5,154.8Z"/>
<path class="kp" d="M618.9,164.4 615.5,160.1 626.5,154.8 626.5,154.8Z"/>
<path class="kp" d="M615.5,160.1 614.3,154.8 626.5,154.8 626.5,154.8Z"/>
<path class="kp" d="M614.3,154.8 615.5,149.5 626.5,154.8 626.5,154.8Z"/>
<path class="kp" d="M615.5,149.5 618.9,145.2 626.5,154.8 626.5,154.8Z"/>
<path class="kp" d="M618.9,145.2 623.8,142.9 626.5,154.8 626.5,154.8Z"/>
<path class="kp" d="M623.8,142.9 629.3,142.9 626.5,154.8 626.5,154.8Z"/>
<path class="kp" d="M629.3,142.9 634.2,145.2 626.5,154.8 626.5,154.8Z"/>
<path class="kp" d="M634.2,145.2 637.6,149.5 626.5,154.8 626.5,154.8Z"/>
<path class="kp" d="M637.6,149.5 638.8,154.8 626.5,154.8 626.5,154.8Z"/>
<path fill="#000056" d="M833.3,241.2 817.1,249.2 830.1,261.1 847.7,254.3Z"/>
<path fill="#000058" d="M802.8,238 801.5,238.4 815.6,249.5 817.1,249.2Z"/>
<path fill="#0000ea" d="M813.7,177.8 810.5,189.1 827.8,200.9 831,189.6Z"/>
<path fill="#0000c3" d="M675.6,101.6 672.4,112.9 694.4,117 697.6,105.6Z"/>
<path fill="#0000d5" d="M740.9,117.5 737.7,128.9 758.6,136.6 761.8,125.3Z"/>
<path fill="#0000ef" d="M840.7,224.9 837.5,236.2 852.1,249.5 855.3,238.2Z"/>
<path fill="#0000ed" d="M827.8,200.9 824.6,212.3 840.7,224.9 843.9,213.6Z"/>
<path fill="#0000ca" d="M697.6,105.6 694.4,117 716.2,122.3 719.4,111Z"/>
<path fill="#0000b2" d="M628.7,108.8 625.5,120.2 647.3,121.5 650.5,110.2Z"/>
<path fill="#0000d0" d="M719.4,111 716.2,122.3 737.7,128.9 740.9,117.5Z"/>
<path class="kp" d="M770.3,181.2 768.1,191 758.7,186.5 760,181.2Z"/>
<path class="kp" d="M768.1,191 761.8,198.9 755.3,190.7 758.7,186.5Z"/>
<path class="kp" d="M761.8,198.9 752.7,203.2 750.4,193.1 755.3,190.7Z"/>
<path class="kp" d="M752.7,203.2 742.7,203.2 745,193.1 750.4,193.1Z"/>
<path class="kp" d="M742.7,203.2 733.6,198.9 740.1,190.7 745,193.1Z"/>
<path class="kp" d="M733.6,198.9 727.3,191 736.7,186.5 740.1,190.7Z"/>
<path class="kp" d="M727.3,191 725.1,181.2 735.5,181.2 736.7,186.5Z"/>
<path class="kp" d="M725.1,181.2 727.3,171.3 736.7,175.8 735.5,181.2Z"/>
<path class="kp" d="M727.3,171.3 733.6,163.5 740.1,171.6 736.7,175.8Z"/>
<path class="kp" d="M733.6,163.5 742.7,159.1 745,169.2 740.1,171.6Z"/>
<path class="kp" d="M742.7,159.1 752.7,159.1 750.4,169.2 745,169.2Z"/>
<path class="kp" d="M752.7,159.1 761.8,163.5 755.3,171.6 750.4,169.2Z"/>
<path class="kp" d="M761.8,163.5 768.1,171.3 758.7,175.8 755.3,171.6Z"/>
<path class="kp" d="M768.1,171.3 770.3,181.2 760,181.2 758.7,175.8Z"/>
<path fill="#0000e1" d="M778.9,145.5 775.7,156.9 795.2,166.8 798.4,155.5Z"/>
<path fill="#000080" stroke="#000080" d="M534.4,162.1 534.3,164.2 553.4,160.2 553.6,158.1Z"/>
<path class="e" d="M534.4,162.1L534.3,164.2M553.4,160.2L553.6,158.1M553.6,158.1L534.4,162.1"/>
<path fill="#00005b" stroke="#00005b" d="M534.8,166.6 535.8,168.5 554.7,164.6 553.8,162.6Z"/>
<path class="e" d="M534.8,166.6L535.8,168.5M535.8,168.5L554.7,164.6M554.7,164.6L553.8,162.6"/>
<path fill="#000068" stroke="#000068" d="M534.3,164.2 534.8,166.6 553.8,162.6 553.4,160.2Z"/>
<path class="e" d="M534.3,164.2L534.8,166.6M553.8,162.6L553.4,160.2"/>
<path fill="#0000a8" d="M604.2,120.1 601,131.5 622.3,131.5 625.5,120.2Z"/>
<path fill="#000056" d="M582.6,177.4 583.6,178.5 601.9,177.3 601.1,176.2Z"/>
<path fill="#000056" d="M554.7,164.6 564.8,179.8 582.6,177.4 574.4,161.9Z"/>
<path fill="#0000e4" stroke="#0000e4" d="M837.5,236.2 836.5,238.1 851.2,251.4 852.1,249.5Z"/>
<path class="e" d="M837.5,236.2L836.5,238.1M851.2,251.4L852.1,249.5M852.1,249.5L837.5,236.2"/>
<path fill="#000068" stroke="#000068" d="M835,240 833.3,241.2 847.7,254.3 849.5,253.2Z"/>
<path class="e" d="M835,240L833.3,241.2M833.3,241.2L847.7,254.3M847.7,254.3L849.5,253.2"/>
<path fill="#0000bb" d="M650.5,110.2 647.3,121.5 669.2,124.2 672.4,112.9Z"/>
<path fill="#0000b2" stroke="#0000b2" d="M836.5,238.1 835,240 849.5,253.2 851.2,251.4Z"/>
<path class="e" d="M836.5,238.1L835,240M849.5,253.2L851.2,251.4"/>
<path fill="#0000e6" d="M795.2,166.8 792,178.1 810.5,189.1 813.7,177.8Z"/>
<path fill="#000057" d="M787.4,227.4 786.2,228 801.5,238.4 802.8,238Z"/>
<path fill="#00009e" d="M580.2,132.8 577,144.1 597.8,142.8 601,131.5Z"/>
<path fill="#0000db" d="M758.6,136.6 755.4,148 775.7,156.9 778.9,145.5Z"/>
<path class="kp" d="M760,181.2 758.7,186.5 747.7,181.2 747.7,181.2Z"/>
<path class="kp" d="M758.7,186.5 755.3,190.7 747.7,181.2 747.7,181.2Z"/>
<path class="kp" d="M755.3,190.7 750.4,193.1 747.7,181.2 747.7,181.2Z"/>
<path class="kp" d="M750.4,193.1 745,193.1 747.7,181.2 747.7,181.2Z"/>
<path class="kp" d="M745,193.1 740.1,190.7 747.7,181.2 747.7,181.2Z"/>
<path class="kp" d="M740.1,190.7 736.7,186.5 747.7,181.2 747.7,181.2Z"/>
<path class="kp" d="M736.7,186.5 735.5,181.2 747.7,181.2 747.7,181.2Z"/>
<path class="kp" d="M735.5,181.2 736.7,175.8 747.7,181.2 747.7,181.2Z"/>
<path class="kp" d="M736.7,175.8 740.1,171.6 747.7,181.2 747.7,181.2Z"/>
<path class="kp" d="M740.1,171.6 745,169.2 747.7,181.2 747.7,181.2Z"/>
<path class="kp" d="M745,169.2 750.4,169.2 747.7,181.2 747.7,181.2Z"/>
<path class="kp" d="M750.4,169.2 755.3,171.6 747.7,181.2 747.7,181.2Z"/>
<path class="kp" d="M755.3,171.6 758.7,175.8 747.7,181.2 747.7,181.2Z"/>
<path class="kp" d="M758.7,175.8 760,181.2 747.7,181.2 747.7,181.2Z"/>
<path fill="#000056" d="M817.5,228.8 802.8,238 817.1,249.2 833.3,241.2Z"/>
<path fill="#000093" d="M556.9,146.8 553.6,158.1 573.7,155.4 577,144.1Z"/>
<path fill="#0000ea" d="M810.5,189.1 807.3,200.4 824.6,212.3 827.8,200.9Z"/>
<path fill="#0000c3" d="M672.4,112.9 669.2,124.2 691.2,128.3 694.4,117Z"/>
<path fill="#0000d5" d="M737.7,128.9 734.5,140.2 755.4,148 758.6,136.6Z"/>
<path fill="#0000ed" d="M824.6,212.3 821.4,223.6 837.5,236.2 840.7,224.9Z"/>
<path fill="#0000ca" d="M694.4,117 691.2,128.3 713,133.6 716.2,122.3Z"/>
<path fill="#0000b2" d="M625.5,120.2 622.3,131.5 644.1,132.8 647.3,121.5Z"/>
<path fill="#0000d0" d="M716.2,122.3 713,133.6 734.5,140.2 737.7,128.9Z"/>
<path fill="#000056" d="M601.1,176.2 601.9,177.3 620.7,177.3 620.1,176.2Z"/>
<path fill="#0000e1" d="M775.7,156.9 772.5,168.2 792,178.1 795.2,166.8Z"/>
<path fill="#00008b" stroke="#00008b" d="M553.6,158.1 553.4,160.2 573.5,157.6 573.7,155.4Z"/>
<path class="e" d="M553.6,158.1L553.4,160.2M573.5,157.6L573.7,155.4M573.7,155.4L553.6,158.1"/>
<path fill="#00005b" stroke="#00005b" d="M553.8,162.6 554.7,164.6 574.4,161.9 573.7,159.9Z"/>
<path class="e" d="M553.8,162.6L554.7,164.6M554.7,164.6L574.4,161.9M574.4,161.9L573.7,159.9"/>
<path fill="#000057" d="M771,217.7 770,218.4 786.2,228 787.4,227.4Z"/>
<path fill="#000056" d="M574.4,161.9 582.6,177.4 601.1,176.2 594.8,160.6Z"/>
<path fill="#000070" stroke="#000070" d="M553.4,160.2 553.8,162.6 573.7,159.9 573.5,157.6Z"/>
<path class="e" d="M553.4,160.2L553.8,162.6M573.7,159.9L573.5,157.6"/>
<path fill="#0000a8" d="M601,131.5 597.8,142.8 619.1,142.8 622.3,131.5Z"/>
<path fill="#000067" stroke="#000067" d="M819.1,227.4 817.5,228.8 833.3,241.2 835,240Z"/>
<path class="e" d="M819.1,227.4L817.5,228.8M817.5,228.8L833.3,241.2M833.3,241.2L835,240"/>
<path fill="#0000e2" stroke="#0000e2" d="M821.4,223.6 820.5,225.5 836.5,238.1 837.5,236.2Z"/>
<path class="e" d="M821.4,223.6L820.5,225.5M836.5,238.1L837.5,236.2M837.5,236.2L821.4,223.6"/>
<path fill="#000056" d="M800.5,217.2 787.4,227.4 802.8,238 817.5,228.8Z"/>
<path fill="#0000bb" d="M647.3,121.5 644.1,132.8 666,135.6 669.2,124.2Z"/>
<path fill="#0000b1" stroke="#0000b1" d="M820.5,225.5 819.1,227.4 835,240 836.5,238.1Z"/>
<path class="e" d="M820.5,225.5L819.1,227.4M835,240L836.5,238.1"/>
<path fill="#0000e6" d="M792,178.1 788.8,189.5 807.3,200.4 810.5,189.1Z"/>
<path fill="#00009e" d="M577,144.1 573.7,155.4 594.6,154.1 597.8,142.8Z"/>
<path fill="#0000db" d="M755.4,148 752.2,159.3 772.5,168.2 775.7,156.9Z"/>
<path fill="#000056" d="M620.1,176.2 620.7,177.3 639.8,178.5 639.5,177.4Z"/>
<path fill="#000056" d="M753.6,208.9 752.8,209.6 770,218.4 771,217.7Z"/>
<path fill="#0000ea" d="M807.3,200.4 804.1,211.7 821.4,223.6 824.6,212.3Z"/>
<path fill="#0000c3" d="M669.2,124.2 666,135.6 688,139.6 691.2,128.3Z"/>
<path fill="#0000d5" d="M734.5,140.2 731.2,151.5 752.2,159.3 755.4,148Z"/>
<path fill="#0000ca" d="M691.2,128.3 688,139.6 709.8,144.9 713,133.6Z"/>
<path fill="#0000b2" d="M622.3,131.5 619.1,142.8 640.9,144.2 644.1,132.8Z"/>
<path fill="#000056" d="M594.8,160.6 601.1,176.2 620.1,176.2 615.8,160.6Z"/>
<path fill="#0000d0" d="M713,133.6 709.8,144.9 731.2,151.5 734.5,140.2Z"/>
<path fill="#000056" d="M639.5,177.4 639.8,178.5 659.1,180.9 659,179.9Z"/>
<path fill="#00005a" stroke="#00005a" d="M573.7,159.9 574.4,161.9 594.8,160.6 594.4,158.6Z"/>
<path class="e" d="M573.7,159.9L574.4,161.9M574.4,161.9L594.8,160.6M594.8,160.6L594.4,158.6"/>
<path fill="#000095" stroke="#000095" d="M573.7,155.4 573.5,157.6 594.2,156.2 594.6,154.1Z"/>
<path class="e" d="M573.7,155.4L573.5,157.6M594.2,156.2L594.6,154.1M594.6,154.1L573.7,155.4"/>
<path fill="#0000e1" d="M772.5,168.2 769.3,179.5 788.8,189.5 792,178.1Z"/>
<path fill="#000056" d="M735.6,200.9 735,201.8 752.8,209.6 753.6,208.9Z"/>
<path fill="#000056" d="M782.4,206.4 771,217.7 787.4,227.4 800.5,217.2Z"/>
<path fill="#000078" stroke="#000078" d="M573.5,157.6 573.7,159.9 594.4,158.6 594.2,156.2Z"/>
<path class="e" d="M573.5,157.6L573.7,159.9M594.4,158.6L594.2,156.2"/>
<path fill="#000066" stroke="#000066" d="M801.9,215.7 800.5,217.2 817.5,228.8 819.1,227.4Z"/>
<path class="e" d="M801.9,215.7L800.5,217.2M800.5,217.2L817.5,228.8M817.5,228.8L819.1,227.4"/>
<path fill="#0000df" stroke="#0000df" d="M804.1,211.7 803.2,213.7 820.5,225.5 821.4,223.6Z"/>
<path class="e" d="M804.1,211.7L803.2,213.7M820.5,225.5L821.4,223.6M821.4,223.6L804.1,211.7"/>
<path fill="#000056" d="M659,179.9 659.1,180.9 678.4,184.5 678.5,183.4Z"/>
<path fill="#0000a8" d="M597.8,142.8 594.6,154.1 615.9,154.1 619.1,142.8Z"/>
<path fill="#0000af" stroke="#0000af" d="M803.2,213.7 801.9,215.7 819.1,227.4 820.5,225.5Z"/>
<path class="e" d="M803.2,213.7L801.9,215.7M819.1,227.4L820.5,225.5"/>
<path fill="#000056" d="M717,194 716.5,194.9 735,201.8 735.6,200.9Z"/>
<path fill="#0000bb" d="M644.1,132.8 640.9,144.2 662.8,146.9 666,135.6Z"/>
<path fill="#000056" d="M678.5,183.4 678.4,184.5 697.6,189.2 697.9,188.2Z"/>
<path fill="#000056" d="M697.9,188.2 697.6,189.2 716.5,194.9 717,194Z"/>
<path fill="#0000e6" d="M788.8,189.5 785.6,200.8 804.1,211.7 807.3,200.4Z"/>
<path fill="#0000db" d="M752.2,159.3 749,170.6 769.3,179.5 772.5,168.2Z"/>
<path fill="#000056" d="M615.8,160.6 620.1,176.2 639.5,177.4 637.2,162Z"/>
<path fill="#000056" d="M763.2,196.6 753.6,208.9 771,217.7 782.4,206.4Z"/>
<path fill="#0000c3" d="M666,135.6 662.8,146.9 684.8,150.9 688,139.6Z"/>
<path fill="#0000d5" d="M731.2,151.5 728,162.8 749,170.6 752.2,159.3Z"/>
<path fill="#00005a" stroke="#00005a" d="M594.4,158.6 594.8,160.6 615.8,160.6 615.5,158.6Z"/>
<path class="e" d="M594.4,158.6L594.8,160.6M594.8,160.6L615.8,160.6M615.8,160.6L615.5,158.6"/>
<path fill="#00009f" stroke="#00009f" d="M594.6,154.1 594.2,156.2 615.6,156.2 615.9,154.1Z"/>
<path class="e" d="M594.6,154.1L594.2,156.2M615.6,156.2L615.9,154.1M615.9,154.1L594.6,154.1"/>
<path fill="#00007f" stroke="#00007f" d="M594.2,156.2 594.4,158.6 615.5,158.6 615.6,156.2Z"/>
<path class="e" d="M594.2,156.2L594.4,158.6M615.5,158.6L615.6,156.2"/>
<path fill="#0000ca" d="M688,139.6 684.8,150.9 706.6,156.3 709.8,144.9Z"/>
<path fill="#0000b2" d="M619.1,142.8 615.9,154.1 637.7,155.5 640.9,144.2Z"/>
<path fill="#0000d0" d="M709.8,144.9 706.6,156.3 728,162.8 731.2,151.5Z"/>
<path fill="#000056" d="M637.2,162 639.5,177.4 659,179.9 658.7,164.6Z"/>
<path fill="#000065" stroke="#000065" d="M783.6,204.9 782.4,206.4 800.5,217.2 801.9,215.7Z"/>
<path class="e" d="M783.6,204.9L782.4,206.4M782.4,206.4L800.5,217.2M800.5,217.2L801.9,215.7"/>
<path fill="#0000dc" stroke="#0000dc" d="M785.6,200.8 784.8,202.8 803.2,213.7 804.1,211.7Z"/>
<path class="e" d="M785.6,200.8L784.8,202.8M803.2,213.7L804.1,211.7M804.1,211.7L785.6,200.8"/>
<path fill="#0000e1" d="M769.3,179.5 766.1,190.8 785.6,200.8 788.8,189.5Z"/>
<path fill="#0000ac" stroke="#0000ac" d="M784.8,202.8 783.6,204.9 801.9,215.7 803.2,213.7Z"/>
<path class="e" d="M784.8,202.8L783.6,204.9M801.9,215.7L803.2,213.7"/>
<path fill="#000056" d="M743.3,187.9 735.6,200.9 753.6,208.9 763.2,196.6Z"/>
<path fill="#000056" d="M658.7,164.6 659,179.9 678.5,183.4 680.2,168.6Z"/>
<path fill="#000056" d="M722.7,180.3 717,194 735.6,200.9 743.3,187.9Z"/>
<path fill="#0000bb" d="M640.9,144.2 637.7,155.5 659.6,158.2 662.8,146.9Z"/>
<path fill="#000059" stroke="#000059" d="M615.5,158.6 615.8,160.6 637.2,162 637.1,160Z"/>
<path class="e" d="M615.5,158.6L615.8,160.6M615.8,160.6L637.2,162M637.2,162L637.1,160"/>
<path fill="#000056" d="M680.2,168.6 678.5,183.4 697.9,188.2 701.6,173.8Z"/>
<path fill="#000056" d="M701.6,173.8 697.9,188.2 717,194 722.7,180.3Z"/>
<path fill="#0000a8" stroke="#0000a8" d="M615.9,154.1 615.6,156.2 637.2,157.6 637.7,155.5Z"/>
<path class="e" d="M615.9,154.1L615.6,156.2M637.2,157.6L637.7,155.5M637.7,155.5L615.9,154.1"/>
<path fill="#0000db" d="M749,170.6 745.8,181.9 766.1,190.8 769.3,179.5Z"/>
<path fill="#000086" stroke="#000086" d="M615.6,156.2 615.5,158.6 637.1,160 637.2,157.6Z"/>
<path class="e" d="M615.6,156.2L615.5,158.6M637.1,160L637.2,157.6"/>
<path fill="#000064" stroke="#000064" d="M764.3,195 763.2,196.6 782.4,206.4 783.6,204.9Z"/>
<path class="e" d="M764.3,195L763.2,196.6M763.2,196.6L782.4,206.4M782.4,206.4L783.6,204.9"/>
<path fill="#0000d6" stroke="#0000d6" d="M766.1,190.8 765.4,192.9 784.8,202.8 785.6,200.8Z"/>
<path class="e" d="M766.1,190.8L765.4,192.9M784.8,202.8L785.6,200.8M785.6,200.8L766.1,190.8"/>
<path fill="#0000a8" stroke="#0000a8" d="M765.4,192.9 764.3,195 783.6,204.9 784.8,202.8Z"/>
<path class="e" d="M765.4,192.9L764.3,195M783.6,204.9L784.8,202.8"/>
<path fill="#0000c3" d="M662.8,146.9 659.6,158.2 681.6,162.2 684.8,150.9Z"/>
<path fill="#0000d5" d="M728,162.8 724.8,174.2 745.8,181.9 749,170.6Z"/>
<path fill="#0000ca" d="M684.8,150.9 681.6,162.2 703.4,167.6 706.6,156.3Z"/>
<path fill="#000058" stroke="#000058" d="M637.1,160 637.2,162 658.7,164.6 658.8,162.7Z"/>
<path class="e" d="M637.1,160L637.2,162M637.2,162L658.7,164.6M658.7,164.6L658.8,162.7"/>
<path fill="#0000d0" d="M706.6,156.3 703.4,167.6 724.8,174.2 728,162.8Z"/>
<path fill="#0000b1" stroke="#0000b1" d="M637.7,155.5 637.2,157.6 659.1,160.3 659.6,158.2Z"/>
<path class="e" d="M637.7,155.5L637.2,157.6M659.1,160.3L659.6,158.2M659.6,158.2L637.7,155.5"/>
<path fill="#00008c" stroke="#00008c" d="M637.2,157.6 637.1,160 658.8,162.7 659.1,160.3Z"/>
<path class="e" d="M637.2,157.6L637.1,160M658.8,162.7L659.1,160.3"/>
<path fill="#000062" stroke="#000062" d="M744.2,186.2 743.3,187.9 763.2,196.6 764.3,195Z"/>
<path class="e" d="M744.2,186.2L743.3,187.9M743.3,187.9L763.2,196.6M763.2,196.6L764.3,195"/>
<path fill="#0000d0" stroke="#0000d0" d="M745.8,181.9 745.1,184 765.4,192.9 766.1,190.8Z"/>
<path class="e" d="M745.8,181.9L745.1,184M765.4,192.9L766.1,190.8M766.1,190.8L745.8,181.9"/>
<path fill="#0000a4" stroke="#0000a4" d="M745.1,184 744.2,186.2 764.3,195 765.4,192.9Z"/>
<path class="e" d="M745.1,184L744.2,186.2M764.3,195L765.4,192.9"/>
<path fill="#00005b" stroke="#00005b" d="M658.8,162.7 658.7,164.6 680.2,168.6 680.5,166.7Z"/>
<path class="e" d="M658.8,162.7L658.7,164.6M658.7,164.6L680.2,168.6M680.2,168.6L680.5,166.7"/>
<path fill="#0000b9" stroke="#0000b9" d="M659.6,158.2 659.1,160.3 681,164.3 681.6,162.2Z"/>
<path class="e" d="M659.6,158.2L659.1,160.3M681,164.3L681.6,162.2M681.6,162.2L659.6,158.2"/>
<path fill="#000060" stroke="#000060" d="M723.4,178.5 722.7,180.3 743.3,187.9 744.2,186.2Z"/>
<path class="e" d="M723.4,178.5L722.7,180.3M722.7,180.3L743.3,187.9M743.3,187.9L744.2,186.2"/>
<path fill="#000091" stroke="#000091" d="M659.1,160.3 658.8,162.7 680.5,166.7 681,164.3Z"/>
<path class="e" d="M659.1,160.3L658.8,162.7M680.5,166.7L681,164.3"/>
<path fill="#0000ca" stroke="#0000ca" d="M724.8,174.2 724.2,176.2 745.1,184 745.8,181.9Z"/>
<path class="e" d="M724.8,174.2L724.2,176.2M745.1,184L745.8,181.9M745.8,181.9L724.8,174.2"/>
<path fill="#00009f" stroke="#00009f" d="M724.2,176.2 723.4,178.5 744.2,186.2 745.1,184Z"/>
<path class="e" d="M724.2,176.2L723.4,178.5M744.2,186.2L745.1,184"/>
<path fill="#00005c" stroke="#00005c" d="M680.5,166.7 680.2,168.6 701.6,173.8 702.2,171.9Z"/>
<path class="e" d="M680.5,166.7L680.2,168.6M680.2,168.6L701.6,173.8M701.6,173.8L702.2,171.9"/>
<path fill="#00005e" stroke="#00005e" d="M702.2,171.9 701.6,173.8 722.7,180.3 723.4,178.5Z"/>
<path class="e" d="M702.2,171.9L701.6,173.8M701.6,173.8L722.7,180.3M722.7,180.3L723.4,178.5"/>
<path fill="#0000bf" stroke="#0000bf" d="M681.6,162.2 681,164.3 702.8,169.7 703.4,167.6Z"/>
<path class="e" d="M681.6,162.2L681,164.3M702.8,169.7L703.4,167.6M703.4,167.6L681.6,162.2"/>
<path fill="#0000c5" stroke="#0000c5" d="M703.4,167.6 702.8,169.7 724.2,176.2 724.8,174.2Z"/>
<path class="e" d="M703.4,167.6L702.8,169.7M724.2,176.2L724.8,174.2M724.8,174.2L703.4,167.6"/>
<path fill="#000097" stroke="#000097" d="M681,164.3 680.5,166.7 702.2,171.9 702.8,169.7Z"/>
<path class="e" d="M681,164.3L680.5,166.7M702.2,171.9L702.8,169.7"/>
<path fill="#00009b" stroke="#00009b" d="M702.8,169.7 702.2,171.9 723.4,178.5 724.2,176.2Z"/>
<path class="e" d="M702.8,169.7L702.2,171.9M723.4,178.5L724.2,176.2"/>
<path fill="#1fa0e6" stroke="none" d="M546.4,307.2 545.1,308.7 544.1,310.5 543.2,312.5 542.5,314.8 541.9,317.2 541.5,319.7 541.2,322.5 541.2,325.7 541.2,325.7 542.5,324.2 543.5,322.4 544.4,320.3 545.1,318.1 545.7,315.7 546.1,313.1 546.4,310.4 546.4,307.2 Z"/>
<path fill="#00dcf0" stroke="none" d="M545.5,309.1 544.8,310 544.3,311 543.9,312.2 543.5,313.5 543.1,314.8 542.9,316.2 542.6,317.7 542.6,319.4 542.6,319.4 543.3,318.5 543.8,317.4 544.3,316.3 544.7,315 545,313.7 545.3,312.3 545.5,310.8 545.5,309.1 Z"/>
<path fill="#1fa0e6" stroke="none" d="M616.6,359.5 614.7,361.2 613.5,363.3 612.4,365.4 611.6,367.7 611.1,370 610.8,372.5 610.8,375.1 611.4,377.9 611.4,377.9 613.2,376.2 614.5,374.1 615.5,372 616.3,369.7 616.9,367.4 617.1,364.9 617.1,362.3 616.6,359.5 Z"/>
<path fill="#00dcf0" stroke="none" d="M615.5,361.5 614.6,362.5 613.9,363.7 613.4,364.9 612.9,366.2 612.6,367.5 612.4,368.9 612.4,370.3 612.6,371.8 612.6,371.8 613.5,370.8 614.1,369.6 614.7,368.4 615.1,367.1 615.4,365.8 615.6,364.4 615.7,363 615.5,361.5 Z"/>
<path fill="#1488c8" stroke="none" d="M705,381.4 702.9,384.3 701.4,387.2 700.2,390.2 699.2,393.1 698.5,396.1 698,399 697.9,402 698.3,405 698.3,405 700.4,402.1 702,399.2 703.2,396.2 704.2,393.2 704.9,390.3 705.3,387.3 705.5,384.4 705,381.4 Z"/>
<path fill="#10b0c8" stroke="none" d="M703.5,385 702.7,386.1 702.1,387.2 701.6,388.3 701.3,389.5 701,390.6 700.8,391.7 700.8,392.8 701,393.9 701,393.9 701.8,392.8 702.3,391.7 702.8,390.6 703.2,389.5 703.4,388.4 703.6,387.3 703.6,386.2 703.5,385 Z"/>
<path fill="#3a78c8" stroke="none" d="M783.7,367.1 782.4,370.3 781.3,373.3 780.3,376.4 779.4,379.4 778.6,382.3 777.9,385.2 777.4,388 777,390.7 777,390.7 778.2,387.5 779.3,384.4 780.3,381.4 781.2,378.4 782,375.5 782.7,372.6 783.3,369.8 783.7,367.1 Z"/>
</g></svg>
</body></html>
